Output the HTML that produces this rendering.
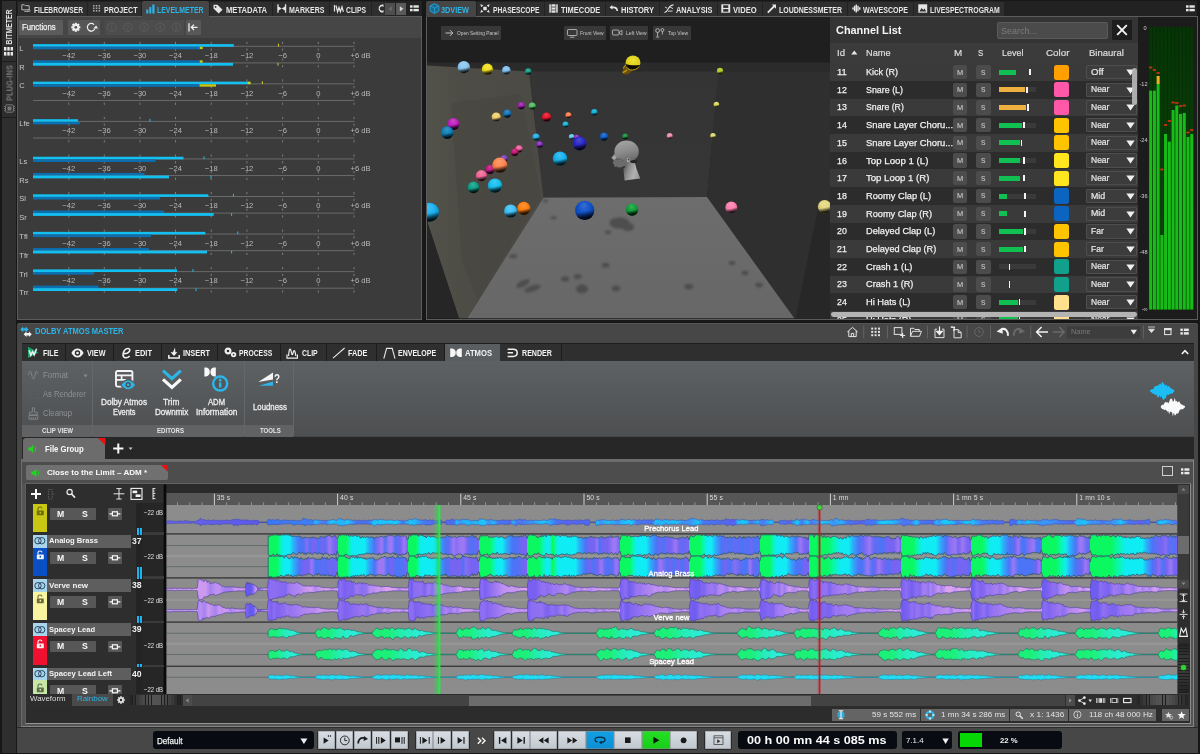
<!DOCTYPE html>
<html lang="en"><head><meta charset="utf-8"><title>WaveLab - Dolby Atmos Master</title>
<style>
html,body{margin:0;padding:0;background:#171717;}
body{width:1200px;height:754px;position:relative;overflow:hidden;font-family:"Liberation Sans",sans-serif;}
div,svg{position:absolute;}
svg{overflow:visible;display:block;}
.t{white-space:nowrap;}
svg text{font-family:"Liberation Sans",sans-serif;}
.g{will-change:transform;}
</style></head>
<body>
<div class="g" style="left:0;top:0;width:1200px;height:754px;overflow:hidden">
<!-- part_head -->
<div style="left:0px;top:0px;width:1200px;height:754px;background:#171717;"></div>
<div style="left:2.4px;top:1px;width:14px;height:752px;background:#2e2e2e;"></div>
<div style="left:2px;top:61px;width:14px;height:1px;background:#1c1c1c;"></div>
<div style="left:2px;top:117px;width:14px;height:1px;background:#1c1c1c;"></div>
<div class="t g" style="left:-13.7px;top:20.5px;width:46px;height:12px;line-height:12px;font-size:9px;font-weight:bold;color:#e0e0e0;transform:rotate(-90deg) scaleX(0.761);">BITMETER</div>
<div class="t g" style="left:-12.2px;top:77px;width:43px;height:12px;line-height:12px;font-size:9px;font-weight:bold;color:#777;transform:rotate(-90deg) scaleX(0.837);">PLUG-INS</div>
<svg style="left:4.2px;top:47px;" width="10" height="9" viewBox="0 0 10 9"><rect x="0.0" y="0" width="2.4" height="3.6" fill="#e8e8e8"/><rect x="3.3" y="0" width="2.4" height="3.6" fill="#e8e8e8"/><rect x="6.6" y="0" width="2.4" height="3.6" fill="#e8e8e8"/><rect x="0.0" y="5" width="2.4" height="3.6" fill="#e8e8e8"/><rect x="3.3" y="5" width="2.4" height="3.6" fill="#e8e8e8"/><rect x="6.6" y="5" width="2.4" height="3.6" fill="#e8e8e8"/></svg>
<svg style="left:3.5px;top:104px;" width="11" height="9" viewBox="0 0 11 9"><rect x="1.5" y="0.8" width="8" height="7.4" rx="1.5" fill="none" stroke="#777" stroke-width="1"/><rect x="3.5" y="2.5" width="4" height="4" fill="#777"/><path d="M0 2.5h1.5M0 4.5h1.5M0 6.5h1.5M9.5 2.5H11M9.5 4.5H11M9.5 6.5H11" stroke="#777" stroke-width="0.8"/></svg>
<!-- part_tl -->
<div style="left:17px;top:1px;width:405px;height:15px;background:#222;"></div>
<div style="left:17px;top:16px;width:405px;height:304px;background:#3b3b3b;border:1px solid #5c5c5c;box-sizing:border-box;"></div>
<div style="left:18px;top:17px;width:403px;height:20.5px;background:#464646;"></div>
<div style="left:18px;top:2px;width:69px;height:13.5px;background:#2e2e2e;"></div><svg style="left:20.5px;top:4.4px;" width="10" height="10" viewBox="0 0 10 10"><path d="M0.8 5.8V0.8h2.6l0.8 0.9h4v4.1z" fill="none" stroke="#b4b4b4" stroke-width="1"/><path d="M3.2 7.4h4" stroke="#b4b4b4" stroke-width="0.9"/><circle cx="8" cy="6.6" r="1.1" fill="none" stroke="#b4b4b4" stroke-width="0.8"/></svg><div class="t" style="left:33.5px;top:4.5px;height:11px;line-height:11px;font-size:9px;color:#e6e6e6;font-weight:bold;transform:scaleX(0.737);transform-origin:0 50%;">FILEBROWSER</div>
<div style="left:88px;top:2px;width:52.5px;height:13.5px;background:#2e2e2e;"></div><svg style="left:92.6px;top:5.4px;" width="9" height="9" viewBox="0 0 9 9"><rect x="0.0" y="0.0" width="1.5" height="1.6" fill="#a8a8a8"/><rect x="2.8" y="0.0" width="1.5" height="1.6" fill="#a8a8a8"/><rect x="5.6" y="0.0" width="1.5" height="1.6" fill="#a8a8a8"/><rect x="0.0" y="2.5" width="1.5" height="1.6" fill="#a8a8a8"/><rect x="2.8" y="2.5" width="1.5" height="1.6" fill="#a8a8a8"/><rect x="5.6" y="2.5" width="1.5" height="1.6" fill="#a8a8a8"/><rect x="0.0" y="5.0" width="1.5" height="1.6" fill="#a8a8a8"/><rect x="2.8" y="5.0" width="1.5" height="1.6" fill="#a8a8a8"/><rect x="5.6" y="5.0" width="1.5" height="1.6" fill="#a8a8a8"/></svg><div class="t" style="left:103.5px;top:4.5px;height:11px;line-height:11px;font-size:9px;color:#e6e6e6;font-weight:bold;transform:scaleX(0.788);transform-origin:0 50%;">PROJECT</div>
<div style="left:141.5px;top:1px;width:67.5px;height:16px;background:#464646;border-radius:2px 2px 0 0;"></div><svg style="left:146px;top:3.5px;" width="9" height="10" viewBox="0 0 9 10"><rect x="0.3" y="5.5" width="2" height="4" fill="#2cb5e8"/><rect x="3.3" y="3" width="2" height="6.5" fill="#2cb5e8"/><rect x="6.3" y="0.5" width="2.2" height="9" fill="#2cb5e8"/></svg><div class="t" style="left:157.3px;top:4.5px;height:11px;line-height:11px;font-size:9px;color:#2cb5e8;font-weight:bold;transform:scaleX(0.769);transform-origin:0 50%;">LEVELMETER</div>
<div style="left:210px;top:2px;width:62px;height:13.5px;background:#2e2e2e;"></div><svg style="left:213px;top:3.5px;" width="10" height="10" viewBox="0 0 10 10"><path d="M0.5 0.8h4l5 5-3.8 3.8-5.2-5z" fill="#e6e6e6"/><circle cx="2.6" cy="2.9" r="0.9" fill="#2e2e2e"/></svg><div class="t" style="left:225.5px;top:4.5px;height:11px;line-height:11px;font-size:9px;color:#e6e6e6;font-weight:bold;transform:scaleX(0.846);transform-origin:0 50%;">METADATA</div>
<div style="left:273px;top:2px;width:56px;height:13.5px;background:#2e2e2e;"></div><svg style="left:277px;top:4px;" width="9.5" height="9" viewBox="0 0 9.5 9"><path d="M0.3 0.3v8.4h1.3V6.6L4.75 4.5 7.9 6.6v2.1h1.3V0.3H7.9v2.1L4.75 4.5 1.6 2.4V0.3z" fill="#e6e6e6"/></svg><div class="t" style="left:288.7px;top:4.5px;height:11px;line-height:11px;font-size:9px;color:#e6e6e6;font-weight:bold;transform:scaleX(0.780);transform-origin:0 50%;">MARKERS</div>
<div style="left:330px;top:2px;width:41px;height:13.5px;background:#2e2e2e;"></div><svg style="left:333.5px;top:4px;" width="10" height="9" viewBox="0 0 10 9"><path d="M0.5 1v6.5M2 1.5l1.6 6.3L5 3.5l1.4 4.3L8 2.8l1.4 5" fill="none" stroke="#e6e6e6" stroke-width="1.2"/></svg><div class="t" style="left:345.7px;top:4.5px;height:11px;line-height:11px;font-size:9px;color:#e6e6e6;font-weight:bold;transform:scaleX(0.755);transform-origin:0 50%;">CLIPS</div>
<div style="left:372px;top:2px;width:14px;height:13.5px;background:#2e2e2e;"></div>
<svg style="left:376px;top:4px;" width="8" height="9" viewBox="0 0 8 9"><path d="M7.5 0.6A4 4 0 1 0 7.5 8.4V6A2.2 2.2 0 1 1 7.5 3z" fill="#e6e6e6"/></svg>
<div style="left:384.5px;top:3px;width:10.5px;height:11.5px;background:#4e4e4e;"></div>
<div style="left:395.5px;top:3px;width:10.5px;height:11.5px;background:#5a5a5a;"></div>
<svg style="left:384.5px;top:3px;" width="21.5" height="11.5" viewBox="0 0 21.5 11.5"><path d="M6.8 3.2v5.2L3.4 5.8z" fill="#6a6a6a"/><path d="M14.8 3.2v5.2l3.6-2.6z" fill="#d8d8d8"/></svg>
<svg style="left:410px;top:5px;" width="9" height="7" viewBox="0 0 9 7"><rect x="0" y="0.3" width="2.6" height="2.4" fill="#e6e6e6"/><rect x="3.4" y="0.3" width="5.4" height="2.4" fill="#e6e6e6"/><rect x="0" y="3.9" width="2.6" height="2.4" fill="#e6e6e6"/><rect x="3.4" y="3.9" width="5.4" height="2.4" fill="#e6e6e6"/></svg>
<div style="left:19px;top:20px;width:43.5px;height:14.5px;background:#5b5b5b;border-radius:1px;"></div>
<div class="t" style="left:21.6px;top:21.8px;height:11px;line-height:11px;font-size:9px;color:#f0f0f0;transform:scaleX(0.861);transform-origin:0 50%;-webkit-text-stroke:0.25px #f0f0f0;">Functions</div>
<div style="left:67.5px;top:20px;width:32px;height:14.5px;background:#565656;border-radius:1px;"></div>
<svg style="left:67.5px;top:20px;" width="32" height="14.5" viewBox="0 0 32 14.5"><g transform="translate(7.8,7.3) scale(1.08)"><rect x="-1" y="-4.2" width="2" height="8.4" fill="#f0f0f0" transform="rotate(0)"/><rect x="-1" y="-4.2" width="2" height="8.4" fill="#f0f0f0" transform="rotate(45)"/><rect x="-1" y="-4.2" width="2" height="8.4" fill="#f0f0f0" transform="rotate(90)"/><rect x="-1" y="-4.2" width="2" height="8.4" fill="#f0f0f0" transform="rotate(135)"/><circle r="3" fill="#f0f0f0"/><circle r="1.3" fill="#565656"/></g><g transform="translate(23.2,7.3) scale(1.1)"><path d="M2.6 -2.4A3.5 3.5 0 1 0 3.3 1.2" fill="none" stroke="#f0f0f0" stroke-width="1.1"/><path d="M1.2 -0.6h4.2v-0.2L3.9 -3.2z" fill="#f0f0f0" transform="translate(0.6,1.6)"/></g></svg>
<div style="left:105px;top:20px;width:79px;height:14.5px;background:#4c4c4c;border-radius:1px;"></div>
<svg class="g" style="left:105px;top:20px;" width="79" height="14.5" viewBox="0 0 79 14.5"><circle cx="6.799999999999997" cy="7.3" r="4.3" fill="none" stroke="#5e5e5e" stroke-width="0.9"/><text x="6.799999999999997" y="9.6" font-size="6.5" fill="#5e5e5e" text-anchor="middle" font-family="Liberation Sans, sans-serif">1</text><circle cx="22.900000000000006" cy="7.3" r="4.3" fill="none" stroke="#5e5e5e" stroke-width="0.9"/><text x="22.900000000000006" y="9.6" font-size="6.5" fill="#5e5e5e" text-anchor="middle" font-family="Liberation Sans, sans-serif">2</text><circle cx="39.099999999999994" cy="7.3" r="4.3" fill="none" stroke="#5e5e5e" stroke-width="0.9"/><text x="39.099999999999994" y="9.6" font-size="6.5" fill="#5e5e5e" text-anchor="middle" font-family="Liberation Sans, sans-serif">3</text><circle cx="55.19999999999999" cy="7.3" r="4.3" fill="none" stroke="#5e5e5e" stroke-width="0.9"/><text x="55.19999999999999" y="9.6" font-size="6.5" fill="#5e5e5e" text-anchor="middle" font-family="Liberation Sans, sans-serif">4</text><circle cx="71.4" cy="7.3" r="4.3" fill="none" stroke="#5e5e5e" stroke-width="0.9"/><text x="71.4" y="9.6" font-size="6.5" fill="#5e5e5e" text-anchor="middle" font-family="Liberation Sans, sans-serif">5</text></svg>
<div style="left:186px;top:20px;width:14.5px;height:14.5px;background:#585858;border-radius:1px;"></div>
<svg style="left:186px;top:20px;" width="14.5" height="14.5" viewBox="0 0 14.5 14.5"><path d="M3 3.2v8.2" stroke="#f0f0f0" stroke-width="1.3"/><path d="M11.5 7.3H5.6M8 4.6L5.3 7.3 8 10" stroke="#f0f0f0" stroke-width="1.3" fill="none"/></svg>
<svg class="g" style="left:0;top:0" width="422" height="319" viewBox="0 0 422 319" font-family="Liberation Sans, sans-serif"><rect x="33" y="45.8" width="321.5" height="1" fill="#6a6a6a"/><rect x="68.3" y="41.8" width="1" height="2.2" fill="#7c7c7c"/><rect x="68.3" y="48.5" width="1" height="2.2" fill="#7c7c7c"/><rect x="103.8" y="41.8" width="1" height="2.2" fill="#7c7c7c"/><rect x="103.8" y="48.5" width="1" height="2.2" fill="#7c7c7c"/><rect x="139.4" y="41.8" width="1" height="2.2" fill="#7c7c7c"/><rect x="139.4" y="48.5" width="1" height="2.2" fill="#7c7c7c"/><rect x="175" y="41.8" width="1" height="2.2" fill="#7c7c7c"/><rect x="175" y="48.5" width="1" height="2.2" fill="#7c7c7c"/><rect x="210.7" y="41.8" width="1" height="2.2" fill="#7c7c7c"/><rect x="210.7" y="48.5" width="1" height="2.2" fill="#7c7c7c"/><rect x="246.4" y="41.8" width="1" height="2.2" fill="#7c7c7c"/><rect x="246.4" y="48.5" width="1" height="2.2" fill="#7c7c7c"/><rect x="282.1" y="41.8" width="1" height="2.2" fill="#7c7c7c"/><rect x="282.1" y="48.5" width="1" height="2.2" fill="#7c7c7c"/><rect x="317.8" y="41.8" width="1" height="2.2" fill="#7c7c7c"/><rect x="317.8" y="48.5" width="1" height="2.2" fill="#7c7c7c"/><rect x="353.5" y="41.8" width="1" height="2.2" fill="#7c7c7c"/><rect x="353.5" y="48.5" width="1" height="2.2" fill="#7c7c7c"/><text x="68.8" y="58.1" font-size="7.6" fill="#b8b8b8" text-anchor="middle">−42</text><text x="104.3" y="58.1" font-size="7.6" fill="#b8b8b8" text-anchor="middle">−36</text><text x="139.9" y="58.1" font-size="7.6" fill="#b8b8b8" text-anchor="middle">−30</text><text x="175.5" y="58.1" font-size="7.6" fill="#b8b8b8" text-anchor="middle">−24</text><text x="211.2" y="58.1" font-size="7.6" fill="#b8b8b8" text-anchor="middle">−18</text><text x="246.9" y="58.1" font-size="7.6" fill="#b8b8b8" text-anchor="middle">−12</text><text x="282.6" y="58.1" font-size="7.6" fill="#b8b8b8" text-anchor="middle">−6</text><text x="318.3" y="58.1" font-size="7.6" fill="#b8b8b8" text-anchor="middle">0</text><text x="350.5" y="58.1" font-size="7.6" fill="#b8b8b8">+6 dB</text><rect x="33" y="62.4" width="321.5" height="1" fill="#6a6a6a"/><rect x="68.3" y="58.4" width="1" height="2.2" fill="#7c7c7c"/><rect x="68.3" y="65.1" width="1" height="2.2" fill="#7c7c7c"/><rect x="103.8" y="58.4" width="1" height="2.2" fill="#7c7c7c"/><rect x="103.8" y="65.1" width="1" height="2.2" fill="#7c7c7c"/><rect x="139.4" y="58.4" width="1" height="2.2" fill="#7c7c7c"/><rect x="139.4" y="65.1" width="1" height="2.2" fill="#7c7c7c"/><rect x="175" y="58.4" width="1" height="2.2" fill="#7c7c7c"/><rect x="175" y="65.1" width="1" height="2.2" fill="#7c7c7c"/><rect x="210.7" y="58.4" width="1" height="2.2" fill="#7c7c7c"/><rect x="210.7" y="65.1" width="1" height="2.2" fill="#7c7c7c"/><rect x="246.4" y="58.4" width="1" height="2.2" fill="#7c7c7c"/><rect x="246.4" y="65.1" width="1" height="2.2" fill="#7c7c7c"/><rect x="282.1" y="58.4" width="1" height="2.2" fill="#7c7c7c"/><rect x="282.1" y="65.1" width="1" height="2.2" fill="#7c7c7c"/><rect x="317.8" y="58.4" width="1" height="2.2" fill="#7c7c7c"/><rect x="317.8" y="65.1" width="1" height="2.2" fill="#7c7c7c"/><rect x="353.5" y="58.4" width="1" height="2.2" fill="#7c7c7c"/><rect x="353.5" y="65.1" width="1" height="2.2" fill="#7c7c7c"/><rect x="33" y="44.1" width="200.8" height="2.6" fill="#12c0f2"/><rect x="33" y="46.7" width="166.7" height="2.6" fill="#0b6fb0"/><rect x="199.7" y="46.7" width="3" height="2.4" fill="#c8c814"/><rect x="278" y="43.7" width="1" height="2.8" fill="#d8c820"/><rect x="33" y="60.3" width="166.7" height="2.6" fill="#0b6fb0"/><rect x="33" y="62.9" width="200" height="2.8" fill="#12c0f2"/><rect x="199.7" y="60.3" width="3" height="2.4" fill="#c8c814"/><rect x="277.5" y="62.9" width="1" height="2.8" fill="#d8c820"/><rect x="33" y="83.35" width="321.5" height="1" fill="#6a6a6a"/><rect x="68.3" y="79.35" width="1" height="2.2" fill="#7c7c7c"/><rect x="68.3" y="86.05" width="1" height="2.2" fill="#7c7c7c"/><rect x="103.8" y="79.35" width="1" height="2.2" fill="#7c7c7c"/><rect x="103.8" y="86.05" width="1" height="2.2" fill="#7c7c7c"/><rect x="139.4" y="79.35" width="1" height="2.2" fill="#7c7c7c"/><rect x="139.4" y="86.05" width="1" height="2.2" fill="#7c7c7c"/><rect x="175" y="79.35" width="1" height="2.2" fill="#7c7c7c"/><rect x="175" y="86.05" width="1" height="2.2" fill="#7c7c7c"/><rect x="210.7" y="79.35" width="1" height="2.2" fill="#7c7c7c"/><rect x="210.7" y="86.05" width="1" height="2.2" fill="#7c7c7c"/><rect x="246.4" y="79.35" width="1" height="2.2" fill="#7c7c7c"/><rect x="246.4" y="86.05" width="1" height="2.2" fill="#7c7c7c"/><rect x="282.1" y="79.35" width="1" height="2.2" fill="#7c7c7c"/><rect x="282.1" y="86.05" width="1" height="2.2" fill="#7c7c7c"/><rect x="317.8" y="79.35" width="1" height="2.2" fill="#7c7c7c"/><rect x="317.8" y="86.05" width="1" height="2.2" fill="#7c7c7c"/><rect x="353.5" y="79.35" width="1" height="2.2" fill="#7c7c7c"/><rect x="353.5" y="86.05" width="1" height="2.2" fill="#7c7c7c"/><text x="68.8" y="95.65" font-size="7.6" fill="#b8b8b8" text-anchor="middle">−42</text><text x="104.3" y="95.65" font-size="7.6" fill="#b8b8b8" text-anchor="middle">−36</text><text x="139.9" y="95.65" font-size="7.6" fill="#b8b8b8" text-anchor="middle">−30</text><text x="175.5" y="95.65" font-size="7.6" fill="#b8b8b8" text-anchor="middle">−24</text><text x="211.2" y="95.65" font-size="7.6" fill="#b8b8b8" text-anchor="middle">−18</text><text x="246.9" y="95.65" font-size="7.6" fill="#b8b8b8" text-anchor="middle">−12</text><text x="282.6" y="95.65" font-size="7.6" fill="#b8b8b8" text-anchor="middle">−6</text><text x="318.3" y="95.65" font-size="7.6" fill="#b8b8b8" text-anchor="middle">0</text><text x="350.5" y="95.65" font-size="7.6" fill="#b8b8b8">+6 dB</text><rect x="33" y="99.95" width="321.5" height="1" fill="#6a6a6a"/><rect x="68.3" y="95.95" width="1" height="2.2" fill="#7c7c7c"/><rect x="68.3" y="102.65" width="1" height="2.2" fill="#7c7c7c"/><rect x="103.8" y="95.95" width="1" height="2.2" fill="#7c7c7c"/><rect x="103.8" y="102.65" width="1" height="2.2" fill="#7c7c7c"/><rect x="139.4" y="95.95" width="1" height="2.2" fill="#7c7c7c"/><rect x="139.4" y="102.65" width="1" height="2.2" fill="#7c7c7c"/><rect x="175" y="95.95" width="1" height="2.2" fill="#7c7c7c"/><rect x="175" y="102.65" width="1" height="2.2" fill="#7c7c7c"/><rect x="210.7" y="95.95" width="1" height="2.2" fill="#7c7c7c"/><rect x="210.7" y="102.65" width="1" height="2.2" fill="#7c7c7c"/><rect x="246.4" y="95.95" width="1" height="2.2" fill="#7c7c7c"/><rect x="246.4" y="102.65" width="1" height="2.2" fill="#7c7c7c"/><rect x="282.1" y="95.95" width="1" height="2.2" fill="#7c7c7c"/><rect x="282.1" y="102.65" width="1" height="2.2" fill="#7c7c7c"/><rect x="317.8" y="95.95" width="1" height="2.2" fill="#7c7c7c"/><rect x="317.8" y="102.65" width="1" height="2.2" fill="#7c7c7c"/><rect x="353.5" y="95.95" width="1" height="2.2" fill="#7c7c7c"/><rect x="353.5" y="102.65" width="1" height="2.2" fill="#7c7c7c"/><rect x="33" y="81.65" width="214.4" height="2.6" fill="#12c0f2"/><rect x="33" y="84.25" width="166.5" height="2.6" fill="#0b6fb0"/><rect x="247.4" y="81.65" width="3.2" height="2.6" fill="#b4e020"/><rect x="199.5" y="84.25" width="16.5" height="2.4" fill="#c8c814"/><rect x="261.8" y="81.25" width="1" height="2.8" fill="#d8d820"/><rect x="33" y="120.9" width="321.5" height="1" fill="#6a6a6a"/><rect x="68.3" y="116.9" width="1" height="2.2" fill="#7c7c7c"/><rect x="68.3" y="123.6" width="1" height="2.2" fill="#7c7c7c"/><rect x="103.8" y="116.9" width="1" height="2.2" fill="#7c7c7c"/><rect x="103.8" y="123.6" width="1" height="2.2" fill="#7c7c7c"/><rect x="139.4" y="116.9" width="1" height="2.2" fill="#7c7c7c"/><rect x="139.4" y="123.6" width="1" height="2.2" fill="#7c7c7c"/><rect x="175" y="116.9" width="1" height="2.2" fill="#7c7c7c"/><rect x="175" y="123.6" width="1" height="2.2" fill="#7c7c7c"/><rect x="210.7" y="116.9" width="1" height="2.2" fill="#7c7c7c"/><rect x="210.7" y="123.6" width="1" height="2.2" fill="#7c7c7c"/><rect x="246.4" y="116.9" width="1" height="2.2" fill="#7c7c7c"/><rect x="246.4" y="123.6" width="1" height="2.2" fill="#7c7c7c"/><rect x="282.1" y="116.9" width="1" height="2.2" fill="#7c7c7c"/><rect x="282.1" y="123.6" width="1" height="2.2" fill="#7c7c7c"/><rect x="317.8" y="116.9" width="1" height="2.2" fill="#7c7c7c"/><rect x="317.8" y="123.6" width="1" height="2.2" fill="#7c7c7c"/><rect x="353.5" y="116.9" width="1" height="2.2" fill="#7c7c7c"/><rect x="353.5" y="123.6" width="1" height="2.2" fill="#7c7c7c"/><text x="68.8" y="133.2" font-size="7.6" fill="#b8b8b8" text-anchor="middle">−42</text><text x="104.3" y="133.2" font-size="7.6" fill="#b8b8b8" text-anchor="middle">−36</text><text x="139.9" y="133.2" font-size="7.6" fill="#b8b8b8" text-anchor="middle">−30</text><text x="175.5" y="133.2" font-size="7.6" fill="#b8b8b8" text-anchor="middle">−24</text><text x="211.2" y="133.2" font-size="7.6" fill="#b8b8b8" text-anchor="middle">−18</text><text x="246.9" y="133.2" font-size="7.6" fill="#b8b8b8" text-anchor="middle">−12</text><text x="282.6" y="133.2" font-size="7.6" fill="#b8b8b8" text-anchor="middle">−6</text><text x="318.3" y="133.2" font-size="7.6" fill="#b8b8b8" text-anchor="middle">0</text><text x="350.5" y="133.2" font-size="7.6" fill="#b8b8b8">+6 dB</text><rect x="33" y="137.5" width="321.5" height="1" fill="#6a6a6a"/><rect x="68.3" y="133.5" width="1" height="2.2" fill="#7c7c7c"/><rect x="68.3" y="140.2" width="1" height="2.2" fill="#7c7c7c"/><rect x="103.8" y="133.5" width="1" height="2.2" fill="#7c7c7c"/><rect x="103.8" y="140.2" width="1" height="2.2" fill="#7c7c7c"/><rect x="139.4" y="133.5" width="1" height="2.2" fill="#7c7c7c"/><rect x="139.4" y="140.2" width="1" height="2.2" fill="#7c7c7c"/><rect x="175" y="133.5" width="1" height="2.2" fill="#7c7c7c"/><rect x="175" y="140.2" width="1" height="2.2" fill="#7c7c7c"/><rect x="210.7" y="133.5" width="1" height="2.2" fill="#7c7c7c"/><rect x="210.7" y="140.2" width="1" height="2.2" fill="#7c7c7c"/><rect x="246.4" y="133.5" width="1" height="2.2" fill="#7c7c7c"/><rect x="246.4" y="140.2" width="1" height="2.2" fill="#7c7c7c"/><rect x="282.1" y="133.5" width="1" height="2.2" fill="#7c7c7c"/><rect x="282.1" y="140.2" width="1" height="2.2" fill="#7c7c7c"/><rect x="317.8" y="133.5" width="1" height="2.2" fill="#7c7c7c"/><rect x="317.8" y="140.2" width="1" height="2.2" fill="#7c7c7c"/><rect x="353.5" y="133.5" width="1" height="2.2" fill="#7c7c7c"/><rect x="353.5" y="140.2" width="1" height="2.2" fill="#7c7c7c"/><rect x="33" y="119.2" width="45" height="2.6" fill="#12c0f2"/><rect x="33" y="121.8" width="46.8" height="2.6" fill="#0b6fb0"/><rect x="149.5" y="118.8" width="1" height="2.8" fill="#12c0f2"/><rect x="33" y="158.45" width="321.5" height="1" fill="#6a6a6a"/><rect x="68.3" y="154.45" width="1" height="2.2" fill="#7c7c7c"/><rect x="68.3" y="161.15" width="1" height="2.2" fill="#7c7c7c"/><rect x="103.8" y="154.45" width="1" height="2.2" fill="#7c7c7c"/><rect x="103.8" y="161.15" width="1" height="2.2" fill="#7c7c7c"/><rect x="139.4" y="154.45" width="1" height="2.2" fill="#7c7c7c"/><rect x="139.4" y="161.15" width="1" height="2.2" fill="#7c7c7c"/><rect x="175" y="154.45" width="1" height="2.2" fill="#7c7c7c"/><rect x="175" y="161.15" width="1" height="2.2" fill="#7c7c7c"/><rect x="210.7" y="154.45" width="1" height="2.2" fill="#7c7c7c"/><rect x="210.7" y="161.15" width="1" height="2.2" fill="#7c7c7c"/><rect x="246.4" y="154.45" width="1" height="2.2" fill="#7c7c7c"/><rect x="246.4" y="161.15" width="1" height="2.2" fill="#7c7c7c"/><rect x="282.1" y="154.45" width="1" height="2.2" fill="#7c7c7c"/><rect x="282.1" y="161.15" width="1" height="2.2" fill="#7c7c7c"/><rect x="317.8" y="154.45" width="1" height="2.2" fill="#7c7c7c"/><rect x="317.8" y="161.15" width="1" height="2.2" fill="#7c7c7c"/><rect x="353.5" y="154.45" width="1" height="2.2" fill="#7c7c7c"/><rect x="353.5" y="161.15" width="1" height="2.2" fill="#7c7c7c"/><text x="68.8" y="170.75" font-size="7.6" fill="#b8b8b8" text-anchor="middle">−42</text><text x="104.3" y="170.75" font-size="7.6" fill="#b8b8b8" text-anchor="middle">−36</text><text x="139.9" y="170.75" font-size="7.6" fill="#b8b8b8" text-anchor="middle">−30</text><text x="175.5" y="170.75" font-size="7.6" fill="#b8b8b8" text-anchor="middle">−24</text><text x="211.2" y="170.75" font-size="7.6" fill="#b8b8b8" text-anchor="middle">−18</text><text x="246.9" y="170.75" font-size="7.6" fill="#b8b8b8" text-anchor="middle">−12</text><text x="282.6" y="170.75" font-size="7.6" fill="#b8b8b8" text-anchor="middle">−6</text><text x="318.3" y="170.75" font-size="7.6" fill="#b8b8b8" text-anchor="middle">0</text><text x="350.5" y="170.75" font-size="7.6" fill="#b8b8b8">+6 dB</text><rect x="33" y="175.05" width="321.5" height="1" fill="#6a6a6a"/><rect x="68.3" y="171.05" width="1" height="2.2" fill="#7c7c7c"/><rect x="68.3" y="177.75" width="1" height="2.2" fill="#7c7c7c"/><rect x="103.8" y="171.05" width="1" height="2.2" fill="#7c7c7c"/><rect x="103.8" y="177.75" width="1" height="2.2" fill="#7c7c7c"/><rect x="139.4" y="171.05" width="1" height="2.2" fill="#7c7c7c"/><rect x="139.4" y="177.75" width="1" height="2.2" fill="#7c7c7c"/><rect x="175" y="171.05" width="1" height="2.2" fill="#7c7c7c"/><rect x="175" y="177.75" width="1" height="2.2" fill="#7c7c7c"/><rect x="210.7" y="171.05" width="1" height="2.2" fill="#7c7c7c"/><rect x="210.7" y="177.75" width="1" height="2.2" fill="#7c7c7c"/><rect x="246.4" y="171.05" width="1" height="2.2" fill="#7c7c7c"/><rect x="246.4" y="177.75" width="1" height="2.2" fill="#7c7c7c"/><rect x="282.1" y="171.05" width="1" height="2.2" fill="#7c7c7c"/><rect x="282.1" y="177.75" width="1" height="2.2" fill="#7c7c7c"/><rect x="317.8" y="171.05" width="1" height="2.2" fill="#7c7c7c"/><rect x="317.8" y="177.75" width="1" height="2.2" fill="#7c7c7c"/><rect x="353.5" y="171.05" width="1" height="2.2" fill="#7c7c7c"/><rect x="353.5" y="177.75" width="1" height="2.2" fill="#7c7c7c"/><rect x="33" y="156.75" width="150.5" height="2.6" fill="#12c0f2"/><rect x="33" y="159.35" width="122.5" height="2.6" fill="#0b6fb0"/><rect x="203.5" y="156.35" width="1" height="2.8" fill="#12c0f2"/><rect x="33" y="172.95" width="111.5" height="2.6" fill="#0b6fb0"/><rect x="33" y="175.55" width="136" height="2.8" fill="#12c0f2"/><rect x="210.5" y="175.55" width="1" height="2.8" fill="#12c0f2"/><rect x="33" y="196" width="321.5" height="1" fill="#6a6a6a"/><rect x="68.3" y="192" width="1" height="2.2" fill="#7c7c7c"/><rect x="68.3" y="198.7" width="1" height="2.2" fill="#7c7c7c"/><rect x="103.8" y="192" width="1" height="2.2" fill="#7c7c7c"/><rect x="103.8" y="198.7" width="1" height="2.2" fill="#7c7c7c"/><rect x="139.4" y="192" width="1" height="2.2" fill="#7c7c7c"/><rect x="139.4" y="198.7" width="1" height="2.2" fill="#7c7c7c"/><rect x="175" y="192" width="1" height="2.2" fill="#7c7c7c"/><rect x="175" y="198.7" width="1" height="2.2" fill="#7c7c7c"/><rect x="210.7" y="192" width="1" height="2.2" fill="#7c7c7c"/><rect x="210.7" y="198.7" width="1" height="2.2" fill="#7c7c7c"/><rect x="246.4" y="192" width="1" height="2.2" fill="#7c7c7c"/><rect x="246.4" y="198.7" width="1" height="2.2" fill="#7c7c7c"/><rect x="282.1" y="192" width="1" height="2.2" fill="#7c7c7c"/><rect x="282.1" y="198.7" width="1" height="2.2" fill="#7c7c7c"/><rect x="317.8" y="192" width="1" height="2.2" fill="#7c7c7c"/><rect x="317.8" y="198.7" width="1" height="2.2" fill="#7c7c7c"/><rect x="353.5" y="192" width="1" height="2.2" fill="#7c7c7c"/><rect x="353.5" y="198.7" width="1" height="2.2" fill="#7c7c7c"/><text x="68.8" y="208.3" font-size="7.6" fill="#b8b8b8" text-anchor="middle">−42</text><text x="104.3" y="208.3" font-size="7.6" fill="#b8b8b8" text-anchor="middle">−36</text><text x="139.9" y="208.3" font-size="7.6" fill="#b8b8b8" text-anchor="middle">−30</text><text x="175.5" y="208.3" font-size="7.6" fill="#b8b8b8" text-anchor="middle">−24</text><text x="211.2" y="208.3" font-size="7.6" fill="#b8b8b8" text-anchor="middle">−18</text><text x="246.9" y="208.3" font-size="7.6" fill="#b8b8b8" text-anchor="middle">−12</text><text x="282.6" y="208.3" font-size="7.6" fill="#b8b8b8" text-anchor="middle">−6</text><text x="318.3" y="208.3" font-size="7.6" fill="#b8b8b8" text-anchor="middle">0</text><text x="350.5" y="208.3" font-size="7.6" fill="#b8b8b8">+6 dB</text><rect x="33" y="212.6" width="321.5" height="1" fill="#6a6a6a"/><rect x="68.3" y="208.6" width="1" height="2.2" fill="#7c7c7c"/><rect x="68.3" y="215.3" width="1" height="2.2" fill="#7c7c7c"/><rect x="103.8" y="208.6" width="1" height="2.2" fill="#7c7c7c"/><rect x="103.8" y="215.3" width="1" height="2.2" fill="#7c7c7c"/><rect x="139.4" y="208.6" width="1" height="2.2" fill="#7c7c7c"/><rect x="139.4" y="215.3" width="1" height="2.2" fill="#7c7c7c"/><rect x="175" y="208.6" width="1" height="2.2" fill="#7c7c7c"/><rect x="175" y="215.3" width="1" height="2.2" fill="#7c7c7c"/><rect x="210.7" y="208.6" width="1" height="2.2" fill="#7c7c7c"/><rect x="210.7" y="215.3" width="1" height="2.2" fill="#7c7c7c"/><rect x="246.4" y="208.6" width="1" height="2.2" fill="#7c7c7c"/><rect x="246.4" y="215.3" width="1" height="2.2" fill="#7c7c7c"/><rect x="282.1" y="208.6" width="1" height="2.2" fill="#7c7c7c"/><rect x="282.1" y="215.3" width="1" height="2.2" fill="#7c7c7c"/><rect x="317.8" y="208.6" width="1" height="2.2" fill="#7c7c7c"/><rect x="317.8" y="215.3" width="1" height="2.2" fill="#7c7c7c"/><rect x="353.5" y="208.6" width="1" height="2.2" fill="#7c7c7c"/><rect x="353.5" y="215.3" width="1" height="2.2" fill="#7c7c7c"/><rect x="33" y="194.3" width="175.4" height="2.6" fill="#12c0f2"/><rect x="33" y="196.9" width="127" height="2.6" fill="#0b6fb0"/><rect x="232.9" y="193.9" width="1" height="2.8" fill="#12c0f2"/><rect x="33" y="210.5" width="131" height="2.6" fill="#0b6fb0"/><rect x="33" y="213.1" width="180.7" height="2.8" fill="#12c0f2"/><rect x="231.1" y="213.1" width="1" height="2.8" fill="#12c0f2"/><rect x="33" y="233.55" width="321.5" height="1" fill="#6a6a6a"/><rect x="68.3" y="229.55" width="1" height="2.2" fill="#7c7c7c"/><rect x="68.3" y="236.25" width="1" height="2.2" fill="#7c7c7c"/><rect x="103.8" y="229.55" width="1" height="2.2" fill="#7c7c7c"/><rect x="103.8" y="236.25" width="1" height="2.2" fill="#7c7c7c"/><rect x="139.4" y="229.55" width="1" height="2.2" fill="#7c7c7c"/><rect x="139.4" y="236.25" width="1" height="2.2" fill="#7c7c7c"/><rect x="175" y="229.55" width="1" height="2.2" fill="#7c7c7c"/><rect x="175" y="236.25" width="1" height="2.2" fill="#7c7c7c"/><rect x="210.7" y="229.55" width="1" height="2.2" fill="#7c7c7c"/><rect x="210.7" y="236.25" width="1" height="2.2" fill="#7c7c7c"/><rect x="246.4" y="229.55" width="1" height="2.2" fill="#7c7c7c"/><rect x="246.4" y="236.25" width="1" height="2.2" fill="#7c7c7c"/><rect x="282.1" y="229.55" width="1" height="2.2" fill="#7c7c7c"/><rect x="282.1" y="236.25" width="1" height="2.2" fill="#7c7c7c"/><rect x="317.8" y="229.55" width="1" height="2.2" fill="#7c7c7c"/><rect x="317.8" y="236.25" width="1" height="2.2" fill="#7c7c7c"/><rect x="353.5" y="229.55" width="1" height="2.2" fill="#7c7c7c"/><rect x="353.5" y="236.25" width="1" height="2.2" fill="#7c7c7c"/><text x="68.8" y="245.85" font-size="7.6" fill="#b8b8b8" text-anchor="middle">−42</text><text x="104.3" y="245.85" font-size="7.6" fill="#b8b8b8" text-anchor="middle">−36</text><text x="139.9" y="245.85" font-size="7.6" fill="#b8b8b8" text-anchor="middle">−30</text><text x="175.5" y="245.85" font-size="7.6" fill="#b8b8b8" text-anchor="middle">−24</text><text x="211.2" y="245.85" font-size="7.6" fill="#b8b8b8" text-anchor="middle">−18</text><text x="246.9" y="245.85" font-size="7.6" fill="#b8b8b8" text-anchor="middle">−12</text><text x="282.6" y="245.85" font-size="7.6" fill="#b8b8b8" text-anchor="middle">−6</text><text x="318.3" y="245.85" font-size="7.6" fill="#b8b8b8" text-anchor="middle">0</text><text x="350.5" y="245.85" font-size="7.6" fill="#b8b8b8">+6 dB</text><rect x="33" y="250.15" width="321.5" height="1" fill="#6a6a6a"/><rect x="68.3" y="246.15" width="1" height="2.2" fill="#7c7c7c"/><rect x="68.3" y="252.85" width="1" height="2.2" fill="#7c7c7c"/><rect x="103.8" y="246.15" width="1" height="2.2" fill="#7c7c7c"/><rect x="103.8" y="252.85" width="1" height="2.2" fill="#7c7c7c"/><rect x="139.4" y="246.15" width="1" height="2.2" fill="#7c7c7c"/><rect x="139.4" y="252.85" width="1" height="2.2" fill="#7c7c7c"/><rect x="175" y="246.15" width="1" height="2.2" fill="#7c7c7c"/><rect x="175" y="252.85" width="1" height="2.2" fill="#7c7c7c"/><rect x="210.7" y="246.15" width="1" height="2.2" fill="#7c7c7c"/><rect x="210.7" y="252.85" width="1" height="2.2" fill="#7c7c7c"/><rect x="246.4" y="246.15" width="1" height="2.2" fill="#7c7c7c"/><rect x="246.4" y="252.85" width="1" height="2.2" fill="#7c7c7c"/><rect x="282.1" y="246.15" width="1" height="2.2" fill="#7c7c7c"/><rect x="282.1" y="252.85" width="1" height="2.2" fill="#7c7c7c"/><rect x="317.8" y="246.15" width="1" height="2.2" fill="#7c7c7c"/><rect x="317.8" y="252.85" width="1" height="2.2" fill="#7c7c7c"/><rect x="353.5" y="246.15" width="1" height="2.2" fill="#7c7c7c"/><rect x="353.5" y="252.85" width="1" height="2.2" fill="#7c7c7c"/><rect x="33" y="231.85" width="172.4" height="2.6" fill="#12c0f2"/><rect x="33" y="234.45" width="118" height="2.6" fill="#0b6fb0"/><rect x="237.3" y="231.45" width="1" height="2.8" fill="#12c0f2"/><rect x="33" y="248.05" width="116" height="2.6" fill="#0b6fb0"/><rect x="33" y="250.65" width="174" height="2.8" fill="#12c0f2"/><rect x="231.1" y="250.65" width="1" height="2.8" fill="#12c0f2"/><rect x="33" y="271.1" width="321.5" height="1" fill="#6a6a6a"/><rect x="68.3" y="267.1" width="1" height="2.2" fill="#7c7c7c"/><rect x="68.3" y="273.8" width="1" height="2.2" fill="#7c7c7c"/><rect x="103.8" y="267.1" width="1" height="2.2" fill="#7c7c7c"/><rect x="103.8" y="273.8" width="1" height="2.2" fill="#7c7c7c"/><rect x="139.4" y="267.1" width="1" height="2.2" fill="#7c7c7c"/><rect x="139.4" y="273.8" width="1" height="2.2" fill="#7c7c7c"/><rect x="175" y="267.1" width="1" height="2.2" fill="#7c7c7c"/><rect x="175" y="273.8" width="1" height="2.2" fill="#7c7c7c"/><rect x="210.7" y="267.1" width="1" height="2.2" fill="#7c7c7c"/><rect x="210.7" y="273.8" width="1" height="2.2" fill="#7c7c7c"/><rect x="246.4" y="267.1" width="1" height="2.2" fill="#7c7c7c"/><rect x="246.4" y="273.8" width="1" height="2.2" fill="#7c7c7c"/><rect x="282.1" y="267.1" width="1" height="2.2" fill="#7c7c7c"/><rect x="282.1" y="273.8" width="1" height="2.2" fill="#7c7c7c"/><rect x="317.8" y="267.1" width="1" height="2.2" fill="#7c7c7c"/><rect x="317.8" y="273.8" width="1" height="2.2" fill="#7c7c7c"/><rect x="353.5" y="267.1" width="1" height="2.2" fill="#7c7c7c"/><rect x="353.5" y="273.8" width="1" height="2.2" fill="#7c7c7c"/><text x="68.8" y="283.4" font-size="7.6" fill="#b8b8b8" text-anchor="middle">−42</text><text x="104.3" y="283.4" font-size="7.6" fill="#b8b8b8" text-anchor="middle">−36</text><text x="139.9" y="283.4" font-size="7.6" fill="#b8b8b8" text-anchor="middle">−30</text><text x="175.5" y="283.4" font-size="7.6" fill="#b8b8b8" text-anchor="middle">−24</text><text x="211.2" y="283.4" font-size="7.6" fill="#b8b8b8" text-anchor="middle">−18</text><text x="246.9" y="283.4" font-size="7.6" fill="#b8b8b8" text-anchor="middle">−12</text><text x="282.6" y="283.4" font-size="7.6" fill="#b8b8b8" text-anchor="middle">−6</text><text x="318.3" y="283.4" font-size="7.6" fill="#b8b8b8" text-anchor="middle">0</text><text x="350.5" y="283.4" font-size="7.6" fill="#b8b8b8">+6 dB</text><rect x="33" y="287.7" width="321.5" height="1" fill="#6a6a6a"/><rect x="68.3" y="283.7" width="1" height="2.2" fill="#7c7c7c"/><rect x="68.3" y="290.4" width="1" height="2.2" fill="#7c7c7c"/><rect x="103.8" y="283.7" width="1" height="2.2" fill="#7c7c7c"/><rect x="103.8" y="290.4" width="1" height="2.2" fill="#7c7c7c"/><rect x="139.4" y="283.7" width="1" height="2.2" fill="#7c7c7c"/><rect x="139.4" y="290.4" width="1" height="2.2" fill="#7c7c7c"/><rect x="175" y="283.7" width="1" height="2.2" fill="#7c7c7c"/><rect x="175" y="290.4" width="1" height="2.2" fill="#7c7c7c"/><rect x="210.7" y="283.7" width="1" height="2.2" fill="#7c7c7c"/><rect x="210.7" y="290.4" width="1" height="2.2" fill="#7c7c7c"/><rect x="246.4" y="283.7" width="1" height="2.2" fill="#7c7c7c"/><rect x="246.4" y="290.4" width="1" height="2.2" fill="#7c7c7c"/><rect x="282.1" y="283.7" width="1" height="2.2" fill="#7c7c7c"/><rect x="282.1" y="290.4" width="1" height="2.2" fill="#7c7c7c"/><rect x="317.8" y="283.7" width="1" height="2.2" fill="#7c7c7c"/><rect x="317.8" y="290.4" width="1" height="2.2" fill="#7c7c7c"/><rect x="353.5" y="283.7" width="1" height="2.2" fill="#7c7c7c"/><rect x="353.5" y="290.4" width="1" height="2.2" fill="#7c7c7c"/><rect x="33" y="269.4" width="144" height="2.6" fill="#12c0f2"/><rect x="33" y="272" width="61" height="2.6" fill="#0b6fb0"/><rect x="192.5" y="269" width="1" height="2.8" fill="#12c0f2"/><rect x="33" y="285.6" width="65.5" height="2.6" fill="#0b6fb0"/><rect x="33" y="288.2" width="144.3" height="2.8" fill="#12c0f2"/><rect x="195.5" y="288.2" width="1" height="2.8" fill="#12c0f2"/><text x="19.3" y="50.6" font-size="7.5" fill="#c8c8c8">L</text><text x="19.3" y="70.4" font-size="7.5" fill="#c8c8c8">R</text><text x="19.3" y="88.4" font-size="7.5" fill="#c8c8c8">C</text><text x="19.3" y="126.1" font-size="7.5" fill="#c8c8c8">Lfe</text><text x="19.3" y="163.6" font-size="7.5" fill="#c8c8c8">Ls</text><text x="19.3" y="182.6" font-size="7.5" fill="#c8c8c8">Rs</text><text x="19.3" y="201.4" font-size="7.5" fill="#c8c8c8">Sl</text><text x="19.3" y="220.2" font-size="7.5" fill="#c8c8c8">Sr</text><text x="19.3" y="239" font-size="7.5" fill="#c8c8c8">Tfl</text><text x="19.3" y="257.8" font-size="7.5" fill="#c8c8c8">Tfr</text><text x="19.3" y="276.6" font-size="7.5" fill="#c8c8c8">Trl</text><text x="19.3" y="295.2" font-size="7.5" fill="#c8c8c8">Trr</text></svg>
<!-- part_tr -->
<div style="left:426px;top:1px;width:771px;height:15px;background:#222;"></div>
<div style="left:425.5px;top:16px;width:772px;height:304px;background:#1f1f1f;border:1px solid #5c5c5c;box-sizing:border-box;"></div>
<div style="left:425.5px;top:1px;width:50px;height:16px;background:#464646;border-radius:2px 2px 0 0;"></div><svg style="left:429px;top:3.2px;" width="11" height="11" viewBox="0 0 11 11"><path d="M5.5 0.6l4.4 2.3v5.2L5.5 10.4 1.1 8.1V2.9z" fill="#1a6a92" stroke="#2a9ccc" stroke-width="1"/><path d="M1.3 3l4.2 2.1L9.7 3M5.5 5.1v5" fill="none" stroke="#2a9ccc" stroke-width="0.9"/></svg><div class="t" style="left:441px;top:4.5px;height:11px;line-height:11px;font-size:9px;color:#2cb5e8;font-weight:bold;transform:scaleX(0.811);transform-origin:0 50%;">3DVIEW</div>
<div style="left:476.5px;top:2px;width:67.5px;height:13.5px;background:#2e2e2e;"></div><svg style="left:479.5px;top:4px;" width="10" height="9" viewBox="0 0 10 9"><path d="M0.3 0.3l3 1-2 2zM9.7 0.3l-3 1 2 2zM0.3 8.7l3-1-2-2zM9.7 8.7l-3-1 2-2z" fill="#e6e6e6"/><rect x="3.3" y="2.8" width="3.4" height="3.4" fill="#e6e6e6"/></svg><div class="t" style="left:492.5px;top:4.5px;height:11px;line-height:11px;font-size:9px;color:#e6e6e6;font-weight:bold;transform:scaleX(0.744);transform-origin:0 50%;">PHASESCOPE</div>
<div style="left:545px;top:2px;width:59.5px;height:13.5px;background:#2e2e2e;"></div><svg style="left:549px;top:4px;" width="9" height="9" viewBox="0 0 9 9"><rect x="0.3" y="0.3" width="8.4" height="8.4" fill="#e6e6e6"/><path d="M2.2 0v9M6.8 0v9" stroke="#2e2e2e" stroke-width="0.7"/><path d="M2.6 3h3.8M2.6 6h3.8" stroke="#2e2e2e" stroke-width="0.8"/></svg><div class="t" style="left:560.8px;top:4.5px;height:11px;line-height:11px;font-size:9px;color:#e6e6e6;font-weight:bold;transform:scaleX(0.827);transform-origin:0 50%;">TIMECODE</div>
<div style="left:605.5px;top:2px;width:53.5px;height:13.5px;background:#2e2e2e;"></div><svg style="left:609px;top:4px;" width="10" height="9" viewBox="0 0 10 9"><path d="M3.2 1L0.5 3.4l3 2.2V4.2c2.2-0.3 3.8 0.4 4 2.8h1.6C9 3.6 6.6 2.2 3.4 2.6z" fill="#e6e6e6"/></svg><div class="t" style="left:621.2px;top:4.5px;height:11px;line-height:11px;font-size:9px;color:#e6e6e6;font-weight:bold;transform:scaleX(0.835);transform-origin:0 50%;">HISTORY</div>
<div style="left:660px;top:2px;width:56.5px;height:13.5px;background:#2e2e2e;"></div><svg style="left:664px;top:4px;" width="10" height="9" viewBox="0 0 10 9"><path d="M0.5 8.5c1.5-0.3 2.6-1.6 3.6-3.6S6.3 1.5 9.5 0.8" fill="none" stroke="#e6e6e6" stroke-width="1.1"/><path d="M1 3l2 1.2M4 7.2L8.6 7M6 3l3 1.6" stroke="#e6e6e6" stroke-width="0.9"/></svg><div class="t" style="left:675.6px;top:4.5px;height:11px;line-height:11px;font-size:9px;color:#e6e6e6;font-weight:bold;transform:scaleX(0.817);transform-origin:0 50%;">ANALYSIS</div>
<div style="left:717.5px;top:2px;width:44px;height:13.5px;background:#2e2e2e;"></div><svg style="left:721px;top:4px;" width="9.5" height="9" viewBox="0 0 9.5 9"><rect x="0.3" y="0.3" width="8.9" height="8.4" fill="#e6e6e6"/><rect x="2.2" y="1.3" width="5.1" height="2.6" fill="#2e2e2e"/><rect x="2.2" y="5.1" width="5.1" height="2.6" fill="#2e2e2e"/></svg><div class="t" style="left:733.2px;top:4.5px;height:11px;line-height:11px;font-size:9px;color:#e6e6e6;font-weight:bold;transform:scaleX(0.843);transform-origin:0 50%;">VIDEO</div>
<div style="left:762.5px;top:2px;width:84.5px;height:13.5px;background:#2e2e2e;"></div><svg style="left:767px;top:4px;" width="9.5" height="9" viewBox="0 0 9.5 9"><path d="M0.8 8.6L7.4 2" stroke="#e6e6e6" stroke-width="1.8"/><path d="M4.8 0.6h4.2v4.2z" fill="#e6e6e6"/></svg><div class="t" style="left:778.8px;top:4.5px;height:11px;line-height:11px;font-size:9px;color:#e6e6e6;font-weight:bold;transform:scaleX(0.773);transform-origin:0 50%;">LOUDNESSMETER</div>
<div style="left:848px;top:2px;width:65px;height:13.5px;background:#2e2e2e;"></div><svg style="left:852px;top:4px;" width="9" height="9" viewBox="0 0 9 9"><path d="M1 3.6v1.8M2.6 1.8v5.4M4.3 0.4v8.2M6 1.8v5.4M7.7 3.2v2.6" stroke="#e6e6e6" stroke-width="1.4"/></svg><div class="t" style="left:863.2px;top:4.5px;height:11px;line-height:11px;font-size:9px;color:#e6e6e6;font-weight:bold;transform:scaleX(0.785);transform-origin:0 50%;">WAVESCOPE</div>
<div style="left:914px;top:2px;width:90px;height:13.5px;background:#2e2e2e;"></div><svg style="left:918px;top:4px;" width="9.5" height="9" viewBox="0 0 9.5 9"><rect x="0.3" y="0.3" width="8.9" height="8.4" fill="#e6e6e6"/><path d="M1.4 7.6l2.2-3.6 1.6 2 1.4-1.4 1.6 3z" fill="#2e2e2e"/></svg><div class="t" style="left:929.5px;top:4.5px;height:11px;line-height:11px;font-size:9px;color:#e6e6e6;font-weight:bold;transform:scaleX(0.766);transform-origin:0 50%;">LIVESPECTROGRAM</div>
<svg style="left:1186px;top:5px;" width="9" height="7" viewBox="0 0 9 7"><rect x="0" y="0.3" width="2.6" height="2.4" fill="#e6e6e6"/><rect x="3.4" y="0.3" width="5.4" height="2.4" fill="#e6e6e6"/><rect x="0" y="3.9" width="2.6" height="2.4" fill="#e6e6e6"/><rect x="3.4" y="3.9" width="5.4" height="2.4" fill="#e6e6e6"/></svg>
<svg style="left:0;top:0" width="1200" height="320" viewBox="0 0 1200 320"><defs><linearGradient id="flr" x1="0" y1="0" x2="0" y2="1"><stop offset="0" stop-color="#6d6d6d"/><stop offset="1" stop-color="#676767"/></linearGradient><linearGradient id="lw" x1="0" y1="0" x2="1" y2="0"><stop offset="0" stop-color="#53524a"/><stop offset="0.3" stop-color="#4d4c45"/><stop offset="1" stop-color="#4b4a44"/></linearGradient><linearGradient id="bw" x1="0" y1="0" x2="0" y2="1"><stop offset="0" stop-color="#343434"/><stop offset="1" stop-color="#363636"/></linearGradient><clipPath id="v3"><rect x="427" y="17" width="403" height="301.5"/></clipPath><filter id="bl" x="-50%" y="-50%" width="200%" height="200%"><feGaussianBlur stdDeviation="0.9"/></filter><linearGradient id="sd" x1="0.38" y1="0" x2="0.58" y2="1"><stop offset="0.56" stop-color="#000" stop-opacity="0"/><stop offset="0.74" stop-color="#000" stop-opacity="0.5"/><stop offset="0.86" stop-color="#000" stop-opacity="0.8"/><stop offset="1" stop-color="#000" stop-opacity="0.92"/></linearGradient><radialGradient id="s0" cx="0.5" cy="0.42" r="0.66" fx="0.46" fy="0.22"><stop offset="0" stop-color="#3b6fd1"/><stop offset="0.5" stop-color="#1050c8"/><stop offset="0.8" stop-color="#0c40a0"/><stop offset="1" stop-color="#07245a"/></radialGradient><radialGradient id="s1" cx="0.5" cy="0.42" r="0.66" fx="0.46" fy="0.22"><stop offset="0" stop-color="#3b7cd1"/><stop offset="0.5" stop-color="#1060c8"/><stop offset="0.8" stop-color="#0c4ca0"/><stop offset="1" stop-color="#072b5a"/></radialGradient><radialGradient id="s2" cx="0.5" cy="0.42" r="0.66" fx="0.46" fy="0.22"><stop offset="0" stop-color="#3b96c4"/><stop offset="0.5" stop-color="#1080b8"/><stop offset="0.8" stop-color="#0c6693"/><stop offset="1" stop-color="#073952"/></radialGradient><radialGradient id="s3" cx="0.5" cy="0.42" r="0.66" fx="0.46" fy="0.22"><stop offset="0" stop-color="#3bb15b"/><stop offset="0.5" stop-color="#10a038"/><stop offset="0.8" stop-color="#0c802c"/><stop offset="1" stop-color="#074819"/></radialGradient><radialGradient id="s4" cx="0.5" cy="0.42" r="0.66" fx="0.46" fy="0.22"><stop offset="0" stop-color="#3bb19d"/><stop offset="0.5" stop-color="#10a088"/><stop offset="0.8" stop-color="#0c806c"/><stop offset="1" stop-color="#07483d"/></radialGradient><radialGradient id="s5" cx="0.5" cy="0.42" r="0.66" fx="0.46" fy="0.22"><stop offset="0" stop-color="#3e90c4"/><stop offset="0.5" stop-color="#1478b8"/><stop offset="0.8" stop-color="#106093"/><stop offset="1" stop-color="#093652"/></radialGradient><radialGradient id="s6" cx="0.5" cy="0.42" r="0.66" fx="0.46" fy="0.22"><stop offset="0" stop-color="#41a362"/><stop offset="0.5" stop-color="#189040"/><stop offset="0.8" stop-color="#137333"/><stop offset="1" stop-color="#0a401c"/></radialGradient><radialGradient id="s7" cx="0.5" cy="0.42" r="0.66" fx="0.46" fy="0.22"><stop offset="0" stop-color="#41b19d"/><stop offset="0.5" stop-color="#18a088"/><stop offset="0.8" stop-color="#13806c"/><stop offset="1" stop-color="#0a483d"/></radialGradient><radialGradient id="s8" cx="0.5" cy="0.42" r="0.66" fx="0.46" fy="0.22"><stop offset="0" stop-color="#41bedf"/><stop offset="0.5" stop-color="#18b0d8"/><stop offset="0.8" stop-color="#138cac"/><stop offset="1" stop-color="#0a4f61"/></radialGradient><radialGradient id="s9" cx="0.5" cy="0.42" r="0.66" fx="0.46" fy="0.22"><stop offset="0" stop-color="#41bef2"/><stop offset="0.5" stop-color="#18b0f0"/><stop offset="0.8" stop-color="#138cc0"/><stop offset="1" stop-color="#0a4f6c"/></radialGradient><radialGradient id="s10" cx="0.5" cy="0.42" r="0.66" fx="0.46" fy="0.22"><stop offset="0" stop-color="#41c1f2"/><stop offset="0.5" stop-color="#18b4f0"/><stop offset="0.8" stop-color="#1390c0"/><stop offset="1" stop-color="#0a516c"/></radialGradient><radialGradient id="s11" cx="0.5" cy="0.42" r="0.66" fx="0.46" fy="0.22"><stop offset="0" stop-color="#41c4e5"/><stop offset="0.5" stop-color="#18b8e0"/><stop offset="0.8" stop-color="#1393b3"/><stop offset="1" stop-color="#0a5264"/></radialGradient><radialGradient id="s12" cx="0.5" cy="0.42" r="0.66" fx="0.46" fy="0.22"><stop offset="0" stop-color="#41cbf2"/><stop offset="0.5" stop-color="#18c0f0"/><stop offset="0.8" stop-color="#1399c0"/><stop offset="1" stop-color="#0a566c"/></radialGradient><radialGradient id="s13" cx="0.5" cy="0.42" r="0.66" fx="0.46" fy="0.22"><stop offset="0" stop-color="#4e4ed1"/><stop offset="0.5" stop-color="#2828c8"/><stop offset="0.8" stop-color="#2020a0"/><stop offset="1" stop-color="#12125a"/></radialGradient><radialGradient id="s14" cx="0.5" cy="0.42" r="0.66" fx="0.46" fy="0.22"><stop offset="0" stop-color="#4ebeec"/><stop offset="0.5" stop-color="#28b0e8"/><stop offset="0.8" stop-color="#208cb9"/><stop offset="1" stop-color="#124f68"/></radialGradient><radialGradient id="s15" cx="0.5" cy="0.42" r="0.66" fx="0.46" fy="0.22"><stop offset="0" stop-color="#62cbf9"/><stop offset="0.5" stop-color="#40c0f8"/><stop offset="0.8" stop-color="#3399c6"/><stop offset="1" stop-color="#1c566f"/></radialGradient><radialGradient id="s16" cx="0.5" cy="0.42" r="0.66" fx="0.46" fy="0.22"><stop offset="0" stop-color="#6fcb7c"/><stop offset="0.5" stop-color="#50c060"/><stop offset="0.8" stop-color="#40994c"/><stop offset="1" stop-color="#24562b"/></radialGradient><radialGradient id="s17" cx="0.5" cy="0.42" r="0.66" fx="0.46" fy="0.22"><stop offset="0" stop-color="#7cd1f2"/><stop offset="0.5" stop-color="#60c8f0"/><stop offset="0.8" stop-color="#4ca0c0"/><stop offset="1" stop-color="#2b5a6c"/></radialGradient><radialGradient id="s18" cx="0.5" cy="0.42" r="0.66" fx="0.46" fy="0.22"><stop offset="0" stop-color="#9662cb"/><stop offset="0.5" stop-color="#8040c0"/><stop offset="0.8" stop-color="#663399"/><stop offset="1" stop-color="#391c56"/></radialGradient><radialGradient id="s19" cx="0.5" cy="0.42" r="0.66" fx="0.46" fy="0.22"><stop offset="0" stop-color="#96cbf2"/><stop offset="0.5" stop-color="#80c0f0"/><stop offset="0.8" stop-color="#6699c0"/><stop offset="1" stop-color="#39566c"/></radialGradient><radialGradient id="s20" cx="0.5" cy="0.42" r="0.66" fx="0.46" fy="0.22"><stop offset="0" stop-color="#a0d1f2"/><stop offset="0.5" stop-color="#8cc8f0"/><stop offset="0.8" stop-color="#70a0c0"/><stop offset="1" stop-color="#3f5a6c"/></radialGradient><radialGradient id="s21" cx="0.5" cy="0.42" r="0.66" fx="0.46" fy="0.22"><stop offset="0" stop-color="#a355cb"/><stop offset="0.5" stop-color="#9030c0"/><stop offset="0.8" stop-color="#732699"/><stop offset="1" stop-color="#401556"/></radialGradient><radialGradient id="s22" cx="0.5" cy="0.42" r="0.66" fx="0.46" fy="0.22"><stop offset="0" stop-color="#a355d8"/><stop offset="0.5" stop-color="#9030d0"/><stop offset="0.8" stop-color="#7326a6"/><stop offset="1" stop-color="#40155d"/></radialGradient><radialGradient id="s23" cx="0.5" cy="0.42" r="0.66" fx="0.46" fy="0.22"><stop offset="0" stop-color="#b148be"/><stop offset="0.5" stop-color="#a020b0"/><stop offset="0.8" stop-color="#80198c"/><stop offset="1" stop-color="#480e4f"/></radialGradient><radialGradient id="s24" cx="0.5" cy="0.42" r="0.66" fx="0.46" fy="0.22"><stop offset="0" stop-color="#c1d14e"/><stop offset="0.5" stop-color="#b4c828"/><stop offset="0.8" stop-color="#90a020"/><stop offset="1" stop-color="#515a12"/></radialGradient><radialGradient id="s25" cx="0.5" cy="0.42" r="0.66" fx="0.46" fy="0.22"><stop offset="0" stop-color="#cb4189"/><stop offset="0.5" stop-color="#c01870"/><stop offset="0.8" stop-color="#991359"/><stop offset="1" stop-color="#560a32"/></radialGradient><radialGradient id="s26" cx="0.5" cy="0.42" r="0.66" fx="0.46" fy="0.22"><stop offset="0" stop-color="#cb4196"/><stop offset="0.5" stop-color="#c01880"/><stop offset="0.8" stop-color="#991366"/><stop offset="1" stop-color="#560a39"/></radialGradient><radialGradient id="s27" cx="0.5" cy="0.42" r="0.66" fx="0.46" fy="0.22"><stop offset="0" stop-color="#cb48cb"/><stop offset="0.5" stop-color="#c020c0"/><stop offset="0.8" stop-color="#991999"/><stop offset="1" stop-color="#560e56"/></radialGradient><radialGradient id="s28" cx="0.5" cy="0.42" r="0.66" fx="0.46" fy="0.22"><stop offset="0" stop-color="#e5df7c"/><stop offset="0.5" stop-color="#e0d860"/><stop offset="0.8" stop-color="#b3ac4c"/><stop offset="1" stop-color="#64612b"/></radialGradient><radialGradient id="s29" cx="0.5" cy="0.42" r="0.66" fx="0.46" fy="0.22"><stop offset="0" stop-color="#e5df89"/><stop offset="0.5" stop-color="#e0d870"/><stop offset="0.8" stop-color="#b3ac59"/><stop offset="1" stop-color="#646132"/></radialGradient><radialGradient id="s30" cx="0.5" cy="0.42" r="0.66" fx="0.46" fy="0.22"><stop offset="0" stop-color="#e8df96"/><stop offset="0.5" stop-color="#e4d880"/><stop offset="0.8" stop-color="#b6ac66"/><stop offset="1" stop-color="#666139"/></radialGradient><radialGradient id="s31" cx="0.5" cy="0.42" r="0.66" fx="0.46" fy="0.22"><stop offset="0" stop-color="#ec4155"/><stop offset="0.5" stop-color="#e81830"/><stop offset="0.8" stop-color="#b91326"/><stop offset="1" stop-color="#680a15"/></radialGradient><radialGradient id="s32" cx="0.5" cy="0.42" r="0.66" fx="0.46" fy="0.22"><stop offset="0" stop-color="#f27cb1"/><stop offset="0.5" stop-color="#f060a0"/><stop offset="0.8" stop-color="#c04c80"/><stop offset="1" stop-color="#6c2b48"/></radialGradient><radialGradient id="s33" cx="0.5" cy="0.42" r="0.66" fx="0.46" fy="0.22"><stop offset="0" stop-color="#f283aa"/><stop offset="0.5" stop-color="#f06898"/><stop offset="0.8" stop-color="#c05379"/><stop offset="1" stop-color="#6c2e44"/></radialGradient><radialGradient id="s34" cx="0.5" cy="0.42" r="0.66" fx="0.46" fy="0.22"><stop offset="0" stop-color="#f2a3be"/><stop offset="0.5" stop-color="#f090b0"/><stop offset="0.8" stop-color="#c0738c"/><stop offset="1" stop-color="#6c404f"/></radialGradient><radialGradient id="s35" cx="0.5" cy="0.42" r="0.66" fx="0.46" fy="0.22"><stop offset="0" stop-color="#f2d889"/><stop offset="0.5" stop-color="#f0d070"/><stop offset="0.8" stop-color="#c0a659"/><stop offset="1" stop-color="#6c5d32"/></radialGradient><radialGradient id="s36" cx="0.5" cy="0.42" r="0.66" fx="0.46" fy="0.22"><stop offset="0" stop-color="#f2e548"/><stop offset="0.5" stop-color="#f0e020"/><stop offset="0.8" stop-color="#c0b319"/><stop offset="1" stop-color="#6c640e"/></radialGradient><radialGradient id="s37" cx="0.5" cy="0.42" r="0.66" fx="0.46" fy="0.22"><stop offset="0" stop-color="#ff963b"/><stop offset="0.5" stop-color="#ff8010"/><stop offset="0.8" stop-color="#cc660c"/><stop offset="1" stop-color="#723907"/></radialGradient><radialGradient id="s38" cx="0.5" cy="0.42" r="0.66" fx="0.46" fy="0.22"><stop offset="0" stop-color="#ff966f"/><stop offset="0.5" stop-color="#ff8050"/><stop offset="0.8" stop-color="#cc6640"/><stop offset="1" stop-color="#723924"/></radialGradient><radialGradient id="s39" cx="0.5" cy="0.42" r="0.66" fx="0.46" fy="0.22"><stop offset="0" stop-color="#ff96be"/><stop offset="0.5" stop-color="#ff80b0"/><stop offset="0.8" stop-color="#cc668c"/><stop offset="1" stop-color="#72394f"/></radialGradient><radialGradient id="s40" cx="0.5" cy="0.42" r="0.66" fx="0.46" fy="0.22"><stop offset="0" stop-color="#ff9d6f"/><stop offset="0.5" stop-color="#ff8850"/><stop offset="0.8" stop-color="#cc6c40"/><stop offset="1" stop-color="#723d24"/></radialGradient></defs><g clip-path="url(#v3)"><rect x="427" y="17" width="403" height="302" fill="#1f1f1f"/><polygon points="427,62.5 830,62.5 830,75 427,75" fill="#2a2a2a"/><polygon points="529,71.5 719,71.5 707,197 543.5,197.5" fill="url(#bw)"/><polygon points="719,63 830,63 830,368 794.5,318.5 707,197" fill="#2f2f2f"/><polygon points="818,208 830,203 830,319 795.5,319" fill="#272727"/><polygon points="719,63 830,63 830,72 719,72" fill="#2b2b2b"/><polygon points="427,65.5 529,71.5 543.5,197.5 467,318.5 459,318.5 427,221" fill="url(#lw)"/><polygon points="451,103 521,94 541,196 478,300 462,262" fill="#45443e" opacity="0.5"/><polygon points="427,221 459,318.5 427,318.5" fill="#262626"/><polygon points="543.5,197.5 707,197 794.5,318.5 467,318.5" fill="url(#flr)"/><g fill="#4a4a4a" opacity="0.85" filter="url(#bl)"><ellipse cx="545.5" cy="201" rx="2.6" ry="1.4"/><ellipse cx="553.5" cy="217.8" rx="3.2" ry="1.6"/><ellipse cx="513.2" cy="256.2" rx="3.8" ry="2.0"/><ellipse cx="619.5" cy="223" rx="10" ry="5.5"/><ellipse cx="628" cy="227" rx="6" ry="4"/><ellipse cx="608" cy="232.2" rx="3.2" ry="1.8"/><ellipse cx="605.6" cy="265.2" rx="3.8" ry="2.4"/><ellipse cx="565" cy="279" rx="4" ry="2.8"/><ellipse cx="577.6" cy="276.6" rx="4" ry="2.6"/><ellipse cx="582" cy="289" rx="6.2" ry="4.4"/><ellipse cx="616" cy="288.4" rx="4.2" ry="2.8"/><ellipse cx="688.8" cy="286.6" rx="4.4" ry="2.8"/><ellipse cx="523" cy="283.5" rx="7.5" ry="3" transform="rotate(-28 523 283.5)"/><ellipse cx="532.5" cy="288.5" rx="8.5" ry="3" transform="rotate(-18 532.5 288.5)"/><ellipse cx="732" cy="263" rx="3.4" ry="2"/><ellipse cx="745" cy="273" rx="3.6" ry="2.2"/><ellipse cx="759" cy="285" rx="3.8" ry="2.4"/></g><defs><radialGradient id="by" cx="0.5" cy="0.35" r="0.6"><stop offset="0" stop-color="#f0e230"/><stop offset="1" stop-color="#d4c418"/></radialGradient><clipPath id="byc"><circle cx="633" cy="62.8" r="7.4"/></clipPath></defs><ellipse cx="627.4" cy="70.2" rx="5.6" ry="3.6" fill="#6c500a" transform="rotate(-32 627.4 70.2)"/><path d="M623.2 68.4c1.2-2 2.6-3.6 4.2-4.6M622.8 72.6c1.4-0.6 3-1.6 4.4-2.8" fill="none" stroke="#c09818" stroke-width="1.3"/><circle cx="633" cy="62.8" r="7.4" fill="url(#by)"/><g clip-path="url(#byc)"><path d="M624 63.6c5 1.6 11 2 17 1.2v8h-17z" fill="#0e0c04"/></g><path d="M626.6 67.2c2 3.4 8.6 4.2 12.6-0.6" fill="none" stroke="#b8a01c" stroke-width="1"/><circle cx="463.8" cy="67.2" r="6.2" fill="url(#s20)"/><circle cx="463.8" cy="67.2" r="6.2" fill="url(#sd)"/><circle cx="487.4" cy="69.2" r="5.6" fill="url(#s36)"/><circle cx="487.4" cy="69.2" r="5.6" fill="url(#sd)"/><circle cx="506.3" cy="70.3" r="4.3" fill="url(#s19)"/><circle cx="506.3" cy="70.3" r="4.3" fill="url(#sd)"/><circle cx="528.2" cy="71.4" r="3.2" fill="url(#s7)"/><circle cx="528.2" cy="71.4" r="3.2" fill="url(#sd)"/><circle cx="720.0" cy="71.0" r="3.2" fill="url(#s24)"/><circle cx="720.0" cy="71.0" r="3.2" fill="url(#sd)"/><circle cx="716.4" cy="104.6" r="2.8" fill="url(#s28)"/><circle cx="716.4" cy="104.6" r="2.8" fill="url(#sd)"/><circle cx="713.0" cy="135.7" r="2.8" fill="url(#s29)"/><circle cx="713.0" cy="135.7" r="2.8" fill="url(#sd)"/><circle cx="669.7" cy="136.0" r="3.0" fill="url(#s34)"/><circle cx="669.7" cy="136.0" r="3.0" fill="url(#sd)"/><circle cx="453.4" cy="124.0" r="6.0" fill="url(#s27)"/><circle cx="453.4" cy="124.0" r="6.0" fill="url(#sd)"/><circle cx="447.2" cy="132.6" r="6.3" fill="url(#s2)"/><circle cx="447.2" cy="132.6" r="6.3" fill="url(#sd)"/><circle cx="521.2" cy="105.6" r="3.6" fill="url(#s23)"/><circle cx="521.2" cy="105.6" r="3.6" fill="url(#sd)"/><circle cx="532.2" cy="106.0" r="3.6" fill="url(#s16)"/><circle cx="532.2" cy="106.0" r="3.6" fill="url(#sd)"/><circle cx="546.5" cy="117.0" r="4.6" fill="url(#s31)"/><circle cx="546.5" cy="117.0" r="4.6" fill="url(#sd)"/><circle cx="568.4" cy="115.2" r="3.0" fill="url(#s38)"/><circle cx="568.4" cy="115.2" r="3.0" fill="url(#sd)"/><circle cx="594.3" cy="112.2" r="3.2" fill="url(#s8)"/><circle cx="594.3" cy="112.2" r="3.2" fill="url(#sd)"/><circle cx="496.2" cy="117.0" r="4.6" fill="url(#s35)"/><circle cx="496.2" cy="117.0" r="4.6" fill="url(#sd)"/><circle cx="507.2" cy="113.6" r="4.2" fill="url(#s5)"/><circle cx="507.2" cy="113.6" r="4.2" fill="url(#sd)"/><circle cx="565.5" cy="124.5" r="3.0" fill="url(#s11)"/><circle cx="565.5" cy="124.5" r="3.0" fill="url(#sd)"/><circle cx="536.0" cy="137.0" r="3.6" fill="url(#s14)"/><circle cx="536.0" cy="137.0" r="3.6" fill="url(#sd)"/><circle cx="539.6" cy="144.4" r="3.2" fill="url(#s22)"/><circle cx="539.6" cy="144.4" r="3.2" fill="url(#sd)"/><circle cx="571.6" cy="136.8" r="2.8" fill="url(#s17)"/><circle cx="571.6" cy="136.8" r="2.8" fill="url(#sd)"/><circle cx="576.6" cy="137.2" r="2.6" fill="url(#s21)"/><circle cx="576.6" cy="137.2" r="2.6" fill="url(#sd)"/><circle cx="579.6" cy="143.4" r="7.0" fill="url(#s13)"/><circle cx="579.6" cy="143.4" r="7.0" fill="url(#sd)"/><circle cx="604.0" cy="136.6" r="4.2" fill="url(#s1)"/><circle cx="604.0" cy="136.6" r="4.2" fill="url(#sd)"/><circle cx="625.2" cy="136.4" r="3.0" fill="url(#s6)"/><circle cx="625.2" cy="136.4" r="3.0" fill="url(#sd)"/><circle cx="504.0" cy="158.6" r="3.6" fill="url(#s18)"/><circle cx="504.0" cy="158.6" r="3.6" fill="url(#sd)"/><circle cx="519.0" cy="148.8" r="3.6" fill="url(#s32)"/><circle cx="519.0" cy="148.8" r="3.6" fill="url(#sd)"/><circle cx="514.6" cy="152.2" r="3.8" fill="url(#s25)"/><circle cx="514.6" cy="152.2" r="3.8" fill="url(#sd)"/><circle cx="490.0" cy="169.4" r="4.6" fill="url(#s26)"/><circle cx="490.0" cy="169.4" r="4.6" fill="url(#sd)"/><circle cx="499.8" cy="165.2" r="7.6" fill="url(#s40)"/><circle cx="499.8" cy="165.2" r="7.6" fill="url(#sd)"/><circle cx="481.4" cy="175.6" r="5.6" fill="url(#s33)"/><circle cx="481.4" cy="175.6" r="5.6" fill="url(#sd)"/><circle cx="473.4" cy="187.4" r="5.8" fill="url(#s4)"/><circle cx="473.4" cy="187.4" r="5.8" fill="url(#sd)"/><circle cx="495.0" cy="185.6" r="7.2" fill="url(#s12)"/><circle cx="495.0" cy="185.6" r="7.2" fill="url(#sd)"/><circle cx="560.0" cy="158.6" r="7.2" fill="url(#s10)"/><circle cx="560.0" cy="158.6" r="7.2" fill="url(#sd)"/><circle cx="429.5" cy="212.2" r="9.5" fill="url(#s9)"/><circle cx="429.5" cy="212.2" r="9.5" fill="url(#sd)"/><circle cx="510.6" cy="211.0" r="6.6" fill="url(#s15)"/><circle cx="510.6" cy="211.0" r="6.6" fill="url(#sd)"/><circle cx="523.8" cy="208.4" r="6.6" fill="url(#s37)"/><circle cx="523.8" cy="208.4" r="6.6" fill="url(#sd)"/><circle cx="584.7" cy="210.4" r="9.6" fill="url(#s0)"/><circle cx="584.7" cy="210.4" r="9.6" fill="url(#sd)"/><circle cx="632.0" cy="209.6" r="6.2" fill="url(#s3)"/><circle cx="632.0" cy="209.6" r="6.2" fill="url(#sd)"/><circle cx="731.3" cy="207.6" r="6.0" fill="url(#s39)"/><circle cx="731.3" cy="207.6" r="6.0" fill="url(#sd)"/><circle cx="824.6" cy="206.8" r="6.8" fill="url(#s30)"/><circle cx="824.6" cy="206.8" r="6.8" fill="url(#sd)"/><defs><linearGradient id="hd" x1="0" y1="0" x2="0.3" y2="1"><stop offset="0" stop-color="#a8a8a8"/><stop offset="0.6" stop-color="#8a8a8a"/><stop offset="1" stop-color="#6c6c6c"/></linearGradient><linearGradient id="nk" x1="0" y1="0.2" x2="1" y2="0.6"><stop offset="0" stop-color="#4c4c4c"/><stop offset="0.35" stop-color="#8c8c8c"/><stop offset="0.7" stop-color="#b2b2b2"/><stop offset="1" stop-color="#9a9a9a"/></linearGradient></defs><g><path d="M623 165l1.6 15.6 15.6-2.2-3.6-9.4-2-7.4-7-1z" fill="url(#nk)"/><path d="M615.2 152.6l-3.8 5.2 2.2 2.4-0.8 3.2 1.6 1.6 0.2 2 3.2 1.4 5.4-0.8 3.8-4.6 0.6-6.4z" fill="#6c6c6c"/><path d="M611.4 157.8l3.2-3 2.4 2.6-3 2.6z" fill="#a4a4a4"/><ellipse cx="626.6" cy="151.4" rx="12.2" ry="10.8" fill="url(#hd)"/><path d="M616 159.5c2.6-1 5.4-0.4 7.4 1.6" fill="none" stroke="#5a5a5a" stroke-width="1"/><ellipse cx="633.8" cy="161.6" rx="3.6" ry="1.7" fill="#242424"/><ellipse cx="628.2" cy="160" rx="1.5" ry="2.2" fill="#b0b0b0"/><ellipse cx="628.4" cy="159.4" rx="0.8" ry="1" fill="#3a3a3a"/><path d="M615.5 167c2.6 1.8 6.4 1.6 9.4-0.6" fill="none" stroke="#383838" stroke-width="1.8"/></g></g></svg>
<div style="left:441px;top:26.2px;width:60px;height:14.1px;background:#383838;border-radius:1px;"></div><svg style="left:445px;top:29px;" width="9" height="8" viewBox="0 0 9 8"><path d="M0.5 4h7M5 1.2L7.8 4 5 6.8" fill="none" stroke="#d0d0d0" stroke-width="0.9"/></svg><div class="t" style="left:456.6px;top:29.3px;height:8px;line-height:8px;font-size:6px;color:#c8c8c8;transform:scaleX(0.798);transform-origin:0 50%;">Open Setting Panel</div>
<div style="left:564px;top:26.2px;width:41.5px;height:14.1px;background:#383838;border-radius:1px;"></div><svg style="left:566.5px;top:28.8px;" width="11" height="9" viewBox="0 0 11 9"><rect x="0.5" y="0.5" width="9.5" height="6" rx="0.8" fill="none" stroke="#c8c8c8" stroke-width="0.8"/><path d="M3 8.2h4.5" stroke="#c8c8c8" stroke-width="0.8"/></svg><div class="t" style="left:579.8px;top:29.3px;height:8px;line-height:8px;font-size:6px;color:#c8c8c8;transform:scaleX(0.823);transform-origin:0 50%;">Front View</div>
<div style="left:610px;top:26.2px;width:38px;height:14.1px;background:#383838;border-radius:1px;"></div><svg style="left:612.2px;top:29.4px;" width="11" height="8" viewBox="0 0 11 8"><rect x="0.5" y="1" width="6.5" height="5" rx="1" fill="none" stroke="#c8c8c8" stroke-width="0.8"/><path d="M7.4 3l2.6-1.6v4.6L7.4 4.4z" fill="none" stroke="#c8c8c8" stroke-width="0.7"/></svg><div class="t" style="left:625.5px;top:29.3px;height:8px;line-height:8px;font-size:6px;color:#c8c8c8;transform:scaleX(0.834);transform-origin:0 50%;">Left View</div>
<div style="left:652.5px;top:26.2px;width:38px;height:14.1px;background:#383838;border-radius:1px;"></div><svg style="left:655px;top:28.4px;" width="10" height="10" viewBox="0 0 10 10"><circle cx="2.6" cy="2.6" r="1.9" fill="none" stroke="#c8c8c8" stroke-width="0.8"/><circle cx="7.4" cy="2" r="1.5" fill="none" stroke="#c8c8c8" stroke-width="0.8"/><path d="M2.6 4.5v4.2M1.2 8.7c1 0.8 2 0.8 3-0.2M7.4 3.5v3" fill="none" stroke="#c8c8c8" stroke-width="0.8"/></svg><div class="t" style="left:668.2px;top:29.3px;height:8px;line-height:8px;font-size:6px;color:#c8c8c8;transform:scaleX(0.825);transform-origin:0 50%;">Top View</div>
<div style="left:830px;top:17px;width:308px;height:302px;background:#2c2c2c;"></div>
<div style="left:830px;top:17px;width:308px;height:26px;background:#343434;"></div>
<div style="left:830px;top:43px;width:308px;height:20px;background:#3b3b3b;"></div>
<div class="t" style="left:836.3px;top:23.8px;height:13px;line-height:13px;font-size:11px;color:#f4f4f4;font-weight:bold;transform:scaleX(0.992);transform-origin:0 50%;">Channel List</div>
<div style="left:997px;top:22px;width:111px;height:17px;background:#4b4b4b;border-radius:2px;border:1px solid #5a5a5a;box-sizing:border-box;"></div>
<div class="t" style="left:1000.5px;top:24.65px;height:11.5px;line-height:11.5px;font-size:9.5px;color:#7c7c7c;transform:scaleX(0.947);transform-origin:0 50%;">Search...</div>
<div style="left:1112px;top:20px;width:20px;height:20px;background:#1d1d1d;border-radius:1px;"></div>
<svg style="left:1112px;top:20px;" width="20" height="20" viewBox="0 0 20 20"><path d="M5.2 5.2l9.6 9.6M14.8 5.2l-9.6 9.6" stroke="#f4f4f4" stroke-width="1.9"/></svg>
<div class="t" style="left:836.5px;top:46.85px;height:11.5px;line-height:11.5px;font-size:9.5px;color:#dedede;transform:scaleX(1.010);transform-origin:0 50%;-webkit-text-stroke:0.2px #dedede;">Id</div>
<svg style="left:851px;top:50px;" width="7" height="5" viewBox="0 0 7 5"><path d="M0.2 4.6L3.3 0.4 6.4 4.6z" fill="#e8e8e8"/></svg>
<div class="t" style="left:865.6px;top:46.85px;height:11.5px;line-height:11.5px;font-size:9.5px;color:#dedede;transform:scaleX(0.967);transform-origin:0 50%;-webkit-text-stroke:0.2px #dedede;">Name</div>
<div class="t" style="left:954.3px;top:46.85px;height:11.5px;line-height:11.5px;font-size:9.5px;color:#dedede;transform:scaleX(1.036);transform-origin:0 50%;-webkit-text-stroke:0.2px #dedede;">M</div>
<div class="t" style="left:977.6px;top:46.85px;height:11.5px;line-height:11.5px;font-size:9.5px;color:#dedede;transform:scaleX(0.821);transform-origin:0 50%;-webkit-text-stroke:0.2px #dedede;">S</div>
<div class="t" style="left:1001.5px;top:46.85px;height:11.5px;line-height:11.5px;font-size:9.5px;color:#dedede;transform:scaleX(0.947);transform-origin:0 50%;-webkit-text-stroke:0.2px #dedede;">Level</div>
<div class="t" style="left:1045.5px;top:46.85px;height:11.5px;line-height:11.5px;font-size:9.5px;color:#dedede;transform:scaleX(1.031);transform-origin:0 50%;-webkit-text-stroke:0.2px #dedede;">Color</div>
<div class="t" style="left:1089.3px;top:46.85px;height:11.5px;line-height:11.5px;font-size:9.5px;color:#dedede;transform:scaleX(0.998);transform-origin:0 50%;-webkit-text-stroke:0.2px #dedede;">Binaural</div>
<div style="left:0px;top:0px;width:1138px;height:318.5px;overflow:hidden;"><div style="left:830px;top:63.25px;width:308px;height:17.7px;background:#3a3a3a;"></div><div class="t" style="left:836.6px;top:66.05px;height:11.5px;line-height:11.5px;font-size:9.5px;color:#f0f0f0;transform:scaleX(0.994);transform-origin:0 50%;-webkit-text-stroke:0.25px #f0f0f0;">11</div><div class="t" style="left:865.6px;top:66.05px;height:11.5px;line-height:11.5px;font-size:9.5px;color:#f0f0f0;transform:scaleX(0.947);transform-origin:0 50%;-webkit-text-stroke:0.25px #f0f0f0;">Kick (R)</div><div style="left:952.5px;top:64.9px;width:14.6px;height:14.4px;background:#4c4c4c;border-radius:2px;"></div><div class="t" style="left:956.7px;top:67.55px;height:9.5px;line-height:9.5px;font-size:7.5px;color:#bcbcbc;transform:scaleX(0.992);transform-origin:0 50%;-webkit-text-stroke:0.2px #bcbcbc;">M</div><div style="left:976.2px;top:64.9px;width:14.6px;height:14.4px;background:#4c4c4c;border-radius:2px;"></div><div class="t" style="left:981.3px;top:67.55px;height:9.5px;line-height:9.5px;font-size:7.5px;color:#bcbcbc;transform:scaleX(0.880);transform-origin:0 50%;-webkit-text-stroke:0.2px #bcbcbc;">S</div><div style="left:998.8px;top:69.6px;width:37px;height:5px;background:#3a3a3a;"></div><div style="left:998.8px;top:69.6px;width:17.4px;height:5px;background:#10c050;"></div><div style="left:1028.9px;top:68.9px;width:1.8px;height:6.4px;background:#f4f4f4;"></div><div style="left:1054px;top:64.5px;width:15.2px;height:15.2px;background:#ffa000;border-radius:2.5px;"></div><div style="left:1086.3px;top:64.9px;width:51.2px;height:14.4px;background:#3c3c3c;border:1px solid #4e4e4e;box-sizing:border-box;border-radius:1px;"></div><div class="t" style="left:1090.6px;top:66.6px;height:11px;line-height:11px;font-size:9px;color:#e8e8e8;transform:scaleX(1.064);transform-origin:0 50%;-webkit-text-stroke:0.2px #e8e8e8;">Off</div><svg style="left:1125.8px;top:68.9px;" width="9" height="7" viewBox="0 0 9 7"><path d="M0.3 0.6h8.4L4.5 6.4z" fill="#f0f0f0"/></svg><div style="left:830px;top:80.95px;width:308px;height:17.7px;background:#2c2c2c;"></div><div class="t" style="left:836.6px;top:83.75px;height:11.5px;line-height:11.5px;font-size:9.5px;color:#f0f0f0;transform:scaleX(0.928);transform-origin:0 50%;-webkit-text-stroke:0.25px #f0f0f0;">12</div><div class="t" style="left:865.6px;top:83.75px;height:11.5px;line-height:11.5px;font-size:9.5px;color:#f0f0f0;transform:scaleX(0.934);transform-origin:0 50%;-webkit-text-stroke:0.25px #f0f0f0;">Snare (L)</div><div style="left:952.5px;top:82.6px;width:14.6px;height:14.4px;background:#4c4c4c;border-radius:2px;"></div><div class="t" style="left:956.7px;top:85.25px;height:9.5px;line-height:9.5px;font-size:7.5px;color:#bcbcbc;transform:scaleX(0.992);transform-origin:0 50%;-webkit-text-stroke:0.2px #bcbcbc;">M</div><div style="left:976.2px;top:82.6px;width:14.6px;height:14.4px;background:#4c4c4c;border-radius:2px;"></div><div class="t" style="left:981.3px;top:85.25px;height:9.5px;line-height:9.5px;font-size:7.5px;color:#bcbcbc;transform:scaleX(0.880);transform-origin:0 50%;-webkit-text-stroke:0.2px #bcbcbc;">S</div><div style="left:998.8px;top:87.3px;width:37px;height:5px;background:#3a3a3a;"></div><div style="left:998.8px;top:87.3px;width:26.6px;height:5px;background:#f0b040;"></div><div style="left:1025.9px;top:86.6px;width:1.8px;height:6.4px;background:#f4f4f4;"></div><div style="left:1054px;top:82.2px;width:15.2px;height:15.2px;background:#ff58a8;border-radius:2.5px;"></div><div style="left:1086.3px;top:82.6px;width:51.2px;height:14.4px;background:#3c3c3c;border:1px solid #4e4e4e;box-sizing:border-box;border-radius:1px;"></div><div class="t" style="left:1090.6px;top:84.3px;height:11px;line-height:11px;font-size:9px;color:#e8e8e8;transform:scaleX(0.943);transform-origin:0 50%;-webkit-text-stroke:0.2px #e8e8e8;">Near</div><svg style="left:1125.8px;top:86.6px;" width="9" height="7" viewBox="0 0 9 7"><path d="M0.3 0.6h8.4L4.5 6.4z" fill="#f0f0f0"/></svg><div style="left:830px;top:98.65px;width:308px;height:17.7px;background:#3a3a3a;"></div><div class="t" style="left:836.6px;top:101.45px;height:11.5px;line-height:11.5px;font-size:9.5px;color:#f0f0f0;transform:scaleX(0.928);transform-origin:0 50%;-webkit-text-stroke:0.25px #f0f0f0;">13</div><div class="t" style="left:865.6px;top:101.45px;height:11.5px;line-height:11.5px;font-size:9.5px;color:#f0f0f0;transform:scaleX(0.918);transform-origin:0 50%;-webkit-text-stroke:0.25px #f0f0f0;">Snare (R)</div><div style="left:952.5px;top:100.3px;width:14.6px;height:14.4px;background:#4c4c4c;border-radius:2px;"></div><div class="t" style="left:956.7px;top:102.95px;height:9.5px;line-height:9.5px;font-size:7.5px;color:#bcbcbc;transform:scaleX(0.992);transform-origin:0 50%;-webkit-text-stroke:0.2px #bcbcbc;">M</div><div style="left:976.2px;top:100.3px;width:14.6px;height:14.4px;background:#4c4c4c;border-radius:2px;"></div><div class="t" style="left:981.3px;top:102.95px;height:9.5px;line-height:9.5px;font-size:7.5px;color:#bcbcbc;transform:scaleX(0.880);transform-origin:0 50%;-webkit-text-stroke:0.2px #bcbcbc;">S</div><div style="left:998.8px;top:105px;width:37px;height:5px;background:#3a3a3a;"></div><div style="left:998.8px;top:105px;width:27.2px;height:5px;background:#f0b040;"></div><div style="left:1026.9px;top:104.3px;width:1.8px;height:6.4px;background:#f4f4f4;"></div><div style="left:1054px;top:99.9px;width:15.2px;height:15.2px;background:#ff58a8;border-radius:2.5px;"></div><div style="left:1086.3px;top:100.3px;width:51.2px;height:14.4px;background:#3c3c3c;border:1px solid #4e4e4e;box-sizing:border-box;border-radius:1px;"></div><div class="t" style="left:1090.6px;top:102px;height:11px;line-height:11px;font-size:9px;color:#e8e8e8;transform:scaleX(0.943);transform-origin:0 50%;-webkit-text-stroke:0.2px #e8e8e8;">Near</div><svg style="left:1125.8px;top:104.3px;" width="9" height="7" viewBox="0 0 9 7"><path d="M0.3 0.6h8.4L4.5 6.4z" fill="#f0f0f0"/></svg><div style="left:830px;top:116.35px;width:308px;height:17.7px;background:#2c2c2c;"></div><div class="t" style="left:836.6px;top:119.15px;height:11.5px;line-height:11.5px;font-size:9.5px;color:#f0f0f0;transform:scaleX(0.928);transform-origin:0 50%;-webkit-text-stroke:0.25px #f0f0f0;">14</div><div class="t" style="left:865.6px;top:119.15px;height:11.5px;line-height:11.5px;font-size:9.5px;color:#f0f0f0;transform:scaleX(0.987);transform-origin:0 50%;-webkit-text-stroke:0.25px #f0f0f0;">Snare Layer Choru...</div><div style="left:952.5px;top:118px;width:14.6px;height:14.4px;background:#4c4c4c;border-radius:2px;"></div><div class="t" style="left:956.7px;top:120.65px;height:9.5px;line-height:9.5px;font-size:7.5px;color:#bcbcbc;transform:scaleX(0.992);transform-origin:0 50%;-webkit-text-stroke:0.2px #bcbcbc;">M</div><div style="left:976.2px;top:118px;width:14.6px;height:14.4px;background:#4c4c4c;border-radius:2px;"></div><div class="t" style="left:981.3px;top:120.65px;height:9.5px;line-height:9.5px;font-size:7.5px;color:#bcbcbc;transform:scaleX(0.880);transform-origin:0 50%;-webkit-text-stroke:0.2px #bcbcbc;">S</div><div style="left:998.8px;top:122.7px;width:37px;height:5px;background:#3a3a3a;"></div><div style="left:998.8px;top:122.7px;width:23.2px;height:5px;background:#10c050;"></div><div style="left:1022.9px;top:122px;width:1.8px;height:6.4px;background:#f4f4f4;"></div><div style="left:1054px;top:117.6px;width:15.2px;height:15.2px;background:#ffc400;border-radius:2.5px;"></div><div style="left:1086.3px;top:118px;width:51.2px;height:14.4px;background:#3c3c3c;border:1px solid #4e4e4e;box-sizing:border-box;border-radius:1px;"></div><div class="t" style="left:1090.6px;top:119.7px;height:11px;line-height:11px;font-size:9px;color:#e8e8e8;transform:scaleX(0.943);transform-origin:0 50%;-webkit-text-stroke:0.2px #e8e8e8;">Near</div><svg style="left:1125.8px;top:122px;" width="9" height="7" viewBox="0 0 9 7"><path d="M0.3 0.6h8.4L4.5 6.4z" fill="#f0f0f0"/></svg><div style="left:830px;top:134.05px;width:308px;height:17.7px;background:#3a3a3a;"></div><div class="t" style="left:836.6px;top:136.85px;height:11.5px;line-height:11.5px;font-size:9.5px;color:#f0f0f0;transform:scaleX(0.928);transform-origin:0 50%;-webkit-text-stroke:0.25px #f0f0f0;">15</div><div class="t" style="left:865.6px;top:136.85px;height:11.5px;line-height:11.5px;font-size:9.5px;color:#f0f0f0;transform:scaleX(0.987);transform-origin:0 50%;-webkit-text-stroke:0.25px #f0f0f0;">Snare Layer Choru...</div><div style="left:952.5px;top:135.7px;width:14.6px;height:14.4px;background:#4c4c4c;border-radius:2px;"></div><div class="t" style="left:956.7px;top:138.35px;height:9.5px;line-height:9.5px;font-size:7.5px;color:#bcbcbc;transform:scaleX(0.992);transform-origin:0 50%;-webkit-text-stroke:0.2px #bcbcbc;">M</div><div style="left:976.2px;top:135.7px;width:14.6px;height:14.4px;background:#4c4c4c;border-radius:2px;"></div><div class="t" style="left:981.3px;top:138.35px;height:9.5px;line-height:9.5px;font-size:7.5px;color:#bcbcbc;transform:scaleX(0.880);transform-origin:0 50%;-webkit-text-stroke:0.2px #bcbcbc;">S</div><div style="left:998.8px;top:140.4px;width:37px;height:5px;background:#3a3a3a;"></div><div style="left:998.8px;top:140.4px;width:21.4px;height:5px;background:#10c050;"></div><div style="left:1020.7px;top:139.7px;width:1.8px;height:6.4px;background:#f4f4f4;"></div><div style="left:1054px;top:135.3px;width:15.2px;height:15.2px;background:#ffc400;border-radius:2.5px;"></div><div style="left:1086.3px;top:135.7px;width:51.2px;height:14.4px;background:#3c3c3c;border:1px solid #4e4e4e;box-sizing:border-box;border-radius:1px;"></div><div class="t" style="left:1090.6px;top:137.4px;height:11px;line-height:11px;font-size:9px;color:#e8e8e8;transform:scaleX(0.943);transform-origin:0 50%;-webkit-text-stroke:0.2px #e8e8e8;">Near</div><svg style="left:1125.8px;top:139.7px;" width="9" height="7" viewBox="0 0 9 7"><path d="M0.3 0.6h8.4L4.5 6.4z" fill="#f0f0f0"/></svg><div style="left:830px;top:151.75px;width:308px;height:17.7px;background:#2c2c2c;"></div><div class="t" style="left:836.6px;top:154.55px;height:11.5px;line-height:11.5px;font-size:9.5px;color:#f0f0f0;transform:scaleX(0.928);transform-origin:0 50%;-webkit-text-stroke:0.25px #f0f0f0;">16</div><div class="t" style="left:865.6px;top:154.55px;height:11.5px;line-height:11.5px;font-size:9.5px;color:#f0f0f0;transform:scaleX(1.019);transform-origin:0 50%;-webkit-text-stroke:0.25px #f0f0f0;">Top Loop 1 (L)</div><div style="left:952.5px;top:153.4px;width:14.6px;height:14.4px;background:#4c4c4c;border-radius:2px;"></div><div class="t" style="left:956.7px;top:156.05px;height:9.5px;line-height:9.5px;font-size:7.5px;color:#bcbcbc;transform:scaleX(0.992);transform-origin:0 50%;-webkit-text-stroke:0.2px #bcbcbc;">M</div><div style="left:976.2px;top:153.4px;width:14.6px;height:14.4px;background:#4c4c4c;border-radius:2px;"></div><div class="t" style="left:981.3px;top:156.05px;height:9.5px;line-height:9.5px;font-size:7.5px;color:#bcbcbc;transform:scaleX(0.880);transform-origin:0 50%;-webkit-text-stroke:0.2px #bcbcbc;">S</div><div style="left:998.8px;top:158.1px;width:37px;height:5px;background:#3a3a3a;"></div><div style="left:998.8px;top:158.1px;width:21.2px;height:5px;background:#10c050;"></div><div style="left:1022.9px;top:157.4px;width:1.8px;height:6.4px;background:#f4f4f4;"></div><div style="left:1054px;top:153px;width:15.2px;height:15.2px;background:#ffe61e;border-radius:2.5px;"></div><div style="left:1086.3px;top:153.4px;width:51.2px;height:14.4px;background:#3c3c3c;border:1px solid #4e4e4e;box-sizing:border-box;border-radius:1px;"></div><div class="t" style="left:1090.6px;top:155.1px;height:11px;line-height:11px;font-size:9px;color:#e8e8e8;transform:scaleX(0.943);transform-origin:0 50%;-webkit-text-stroke:0.2px #e8e8e8;">Near</div><svg style="left:1125.8px;top:157.4px;" width="9" height="7" viewBox="0 0 9 7"><path d="M0.3 0.6h8.4L4.5 6.4z" fill="#f0f0f0"/></svg><div style="left:830px;top:169.45px;width:308px;height:17.7px;background:#3a3a3a;"></div><div class="t" style="left:836.6px;top:172.25px;height:11.5px;line-height:11.5px;font-size:9.5px;color:#f0f0f0;transform:scaleX(0.928);transform-origin:0 50%;-webkit-text-stroke:0.25px #f0f0f0;">17</div><div class="t" style="left:865.6px;top:172.25px;height:11.5px;line-height:11.5px;font-size:9.5px;color:#f0f0f0;transform:scaleX(1.009);transform-origin:0 50%;-webkit-text-stroke:0.25px #f0f0f0;">Top Loop 1 (R)</div><div style="left:952.5px;top:171.1px;width:14.6px;height:14.4px;background:#4c4c4c;border-radius:2px;"></div><div class="t" style="left:956.7px;top:173.75px;height:9.5px;line-height:9.5px;font-size:7.5px;color:#bcbcbc;transform:scaleX(0.992);transform-origin:0 50%;-webkit-text-stroke:0.2px #bcbcbc;">M</div><div style="left:976.2px;top:171.1px;width:14.6px;height:14.4px;background:#4c4c4c;border-radius:2px;"></div><div class="t" style="left:981.3px;top:173.75px;height:9.5px;line-height:9.5px;font-size:7.5px;color:#bcbcbc;transform:scaleX(0.880);transform-origin:0 50%;-webkit-text-stroke:0.2px #bcbcbc;">S</div><div style="left:998.8px;top:175.8px;width:37px;height:5px;background:#3a3a3a;"></div><div style="left:998.8px;top:175.8px;width:21.2px;height:5px;background:#10c050;"></div><div style="left:1022.9px;top:175.1px;width:1.8px;height:6.4px;background:#f4f4f4;"></div><div style="left:1054px;top:170.7px;width:15.2px;height:15.2px;background:#ffe61e;border-radius:2.5px;"></div><div style="left:1086.3px;top:171.1px;width:51.2px;height:14.4px;background:#3c3c3c;border:1px solid #4e4e4e;box-sizing:border-box;border-radius:1px;"></div><div class="t" style="left:1090.6px;top:172.8px;height:11px;line-height:11px;font-size:9px;color:#e8e8e8;transform:scaleX(0.943);transform-origin:0 50%;-webkit-text-stroke:0.2px #e8e8e8;">Near</div><svg style="left:1125.8px;top:175.1px;" width="9" height="7" viewBox="0 0 9 7"><path d="M0.3 0.6h8.4L4.5 6.4z" fill="#f0f0f0"/></svg><div style="left:830px;top:187.15px;width:308px;height:17.7px;background:#2c2c2c;"></div><div class="t" style="left:836.6px;top:189.95px;height:11.5px;line-height:11.5px;font-size:9.5px;color:#f0f0f0;transform:scaleX(0.928);transform-origin:0 50%;-webkit-text-stroke:0.25px #f0f0f0;">18</div><div class="t" style="left:865.6px;top:189.95px;height:11.5px;line-height:11.5px;font-size:9.5px;color:#f0f0f0;transform:scaleX(0.977);transform-origin:0 50%;-webkit-text-stroke:0.25px #f0f0f0;">Roomy Clap (L)</div><div style="left:952.5px;top:188.8px;width:14.6px;height:14.4px;background:#4c4c4c;border-radius:2px;"></div><div class="t" style="left:956.7px;top:191.45px;height:9.5px;line-height:9.5px;font-size:7.5px;color:#bcbcbc;transform:scaleX(0.992);transform-origin:0 50%;-webkit-text-stroke:0.2px #bcbcbc;">M</div><div style="left:976.2px;top:188.8px;width:14.6px;height:14.4px;background:#4c4c4c;border-radius:2px;"></div><div class="t" style="left:981.3px;top:191.45px;height:9.5px;line-height:9.5px;font-size:7.5px;color:#bcbcbc;transform:scaleX(0.880);transform-origin:0 50%;-webkit-text-stroke:0.2px #bcbcbc;">S</div><div style="left:998.8px;top:193.5px;width:37px;height:5px;background:#3a3a3a;"></div><div style="left:998.8px;top:193.5px;width:8.2px;height:5px;background:#10c050;"></div><div style="left:1024.1px;top:192.8px;width:1.8px;height:6.4px;background:#f4f4f4;"></div><div style="left:1054px;top:188.4px;width:15.2px;height:15.2px;background:#0a64c0;border-radius:2.5px;"></div><div style="left:1086.3px;top:188.8px;width:51.2px;height:14.4px;background:#3c3c3c;border:1px solid #4e4e4e;box-sizing:border-box;border-radius:1px;"></div><div class="t" style="left:1090.6px;top:190.5px;height:11px;line-height:11px;font-size:9px;color:#e8e8e8;transform:scaleX(0.979);transform-origin:0 50%;-webkit-text-stroke:0.2px #e8e8e8;">Mid</div><svg style="left:1125.8px;top:192.8px;" width="9" height="7" viewBox="0 0 9 7"><path d="M0.3 0.6h8.4L4.5 6.4z" fill="#f0f0f0"/></svg><div style="left:830px;top:204.85px;width:308px;height:17.7px;background:#3a3a3a;"></div><div class="t" style="left:836.6px;top:207.65px;height:11.5px;line-height:11.5px;font-size:9.5px;color:#f0f0f0;transform:scaleX(0.928);transform-origin:0 50%;-webkit-text-stroke:0.25px #f0f0f0;">19</div><div class="t" style="left:865.6px;top:207.65px;height:11.5px;line-height:11.5px;font-size:9.5px;color:#f0f0f0;transform:scaleX(0.969);transform-origin:0 50%;-webkit-text-stroke:0.25px #f0f0f0;">Roomy Clap (R)</div><div style="left:952.5px;top:206.5px;width:14.6px;height:14.4px;background:#4c4c4c;border-radius:2px;"></div><div class="t" style="left:956.7px;top:209.15px;height:9.5px;line-height:9.5px;font-size:7.5px;color:#bcbcbc;transform:scaleX(0.992);transform-origin:0 50%;-webkit-text-stroke:0.2px #bcbcbc;">M</div><div style="left:976.2px;top:206.5px;width:14.6px;height:14.4px;background:#4c4c4c;border-radius:2px;"></div><div class="t" style="left:981.3px;top:209.15px;height:9.5px;line-height:9.5px;font-size:7.5px;color:#bcbcbc;transform:scaleX(0.880);transform-origin:0 50%;-webkit-text-stroke:0.2px #bcbcbc;">S</div><div style="left:998.8px;top:211.2px;width:37px;height:5px;background:#3a3a3a;"></div><div style="left:998.8px;top:211.2px;width:8px;height:5px;background:#10c050;"></div><div style="left:1024.1px;top:210.5px;width:1.8px;height:6.4px;background:#f4f4f4;"></div><div style="left:1054px;top:206.1px;width:15.2px;height:15.2px;background:#0a64c0;border-radius:2.5px;"></div><div style="left:1086.3px;top:206.5px;width:51.2px;height:14.4px;background:#3c3c3c;border:1px solid #4e4e4e;box-sizing:border-box;border-radius:1px;"></div><div class="t" style="left:1090.6px;top:208.2px;height:11px;line-height:11px;font-size:9px;color:#e8e8e8;transform:scaleX(0.979);transform-origin:0 50%;-webkit-text-stroke:0.2px #e8e8e8;">Mid</div><svg style="left:1125.8px;top:210.5px;" width="9" height="7" viewBox="0 0 9 7"><path d="M0.3 0.6h8.4L4.5 6.4z" fill="#f0f0f0"/></svg><div style="left:830px;top:222.55px;width:308px;height:17.7px;background:#2c2c2c;"></div><div class="t" style="left:836.6px;top:225.35px;height:11.5px;line-height:11.5px;font-size:9.5px;color:#f0f0f0;transform:scaleX(0.928);transform-origin:0 50%;-webkit-text-stroke:0.25px #f0f0f0;">20</div><div class="t" style="left:865.6px;top:225.35px;height:11.5px;line-height:11.5px;font-size:9.5px;color:#f0f0f0;transform:scaleX(0.971);transform-origin:0 50%;-webkit-text-stroke:0.25px #f0f0f0;">Delayed Clap (L)</div><div style="left:952.5px;top:224.2px;width:14.6px;height:14.4px;background:#4c4c4c;border-radius:2px;"></div><div class="t" style="left:956.7px;top:226.85px;height:9.5px;line-height:9.5px;font-size:7.5px;color:#bcbcbc;transform:scaleX(0.992);transform-origin:0 50%;-webkit-text-stroke:0.2px #bcbcbc;">M</div><div style="left:976.2px;top:224.2px;width:14.6px;height:14.4px;background:#4c4c4c;border-radius:2px;"></div><div class="t" style="left:981.3px;top:226.85px;height:9.5px;line-height:9.5px;font-size:7.5px;color:#bcbcbc;transform:scaleX(0.880);transform-origin:0 50%;-webkit-text-stroke:0.2px #bcbcbc;">S</div><div style="left:998.8px;top:228.9px;width:37px;height:5px;background:#3a3a3a;"></div><div style="left:998.8px;top:228.9px;width:24.2px;height:5px;background:#10c050;"></div><div style="left:1024.1px;top:228.2px;width:1.8px;height:6.4px;background:#f4f4f4;"></div><div style="left:1054px;top:223.8px;width:15.2px;height:15.2px;background:#ffc400;border-radius:2.5px;"></div><div style="left:1086.3px;top:224.2px;width:51.2px;height:14.4px;background:#3c3c3c;border:1px solid #4e4e4e;box-sizing:border-box;border-radius:1px;"></div><div class="t" style="left:1090.6px;top:225.9px;height:11px;line-height:11px;font-size:9px;color:#e8e8e8;transform:scaleX(0.948);transform-origin:0 50%;-webkit-text-stroke:0.2px #e8e8e8;">Far</div><svg style="left:1125.8px;top:228.2px;" width="9" height="7" viewBox="0 0 9 7"><path d="M0.3 0.6h8.4L4.5 6.4z" fill="#f0f0f0"/></svg><div style="left:830px;top:240.25px;width:308px;height:17.7px;background:#3a3a3a;"></div><div class="t" style="left:836.6px;top:243.05px;height:11.5px;line-height:11.5px;font-size:9.5px;color:#f0f0f0;transform:scaleX(0.928);transform-origin:0 50%;-webkit-text-stroke:0.25px #f0f0f0;">21</div><div class="t" style="left:865.6px;top:243.05px;height:11.5px;line-height:11.5px;font-size:9.5px;color:#f0f0f0;transform:scaleX(0.964);transform-origin:0 50%;-webkit-text-stroke:0.25px #f0f0f0;">Delayed Clap (R)</div><div style="left:952.5px;top:241.9px;width:14.6px;height:14.4px;background:#4c4c4c;border-radius:2px;"></div><div class="t" style="left:956.7px;top:244.55px;height:9.5px;line-height:9.5px;font-size:7.5px;color:#bcbcbc;transform:scaleX(0.992);transform-origin:0 50%;-webkit-text-stroke:0.2px #bcbcbc;">M</div><div style="left:976.2px;top:241.9px;width:14.6px;height:14.4px;background:#4c4c4c;border-radius:2px;"></div><div class="t" style="left:981.3px;top:244.55px;height:9.5px;line-height:9.5px;font-size:7.5px;color:#bcbcbc;transform:scaleX(0.880);transform-origin:0 50%;-webkit-text-stroke:0.2px #bcbcbc;">S</div><div style="left:998.8px;top:246.6px;width:37px;height:5px;background:#3a3a3a;"></div><div style="left:998.8px;top:246.6px;width:24.2px;height:5px;background:#10c050;"></div><div style="left:1024.1px;top:245.9px;width:1.8px;height:6.4px;background:#f4f4f4;"></div><div style="left:1054px;top:241.5px;width:15.2px;height:15.2px;background:#ffc400;border-radius:2.5px;"></div><div style="left:1086.3px;top:241.9px;width:51.2px;height:14.4px;background:#3c3c3c;border:1px solid #4e4e4e;box-sizing:border-box;border-radius:1px;"></div><div class="t" style="left:1090.6px;top:243.6px;height:11px;line-height:11px;font-size:9px;color:#e8e8e8;transform:scaleX(0.948);transform-origin:0 50%;-webkit-text-stroke:0.2px #e8e8e8;">Far</div><svg style="left:1125.8px;top:245.9px;" width="9" height="7" viewBox="0 0 9 7"><path d="M0.3 0.6h8.4L4.5 6.4z" fill="#f0f0f0"/></svg><div style="left:830px;top:257.95px;width:308px;height:17.7px;background:#2c2c2c;"></div><div class="t" style="left:836.6px;top:260.75px;height:11.5px;line-height:11.5px;font-size:9.5px;color:#f0f0f0;transform:scaleX(0.928);transform-origin:0 50%;-webkit-text-stroke:0.25px #f0f0f0;">22</div><div class="t" style="left:865.6px;top:260.75px;height:11.5px;line-height:11.5px;font-size:9.5px;color:#f0f0f0;transform:scaleX(0.977);transform-origin:0 50%;-webkit-text-stroke:0.25px #f0f0f0;">Crash 1 (L)</div><div style="left:952.5px;top:259.6px;width:14.6px;height:14.4px;background:#4c4c4c;border-radius:2px;"></div><div class="t" style="left:956.7px;top:262.25px;height:9.5px;line-height:9.5px;font-size:7.5px;color:#bcbcbc;transform:scaleX(0.992);transform-origin:0 50%;-webkit-text-stroke:0.2px #bcbcbc;">M</div><div style="left:976.2px;top:259.6px;width:14.6px;height:14.4px;background:#4c4c4c;border-radius:2px;"></div><div class="t" style="left:981.3px;top:262.25px;height:9.5px;line-height:9.5px;font-size:7.5px;color:#bcbcbc;transform:scaleX(0.880);transform-origin:0 50%;-webkit-text-stroke:0.2px #bcbcbc;">S</div><div style="left:998.8px;top:264.3px;width:37px;height:5px;background:#3a3a3a;"></div><div style="left:1008.6px;top:263.6px;width:1.8px;height:6.4px;background:#f4f4f4;"></div><div style="left:1054px;top:259.2px;width:15.2px;height:15.2px;background:#10a08c;border-radius:2.5px;"></div><div style="left:1086.3px;top:259.6px;width:51.2px;height:14.4px;background:#3c3c3c;border:1px solid #4e4e4e;box-sizing:border-box;border-radius:1px;"></div><div class="t" style="left:1090.6px;top:261.3px;height:11px;line-height:11px;font-size:9px;color:#e8e8e8;transform:scaleX(0.943);transform-origin:0 50%;-webkit-text-stroke:0.2px #e8e8e8;">Near</div><svg style="left:1125.8px;top:263.6px;" width="9" height="7" viewBox="0 0 9 7"><path d="M0.3 0.6h8.4L4.5 6.4z" fill="#f0f0f0"/></svg><div style="left:830px;top:275.65px;width:308px;height:17.7px;background:#3a3a3a;"></div><div class="t" style="left:836.6px;top:278.45px;height:11.5px;line-height:11.5px;font-size:9.5px;color:#f0f0f0;transform:scaleX(0.928);transform-origin:0 50%;-webkit-text-stroke:0.25px #f0f0f0;">23</div><div class="t" style="left:865.6px;top:278.45px;height:11.5px;line-height:11.5px;font-size:9.5px;color:#f0f0f0;transform:scaleX(0.966);transform-origin:0 50%;-webkit-text-stroke:0.25px #f0f0f0;">Crash 1 (R)</div><div style="left:952.5px;top:277.3px;width:14.6px;height:14.4px;background:#4c4c4c;border-radius:2px;"></div><div class="t" style="left:956.7px;top:279.95px;height:9.5px;line-height:9.5px;font-size:7.5px;color:#bcbcbc;transform:scaleX(0.992);transform-origin:0 50%;-webkit-text-stroke:0.2px #bcbcbc;">M</div><div style="left:976.2px;top:277.3px;width:14.6px;height:14.4px;background:#4c4c4c;border-radius:2px;"></div><div class="t" style="left:981.3px;top:279.95px;height:9.5px;line-height:9.5px;font-size:7.5px;color:#bcbcbc;transform:scaleX(0.880);transform-origin:0 50%;-webkit-text-stroke:0.2px #bcbcbc;">S</div><div style="left:998.8px;top:282px;width:37px;height:5px;background:#3a3a3a;"></div><div style="left:1008.6px;top:281.3px;width:1.8px;height:6.4px;background:#f4f4f4;"></div><div style="left:1054px;top:276.9px;width:15.2px;height:15.2px;background:#10a08c;border-radius:2.5px;"></div><div style="left:1086.3px;top:277.3px;width:51.2px;height:14.4px;background:#3c3c3c;border:1px solid #4e4e4e;box-sizing:border-box;border-radius:1px;"></div><div class="t" style="left:1090.6px;top:279px;height:11px;line-height:11px;font-size:9px;color:#e8e8e8;transform:scaleX(0.943);transform-origin:0 50%;-webkit-text-stroke:0.2px #e8e8e8;">Near</div><svg style="left:1125.8px;top:281.3px;" width="9" height="7" viewBox="0 0 9 7"><path d="M0.3 0.6h8.4L4.5 6.4z" fill="#f0f0f0"/></svg><div style="left:830px;top:293.35px;width:308px;height:17.7px;background:#2c2c2c;"></div><div class="t" style="left:836.6px;top:296.15px;height:11.5px;line-height:11.5px;font-size:9.5px;color:#f0f0f0;transform:scaleX(0.928);transform-origin:0 50%;-webkit-text-stroke:0.25px #f0f0f0;">24</div><div class="t" style="left:865.6px;top:296.15px;height:11.5px;line-height:11.5px;font-size:9.5px;color:#f0f0f0;transform:scaleX(0.978);transform-origin:0 50%;-webkit-text-stroke:0.25px #f0f0f0;">Hi Hats (L)</div><div style="left:952.5px;top:295px;width:14.6px;height:14.4px;background:#4c4c4c;border-radius:2px;"></div><div class="t" style="left:956.7px;top:297.65px;height:9.5px;line-height:9.5px;font-size:7.5px;color:#bcbcbc;transform:scaleX(0.992);transform-origin:0 50%;-webkit-text-stroke:0.2px #bcbcbc;">M</div><div style="left:976.2px;top:295px;width:14.6px;height:14.4px;background:#4c4c4c;border-radius:2px;"></div><div class="t" style="left:981.3px;top:297.65px;height:9.5px;line-height:9.5px;font-size:7.5px;color:#bcbcbc;transform:scaleX(0.880);transform-origin:0 50%;-webkit-text-stroke:0.2px #bcbcbc;">S</div><div style="left:998.8px;top:299.7px;width:37px;height:5px;background:#3a3a3a;"></div><div style="left:998.8px;top:299.7px;width:18.8px;height:5px;background:#10c050;"></div><div style="left:1018.7px;top:299px;width:1.8px;height:6.4px;background:#f4f4f4;"></div><div style="left:1054px;top:294.6px;width:15.2px;height:15.2px;background:#ffe08c;border-radius:2.5px;"></div><div style="left:1086.3px;top:295px;width:51.2px;height:14.4px;background:#3c3c3c;border:1px solid #4e4e4e;box-sizing:border-box;border-radius:1px;"></div><div class="t" style="left:1090.6px;top:296.7px;height:11px;line-height:11px;font-size:9px;color:#e8e8e8;transform:scaleX(0.943);transform-origin:0 50%;-webkit-text-stroke:0.2px #e8e8e8;">Near</div><svg style="left:1125.8px;top:299px;" width="9" height="7" viewBox="0 0 9 7"><path d="M0.3 0.6h8.4L4.5 6.4z" fill="#f0f0f0"/></svg><div style="left:830px;top:311.05px;width:308px;height:17.7px;background:#3a3a3a;"></div><div class="t" style="left:836.6px;top:313.85px;height:11.5px;line-height:11.5px;font-size:9.5px;color:#f0f0f0;transform:scaleX(0.928);transform-origin:0 50%;-webkit-text-stroke:0.25px #f0f0f0;">25</div><div class="t" style="left:865.6px;top:313.85px;height:11.5px;line-height:11.5px;font-size:9.5px;color:#f0f0f0;transform:scaleX(0.967);transform-origin:0 50%;-webkit-text-stroke:0.25px #f0f0f0;">Hi Hats (R)</div><div style="left:952.5px;top:312.7px;width:14.6px;height:14.4px;background:#4c4c4c;border-radius:2px;"></div><div class="t" style="left:956.7px;top:315.35px;height:9.5px;line-height:9.5px;font-size:7.5px;color:#bcbcbc;transform:scaleX(0.992);transform-origin:0 50%;-webkit-text-stroke:0.2px #bcbcbc;">M</div><div style="left:976.2px;top:312.7px;width:14.6px;height:14.4px;background:#4c4c4c;border-radius:2px;"></div><div class="t" style="left:981.3px;top:315.35px;height:9.5px;line-height:9.5px;font-size:7.5px;color:#bcbcbc;transform:scaleX(0.880);transform-origin:0 50%;-webkit-text-stroke:0.2px #bcbcbc;">S</div><div style="left:998.8px;top:317.4px;width:37px;height:5px;background:#3a3a3a;"></div><div style="left:998.8px;top:317.4px;width:18.8px;height:5px;background:#10c050;"></div><div style="left:1018.7px;top:316.7px;width:1.8px;height:6.4px;background:#f4f4f4;"></div><div style="left:1054px;top:312.3px;width:15.2px;height:15.2px;background:#ffe08c;border-radius:2.5px;"></div><div style="left:1086.3px;top:312.7px;width:51.2px;height:14.4px;background:#3c3c3c;border:1px solid #4e4e4e;box-sizing:border-box;border-radius:1px;"></div><div class="t" style="left:1090.6px;top:314.4px;height:11px;line-height:11px;font-size:9px;color:#e8e8e8;transform:scaleX(0.943);transform-origin:0 50%;-webkit-text-stroke:0.2px #e8e8e8;">Near</div><svg style="left:1125.8px;top:316.7px;" width="9" height="7" viewBox="0 0 9 7"><path d="M0.3 0.6h8.4L4.5 6.4z" fill="#f0f0f0"/></svg></div>
<div style="left:1132px;top:68.2px;width:5.2px;height:36.5px;background:#b8b8b8;border-radius:2.6px;opacity:0.9;"></div>
<div style="left:831px;top:312.2px;width:305.5px;height:4.8px;background:#b4b4b4;border-radius:2.4px;"></div>
<svg class="g" style="left:0;top:0" width="1200" height="320" viewBox="0 0 1200 320"><defs><linearGradient id="mg" x1="0" y1="0" x2="0" y2="1"><stop offset="0" stop-color="#042804"/><stop offset="1" stop-color="#0a3a0a"/></linearGradient><linearGradient id="mg2" x1="0" y1="0" x2="0" y2="1"><stop offset="0" stop-color="#063406"/><stop offset="1" stop-color="#0c480c"/></linearGradient></defs><rect x="1138" y="17" width="59" height="302" fill="#1c1c1c"/><rect x="1148.8" y="27" width="44.8" height="282.5" fill="url(#mg)"/><rect x="1149.15" y="27" width="3.03" height="282.5" fill="url(#mg2)"/><rect x="1149.15" y="90.6" width="3.03" height="218.9" fill="#18bc18"/><rect x="1152.88" y="27" width="3.03" height="282.5" fill="url(#mg2)"/><rect x="1152.88" y="90.6" width="3.03" height="218.9" fill="#18bc18"/><rect x="1156.62" y="27" width="3.03" height="282.5" fill="url(#mg2)"/><rect x="1156.62" y="84" width="3.03" height="225.5" fill="#18bc18"/><rect x="1156.62" y="76" width="3.03" height="8" fill="#f0b020"/><rect x="1160.35" y="27" width="3.03" height="282.5" fill="url(#mg2)"/><rect x="1160.35" y="235" width="3.03" height="74.5" fill="#18bc18"/><rect x="1164.08" y="27" width="3.03" height="282.5" fill="url(#mg2)"/><rect x="1164.08" y="134" width="3.03" height="175.5" fill="#18bc18"/><rect x="1167.82" y="27" width="3.03" height="282.5" fill="url(#mg2)"/><rect x="1167.82" y="141.6" width="3.03" height="167.9" fill="#18bc18"/><rect x="1171.55" y="27" width="3.03" height="282.5" fill="url(#mg2)"/><rect x="1171.55" y="110" width="3.03" height="199.5" fill="#18bc18"/><rect x="1175.28" y="27" width="3.03" height="282.5" fill="url(#mg2)"/><rect x="1175.28" y="105.5" width="3.03" height="204" fill="#18bc18"/><rect x="1179.02" y="27" width="3.03" height="282.5" fill="url(#mg2)"/><rect x="1179.02" y="114" width="3.03" height="195.5" fill="#18bc18"/><rect x="1182.75" y="27" width="3.03" height="282.5" fill="url(#mg2)"/><rect x="1182.75" y="113" width="3.03" height="196.5" fill="#18bc18"/><rect x="1186.48" y="27" width="3.03" height="282.5" fill="url(#mg2)"/><rect x="1186.48" y="137" width="3.03" height="172.5" fill="#18bc18"/><rect x="1190.22" y="27" width="3.03" height="282.5" fill="url(#mg2)"/><rect x="1190.22" y="134" width="3.03" height="175.5" fill="#18bc18"/><rect x="1149" y="66.6" width="3.33" height="1.8" fill="#c83010"/><rect x="1152.73" y="69.1" width="3.33" height="1.8" fill="#c83010"/><rect x="1156.47" y="72.1" width="3.33" height="1.8" fill="#c83010"/><rect x="1160.2" y="168.6" width="3.33" height="1.8" fill="#c83010"/><rect x="1163.93" y="124.1" width="3.33" height="1.8" fill="#c83010"/><rect x="1167.67" y="120.1" width="3.33" height="1.8" fill="#c83010"/><rect x="1171.4" y="101.6" width="3.33" height="1.8" fill="#c83010"/><rect x="1175.13" y="102.1" width="3.33" height="1.8" fill="#c83010"/><rect x="1178.87" y="105.1" width="3.33" height="1.8" fill="#c83010"/><rect x="1182.6" y="104.6" width="3.33" height="1.8" fill="#c83010"/><rect x="1186.33" y="131.6" width="3.33" height="1.8" fill="#c83010"/><rect x="1190.07" y="129.1" width="3.33" height="1.8" fill="#c83010"/><text x="1146.5" y="29.5" font-size="5.6" fill="#d0d0d0" text-anchor="end">0</text><text x="1147.6" y="86" font-size="5.6" fill="#d0d0d0" text-anchor="end">-12</text><text x="1147.6" y="142" font-size="5.6" fill="#d0d0d0" text-anchor="end">-24</text><text x="1147.6" y="198" font-size="5.6" fill="#d0d0d0" text-anchor="end">-36</text><text x="1147.6" y="254" font-size="5.6" fill="#d0d0d0" text-anchor="end">-48</text><text x="1147.6" y="310.5" font-size="5.6" fill="#d0d0d0" text-anchor="end">-∞</text></svg>
<!-- part_bp -->
<div style="left:17.3px;top:323px;width:1181.2px;height:431px;background:#474747;border-radius:3px 3px 0 0;box-shadow:inset 0 0.8px 0 #5a5a5a;"></div>
<svg style="left:20px;top:326px;" width="12" height="12" viewBox="0 0 12 12"><path d="M0.3 3.4L3.2 0.6v1.6h2.4V0.6l2.9 2.8-2.9 2.8V4.6H3.2v1.6z" fill="#2cb5e8"/><path d="M3.6 8.2l2.9-2.8V7h2.4V5.4l2.9 2.8-2.9 2.8V9.4H6.5V11z" fill="#f4f4f4"/></svg>
<div class="t" style="left:34.7px;top:326.35px;height:10.5px;line-height:10.5px;font-size:8.5px;color:#2cb5e8;font-weight:bold;transform:scaleX(0.886);transform-origin:0 50%;">DOLBY ATMOS MASTER</div>
<svg style="left:0;top:0" width="1200" height="345" viewBox="0 0 1200 345"><rect x="863.4" y="325.5" width="0.8" height="13" fill="#6a6a6a"/><rect x="887.1" y="325.5" width="0.8" height="13" fill="#6a6a6a"/><rect x="927.1" y="325.5" width="0.8" height="13" fill="#6a6a6a"/><rect x="966.6" y="325.5" width="0.8" height="13" fill="#6a6a6a"/><rect x="990.1" y="325.5" width="0.8" height="13" fill="#6a6a6a"/><rect x="1030.3999999999999" y="325.5" width="0.8" height="13" fill="#6a6a6a"/><rect x="1142.8999999999999" y="325.5" width="0.8" height="13" fill="#6a6a6a"/><path d="M847.3 332l5.2-4.6 5.2 4.6M848.8 331v5.6h7.4V331M851.3 336.6v-3.2h2.4v3.2" fill="none" stroke="#e8e8e8" stroke-width="1"/><rect x="871.2" y="327.6" width="2" height="2" fill="#e0e0e0"/><rect x="874.6" y="327.6" width="2" height="2" fill="#e0e0e0"/><rect x="878.0" y="327.6" width="2" height="2" fill="#e0e0e0"/><rect x="871.2" y="330.90000000000003" width="2" height="2" fill="#e0e0e0"/><rect x="874.6" y="330.90000000000003" width="2" height="2" fill="#e0e0e0"/><rect x="878.0" y="330.90000000000003" width="2" height="2" fill="#e0e0e0"/><rect x="871.2" y="334.20000000000005" width="2" height="2" fill="#e0e0e0"/><rect x="874.6" y="334.20000000000005" width="2" height="2" fill="#e0e0e0"/><rect x="878.0" y="334.20000000000005" width="2" height="2" fill="#e0e0e0"/><rect x="894.3" y="327.6" width="7.6" height="6.8" fill="none" stroke="#e0e0e0" stroke-width="1"/><path d="M902.6 333v5M900.1 335.5h5" stroke="#e8e8e8" stroke-width="1.2"/><path d="M910.5 336.3v-8h3.4l1 1.2h4.4v1.8M910.5 336.3l2-5h9l-2 5z" fill="none" stroke="#e0e0e0" stroke-width="1"/><path d="M935 329.2h2M942 329.2h2V337.6h-9v-8.4" fill="none" stroke="#e0e0e0" stroke-width="1"/><path d="M939.5 326.6v6M936.7 331.4l2.8 3.2 2.8-3.2z" fill="#f0f0f0" stroke="#f0f0f0" stroke-width="1.2"/><path d="M954 329.6h4.2l3 3v5.2h-7.2v-8.2zM958.2 329.6v3h3" fill="none" stroke="#e0e0e0" stroke-width="1"/><path d="M950.8 327l3.6 0.4-0.6 3.4" fill="none" stroke="#f0f0f0" stroke-width="1.3"/><circle cx="979" cy="332" r="4.4" fill="none" stroke="#666" stroke-width="1"/><path d="M979 329.6v2.6h2" fill="none" stroke="#666" stroke-width="0.9"/><path d="M1001.6 329.2c3.4-1.2 6.6 1.2 6.4 6.6" fill="none" stroke="#f4f4f4" stroke-width="2"/><path d="M996.6 331.4l5.8-4 0.4 6.4z" fill="#f4f4f4"/><path d="M1020.2 329.2c-3.4-1.2-6.6 1.2-6.4 6.6" fill="none" stroke="#6a6a6a" stroke-width="2"/><path d="M1025.2 331.4l-5.8-4-0.4 6.4z" fill="#6a6a6a"/><path d="M1048 332h-11M1041.6 327l-5 5 5 5" fill="none" stroke="#f4f4f4" stroke-width="1.5"/><path d="M1052.8 332h11M1059.2 327l5 5-5 5" fill="none" stroke="#6a6a6a" stroke-width="1.4"/><rect x="1067" y="326.2" width="73" height="12" fill="#3d3d3d"/><path d="M1130.6 329.8h6.4l-3.2 4.6z" fill="#f0f0f0"/><path d="M1148 327h7M1148.6 329.2h5.8l-2.9 3.4z" fill="#e0e0e0" stroke="#e0e0e0" stroke-width="0.8"/><rect x="1164.6" y="328.6" width="6.4" height="6" fill="none" stroke="#e8e8e8" stroke-width="1"/><rect x="1164.2" y="328.2" width="7.2" height="2" fill="#e8e8e8"/><rect x="1180.4" y="328.6" width="2.4" height="2.4" fill="#e8e8e8"/><rect x="1183.8" y="328.6" width="5" height="2.4" fill="#e8e8e8"/><rect x="1180.4" y="332.2" width="2.4" height="2.4" fill="#e8e8e8"/><rect x="1183.8" y="332.2" width="5" height="2.4" fill="#e8e8e8"/></svg>
<div class="t" style="left:1071.4px;top:327.4px;height:10px;line-height:10px;font-size:8px;color:#787878;transform:scaleX(0.919);transform-origin:0 50%;">Name</div>
<div style="left:21.5px;top:342.5px;width:1172.5px;height:19px;background:#1c1c1c;"></div>
<div style="left:22px;top:343.5px;width:1171.5px;height:17.8px;background:#2f2f2f;"></div>
<div style="left:22px;top:343.5px;width:43.2px;height:17.8px;background:#2f2f2f;"></div><svg style="left:27px;top:346px;" width="13" height="13" viewBox="0 0 13 13"><path d="M1 0.8l10.5 5.6L1 12z" fill="#18a868"/><path d="M2.2 4.2l1.6 5 1.8-3.6 1.6 3.2 2.4-6" fill="none" stroke="#f4f4f4" stroke-width="1.5"/></svg><div class="t" style="left:42.6px;top:348.1px;height:11px;line-height:11px;font-size:9px;color:#f2f2f2;font-weight:bold;transform:scaleX(0.795);transform-origin:0 50%;">FILE</div>
<div style="left:66px;top:343.5px;width:47.3px;height:17.8px;background:#2f2f2f;"></div><svg style="left:70.5px;top:347.5px;" width="13" height="10" viewBox="0 0 13 10"><path d="M0.4 5C2.2 1.8 4.2 0.6 6.5 0.6S10.8 1.8 12.6 5C10.8 8.2 8.8 9.4 6.5 9.4S2.2 8.2 0.4 5z" fill="#f0f0f0"/><circle cx="6.5" cy="5" r="2.7" fill="#2b2b2b"/><circle cx="6.5" cy="5" r="1.3" fill="#f0f0f0"/></svg><div class="t" style="left:86.5px;top:348.1px;height:11px;line-height:11px;font-size:9px;color:#f2f2f2;font-weight:bold;transform:scaleX(0.804);transform-origin:0 50%;">VIEW</div>
<div style="left:114px;top:343.5px;width:47.3px;height:17.8px;background:#2f2f2f;"></div><svg style="left:121px;top:346.5px;" width="11" height="12" viewBox="0 0 11 12"><path d="M2 6.6c3.4 0.4 6.6-1 6.8-3.2C9 1 5.6 0.8 3.6 3.2 1.2 6 1.4 10.6 4.6 10.8c1.6 0.1 3-0.6 4-1.8" fill="none" stroke="#f0f0f0" stroke-width="1.6"/></svg><div class="t" style="left:135px;top:348.1px;height:11px;line-height:11px;font-size:9px;color:#f2f2f2;font-weight:bold;transform:scaleX(0.829);transform-origin:0 50%;">EDIT</div>
<div style="left:162px;top:343.5px;width:55.3px;height:17.8px;background:#2f2f2f;"></div><svg style="left:167.5px;top:346.5px;" width="12" height="12" viewBox="0 0 12 12"><path d="M0.8 8v3h10.4V8" fill="none" stroke="#f0f0f0" stroke-width="1.5"/><path d="M7 0.4L5 5.2H2.6L6 9l3.4-3.8H7.4z" fill="#f0f0f0"/></svg><div class="t" style="left:182.5px;top:348.1px;height:11px;line-height:11px;font-size:9px;color:#f2f2f2;font-weight:bold;transform:scaleX(0.818);transform-origin:0 50%;">INSERT</div>
<div style="left:218px;top:343.5px;width:61.8px;height:17.8px;background:#2f2f2f;"></div><svg style="left:223.5px;top:347px;" width="13" height="11" viewBox="0 0 13 11"><circle cx="4" cy="4" r="2.4" fill="none" stroke="#f0f0f0" stroke-width="2.2"/><circle cx="9.6" cy="7.6" r="1.8" fill="none" stroke="#f0f0f0" stroke-width="1.8"/></svg><div class="t" style="left:238.8px;top:348.1px;height:11px;line-height:11px;font-size:9px;color:#f2f2f2;font-weight:bold;transform:scaleX(0.754);transform-origin:0 50%;">PROCESS</div>
<div style="left:280.6px;top:343.5px;width:45.7px;height:17.8px;background:#2f2f2f;"></div><svg style="left:286px;top:346.5px;" width="12" height="12" viewBox="0 0 12 12"><path d="M1 7.4v3.8h10.4V7.4" fill="none" stroke="#f0f0f0" stroke-width="1.2"/><path d="M2.6 9c0.4-8.4 2-8.4 2.8-3.6 0.5 3 1.3 3 1.8 0.2 0.6-3 1.8-3 2.6 3.4" fill="none" stroke="#f0f0f0" stroke-width="1.2"/></svg><div class="t" style="left:301.8px;top:348.1px;height:11px;line-height:11px;font-size:9px;color:#f2f2f2;font-weight:bold;transform:scaleX(0.766);transform-origin:0 50%;">CLIP</div>
<div style="left:327px;top:343.5px;width:49.3px;height:17.8px;background:#2f2f2f;"></div><svg style="left:332px;top:346.5px;" width="14" height="12" viewBox="0 0 14 12"><path d="M1 11.2L12.6 1" fill="none" stroke="#e8e8e8" stroke-width="1.1"/></svg><div class="t" style="left:348px;top:348.1px;height:11px;line-height:11px;font-size:9px;color:#f2f2f2;font-weight:bold;transform:scaleX(0.812);transform-origin:0 50%;">FADE</div>
<div style="left:377px;top:343.5px;width:66.5px;height:17.8px;background:#2f2f2f;"></div><svg style="left:382.5px;top:346.5px;" width="13" height="12" viewBox="0 0 13 12"><path d="M0.8 11.6L3.6 1.4h5.6l2.8 10.2" fill="none" stroke="#e8e8e8" stroke-width="1.1"/></svg><div class="t" style="left:398px;top:348.1px;height:11px;line-height:11px;font-size:9px;color:#f2f2f2;font-weight:bold;transform:scaleX(0.779);transform-origin:0 50%;">ENVELOPE</div>
<div style="left:444.3px;top:343.5px;width:56.2px;height:17.8px;background:#5b5e61;"></div><svg style="left:450px;top:347.5px;" width="12" height="10" viewBox="0 0 12 10"><path d="M0.2 0.6h1.4c2.6 0 4.2 1.8 4.2 4.2S4.2 9 1.6 9H0.2zM11.8 0.6h-1.4C7.8 0.6 6.2 2.4 6.2 4.8S7.8 9 10.4 9h1.4z" fill="#f8f8f8"/></svg><div class="t" style="left:465px;top:348.1px;height:11px;line-height:11px;font-size:9px;color:#f2f2f2;font-weight:bold;transform:scaleX(0.848);transform-origin:0 50%;">ATMOS</div>
<div style="left:501.3px;top:343.5px;width:59.2px;height:17.8px;background:#2f2f2f;"></div><svg style="left:507px;top:347.5px;" width="11" height="10" viewBox="0 0 11 10"><path d="M0.6 1.2h5.6c2.4 0 4 1.6 4 3.6s-1.6 3.6-4 3.6H0.6M0.6 4.8h5.4" fill="none" stroke="#f0f0f0" stroke-width="1.5"/></svg><div class="t" style="left:521.8px;top:348.1px;height:11px;line-height:11px;font-size:9px;color:#f2f2f2;font-weight:bold;transform:scaleX(0.789);transform-origin:0 50%;">RENDER</div>
<div style="left:65.2px;top:343.5px;width:0.8px;height:17.8px;background:#1c1c1c;"></div>
<div style="left:113.2px;top:343.5px;width:0.8px;height:17.8px;background:#1c1c1c;"></div>
<div style="left:161.2px;top:343.5px;width:0.8px;height:17.8px;background:#1c1c1c;"></div>
<div style="left:217.2px;top:343.5px;width:0.8px;height:17.8px;background:#1c1c1c;"></div>
<div style="left:279.8px;top:343.5px;width:0.8px;height:17.8px;background:#1c1c1c;"></div>
<div style="left:326.2px;top:343.5px;width:0.8px;height:17.8px;background:#1c1c1c;"></div>
<div style="left:376.2px;top:343.5px;width:0.8px;height:17.8px;background:#1c1c1c;"></div>
<div style="left:443.5px;top:343.5px;width:0.8px;height:17.8px;background:#1c1c1c;"></div>
<div style="left:560.5px;top:343.5px;width:0.8px;height:17.8px;background:#1c1c1c;"></div>
<svg style="left:1181px;top:349px;" width="8" height="6" viewBox="0 0 8 6"><path d="M0.8 5L4 1.6 7.2 5" fill="none" stroke="#f4f4f4" stroke-width="1.6"/></svg>
<div style="left:22px;top:361.3px;width:1171.5px;height:75.2px;background:linear-gradient(#5e6163,#4d4f51);"></div>
<div style="left:22px;top:425px;width:70.2px;height:11.5px;background:#606264;"></div>
<div style="left:93px;top:425px;width:151.2px;height:11.5px;background:#606264;"></div>
<div style="left:245px;top:425px;width:48px;height:11.5px;background:#606264;"></div>
<div style="left:92.2px;top:361.3px;width:0.8px;height:75.2px;background:#65686a;"></div>
<div style="left:244.2px;top:361.3px;width:0.8px;height:75.2px;background:#65686a;"></div>
<div style="left:293px;top:361.3px;width:0.8px;height:75.2px;background:#65686a;"></div>
<div class="t" style="left:42.1px;top:425.95px;height:9.5px;line-height:9.5px;font-size:7.5px;color:#e4e4e4;font-weight:bold;transform:scaleX(0.812);transform-origin:0 50%;">CLIP VIEW</div>
<div class="t" style="left:156.7px;top:425.95px;height:9.5px;line-height:9.5px;font-size:7.5px;color:#e4e4e4;font-weight:bold;transform:scaleX(0.813);transform-origin:0 50%;">EDITORS</div>
<div class="t" style="left:260px;top:425.95px;height:9.5px;line-height:9.5px;font-size:7.5px;color:#e4e4e4;font-weight:bold;transform:scaleX(0.809);transform-origin:0 50%;">TOOLS</div>
<svg style="left:28px;top:369px;" width="12" height="12" viewBox="0 0 12 12"><path d="M0.6 6c0.8-5 2.4-5 3.2 0s2.4 5 3.2 0 2-4.4 2.8-1.4" fill="none" stroke="#858789" stroke-width="1"/></svg>
<div class="t" style="left:42.6px;top:369.95px;height:10.5px;line-height:10.5px;font-size:8.5px;color:#8e9092;transform:scaleX(0.929);transform-origin:0 50%;">Format</div>
<svg style="left:82.5px;top:373.5px;" width="5" height="4" viewBox="0 0 5 4"><path d="M0.3 0.6h4.4L2.5 3.4z" fill="#858789"/></svg>
<div style="left:28.5px;top:388.8px;width:10px;height:10.4px;border:1px solid #5a5d5f;box-sizing:border-box;"></div>
<div class="t" style="left:42.8px;top:389.05px;height:10.5px;line-height:10.5px;font-size:8.5px;color:#8e9092;transform:scaleX(0.897);transform-origin:0 50%;">As Renderer</div>
<svg style="left:28px;top:407px;" width="11" height="13" viewBox="0 0 11 13"><path d="M4.4 0.8h2v4.4h3v2.6H1.4V5.2h3zM1 8.4h8.8v3.8H1zM3.2 10v2M5.4 10v2M7.6 10v2" fill="none" stroke="#858789" stroke-width="0.9"/></svg>
<div class="t" style="left:42.8px;top:408.05px;height:10.5px;line-height:10.5px;font-size:8.5px;color:#8e9092;transform:scaleX(0.916);transform-origin:0 50%;">Cleanup</div>
<svg style="left:114.5px;top:370px;" width="21" height="21" viewBox="0 0 21 21"><rect x="1" y="1" width="16.4" height="15.6" rx="1.6" fill="none" stroke="#f4f4f4" stroke-width="1.9"/><path d="M1 5.4h16.4M6.6 5.4V9.8M1 9.8h10" fill="none" stroke="#f4f4f4" stroke-width="1.7"/><path d="M5.6 14.8c2.6-3.8 5-5 7.6-5s5 1.2 7.6 5c-2.6 3.8-5 5-7.6 5s-5-1.2-7.6-5z" fill="#2cb5e8" stroke="#585b5e" stroke-width="1.2"/><circle cx="13.2" cy="14.8" r="2.7" fill="#505356"/><circle cx="13.2" cy="14.8" r="1.3" fill="#2cb5e8"/></svg>
<div class="t" style="left:101px;top:396.95px;height:10.5px;line-height:10.5px;font-size:8.5px;color:#ececec;transform:scaleX(0.964);transform-origin:0 50%;-webkit-text-stroke:0.3px #ececec;">Dolby Atmos</div>
<div class="t" style="left:112.8px;top:407.35px;height:10.5px;line-height:10.5px;font-size:8.5px;color:#ececec;transform:scaleX(0.862);transform-origin:0 50%;-webkit-text-stroke:0.3px #ececec;">Events</div>
<svg style="left:162px;top:369px;" width="20" height="21" viewBox="0 0 20 21"><path d="M1 1.6l8.9 8 8.9-8" fill="none" stroke="#2cb5e8" stroke-width="3.2"/><path d="M1 10.4l8.9 8 8.9-8" fill="none" stroke="#f8f8f8" stroke-width="3.2"/></svg>
<div class="t" style="left:163.4px;top:396.95px;height:10.5px;line-height:10.5px;font-size:8.5px;color:#ececec;transform:scaleX(0.983);transform-origin:0 50%;-webkit-text-stroke:0.3px #ececec;">Trim</div>
<div class="t" style="left:155px;top:407.35px;height:10.5px;line-height:10.5px;font-size:8.5px;color:#ececec;transform:scaleX(0.950);transform-origin:0 50%;-webkit-text-stroke:0.3px #ececec;">Downmix</div>
<svg style="left:204px;top:366.5px;" width="25" height="25" viewBox="0 0 25 25"><path d="M0.4 0.6h1.4c2.6 0 4 2 4 4.4s-1.4 4.4-4 4.4H0.4zM11.8 0.6h-1.4c-2.6 0-4 2-4 4.4s1.4 4.4 4 4.4h1.4z" fill="#f8f8f8"/><circle cx="16.2" cy="16.6" r="7" fill="#54575a" stroke="#2cb5e8" stroke-width="2.5"/><circle cx="16.2" cy="13.2" r="1.4" fill="#2cb5e8"/><rect x="15" y="15.4" width="2.4" height="5.2" fill="#2cb5e8"/></svg>
<div class="t" style="left:207.9px;top:396.95px;height:10.5px;line-height:10.5px;font-size:8.5px;color:#ececec;transform:scaleX(0.900);transform-origin:0 50%;-webkit-text-stroke:0.3px #ececec;">ADM</div>
<div class="t" style="left:195.7px;top:407.35px;height:10.5px;line-height:10.5px;font-size:8.5px;color:#ececec;transform:scaleX(0.974);transform-origin:0 50%;-webkit-text-stroke:0.3px #ececec;">Information</div>
<svg style="left:258px;top:371px;" width="24" height="16" viewBox="0 0 24 16"><path d="M0.2 11L15 1.4v7z" fill="#f4f4f4"/><path d="M1 14.8l14-4.4v4.4z" fill="#2cb5e8"/></svg>
<div class="t" style="left:274.4px;top:372.4px;height:14px;line-height:14px;font-size:12px;color:#f4f4f4;font-weight:bold;transform:scaleX(0.819);transform-origin:0 50%;">?</div>
<div class="t" style="left:252.5px;top:401.95px;height:10.5px;line-height:10.5px;font-size:8.5px;color:#ececec;transform:scaleX(0.917);transform-origin:0 50%;-webkit-text-stroke:0.3px #ececec;">Loudness</div>
<svg style="left:0;top:0" width="1200" height="440" viewBox="0 0 1200 440"><polygon points="1150,390.5 1150.9,389.8 1151.9,388.9 1152.8,389.2 1153.7,388.4 1154.7,386.2 1155.6,386 1156.5,386 1157.5,385.4 1158.4,385.3 1159.3,384.2 1160.3,383.3 1161.2,385 1162.2,381.6 1163.1,382.9 1164,383.5 1165,385.4 1165.9,385.6 1166.8,384.6 1167.8,387.5 1168.7,385.6 1169.6,387.1 1170.6,387.9 1171.5,388.7 1172.4,389 1173.4,389.6 1174.3,390.5 1174.3,391.5 1173.4,392.5 1172.4,393.4 1171.5,393.6 1170.6,393.8 1169.6,394.1 1168.7,394.9 1167.8,394.7 1166.8,394.7 1165.9,398.3 1165,398.3 1164,399.5 1163.1,399.9 1162.2,398.3 1161.2,395.7 1160.3,398 1159.3,395.2 1158.4,397.5 1157.5,397.4 1156.5,394.5 1155.6,395 1154.7,394.5 1153.7,393.5 1152.8,394 1151.9,392.5 1150.9,392.3 1150,391.5" fill="#1cbcf4"/><polygon points="1160.8,406.3 1161.7,405.3 1162.7,404.6 1163.6,405 1164.5,402.7 1165.5,402.1 1166.4,402.6 1167.3,401.9 1168.2,403.3 1169.2,401.9 1170.1,399.3 1171,398.6 1172,398.9 1172.9,401.8 1173.8,401 1174.8,397.7 1175.7,401.4 1176.6,400.8 1177.6,402.6 1178.5,401.4 1179.4,401.4 1180.3,403.4 1181.3,404.4 1182.2,404.5 1183.1,405.4 1184.1,405.6 1185,406.3 1185,407.3 1184.1,408 1183.1,409 1182.2,409.5 1181.3,409.1 1180.3,409.7 1179.4,410.5 1178.5,413.1 1177.6,413.7 1176.6,413.3 1175.7,415.1 1174.8,415.4 1173.8,412.6 1172.9,416.6 1172,412.2 1171,411.9 1170.1,411.6 1169.2,414.3 1168.2,411.1 1167.3,411.8 1166.4,410.3 1165.5,409.6 1164.5,410.3 1163.6,409.3 1162.7,409.3 1161.7,408.4 1160.8,407.3" fill="#fafafa"/></svg>
<div style="left:21.5px;top:436.5px;width:1172.5px;height:22.5px;background:#272727;"></div>
<div style="left:23px;top:438px;width:82px;height:21px;background:#6c6c6c;border-radius:3px 0 0 0;"></div>
<svg style="left:97.5px;top:438px;" width="7.5" height="7.5" viewBox="0 0 7.5 7.5"><path d="M0 0h7.5v7.5z" fill="#e81010"/></svg>
<svg style="left:28px;top:443.5px;" width="9" height="10" viewBox="0 0 9 10"><path d="M0.4 3.4h2.2L5.4 0.8v8.4L2.6 6.6H0.4z" fill="#1ed81e"/><path d="M6.8 2.4c1.2 1.4 1.2 3.8 0 5.2" fill="none" stroke="#1ed81e" stroke-width="1"/></svg>
<div class="t" style="left:44.5px;top:443.55px;height:10.5px;line-height:10.5px;font-size:8.5px;color:#fafafa;font-weight:bold;transform:scaleX(0.913);transform-origin:0 50%;">File Group</div>
<svg style="left:112.5px;top:443px;" width="20" height="11" viewBox="0 0 20 11"><path d="M5.3 0.4v10.2M0.2 5.5h10.2" stroke="#f8f8f8" stroke-width="2"/><path d="M15.6 4.6h4L17.6 7z" fill="#c8c8c8"/></svg>
<div style="left:21.4px;top:458.8px;width:1173px;height:268.2px;background:#545454;border:1px solid;border-color:#6c6c6c #858585 #858585 #6a6a6a;box-sizing:border-box;"></div>
<div style="left:22.4px;top:458.8px;width:1171px;height:2.8px;background:#6c6c6c;"></div>
<div style="left:22.4px;top:461.6px;width:1171px;height:22px;background:#4d4d4d;"></div>
<div style="left:25px;top:483.2px;width:1165.8px;height:240.5px;background:#2c2c2c;border:1px solid;border-color:#626262 #8c8c8c #949494 #5c5c5c;box-sizing:border-box;"></div>
<div style="left:26.3px;top:464.8px;width:141.8px;height:15.4px;background:#707070;border-radius:2px;"></div>
<svg style="left:161px;top:464.8px;" width="7" height="7" viewBox="0 0 7 7"><path d="M0 0h7v7z" fill="#e81010"/></svg>
<svg style="left:30.5px;top:467.5px;" width="9" height="10" viewBox="0 0 9 10"><path d="M0.4 3.4h2.2L5.4 0.8v8.4L2.6 6.6H0.4z" fill="#1ed81e"/><path d="M6.8 2.4c1.2 1.4 1.2 3.8 0 5.2" fill="none" stroke="#1ed81e" stroke-width="1"/></svg>
<div class="t" style="left:46.8px;top:467.6px;height:10px;line-height:10px;font-size:8px;color:#fafafa;font-weight:bold;transform:scaleX(1.009);transform-origin:0 50%;">Close to the Limit – ADM *</div>
<div style="left:1162.2px;top:465.6px;width:10.4px;height:10.2px;border:1px solid #d0d0d0;box-sizing:border-box;"></div>
<svg style="left:1180.6px;top:467.5px;" width="9" height="7" viewBox="0 0 9 7"><rect x="0" y="0.3" width="2.4" height="2.4" fill="#e8e8e8"/><rect x="3.4" y="0.3" width="5" height="2.4" fill="#e8e8e8"/><rect x="0" y="3.9" width="2.4" height="2.4" fill="#e8e8e8"/><rect x="3.4" y="3.9" width="5" height="2.4" fill="#e8e8e8"/></svg>
<!-- part_tracks -->
<div style="left:26.5px;top:484.5px;width:137px;height:209.5px;background:#2e2e2e;"></div><div style="left:136px;top:503px;width:7px;height:191px;background:#242424;"></div><div style="left:143px;top:503px;width:20.6px;height:191px;background:#262626;"></div><svg style="left:26.5px;top:485px;" width="137" height="18" viewBox="0 0 137 18"><path d="M9 4v10M4 9h10" stroke="#f8f8f8" stroke-width="2"/><path d="M21.6 4.4h3.6v9.6h-3.6zM25.2 9h3" fill="none" stroke="#5c5c5c" stroke-width="1" stroke-dasharray="1.6 1"/><circle cx="42.6" cy="7" r="2.6" fill="none" stroke="#f0f0f0" stroke-width="1.2"/><path d="M44.6 9l3.4 3.6" stroke="#f0f0f0" stroke-width="1.6"/><path d="M92 3.6V14M89.4 3.6h5.2M89.4 14h5.2M86.6 8.8h10.8" stroke="#e8e8e8" stroke-width="1" fill="none"/><rect x="104" y="3.4" width="11" height="11" fill="none" stroke="#f4f4f4" stroke-width="1.1"/><rect x="105.6" y="5.6" width="4.6" height="2.6" fill="#f4f4f4"/><rect x="108.6" y="9.4" width="5" height="2.6" fill="#f4f4f4"/><path d="M126 3v11.4M126 3.6h2.4M126 6h1.6M126 8.4h2.4M126 10.8h1.6M126 13.6h2.4" stroke="#e8e8e8" stroke-width="1" fill="none"/></svg>
<svg class="g" style="left:0;top:0" width="1200" height="700" viewBox="0 0 1200 700"><defs><linearGradient id="g0" gradientUnits="userSpaceOnUse" x1="0" y1="0" x2="1011.4" y2="0"><stop offset="0" stop-color="#6a64e8"/><stop offset=".0947" stop-color="#5c58ea"/><stop offset=".1001" stop-color="#5c58ea"/><stop offset=".1002" stop-color="#3c78f4"/><stop offset=".1451" stop-color="#3c80f4"/><stop offset=".1481" stop-color="#1cc0fa"/><stop offset=".1511" stop-color="#3c94f6"/><stop offset=".1584" stop-color="#4c78f2"/><stop offset=".1616" stop-color="#1cc8fc"/><stop offset=".1692" stop-color="#24b4f8"/><stop offset=".176" stop-color="#24b4f8"/><stop offset=".1796" stop-color="#1cc8fc"/><stop offset=".1877" stop-color="#4878f2"/><stop offset=".1966" stop-color="#4c70f2"/><stop offset=".2015" stop-color="#3c80f4"/><stop offset=".2045" stop-color="#1cc0fa"/><stop offset=".2074" stop-color="#1cc4fa"/><stop offset=".2138" stop-color="#1cc4fa"/><stop offset=".2211" stop-color="#1cc8fc"/><stop offset=".2257" stop-color="#1cc8fc"/><stop offset=".2296" stop-color="#1cc4fa"/><stop offset=".2334" stop-color="#4c78f2"/><stop offset=".239" stop-color="#24b4f8"/><stop offset=".242" stop-color="#1cc4fa"/><stop offset=".2462" stop-color="#24b4f8"/><stop offset=".2559" stop-color="#4878f2"/><stop offset=".2677" stop-color="#5a64f0"/><stop offset=".2846" stop-color="#4c6cf2"/><stop offset=".2875" stop-color="#1cc0fa"/><stop offset=".2905" stop-color="#3c94f6"/><stop offset=".2953" stop-color="#24b4f8"/><stop offset=".3015" stop-color="#24b4f8"/><stop offset=".3055" stop-color="#24b4f8"/><stop offset=".3142" stop-color="#1cc8fc"/><stop offset=".319" stop-color="#3c94f6"/><stop offset=".3244" stop-color="#24b4f8"/><stop offset=".3279" stop-color="#4878f2"/><stop offset=".337" stop-color="#4c70f2"/><stop offset=".3399" stop-color="#5a60f0"/><stop offset=".3429" stop-color="#1cc0fa"/><stop offset=".3459" stop-color="#4c78f2"/><stop offset=".3523" stop-color="#4c78f2"/><stop offset=".3593" stop-color="#3c94f6"/><stop offset=".3626" stop-color="#3c94f6"/><stop offset=".3705" stop-color="#1cc8fc"/><stop offset=".3776" stop-color="#24b4f8"/><stop offset=".3848" stop-color="#4878f2"/><stop offset=".3943" stop-color="#5a64f0"/><stop offset=".423" stop-color="#4c6cf2"/><stop offset=".4259" stop-color="#1cc0fa"/><stop offset=".4289" stop-color="#3c94f6"/><stop offset=".4377" stop-color="#1cc4fa"/><stop offset=".4463" stop-color="#3c94f6"/><stop offset=".4542" stop-color="#1cc4fa"/><stop offset=".4605" stop-color="#1cc8fc"/><stop offset=".4656" stop-color="#4c78f2"/><stop offset=".4687" stop-color="#4878f2"/><stop offset=".4783" stop-color="#4c70f2"/><stop offset=".4803" stop-color="#4c6cf2"/><stop offset=".4833" stop-color="#1cc0fa"/><stop offset=".4863" stop-color="#24b4f8"/><stop offset=".4929" stop-color="#24b4f8"/><stop offset=".4966" stop-color="#24b4f8"/><stop offset=".5051" stop-color="#1cc8fc"/><stop offset=".5101" stop-color="#3c94f6"/><stop offset=".5183" stop-color="#3c94f6"/><stop offset=".5259" stop-color="#1cc4fa"/><stop offset=".5315" stop-color="#4878f2"/><stop offset=".5426" stop-color="#4c70f2"/><stop offset=".5624" stop-color="#5a60f0"/><stop offset=".5654" stop-color="#1cc0fa"/><stop offset=".5683" stop-color="#1cc4fa"/><stop offset=".5739" stop-color="#1cc4fa"/><stop offset=".5781" stop-color="#4c78f2"/><stop offset=".5846" stop-color="#24b4f8"/><stop offset=".5896" stop-color="#4c78f2"/><stop offset=".5931" stop-color="#3c94f6"/><stop offset=".5979" stop-color="#1cc4fa"/><stop offset=".6046" stop-color="#3c94f6"/><stop offset=".6073" stop-color="#4878f2"/><stop offset=".6168" stop-color="#5a64f0"/><stop offset=".6187" stop-color="#3c80f4"/><stop offset=".6217" stop-color="#1cc0fa"/><stop offset=".6247" stop-color="#1cc4fa"/><stop offset=".6281" stop-color="#4c78f2"/><stop offset=".6343" stop-color="#1cc8fc"/><stop offset=".6374" stop-color="#4c78f2"/><stop offset=".6424" stop-color="#3c94f6"/><stop offset=".6481" stop-color="#1cc8fc"/><stop offset=".6519" stop-color="#1cc4fa"/><stop offset=".6596" stop-color="#3c94f6"/><stop offset=".6676" stop-color="#24b4f8"/><stop offset=".6739" stop-color="#4878f2"/><stop offset=".686" stop-color="#5a64f0"/><stop offset=".7018" stop-color="#3c80f4"/><stop offset=".7048" stop-color="#1cc0fa"/><stop offset=".7077" stop-color="#1cc8fc"/><stop offset=".7113" stop-color="#1cc8fc"/><stop offset=".7165" stop-color="#1cc4fa"/><stop offset=".7245" stop-color="#3c94f6"/><stop offset=".7283" stop-color="#4c78f2"/><stop offset=".7363" stop-color="#4c78f2"/><stop offset=".742" stop-color="#1cc8fc"/><stop offset=".7459" stop-color="#4878f2"/><stop offset=".7552" stop-color="#4c70f2"/><stop offset=".7582" stop-color="#5a60f0"/><stop offset=".7611" stop-color="#1cc0fa"/><stop offset=".7641" stop-color="#3c94f6"/><stop offset=".7688" stop-color="#1cc8fc"/><stop offset=".7771" stop-color="#1cc4fa"/><stop offset=".7823" stop-color="#4c78f2"/><stop offset=".791" stop-color="#1cc8fc"/><stop offset=".7991" stop-color="#24b4f8"/><stop offset=".8026" stop-color="#3c94f6"/><stop offset=".8086" stop-color="#4c78f2"/><stop offset=".8125" stop-color="#4878f2"/><stop offset=".8244" stop-color="#4c70f2"/><stop offset=".8402" stop-color="#4c6cf2"/><stop offset=".8432" stop-color="#1cc0fa"/><stop offset=".8462" stop-color="#3c94f6"/><stop offset=".8532" stop-color="#1cc4fa"/><stop offset=".8607" stop-color="#3c94f6"/><stop offset=".867" stop-color="#3c94f6"/><stop offset=".8749" stop-color="#3c94f6"/><stop offset=".8843" stop-color="#4878f2"/><stop offset=".8936" stop-color="#4c70f2"/><stop offset=".8966" stop-color="#5a60f0"/><stop offset=".8995" stop-color="#1cc0fa"/><stop offset=".9025" stop-color="#24b4f8"/><stop offset=".9089" stop-color="#1cc4fa"/><stop offset=".9147" stop-color="#3c94f6"/><stop offset=".9196" stop-color="#3c94f6"/><stop offset=".9253" stop-color="#4c78f2"/><stop offset=".9321" stop-color="#3c94f6"/><stop offset=".9372" stop-color="#3c94f6"/><stop offset=".9445" stop-color="#1cc8fc"/><stop offset=".951" stop-color="#4878f2"/><stop offset=".9628" stop-color="#5a64f0"/><stop offset=".9786" stop-color="#3c80f4"/><stop offset=".9816" stop-color="#1cc0fa"/><stop offset=".9846" stop-color="#1cc8fc"/><stop offset=".9933" stop-color="#3c94f6"/><stop offset=".9994" stop-color="#4c78f2"/><stop offset="1." stop-color="#24b4f8"/><stop offset="1." stop-color="#4878f2"/><stop offset="1." stop-color="#4c70f2"/></linearGradient><linearGradient id="g10" gradientUnits="userSpaceOnUse" x1="0" y1="0" x2="1011.4" y2="0"><stop offset=".1002" stop-color="#0cf860"/><stop offset=".1096" stop-color="#0cf860"/><stop offset=".1125" stop-color="#08f8a8"/><stop offset=".116" stop-color="#10ecf4"/><stop offset=".1219" stop-color="#10ecf4"/><stop offset=".1259" stop-color="#2cb0fa"/><stop offset=".1318" stop-color="#4c74f6"/><stop offset=".1358" stop-color="#4c74f6"/><stop offset=".1394" stop-color="#896ef3"/><stop offset=".1418" stop-color="#4c74f6"/><stop offset=".1443" stop-color="#7664f2"/><stop offset=".1481" stop-color="#7664f2"/><stop offset=".1506" stop-color="#4c74f6"/><stop offset=".1549" stop-color="#7664f2"/><stop offset=".1576" stop-color="#616cf4"/><stop offset=".1614" stop-color="#9c78f4"/><stop offset=".1669" stop-color="#7664f2"/><stop offset=".1694" stop-color="#7664f2"/><stop offset=".1696" stop-color="#0cf860"/><stop offset=".178" stop-color="#0cf860"/><stop offset=".1807" stop-color="#08f8a8"/><stop offset=".1838" stop-color="#10ecf4"/><stop offset=".1963" stop-color="#10ecf4"/><stop offset=".2002" stop-color="#2cb0fa"/><stop offset=".2061" stop-color="#4c74f6"/><stop offset=".2101" stop-color="#896ef3"/><stop offset=".2133" stop-color="#9c78f4"/><stop offset=".2164" stop-color="#4c74f6"/><stop offset=".2204" stop-color="#9c78f4"/><stop offset=".2231" stop-color="#9c78f4"/><stop offset=".2266" stop-color="#4c74f6"/><stop offset=".2318" stop-color="#7664f2"/><stop offset=".235" stop-color="#9c78f4"/><stop offset=".2375" stop-color="#896ef3"/><stop offset=".2392" stop-color="#7664f2"/><stop offset=".2394" stop-color="#0cf860"/><stop offset=".2469" stop-color="#0cf860"/><stop offset=".2493" stop-color="#08f8a8"/><stop offset=".252" stop-color="#10ecf4"/><stop offset=".2661" stop-color="#10ecf4"/><stop offset=".27" stop-color="#2cb0fa"/><stop offset=".276" stop-color="#4c74f6"/><stop offset=".2799" stop-color="#616cf4"/><stop offset=".2841" stop-color="#9c78f4"/><stop offset=".2868" stop-color="#896ef3"/><stop offset=".2913" stop-color="#9c78f4"/><stop offset=".2945" stop-color="#9c78f4"/><stop offset=".2981" stop-color="#7664f2"/><stop offset=".3012" stop-color="#4c74f6"/><stop offset=".3052" stop-color="#616cf4"/><stop offset=".3095" stop-color="#7664f2"/><stop offset=".3097" stop-color="#0cf860"/><stop offset=".32" stop-color="#0cf860"/><stop offset=".3233" stop-color="#08f8a8"/><stop offset=".3271" stop-color="#10ecf4"/><stop offset=".3324" stop-color="#10ecf4"/><stop offset=".3364" stop-color="#2cb0fa"/><stop offset=".3423" stop-color="#4c74f6"/><stop offset=".3463" stop-color="#4c74f6"/><stop offset=".3516" stop-color="#7664f2"/><stop offset=".357" stop-color="#7664f2"/><stop offset=".3572" stop-color="#0cf860"/><stop offset=".3685" stop-color="#0cf860"/><stop offset=".3721" stop-color="#08f8a8"/><stop offset=".3762" stop-color="#10ecf4"/><stop offset=".379" stop-color="#10ecf4"/><stop offset=".3819" stop-color="#0cf860"/><stop offset=".3849" stop-color="#08f8a8"/><stop offset=".3879" stop-color="#10ecf4"/><stop offset=".4047" stop-color="#10ecf4"/><stop offset=".4086" stop-color="#2cb0fa"/><stop offset=".4146" stop-color="#4c74f6"/><stop offset=".4185" stop-color="#7664f2"/><stop offset=".4236" stop-color="#7664f2"/><stop offset=".4259" stop-color="#9c78f4"/><stop offset=".428" stop-color="#4c74f6"/><stop offset=".4324" stop-color="#7664f2"/><stop offset=".4367" stop-color="#7664f2"/><stop offset=".4418" stop-color="#9c78f4"/><stop offset=".4442" stop-color="#9c78f4"/><stop offset=".4487" stop-color="#7664f2"/><stop offset=".4489" stop-color="#0cf860"/><stop offset=".4583" stop-color="#0cf860"/><stop offset=".4612" stop-color="#08f8a8"/><stop offset=".4647" stop-color="#10ecf4"/><stop offset=".4746" stop-color="#10ecf4"/><stop offset=".4785" stop-color="#2cb0fa"/><stop offset=".4845" stop-color="#4c74f6"/><stop offset=".4884" stop-color="#616cf4"/><stop offset=".4918" stop-color="#4c74f6"/><stop offset=".4957" stop-color="#7664f2"/><stop offset=".4986" stop-color="#7664f2"/><stop offset=".5039" stop-color="#9c78f4"/><stop offset=".5071" stop-color="#7664f2"/><stop offset=".5107" stop-color="#616cf4"/><stop offset=".5148" stop-color="#7664f2"/><stop offset=".5172" stop-color="#7664f2"/><stop offset=".5174" stop-color="#0cf860"/><stop offset=".5277" stop-color="#0cf860"/><stop offset=".531" stop-color="#08f8a8"/><stop offset=".5348" stop-color="#10ecf4"/><stop offset=".5392" stop-color="#10ecf4"/><stop offset=".5431" stop-color="#2cb0fa"/><stop offset=".549" stop-color="#4c74f6"/><stop offset=".553" stop-color="#616cf4"/><stop offset=".5572" stop-color="#4c74f6"/><stop offset=".5621" stop-color="#616cf4"/><stop offset=".5646" stop-color="#616cf4"/><stop offset=".5699" stop-color="#4c74f6"/><stop offset=".5728" stop-color="#616cf4"/><stop offset=".576" stop-color="#4c74f6"/><stop offset=".5783" stop-color="#7664f2"/><stop offset=".5818" stop-color="#4c74f6"/><stop offset=".5842" stop-color="#4c74f6"/><stop offset=".5871" stop-color="#7664f2"/><stop offset=".5873" stop-color="#0cf860"/><stop offset=".5967" stop-color="#0cf860"/><stop offset=".5997" stop-color="#08f8a8"/><stop offset=".6031" stop-color="#10ecf4"/><stop offset=".613" stop-color="#10ecf4"/><stop offset=".617" stop-color="#2cb0fa"/><stop offset=".6229" stop-color="#4c74f6"/><stop offset=".6269" stop-color="#9c78f4"/><stop offset=".6316" stop-color="#7664f2"/><stop offset=".6351" stop-color="#7664f2"/><stop offset=".6353" stop-color="#0cf860"/><stop offset=".654" stop-color="#0cf860"/><stop offset=".66" stop-color="#08f8a8"/><stop offset=".6669" stop-color="#10ecf4"/><stop offset=".6669" stop-color="#10ecf4"/><stop offset=".6669" stop-color="#0cf860"/><stop offset=".6669" stop-color="#08f8a8"/><stop offset=".6669" stop-color="#10ecf4"/><stop offset=".6748" stop-color="#10ecf4"/><stop offset=".6788" stop-color="#2cb0fa"/><stop offset=".6847" stop-color="#4c74f6"/><stop offset=".6886" stop-color="#616cf4"/><stop offset=".6926" stop-color="#896ef3"/><stop offset=".6953" stop-color="#9c78f4"/><stop offset=".6998" stop-color="#616cf4"/><stop offset=".7028" stop-color="#616cf4"/><stop offset=".7059" stop-color="#4c74f6"/><stop offset=".7083" stop-color="#4c74f6"/><stop offset=".7129" stop-color="#7664f2"/><stop offset=".7173" stop-color="#7664f2"/><stop offset=".7194" stop-color="#7664f2"/><stop offset=".7239" stop-color="#9c78f4"/><stop offset=".7263" stop-color="#7664f2"/><stop offset=".7265" stop-color="#0cf860"/><stop offset=".7387" stop-color="#0cf860"/><stop offset=".7426" stop-color="#08f8a8"/><stop offset=".7471" stop-color="#10ecf4"/><stop offset=".7611" stop-color="#10ecf4"/><stop offset=".7651" stop-color="#2cb0fa"/><stop offset=".771" stop-color="#4c74f6"/><stop offset=".775" stop-color="#896ef3"/><stop offset=".78" stop-color="#9c78f4"/><stop offset=".7834" stop-color="#7664f2"/><stop offset=".7873" stop-color="#9c78f4"/><stop offset=".7925" stop-color="#7664f2"/><stop offset=".7957" stop-color="#7664f2"/><stop offset=".7959" stop-color="#0cf860"/><stop offset=".8072" stop-color="#0cf860"/><stop offset=".8108" stop-color="#08f8a8"/><stop offset=".8149" stop-color="#10ecf4"/><stop offset=".8236" stop-color="#10ecf4"/><stop offset=".8276" stop-color="#2cb0fa"/><stop offset=".8335" stop-color="#4c74f6"/><stop offset=".8375" stop-color="#4c74f6"/><stop offset=".8395" stop-color="#7664f2"/><stop offset=".8424" stop-color="#9c78f4"/><stop offset=".8459" stop-color="#4c74f6"/><stop offset=".8486" stop-color="#4c74f6"/><stop offset=".8534" stop-color="#896ef3"/><stop offset=".8578" stop-color="#9c78f4"/><stop offset=".8606" stop-color="#4c74f6"/><stop offset=".8636" stop-color="#4c74f6"/><stop offset=".8655" stop-color="#7664f2"/><stop offset=".8657" stop-color="#0cf860"/><stop offset=".8798" stop-color="#0cf860"/><stop offset=".8843" stop-color="#08f8a8"/><stop offset=".8895" stop-color="#10ecf4"/><stop offset=".8895" stop-color="#10ecf4"/><stop offset=".8934" stop-color="#2cb0fa"/><stop offset=".8993" stop-color="#4c74f6"/><stop offset=".9033" stop-color="#9c78f4"/><stop offset=".9055" stop-color="#9c78f4"/><stop offset=".9105" stop-color="#616cf4"/><stop offset=".9136" stop-color="#7664f2"/><stop offset=".9138" stop-color="#0cf860"/><stop offset=".9344" stop-color="#0cf860"/><stop offset=".941" stop-color="#08f8a8"/><stop offset=".9486" stop-color="#10ecf4"/><stop offset=".9486" stop-color="#10ecf4"/><stop offset=".9486" stop-color="#0cf860"/><stop offset=".9486" stop-color="#08f8a8"/><stop offset=".9486" stop-color="#10ecf4"/><stop offset=".9652" stop-color="#10ecf4"/><stop offset=".9692" stop-color="#2cb0fa"/><stop offset=".9751" stop-color="#4c74f6"/><stop offset=".979" stop-color="#616cf4"/><stop offset=".9843" stop-color="#7664f2"/><stop offset=".9885" stop-color="#896ef3"/><stop offset=".9906" stop-color="#616cf4"/><stop offset=".9931" stop-color="#616cf4"/><stop offset=".998" stop-color="#4c74f6"/><stop offset="1." stop-color="#7664f2"/><stop offset="1." stop-color="#7664f2"/></linearGradient><linearGradient id="g11" gradientUnits="userSpaceOnUse" x1="0" y1="0" x2="1011.4" y2="0"><stop offset=".1002" stop-color="#0cf860"/><stop offset=".1096" stop-color="#0cf860"/><stop offset=".1125" stop-color="#08f8a8"/><stop offset=".116" stop-color="#10ecf4"/><stop offset=".1219" stop-color="#10ecf4"/><stop offset=".1259" stop-color="#2cb0fa"/><stop offset=".1318" stop-color="#4c74f6"/><stop offset=".1358" stop-color="#7664f2"/><stop offset=".1409" stop-color="#7664f2"/><stop offset=".144" stop-color="#9c78f4"/><stop offset=".1477" stop-color="#4c74f6"/><stop offset=".15" stop-color="#4c74f6"/><stop offset=".1549" stop-color="#616cf4"/><stop offset=".1581" stop-color="#4c74f6"/><stop offset=".162" stop-color="#7664f2"/><stop offset=".1658" stop-color="#616cf4"/><stop offset=".1694" stop-color="#7664f2"/><stop offset=".1696" stop-color="#0cf860"/><stop offset=".178" stop-color="#0cf860"/><stop offset=".1807" stop-color="#08f8a8"/><stop offset=".1838" stop-color="#10ecf4"/><stop offset=".1963" stop-color="#10ecf4"/><stop offset=".2002" stop-color="#2cb0fa"/><stop offset=".2061" stop-color="#4c74f6"/><stop offset=".2101" stop-color="#9c78f4"/><stop offset=".215" stop-color="#9c78f4"/><stop offset=".2185" stop-color="#4c74f6"/><stop offset=".2209" stop-color="#7664f2"/><stop offset=".2254" stop-color="#616cf4"/><stop offset=".2274" stop-color="#4c74f6"/><stop offset=".2326" stop-color="#4c74f6"/><stop offset=".2354" stop-color="#616cf4"/><stop offset=".2392" stop-color="#7664f2"/><stop offset=".2394" stop-color="#0cf860"/><stop offset=".2469" stop-color="#0cf860"/><stop offset=".2493" stop-color="#08f8a8"/><stop offset=".252" stop-color="#10ecf4"/><stop offset=".2661" stop-color="#10ecf4"/><stop offset=".27" stop-color="#2cb0fa"/><stop offset=".276" stop-color="#4c74f6"/><stop offset=".2799" stop-color="#616cf4"/><stop offset=".2825" stop-color="#7664f2"/><stop offset=".2864" stop-color="#7664f2"/><stop offset=".2911" stop-color="#7664f2"/><stop offset=".2938" stop-color="#4c74f6"/><stop offset=".2961" stop-color="#896ef3"/><stop offset=".301" stop-color="#7664f2"/><stop offset=".3044" stop-color="#7664f2"/><stop offset=".3095" stop-color="#7664f2"/><stop offset=".3097" stop-color="#0cf860"/><stop offset=".32" stop-color="#0cf860"/><stop offset=".3233" stop-color="#08f8a8"/><stop offset=".3271" stop-color="#10ecf4"/><stop offset=".3324" stop-color="#10ecf4"/><stop offset=".3364" stop-color="#2cb0fa"/><stop offset=".3423" stop-color="#4c74f6"/><stop offset=".3463" stop-color="#4c74f6"/><stop offset=".351" stop-color="#616cf4"/><stop offset=".3536" stop-color="#7664f2"/><stop offset=".357" stop-color="#7664f2"/><stop offset=".3572" stop-color="#0cf860"/><stop offset=".3685" stop-color="#0cf860"/><stop offset=".3721" stop-color="#08f8a8"/><stop offset=".3762" stop-color="#10ecf4"/><stop offset=".379" stop-color="#10ecf4"/><stop offset=".3819" stop-color="#0cf860"/><stop offset=".3849" stop-color="#08f8a8"/><stop offset=".3879" stop-color="#10ecf4"/><stop offset=".4047" stop-color="#10ecf4"/><stop offset=".4086" stop-color="#2cb0fa"/><stop offset=".4146" stop-color="#4c74f6"/><stop offset=".4185" stop-color="#7664f2"/><stop offset=".4228" stop-color="#4c74f6"/><stop offset=".4267" stop-color="#7664f2"/><stop offset=".43" stop-color="#9c78f4"/><stop offset=".434" stop-color="#616cf4"/><stop offset=".436" stop-color="#4c74f6"/><stop offset=".4413" stop-color="#616cf4"/><stop offset=".4449" stop-color="#9c78f4"/><stop offset=".4487" stop-color="#7664f2"/><stop offset=".4489" stop-color="#0cf860"/><stop offset=".4583" stop-color="#0cf860"/><stop offset=".4612" stop-color="#08f8a8"/><stop offset=".4647" stop-color="#10ecf4"/><stop offset=".4746" stop-color="#10ecf4"/><stop offset=".4785" stop-color="#2cb0fa"/><stop offset=".4845" stop-color="#4c74f6"/><stop offset=".4884" stop-color="#9c78f4"/><stop offset=".4912" stop-color="#896ef3"/><stop offset=".4952" stop-color="#4c74f6"/><stop offset=".4978" stop-color="#7664f2"/><stop offset=".5019" stop-color="#4c74f6"/><stop offset=".5061" stop-color="#7664f2"/><stop offset=".5102" stop-color="#4c74f6"/><stop offset=".5139" stop-color="#7664f2"/><stop offset=".5172" stop-color="#7664f2"/><stop offset=".5174" stop-color="#0cf860"/><stop offset=".5277" stop-color="#0cf860"/><stop offset=".531" stop-color="#08f8a8"/><stop offset=".5348" stop-color="#10ecf4"/><stop offset=".5392" stop-color="#10ecf4"/><stop offset=".5431" stop-color="#2cb0fa"/><stop offset=".549" stop-color="#4c74f6"/><stop offset=".553" stop-color="#7664f2"/><stop offset=".5577" stop-color="#4c74f6"/><stop offset=".5623" stop-color="#896ef3"/><stop offset=".5675" stop-color="#616cf4"/><stop offset=".5709" stop-color="#4c74f6"/><stop offset=".5744" stop-color="#4c74f6"/><stop offset=".5774" stop-color="#9c78f4"/><stop offset=".5798" stop-color="#7664f2"/><stop offset=".5835" stop-color="#4c74f6"/><stop offset=".5871" stop-color="#7664f2"/><stop offset=".5873" stop-color="#0cf860"/><stop offset=".5967" stop-color="#0cf860"/><stop offset=".5997" stop-color="#08f8a8"/><stop offset=".6031" stop-color="#10ecf4"/><stop offset=".613" stop-color="#10ecf4"/><stop offset=".617" stop-color="#2cb0fa"/><stop offset=".6229" stop-color="#4c74f6"/><stop offset=".6269" stop-color="#4c74f6"/><stop offset=".6309" stop-color="#7664f2"/><stop offset=".6351" stop-color="#7664f2"/><stop offset=".6353" stop-color="#0cf860"/><stop offset=".654" stop-color="#0cf860"/><stop offset=".66" stop-color="#08f8a8"/><stop offset=".6669" stop-color="#10ecf4"/><stop offset=".6669" stop-color="#10ecf4"/><stop offset=".6669" stop-color="#0cf860"/><stop offset=".6669" stop-color="#08f8a8"/><stop offset=".6669" stop-color="#10ecf4"/><stop offset=".6748" stop-color="#10ecf4"/><stop offset=".6788" stop-color="#2cb0fa"/><stop offset=".6847" stop-color="#4c74f6"/><stop offset=".6886" stop-color="#4c74f6"/><stop offset=".6937" stop-color="#9c78f4"/><stop offset=".698" stop-color="#4c74f6"/><stop offset=".7013" stop-color="#7664f2"/><stop offset=".7046" stop-color="#9c78f4"/><stop offset=".7099" stop-color="#7664f2"/><stop offset=".7127" stop-color="#616cf4"/><stop offset=".7149" stop-color="#4c74f6"/><stop offset=".7169" stop-color="#7664f2"/><stop offset=".7189" stop-color="#7664f2"/><stop offset=".7213" stop-color="#7664f2"/><stop offset=".7263" stop-color="#7664f2"/><stop offset=".7265" stop-color="#0cf860"/><stop offset=".7387" stop-color="#0cf860"/><stop offset=".7426" stop-color="#08f8a8"/><stop offset=".7471" stop-color="#10ecf4"/><stop offset=".7611" stop-color="#10ecf4"/><stop offset=".7651" stop-color="#2cb0fa"/><stop offset=".771" stop-color="#4c74f6"/><stop offset=".775" stop-color="#7664f2"/><stop offset=".7787" stop-color="#4c74f6"/><stop offset=".7833" stop-color="#7664f2"/><stop offset=".7863" stop-color="#7664f2"/><stop offset=".7917" stop-color="#7664f2"/><stop offset=".794" stop-color="#4c74f6"/><stop offset=".7957" stop-color="#7664f2"/><stop offset=".7959" stop-color="#0cf860"/><stop offset=".8072" stop-color="#0cf860"/><stop offset=".8108" stop-color="#08f8a8"/><stop offset=".8149" stop-color="#10ecf4"/><stop offset=".8236" stop-color="#10ecf4"/><stop offset=".8276" stop-color="#2cb0fa"/><stop offset=".8335" stop-color="#4c74f6"/><stop offset=".8375" stop-color="#9c78f4"/><stop offset=".8428" stop-color="#4c74f6"/><stop offset=".8473" stop-color="#4c74f6"/><stop offset=".8499" stop-color="#4c74f6"/><stop offset=".854" stop-color="#4c74f6"/><stop offset=".856" stop-color="#4c74f6"/><stop offset=".8606" stop-color="#7664f2"/><stop offset=".863" stop-color="#9c78f4"/><stop offset=".8655" stop-color="#7664f2"/><stop offset=".8657" stop-color="#0cf860"/><stop offset=".8798" stop-color="#0cf860"/><stop offset=".8843" stop-color="#08f8a8"/><stop offset=".8895" stop-color="#10ecf4"/><stop offset=".8895" stop-color="#10ecf4"/><stop offset=".8934" stop-color="#2cb0fa"/><stop offset=".8993" stop-color="#4c74f6"/><stop offset=".9033" stop-color="#616cf4"/><stop offset=".9055" stop-color="#7664f2"/><stop offset=".909" stop-color="#9c78f4"/><stop offset=".9136" stop-color="#7664f2"/><stop offset=".9138" stop-color="#0cf860"/><stop offset=".9344" stop-color="#0cf860"/><stop offset=".941" stop-color="#08f8a8"/><stop offset=".9486" stop-color="#10ecf4"/><stop offset=".9486" stop-color="#10ecf4"/><stop offset=".9486" stop-color="#0cf860"/><stop offset=".9486" stop-color="#08f8a8"/><stop offset=".9486" stop-color="#10ecf4"/><stop offset=".9652" stop-color="#10ecf4"/><stop offset=".9692" stop-color="#2cb0fa"/><stop offset=".9751" stop-color="#4c74f6"/><stop offset=".979" stop-color="#7664f2"/><stop offset=".9813" stop-color="#896ef3"/><stop offset=".9859" stop-color="#4c74f6"/><stop offset=".989" stop-color="#7664f2"/><stop offset=".9932" stop-color="#9c78f4"/><stop offset=".9969" stop-color="#7664f2"/><stop offset=".9989" stop-color="#4c74f6"/><stop offset="1." stop-color="#616cf4"/><stop offset="1." stop-color="#7664f2"/></linearGradient><linearGradient id="g20" gradientUnits="userSpaceOnUse" x1="0" y1="0" x2="1011.4" y2="0"><stop offset="0" stop-color="#c797f1"/><stop offset=".031" stop-color="#e1a7ef"/><stop offset=".0311" stop-color="#cd99f0"/><stop offset=".036" stop-color="#cd99f0"/><stop offset=".0389" stop-color="#cd99f0"/><stop offset=".0437" stop-color="#a582f0"/><stop offset=".0489" stop-color="#be90f1"/><stop offset=".0528" stop-color="#be90f1"/><stop offset=".0573" stop-color="#a582f0"/><stop offset=".0613" stop-color="#a582f0"/><stop offset=".0646" stop-color="#a582f0"/><stop offset=".068" stop-color="#cd99f0"/><stop offset=".0729" stop-color="#cd99f0"/><stop offset=".0767" stop-color="#cd99f0"/><stop offset=".0782" stop-color="#e1a7ef"/><stop offset=".0783" stop-color="#685bf0"/><stop offset=".0815" stop-color="#6359f0"/><stop offset=".0847" stop-color="#685bf0"/><stop offset=".0897" stop-color="#e1a7ef"/><stop offset=".0898" stop-color="#7a60f2"/><stop offset=".0933" stop-color="#a27cf1"/><stop offset=".0969" stop-color="#dca4f0"/><stop offset=".1001" stop-color="#e1a7ef"/><stop offset=".1002" stop-color="#7a60f2"/><stop offset=".1027" stop-color="#8c6ef2"/><stop offset=".1079" stop-color="#8c6ef2"/><stop offset=".1131" stop-color="#8769f1"/><stop offset=".1185" stop-color="#8168f0"/><stop offset=".1209" stop-color="#9b77f1"/><stop offset=".1249" stop-color="#a680f2"/><stop offset=".1286" stop-color="#ac84f1"/><stop offset=".1328" stop-color="#b289f1"/><stop offset=".1377" stop-color="#c795f0"/><stop offset=".1431" stop-color="#d69ff0"/><stop offset=".1469" stop-color="#af89f0"/><stop offset=".1521" stop-color="#c797f1"/><stop offset=".1569" stop-color="#dca4f0"/><stop offset=".1601" stop-color="#dca4f0"/><stop offset=".1651" stop-color="#c797f1"/><stop offset=".1695" stop-color="#e1a7ef"/><stop offset=".1696" stop-color="#6f5df1"/><stop offset=".1723" stop-color="#8c6ef2"/><stop offset=".1763" stop-color="#7a60f2"/><stop offset=".1811" stop-color="#8366f1"/><stop offset=".1842" stop-color="#7a64f0"/><stop offset=".188" stop-color="#9c79f2"/><stop offset=".1934" stop-color="#8a6ff0"/><stop offset=".1985" stop-color="#9275f0"/><stop offset=".2013" stop-color="#b88bf0"/><stop offset=".2052" stop-color="#b78cf1"/><stop offset=".2102" stop-color="#cf9bf0"/><stop offset=".2126" stop-color="#c394f1"/><stop offset=".2176" stop-color="#dca4f0"/><stop offset=".2219" stop-color="#dca4f0"/><stop offset=".2262" stop-color="#dca4f0"/><stop offset=".2301" stop-color="#af89f0"/><stop offset=".2341" stop-color="#c797f1"/><stop offset=".2393" stop-color="#e1a7ef"/><stop offset=".2394" stop-color="#8c6ef2"/><stop offset=".2427" stop-color="#6f5df1"/><stop offset=".2451" stop-color="#8c6ef2"/><stop offset=".2485" stop-color="#8d6ff2"/><stop offset=".2516" stop-color="#9272f2"/><stop offset=".2555" stop-color="#7c66f0"/><stop offset=".2594" stop-color="#9f7bf2"/><stop offset=".2632" stop-color="#896ff0"/><stop offset=".2668" stop-color="#ac82f0"/><stop offset=".2688" stop-color="#b186f0"/><stop offset=".2721" stop-color="#ba8cf0"/><stop offset=".2769" stop-color="#a07ff0"/><stop offset=".2791" stop-color="#a482f0"/><stop offset=".2839" stop-color="#ac87f0"/><stop offset=".286" stop-color="#af89f0"/><stop offset=".2906" stop-color="#dca4f0"/><stop offset=".2936" stop-color="#c797f1"/><stop offset=".2958" stop-color="#c797f1"/><stop offset=".3003" stop-color="#dca4f0"/><stop offset=".3035" stop-color="#af89f0"/><stop offset=".3057" stop-color="#c797f1"/><stop offset=".3096" stop-color="#e1a7ef"/><stop offset=".3097" stop-color="#7a60f2"/><stop offset=".3125" stop-color="#8c6ef2"/><stop offset=".3151" stop-color="#7a60f2"/><stop offset=".3201" stop-color="#8d6df1"/><stop offset=".3242" stop-color="#9c78f1"/><stop offset=".3296" stop-color="#ad85f1"/><stop offset=".3338" stop-color="#c191f0"/><stop offset=".3386" stop-color="#c293f1"/><stop offset=".3421" stop-color="#c797f1"/><stop offset=".3473" stop-color="#c797f1"/><stop offset=".3509" stop-color="#dca4f0"/><stop offset=".3548" stop-color="#dca4f0"/><stop offset=".3571" stop-color="#e1a7ef"/><stop offset=".3572" stop-color="#7a60f2"/><stop offset=".3612" stop-color="#7a60f2"/><stop offset=".3654" stop-color="#7a60f2"/><stop offset=".3708" stop-color="#8f70f2"/><stop offset=".374" stop-color="#9373f2"/><stop offset=".3768" stop-color="#8b6cf1"/><stop offset=".3804" stop-color="#9371f1"/><stop offset=".383" stop-color="#9e7af2"/><stop offset=".3856" stop-color="#9d78f1"/><stop offset=".388" stop-color="#a27bf1"/><stop offset=".3929" stop-color="#aa82f1"/><stop offset=".3967" stop-color="#b388f0"/><stop offset=".3993" stop-color="#9779f0"/><stop offset=".4042" stop-color="#9e7df0"/><stop offset=".4072" stop-color="#c896f0"/><stop offset=".411" stop-color="#a783f0"/><stop offset=".4133" stop-color="#d49ff0"/><stop offset=".4159" stop-color="#c696f1"/><stop offset=".4204" stop-color="#af89f0"/><stop offset=".4227" stop-color="#c797f1"/><stop offset=".4257" stop-color="#c797f1"/><stop offset=".4288" stop-color="#dca4f0"/><stop offset=".4323" stop-color="#dca4f0"/><stop offset=".4343" stop-color="#c797f1"/><stop offset=".4374" stop-color="#dca4f0"/><stop offset=".4409" stop-color="#af89f0"/><stop offset=".446" stop-color="#af89f0"/><stop offset=".4488" stop-color="#e1a7ef"/><stop offset=".4489" stop-color="#7a60f2"/><stop offset=".4542" stop-color="#8c6ef2"/><stop offset=".4579" stop-color="#705df0"/><stop offset=".4628" stop-color="#896bf1"/><stop offset=".4648" stop-color="#9976f2"/><stop offset=".469" stop-color="#9a76f1"/><stop offset=".4716" stop-color="#a37ef2"/><stop offset=".4759" stop-color="#ac83f0"/><stop offset=".4805" stop-color="#b288f1"/><stop offset=".4835" stop-color="#c191f0"/><stop offset=".4856" stop-color="#ba8ef1"/><stop offset=".49" stop-color="#c193f1"/><stop offset=".4928" stop-color="#ad88f0"/><stop offset=".4975" stop-color="#c797f1"/><stop offset=".5017" stop-color="#dca4f0"/><stop offset=".5045" stop-color="#c797f1"/><stop offset=".507" stop-color="#dca4f0"/><stop offset=".5118" stop-color="#dca4f0"/><stop offset=".5144" stop-color="#af89f0"/><stop offset=".5173" stop-color="#e1a7ef"/><stop offset=".5174" stop-color="#7a60f2"/><stop offset=".5201" stop-color="#7a60f2"/><stop offset=".5235" stop-color="#6f5df1"/><stop offset=".5276" stop-color="#725ff0"/><stop offset=".5297" stop-color="#8467f1"/><stop offset=".5318" stop-color="#7964f0"/><stop offset=".5344" stop-color="#9170f1"/><stop offset=".5394" stop-color="#9e79f1"/><stop offset=".5435" stop-color="#8e72f0"/><stop offset=".5456" stop-color="#ae84f0"/><stop offset=".5496" stop-color="#b98bf0"/><stop offset=".5545" stop-color="#a07ff0"/><stop offset=".5579" stop-color="#cf9af0"/><stop offset=".5624" stop-color="#ad88f0"/><stop offset=".5651" stop-color="#c797f1"/><stop offset=".5706" stop-color="#dca4f0"/><stop offset=".5757" stop-color="#af89f0"/><stop offset=".5786" stop-color="#af89f0"/><stop offset=".5816" stop-color="#dca4f0"/><stop offset=".5846" stop-color="#af89f0"/><stop offset=".5872" stop-color="#e1a7ef"/><stop offset=".5873" stop-color="#6f5df1"/><stop offset=".5906" stop-color="#8c6ef2"/><stop offset=".5949" stop-color="#7460f0"/><stop offset=".5988" stop-color="#906ff1"/><stop offset=".6036" stop-color="#a57ff2"/><stop offset=".606" stop-color="#9073f0"/><stop offset=".6088" stop-color="#b68af0"/><stop offset=".6112" stop-color="#9c7cf0"/><stop offset=".6161" stop-color="#d29df0"/><stop offset=".6204" stop-color="#af89f0"/><stop offset=".6254" stop-color="#c797f1"/><stop offset=".6275" stop-color="#dca4f0"/><stop offset=".6325" stop-color="#c797f1"/><stop offset=".6352" stop-color="#e1a7ef"/><stop offset=".6353" stop-color="#6f5df1"/><stop offset=".6406" stop-color="#8c6ef2"/><stop offset=".6451" stop-color="#7a60f2"/><stop offset=".6478" stop-color="#8e6ff2"/><stop offset=".6526" stop-color="#9473f2"/><stop offset=".6556" stop-color="#7b65f0"/><stop offset=".6588" stop-color="#9472f1"/><stop offset=".6621" stop-color="#9a76f1"/><stop offset=".666" stop-color="#a27cf1"/><stop offset=".6713" stop-color="#ad83f0"/><stop offset=".6759" stop-color="#9677f0"/><stop offset=".679" stop-color="#b48af1"/><stop offset=".6831" stop-color="#9f7ef0"/><stop offset=".6857" stop-color="#ca97f0"/><stop offset=".6895" stop-color="#d19cf0"/><stop offset=".6935" stop-color="#c596f1"/><stop offset=".6984" stop-color="#af89f0"/><stop offset=".7011" stop-color="#af89f0"/><stop offset=".7044" stop-color="#af89f0"/><stop offset=".7072" stop-color="#dca4f0"/><stop offset=".712" stop-color="#c797f1"/><stop offset=".7168" stop-color="#dca4f0"/><stop offset=".7221" stop-color="#dca4f0"/><stop offset=".7264" stop-color="#e1a7ef"/><stop offset=".7265" stop-color="#7a60f2"/><stop offset=".7318" stop-color="#8c6ef2"/><stop offset=".737" stop-color="#735ff0"/><stop offset=".7417" stop-color="#8c6df1"/><stop offset=".7456" stop-color="#826af0"/><stop offset=".7483" stop-color="#a27df2"/><stop offset=".7509" stop-color="#a57df1"/><stop offset=".7537" stop-color="#9073f0"/><stop offset=".7557" stop-color="#ad85f1"/><stop offset=".7582" stop-color="#9779f0"/><stop offset=".7636" stop-color="#c695f0"/><stop offset=".7668" stop-color="#a682f0"/><stop offset=".7715" stop-color="#dba3f0"/><stop offset=".7753" stop-color="#dca4f0"/><stop offset=".78" stop-color="#c797f1"/><stop offset=".7827" stop-color="#dca4f0"/><stop offset=".7867" stop-color="#dca4f0"/><stop offset=".7895" stop-color="#dca4f0"/><stop offset=".7941" stop-color="#af89f0"/><stop offset=".7958" stop-color="#e1a7ef"/><stop offset=".7959" stop-color="#6f5df1"/><stop offset=".798" stop-color="#6f5df1"/><stop offset=".8016" stop-color="#8c6ef2"/><stop offset=".806" stop-color="#7f63f1"/><stop offset=".8088" stop-color="#8668f1"/><stop offset=".8115" stop-color="#9776f2"/><stop offset=".8152" stop-color="#9774f1"/><stop offset=".8185" stop-color="#a07af1"/><stop offset=".8213" stop-color="#a77ff1"/><stop offset=".8241" stop-color="#9174f0"/><stop offset=".8292" stop-color="#b489f1"/><stop offset=".8321" stop-color="#9e7ef0"/><stop offset=".8351" stop-color="#cb98f0"/><stop offset=".8393" stop-color="#ab86f0"/><stop offset=".8432" stop-color="#dca4f0"/><stop offset=".8475" stop-color="#dca4f0"/><stop offset=".8499" stop-color="#dca4f0"/><stop offset=".8545" stop-color="#c797f1"/><stop offset=".8567" stop-color="#dca4f0"/><stop offset=".8616" stop-color="#dca4f0"/><stop offset=".8656" stop-color="#e1a7ef"/><stop offset=".8657" stop-color="#6f5df1"/><stop offset=".8679" stop-color="#6f5df1"/><stop offset=".8714" stop-color="#7a60f1"/><stop offset=".8748" stop-color="#8769f1"/><stop offset=".8778" stop-color="#9271f1"/><stop offset=".881" stop-color="#876df0"/><stop offset=".8832" stop-color="#a77ff1"/><stop offset=".8882" stop-color="#ba8cf0"/><stop offset=".8909" stop-color="#c493f0"/><stop offset=".8957" stop-color="#ab86f0"/><stop offset=".9005" stop-color="#af89f0"/><stop offset=".9036" stop-color="#dca4f0"/><stop offset=".9069" stop-color="#af89f0"/><stop offset=".9105" stop-color="#dca4f0"/><stop offset=".9137" stop-color="#e1a7ef"/><stop offset=".9138" stop-color="#6f5df1"/><stop offset=".9179" stop-color="#6f5df1"/><stop offset=".9213" stop-color="#6f5df1"/><stop offset=".9233" stop-color="#8c6ef2"/><stop offset=".9282" stop-color="#8165f1"/><stop offset=".9322" stop-color="#7963f0"/><stop offset=".9363" stop-color="#9a78f2"/><stop offset=".9385" stop-color="#9d79f2"/><stop offset=".9407" stop-color="#9a76f1"/><stop offset=".9454" stop-color="#8a70f0"/><stop offset=".9488" stop-color="#aa81f1"/><stop offset=".9517" stop-color="#b085f0"/><stop offset=".9562" stop-color="#9879f0"/><stop offset=".9602" stop-color="#b78bf1"/><stop offset=".963" stop-color="#c795f0"/><stop offset=".9651" stop-color="#a481f0"/><stop offset=".9694" stop-color="#c293f1"/><stop offset=".9726" stop-color="#ad88f0"/><stop offset=".9755" stop-color="#c797f1"/><stop offset=".9778" stop-color="#dca4f0"/><stop offset=".9823" stop-color="#af89f0"/><stop offset=".9847" stop-color="#c797f1"/><stop offset=".9893" stop-color="#dca4f0"/><stop offset=".9934" stop-color="#dca4f0"/><stop offset=".9958" stop-color="#dca4f0"/><stop offset="1." stop-color="#c797f1"/></linearGradient><linearGradient id="g21" gradientUnits="userSpaceOnUse" x1="0" y1="0" x2="1011.4" y2="0"><stop offset="0" stop-color="#c797f1"/><stop offset=".031" stop-color="#cc9af1"/><stop offset=".0311" stop-color="#a582f0"/><stop offset=".0333" stop-color="#be90f1"/><stop offset=".0382" stop-color="#a582f0"/><stop offset=".0416" stop-color="#cd99f0"/><stop offset=".0442" stop-color="#be90f1"/><stop offset=".049" stop-color="#a582f0"/><stop offset=".0525" stop-color="#cd99f0"/><stop offset=".0546" stop-color="#be90f1"/><stop offset=".0581" stop-color="#cd99f0"/><stop offset=".0603" stop-color="#cd99f0"/><stop offset=".064" stop-color="#a582f0"/><stop offset=".0676" stop-color="#be90f1"/><stop offset=".071" stop-color="#cd99f0"/><stop offset=".0761" stop-color="#be90f1"/><stop offset=".0782" stop-color="#cc9af1"/><stop offset=".0783" stop-color="#816bf1"/><stop offset=".0826" stop-color="#6359f0"/><stop offset=".0865" stop-color="#685bf0"/><stop offset=".0897" stop-color="#cc9af1"/><stop offset=".0898" stop-color="#7a60f2"/><stop offset=".0927" stop-color="#7e67f0"/><stop offset=".0953" stop-color="#ac84f1"/><stop offset=".1001" stop-color="#cc9af1"/><stop offset=".1002" stop-color="#8c6ef2"/><stop offset=".1042" stop-color="#7a60f2"/><stop offset=".1062" stop-color="#8c6ef2"/><stop offset=".1098" stop-color="#8064f1"/><stop offset=".1142" stop-color="#886af1"/><stop offset=".1165" stop-color="#8c6cf1"/><stop offset=".1196" stop-color="#9a78f2"/><stop offset=".1218" stop-color="#9572f1"/><stop offset=".1263" stop-color="#9c78f1"/><stop offset=".1288" stop-color="#a07bf1"/><stop offset=".1336" stop-color="#a881f2"/><stop offset=".1377" stop-color="#af85f0"/><stop offset=".1425" stop-color="#b78af0"/><stop offset=".1463" stop-color="#b58af1"/><stop offset=".1501" stop-color="#c493f0"/><stop offset=".1523" stop-color="#c896f0"/><stop offset=".1545" stop-color="#cb98f0"/><stop offset=".1577" stop-color="#d19cf0"/><stop offset=".1611" stop-color="#d7a0f0"/><stop offset=".1649" stop-color="#dca4f0"/><stop offset=".1672" stop-color="#c797f1"/><stop offset=".1695" stop-color="#cc9af1"/><stop offset=".1696" stop-color="#7a60f2"/><stop offset=".1721" stop-color="#8c6ef2"/><stop offset=".1775" stop-color="#7d62f1"/><stop offset=".1813" stop-color="#8467f1"/><stop offset=".1838" stop-color="#886af1"/><stop offset=".1869" stop-color="#8d6df1"/><stop offset=".1902" stop-color="#9371f1"/><stop offset=".195" stop-color="#9b77f1"/><stop offset=".1996" stop-color="#896ff0"/><stop offset=".2018" stop-color="#a67ef1"/><stop offset=".2069" stop-color="#af84f0"/><stop offset=".2096" stop-color="#9477f0"/><stop offset=".2127" stop-color="#9779f0"/><stop offset=".2157" stop-color="#bd8ff0"/><stop offset=".22" stop-color="#a07ff0"/><stop offset=".2223" stop-color="#c896f0"/><stop offset=".2271" stop-color="#d09cf0"/><stop offset=".2302" stop-color="#d69ff0"/><stop offset=".2347" stop-color="#af89f0"/><stop offset=".2376" stop-color="#c797f1"/><stop offset=".2393" stop-color="#cc9af1"/><stop offset=".2394" stop-color="#8c6ef2"/><stop offset=".2436" stop-color="#8c6ef2"/><stop offset=".2465" stop-color="#7c61f1"/><stop offset=".2502" stop-color="#8266f1"/><stop offset=".2539" stop-color="#886af1"/><stop offset=".2592" stop-color="#9170f1"/><stop offset=".2636" stop-color="#836af0"/><stop offset=".2687" stop-color="#a17bf1"/><stop offset=".2717" stop-color="#8c70f0"/><stop offset=".2766" stop-color="#ae84f0"/><stop offset=".2814" stop-color="#9677f0"/><stop offset=".2851" stop-color="#bc8ef0"/><stop offset=".2875" stop-color="#9d7df0"/><stop offset=".2911" stop-color="#c695f0"/><stop offset=".2955" stop-color="#cd9af0"/><stop offset=".2976" stop-color="#d19cf0"/><stop offset=".3024" stop-color="#d9a2f0"/><stop offset=".3052" stop-color="#af89f0"/><stop offset=".3096" stop-color="#cc9af1"/><stop offset=".3097" stop-color="#8c6ef2"/><stop offset=".3148" stop-color="#8e6ff2"/><stop offset=".3172" stop-color="#8366f1"/><stop offset=".3204" stop-color="#8b6bf1"/><stop offset=".3233" stop-color="#9270f1"/><stop offset=".3286" stop-color="#9f79f1"/><stop offset=".3307" stop-color="#a47df1"/><stop offset=".3349" stop-color="#ab84f1"/><stop offset=".3384" stop-color="#b78af0"/><stop offset=".3409" stop-color="#b48af1"/><stop offset=".344" stop-color="#c494f0"/><stop offset=".349" stop-color="#c092f1"/><stop offset=".3526" stop-color="#c596f1"/><stop offset=".3571" stop-color="#cc9af1"/><stop offset=".3572" stop-color="#7a60f2"/><stop offset=".3616" stop-color="#8c6ef2"/><stop offset=".3668" stop-color="#8d6ff2"/><stop offset=".3716" stop-color="#9172f2"/><stop offset=".3739" stop-color="#8668f1"/><stop offset=".377" stop-color="#7964f0"/><stop offset=".3814" stop-color="#8f6ef1"/><stop offset=".386" stop-color="#8168f0"/><stop offset=".3912" stop-color="#a07cf2"/><stop offset=".3941" stop-color="#876ef0"/><stop offset=".3986" stop-color="#a57ef1"/><stop offset=".4031" stop-color="#ab82f0"/><stop offset=".408" stop-color="#ad85f1"/><stop offset=".413" stop-color="#b78af0"/><stop offset=".4162" stop-color="#b389f1"/><stop offset=".421" stop-color="#b78bf1"/><stop offset=".4249" stop-color="#a07ff0"/><stop offset=".4285" stop-color="#cb98f0"/><stop offset=".4333" stop-color="#a884f0"/><stop offset=".4367" stop-color="#d59ff0"/><stop offset=".4407" stop-color="#c696f1"/><stop offset=".4437" stop-color="#c797f1"/><stop offset=".4463" stop-color="#dca4f0"/><stop offset=".4488" stop-color="#cc9af1"/><stop offset=".4489" stop-color="#7a60f2"/><stop offset=".4519" stop-color="#8c6ef2"/><stop offset=".4539" stop-color="#7a60f2"/><stop offset=".4563" stop-color="#715ef0"/><stop offset=".4597" stop-color="#8366f1"/><stop offset=".4628" stop-color="#886af1"/><stop offset=".468" stop-color="#9170f1"/><stop offset=".473" stop-color="#9976f1"/><stop offset=".4771" stop-color="#a07af1"/><stop offset=".4795" stop-color="#a57ff2"/><stop offset=".485" stop-color="#ab84f1"/><stop offset=".4895" stop-color="#b589f0"/><stop offset=".4948" stop-color="#b58af1"/><stop offset=".4977" stop-color="#9e7ef0"/><stop offset=".5001" stop-color="#a180f0"/><stop offset=".5053" stop-color="#d09cf0"/><stop offset=".5093" stop-color="#ab86f0"/><stop offset=".5135" stop-color="#dca4f0"/><stop offset=".5156" stop-color="#af89f0"/><stop offset=".5173" stop-color="#cc9af1"/><stop offset=".5174" stop-color="#7a60f2"/><stop offset=".5212" stop-color="#6f5df1"/><stop offset=".524" stop-color="#705df0"/><stop offset=".528" stop-color="#9171f2"/><stop offset=".5329" stop-color="#8a6bf1"/><stop offset=".5368" stop-color="#9170f1"/><stop offset=".541" stop-color="#9874f1"/><stop offset=".5451" stop-color="#876df0"/><stop offset=".5484" stop-color="#a47df1"/><stop offset=".5506" stop-color="#a880f1"/><stop offset=".5539" stop-color="#ab83f1"/><stop offset=".5577" stop-color="#ae86f1"/><stop offset=".5603" stop-color="#b88bf0"/><stop offset=".5628" stop-color="#bc8ef0"/><stop offset=".5662" stop-color="#9e7df0"/><stop offset=".5688" stop-color="#ba8ef1"/><stop offset=".5742" stop-color="#a683f0"/><stop offset=".5788" stop-color="#ab86f0"/><stop offset=".5831" stop-color="#c797f1"/><stop offset=".5853" stop-color="#c797f1"/><stop offset=".5872" stop-color="#cc9af1"/><stop offset=".5873" stop-color="#7a60f2"/><stop offset=".592" stop-color="#7c61f1"/><stop offset=".5958" stop-color="#8567f1"/><stop offset=".6004" stop-color="#7d66f0"/><stop offset=".6024" stop-color="#9573f1"/><stop offset=".6051" stop-color="#a07cf2"/><stop offset=".6087" stop-color="#a47df1"/><stop offset=".6122" stop-color="#ad83f0"/><stop offset=".6166" stop-color="#b188f1"/><stop offset=".6197" stop-color="#bf90f0"/><stop offset=".6232" stop-color="#a180f0"/><stop offset=".6257" stop-color="#a682f0"/><stop offset=".6279" stop-color="#d39ef0"/><stop offset=".6321" stop-color="#c797f1"/><stop offset=".6352" stop-color="#cc9af1"/><stop offset=".6353" stop-color="#8c6ef2"/><stop offset=".6381" stop-color="#6f5df1"/><stop offset=".6408" stop-color="#7a60f2"/><stop offset=".6436" stop-color="#7b61f1"/><stop offset=".6461" stop-color="#725ff0"/><stop offset=".6509" stop-color="#8467f1"/><stop offset=".6544" stop-color="#7963f0"/><stop offset=".657" stop-color="#7b65f0"/><stop offset=".6598" stop-color="#906ff1"/><stop offset=".6625" stop-color="#9b78f2"/><stop offset=".6654" stop-color="#9774f1"/><stop offset=".6702" stop-color="#a17cf2"/><stop offset=".675" stop-color="#a37cf1"/><stop offset=".6793" stop-color="#a980f1"/><stop offset=".6831" stop-color="#9074f0"/><stop offset=".6869" stop-color="#ae85f1"/><stop offset=".6903" stop-color="#b187f1"/><stop offset=".6949" stop-color="#b48af1"/><stop offset=".6986" stop-color="#9d7df0"/><stop offset=".7038" stop-color="#a280f0"/><stop offset=".7072" stop-color="#bd90f1"/><stop offset=".7124" stop-color="#d39ef0"/><stop offset=".7161" stop-color="#d8a1f0"/><stop offset=".7213" stop-color="#dca4f0"/><stop offset=".7246" stop-color="#c797f1"/><stop offset=".7264" stop-color="#cc9af1"/><stop offset=".7265" stop-color="#7a60f2"/><stop offset=".7288" stop-color="#6f5df1"/><stop offset=".7313" stop-color="#7a60f2"/><stop offset=".7335" stop-color="#7c61f1"/><stop offset=".7374" stop-color="#9172f2"/><stop offset=".7397" stop-color="#8668f1"/><stop offset=".7424" stop-color="#9675f2"/><stop offset=".7451" stop-color="#906ff1"/><stop offset=".7475" stop-color="#8068f0"/><stop offset=".7507" stop-color="#9975f1"/><stop offset=".7546" stop-color="#876ef0"/><stop offset=".7569" stop-color="#a37df1"/><stop offset=".759" stop-color="#a781f2"/><stop offset=".7623" stop-color="#ac83f0"/><stop offset=".7677" stop-color="#b689f0"/><stop offset=".7726" stop-color="#be8ff0"/><stop offset=".7766" stop-color="#9f7ef0"/><stop offset=".7793" stop-color="#c997f0"/><stop offset=".7841" stop-color="#c092f1"/><stop offset=".7895" stop-color="#daa3f0"/><stop offset=".7933" stop-color="#dca4f0"/><stop offset=".7958" stop-color="#cc9af1"/><stop offset=".7959" stop-color="#7a60f2"/><stop offset=".7982" stop-color="#8c6ef2"/><stop offset=".8005" stop-color="#6f5df1"/><stop offset=".8035" stop-color="#7d62f1"/><stop offset=".8084" stop-color="#9373f2"/><stop offset=".8115" stop-color="#7964f0"/><stop offset=".8153" stop-color="#9170f1"/><stop offset=".8193" stop-color="#9774f1"/><stop offset=".8217" stop-color="#9b77f1"/><stop offset=".8269" stop-color="#a57ff2"/><stop offset=".8315" stop-color="#aa82f1"/><stop offset=".836" stop-color="#b388f0"/><stop offset=".8397" stop-color="#b288f1"/><stop offset=".8432" stop-color="#b58bf1"/><stop offset=".8458" stop-color="#c493f0"/><stop offset=".848" stop-color="#c795f0"/><stop offset=".8533" stop-color="#d09cf0"/><stop offset=".8555" stop-color="#d49ef0"/><stop offset=".8596" stop-color="#dba3f0"/><stop offset=".8646" stop-color="#dca4f0"/><stop offset=".8656" stop-color="#cc9af1"/><stop offset=".8657" stop-color="#7a60f2"/><stop offset=".8687" stop-color="#8c6ef2"/><stop offset=".8722" stop-color="#8064f1"/><stop offset=".8774" stop-color="#8d6df1"/><stop offset=".8807" stop-color="#9472f1"/><stop offset=".8833" stop-color="#9b77f1"/><stop offset=".8876" stop-color="#8b70f0"/><stop offset=".8926" stop-color="#b186f0"/><stop offset=".8971" stop-color="#bd8ef0"/><stop offset=".9004" stop-color="#b88df1"/><stop offset=".9032" stop-color="#cb98f0"/><stop offset=".9065" stop-color="#d39ef0"/><stop offset=".9087" stop-color="#c596f1"/><stop offset=".9118" stop-color="#af89f0"/><stop offset=".9137" stop-color="#cc9af1"/><stop offset=".9138" stop-color="#7a60f2"/><stop offset=".9162" stop-color="#7a60f2"/><stop offset=".9213" stop-color="#6f5df0"/><stop offset=".9267" stop-color="#9071f2"/><stop offset=".9308" stop-color="#8668f1"/><stop offset=".9359" stop-color="#7b65f0"/><stop offset=".9396" stop-color="#7e67f0"/><stop offset=".9431" stop-color="#9673f1"/><stop offset=".9472" stop-color="#9b77f1"/><stop offset=".9519" stop-color="#a17bf1"/><stop offset=".9552" stop-color="#a57ef1"/><stop offset=".9589" stop-color="#8e72f0"/><stop offset=".9612" stop-color="#ad83f0"/><stop offset=".9653" stop-color="#9376f0"/><stop offset=".9686" stop-color="#b087f1"/><stop offset=".9736" stop-color="#bd8ef0"/><stop offset=".9781" stop-color="#b78cf1"/><stop offset=".9819" stop-color="#c795f0"/><stop offset=".9845" stop-color="#bc90f1"/><stop offset=".9877" stop-color="#a682f0"/><stop offset=".9926" stop-color="#aa86f0"/><stop offset=".9955" stop-color="#d8a1f0"/><stop offset=".9993" stop-color="#c797f1"/><stop offset="1." stop-color="#dca4f0"/></linearGradient><linearGradient id="g30" gradientUnits="userSpaceOnUse" x1="0" y1="0" x2="1011.4" y2="0"><stop offset="0" stop-color="#2cecd8"/><stop offset=".1002" stop-color="#1cf078"/><stop offset=".1087" stop-color="#1cf078"/><stop offset=".1155" stop-color="#25edb1"/><stop offset=".124" stop-color="#2cecd8"/><stop offset=".1343" stop-color="#2cecd8"/><stop offset=".1481" stop-color="#1cf078"/><stop offset=".1605" stop-color="#1cf078"/><stop offset=".1704" stop-color="#25edb1"/><stop offset=".1827" stop-color="#2cecd8"/><stop offset=".1975" stop-color="#2cecd8"/><stop offset=".2045" stop-color="#1cf078"/><stop offset=".2205" stop-color="#1cf078"/><stop offset=".2334" stop-color="#25edb1"/><stop offset=".2495" stop-color="#2cecd8"/><stop offset=".2687" stop-color="#2cecd8"/><stop offset=".2875" stop-color="#1cf078"/><stop offset=".3001" stop-color="#1cf078"/><stop offset=".3102" stop-color="#25edb1"/><stop offset=".3228" stop-color="#2cecd8"/><stop offset=".3379" stop-color="#2cecd8"/><stop offset=".3429" stop-color="#1cf078"/><stop offset=".356" stop-color="#1cf078"/><stop offset=".3665" stop-color="#25edb1"/><stop offset=".3796" stop-color="#2cecd8"/><stop offset=".3953" stop-color="#2cecd8"/><stop offset=".4259" stop-color="#1cf078"/><stop offset=".4393" stop-color="#1cf078"/><stop offset=".45" stop-color="#25edb1"/><stop offset=".4633" stop-color="#2cecd8"/><stop offset=".4793" stop-color="#2cecd8"/><stop offset=".4833" stop-color="#1cf078"/><stop offset=".4984" stop-color="#1cf078"/><stop offset=".5104" stop-color="#25edb1"/><stop offset=".5255" stop-color="#2cecd8"/><stop offset=".5436" stop-color="#2cecd8"/><stop offset=".5654" stop-color="#1cf078"/><stop offset=".5785" stop-color="#1cf078"/><stop offset=".5889" stop-color="#25edb1"/><stop offset=".602" stop-color="#2cecd8"/><stop offset=".6178" stop-color="#2cecd8"/><stop offset=".6217" stop-color="#1cf078"/><stop offset=".638" stop-color="#1cf078"/><stop offset=".6511" stop-color="#25edb1"/><stop offset=".6674" stop-color="#2cecd8"/><stop offset=".687" stop-color="#2cecd8"/><stop offset=".7048" stop-color="#1cf078"/><stop offset=".7176" stop-color="#1cf078"/><stop offset=".7279" stop-color="#25edb1"/><stop offset=".7408" stop-color="#2cecd8"/><stop offset=".7562" stop-color="#2cecd8"/><stop offset=".7611" stop-color="#1cf078"/><stop offset=".7772" stop-color="#1cf078"/><stop offset=".79" stop-color="#25edb1"/><stop offset=".8061" stop-color="#2cecd8"/><stop offset=".8254" stop-color="#2cecd8"/><stop offset=".8432" stop-color="#1cf078"/><stop offset=".856" stop-color="#1cf078"/><stop offset=".8663" stop-color="#25edb1"/><stop offset=".8792" stop-color="#2cecd8"/><stop offset=".8946" stop-color="#2cecd8"/><stop offset=".8995" stop-color="#1cf078"/><stop offset=".9156" stop-color="#1cf078"/><stop offset=".9285" stop-color="#25edb1"/><stop offset=".9445" stop-color="#2cecd8"/><stop offset=".9638" stop-color="#2cecd8"/><stop offset=".9816" stop-color="#1cf078"/><stop offset=".9917" stop-color="#1cf078"/><stop offset=".9999" stop-color="#25edb1"/><stop offset="1." stop-color="#2cecd8"/><stop offset="1." stop-color="#2cecd8"/></linearGradient><linearGradient id="g31" gradientUnits="userSpaceOnUse" x1="0" y1="0" x2="1011.4" y2="0"><stop offset="0" stop-color="#2cecd8"/><stop offset=".1002" stop-color="#1cf078"/><stop offset=".1087" stop-color="#1cf078"/><stop offset=".1155" stop-color="#25edb1"/><stop offset=".124" stop-color="#2cecd8"/><stop offset=".1343" stop-color="#2cecd8"/><stop offset=".1481" stop-color="#1cf078"/><stop offset=".1605" stop-color="#1cf078"/><stop offset=".1704" stop-color="#25edb1"/><stop offset=".1827" stop-color="#2cecd8"/><stop offset=".1975" stop-color="#2cecd8"/><stop offset=".2045" stop-color="#1cf078"/><stop offset=".2205" stop-color="#1cf078"/><stop offset=".2334" stop-color="#25edb1"/><stop offset=".2495" stop-color="#2cecd8"/><stop offset=".2687" stop-color="#2cecd8"/><stop offset=".2875" stop-color="#1cf078"/><stop offset=".3001" stop-color="#1cf078"/><stop offset=".3102" stop-color="#25edb1"/><stop offset=".3228" stop-color="#2cecd8"/><stop offset=".3379" stop-color="#2cecd8"/><stop offset=".3429" stop-color="#1cf078"/><stop offset=".356" stop-color="#1cf078"/><stop offset=".3665" stop-color="#25edb1"/><stop offset=".3796" stop-color="#2cecd8"/><stop offset=".3953" stop-color="#2cecd8"/><stop offset=".4259" stop-color="#1cf078"/><stop offset=".4393" stop-color="#1cf078"/><stop offset=".45" stop-color="#25edb1"/><stop offset=".4633" stop-color="#2cecd8"/><stop offset=".4793" stop-color="#2cecd8"/><stop offset=".4833" stop-color="#1cf078"/><stop offset=".4984" stop-color="#1cf078"/><stop offset=".5104" stop-color="#25edb1"/><stop offset=".5255" stop-color="#2cecd8"/><stop offset=".5436" stop-color="#2cecd8"/><stop offset=".5654" stop-color="#1cf078"/><stop offset=".5785" stop-color="#1cf078"/><stop offset=".5889" stop-color="#25edb1"/><stop offset=".602" stop-color="#2cecd8"/><stop offset=".6178" stop-color="#2cecd8"/><stop offset=".6217" stop-color="#1cf078"/><stop offset=".638" stop-color="#1cf078"/><stop offset=".6511" stop-color="#25edb1"/><stop offset=".6674" stop-color="#2cecd8"/><stop offset=".687" stop-color="#2cecd8"/><stop offset=".7048" stop-color="#1cf078"/><stop offset=".7176" stop-color="#1cf078"/><stop offset=".7279" stop-color="#25edb1"/><stop offset=".7408" stop-color="#2cecd8"/><stop offset=".7562" stop-color="#2cecd8"/><stop offset=".7611" stop-color="#1cf078"/><stop offset=".7772" stop-color="#1cf078"/><stop offset=".79" stop-color="#25edb1"/><stop offset=".8061" stop-color="#2cecd8"/><stop offset=".8254" stop-color="#2cecd8"/><stop offset=".8432" stop-color="#1cf078"/><stop offset=".856" stop-color="#1cf078"/><stop offset=".8663" stop-color="#25edb1"/><stop offset=".8792" stop-color="#2cecd8"/><stop offset=".8946" stop-color="#2cecd8"/><stop offset=".8995" stop-color="#1cf078"/><stop offset=".9156" stop-color="#1cf078"/><stop offset=".9285" stop-color="#25edb1"/><stop offset=".9445" stop-color="#2cecd8"/><stop offset=".9638" stop-color="#2cecd8"/><stop offset=".9816" stop-color="#1cf078"/><stop offset=".9917" stop-color="#1cf078"/><stop offset=".9999" stop-color="#25edb1"/><stop offset="1." stop-color="#2cecd8"/><stop offset="1." stop-color="#2cecd8"/></linearGradient><linearGradient id="gc" x1="0" y1="0" x2="1" y2="0"><stop offset="0" stop-color="#20e840" stop-opacity="0"/><stop offset="1" stop-color="#20e840" stop-opacity="0.6"/></linearGradient><clipPath id="wc"><rect x="166.2" y="484" width="1011.3999999999999" height="210"/></clipPath></defs><g clip-path="url(#wc)"><rect x="166.2" y="484.5" width="1011.3999999999999" height="8.5" fill="#2a2a2a"/><rect x="166.2" y="493" width="1011.3999999999999" height="12" fill="#565656"/><rect x="166.2" y="505" width="1011.3999999999999" height="189" fill="#8c8c8c"/><rect x="177" y="502.4" width="0.8" height="2.6" fill="#a4a4a4"/><rect x="189.4" y="502.4" width="0.8" height="2.6" fill="#a4a4a4"/><rect x="201.7" y="502.4" width="0.8" height="2.6" fill="#a4a4a4"/><rect x="213.9" y="493.6" width="1" height="11.4" fill="#cfcfcf"/><rect x="226.3" y="502.4" width="0.8" height="2.6" fill="#a4a4a4"/><rect x="238.6" y="502.4" width="0.8" height="2.6" fill="#a4a4a4"/><rect x="251" y="502.4" width="0.8" height="2.6" fill="#a4a4a4"/><rect x="263.3" y="502.4" width="0.8" height="2.6" fill="#a4a4a4"/><rect x="275.6" y="502.4" width="0.8" height="2.6" fill="#a4a4a4"/><rect x="287.9" y="502.4" width="0.8" height="2.6" fill="#a4a4a4"/><rect x="300.2" y="502.4" width="0.8" height="2.6" fill="#a4a4a4"/><rect x="312.6" y="502.4" width="0.8" height="2.6" fill="#a4a4a4"/><rect x="324.9" y="502.4" width="0.8" height="2.6" fill="#a4a4a4"/><rect x="337.1" y="493.6" width="1" height="11.4" fill="#cfcfcf"/><rect x="349.5" y="502.4" width="0.8" height="2.6" fill="#a4a4a4"/><rect x="361.8" y="502.4" width="0.8" height="2.6" fill="#a4a4a4"/><rect x="374.2" y="502.4" width="0.8" height="2.6" fill="#a4a4a4"/><rect x="386.5" y="502.4" width="0.8" height="2.6" fill="#a4a4a4"/><rect x="398.8" y="502.4" width="0.8" height="2.6" fill="#a4a4a4"/><rect x="411.1" y="502.4" width="0.8" height="2.6" fill="#a4a4a4"/><rect x="423.4" y="502.4" width="0.8" height="2.6" fill="#a4a4a4"/><rect x="435.8" y="502.4" width="0.8" height="2.6" fill="#a4a4a4"/><rect x="448.1" y="502.4" width="0.8" height="2.6" fill="#a4a4a4"/><rect x="460.3" y="493.6" width="1" height="11.4" fill="#cfcfcf"/><rect x="472.7" y="502.4" width="0.8" height="2.6" fill="#a4a4a4"/><rect x="485" y="502.4" width="0.8" height="2.6" fill="#a4a4a4"/><rect x="497.4" y="502.4" width="0.8" height="2.6" fill="#a4a4a4"/><rect x="509.7" y="502.4" width="0.8" height="2.6" fill="#a4a4a4"/><rect x="522" y="502.4" width="0.8" height="2.6" fill="#a4a4a4"/><rect x="534.3" y="502.4" width="0.8" height="2.6" fill="#a4a4a4"/><rect x="546.6" y="502.4" width="0.8" height="2.6" fill="#a4a4a4"/><rect x="559" y="502.4" width="0.8" height="2.6" fill="#a4a4a4"/><rect x="571.3" y="502.4" width="0.8" height="2.6" fill="#a4a4a4"/><rect x="583.5" y="493.6" width="1" height="11.4" fill="#cfcfcf"/><rect x="595.9" y="502.4" width="0.8" height="2.6" fill="#a4a4a4"/><rect x="608.2" y="502.4" width="0.8" height="2.6" fill="#a4a4a4"/><rect x="620.6" y="502.4" width="0.8" height="2.6" fill="#a4a4a4"/><rect x="632.9" y="502.4" width="0.8" height="2.6" fill="#a4a4a4"/><rect x="645.2" y="502.4" width="0.8" height="2.6" fill="#a4a4a4"/><rect x="657.5" y="502.4" width="0.8" height="2.6" fill="#a4a4a4"/><rect x="669.8" y="502.4" width="0.8" height="2.6" fill="#a4a4a4"/><rect x="682.2" y="502.4" width="0.8" height="2.6" fill="#a4a4a4"/><rect x="694.5" y="502.4" width="0.8" height="2.6" fill="#a4a4a4"/><rect x="706.7" y="493.6" width="1" height="11.4" fill="#cfcfcf"/><rect x="719.1" y="502.4" width="0.8" height="2.6" fill="#a4a4a4"/><rect x="731.4" y="502.4" width="0.8" height="2.6" fill="#a4a4a4"/><rect x="743.8" y="502.4" width="0.8" height="2.6" fill="#a4a4a4"/><rect x="756.1" y="502.4" width="0.8" height="2.6" fill="#a4a4a4"/><rect x="768.4" y="502.4" width="0.8" height="2.6" fill="#a4a4a4"/><rect x="780.7" y="502.4" width="0.8" height="2.6" fill="#a4a4a4"/><rect x="793" y="502.4" width="0.8" height="2.6" fill="#a4a4a4"/><rect x="805.4" y="502.4" width="0.8" height="2.6" fill="#a4a4a4"/><rect x="817.7" y="502.4" width="0.8" height="2.6" fill="#a4a4a4"/><rect x="829.9" y="493.6" width="1" height="11.4" fill="#cfcfcf"/><rect x="842.3" y="502.4" width="0.8" height="2.6" fill="#a4a4a4"/><rect x="854.6" y="502.4" width="0.8" height="2.6" fill="#a4a4a4"/><rect x="867" y="502.4" width="0.8" height="2.6" fill="#a4a4a4"/><rect x="879.3" y="502.4" width="0.8" height="2.6" fill="#a4a4a4"/><rect x="891.6" y="502.4" width="0.8" height="2.6" fill="#a4a4a4"/><rect x="903.9" y="502.4" width="0.8" height="2.6" fill="#a4a4a4"/><rect x="916.2" y="502.4" width="0.8" height="2.6" fill="#a4a4a4"/><rect x="928.6" y="502.4" width="0.8" height="2.6" fill="#a4a4a4"/><rect x="940.9" y="502.4" width="0.8" height="2.6" fill="#a4a4a4"/><rect x="953.1" y="493.6" width="1" height="11.4" fill="#cfcfcf"/><rect x="965.5" y="502.4" width="0.8" height="2.6" fill="#a4a4a4"/><rect x="977.8" y="502.4" width="0.8" height="2.6" fill="#a4a4a4"/><rect x="990.2" y="502.4" width="0.8" height="2.6" fill="#a4a4a4"/><rect x="1002.5" y="502.4" width="0.8" height="2.6" fill="#a4a4a4"/><rect x="1014.8" y="502.4" width="0.8" height="2.6" fill="#a4a4a4"/><rect x="1027.1" y="502.4" width="0.8" height="2.6" fill="#a4a4a4"/><rect x="1039.4" y="502.4" width="0.8" height="2.6" fill="#a4a4a4"/><rect x="1051.8" y="502.4" width="0.8" height="2.6" fill="#a4a4a4"/><rect x="1064.1" y="502.4" width="0.8" height="2.6" fill="#a4a4a4"/><rect x="1076.3" y="493.6" width="1" height="11.4" fill="#cfcfcf"/><rect x="1088.7" y="502.4" width="0.8" height="2.6" fill="#a4a4a4"/><rect x="1101" y="502.4" width="0.8" height="2.6" fill="#a4a4a4"/><rect x="1113.4" y="502.4" width="0.8" height="2.6" fill="#a4a4a4"/><rect x="1125.7" y="502.4" width="0.8" height="2.6" fill="#a4a4a4"/><rect x="1138" y="502.4" width="0.8" height="2.6" fill="#a4a4a4"/><rect x="1150.3" y="502.4" width="0.8" height="2.6" fill="#a4a4a4"/><rect x="1162.6" y="502.4" width="0.8" height="2.6" fill="#a4a4a4"/><rect x="1175" y="502.4" width="0.8" height="2.6" fill="#a4a4a4"/><text x="216.8" y="499.6" font-size="6.8" fill="#dcdcdc" letter-spacing="0.15">35 s</text><text x="340" y="499.6" font-size="6.8" fill="#dcdcdc" letter-spacing="0.15">40 s</text><text x="463.2" y="499.6" font-size="6.8" fill="#dcdcdc" letter-spacing="0.15">45 s</text><text x="586.4" y="499.6" font-size="6.8" fill="#dcdcdc" letter-spacing="0.15">50 s</text><text x="709.6" y="499.6" font-size="6.8" fill="#dcdcdc" letter-spacing="0.15">55 s</text><text x="832.8" y="499.6" font-size="6.8" fill="#dcdcdc" letter-spacing="0.15">1 mn</text><text x="956" y="499.6" font-size="6.8" fill="#dcdcdc" letter-spacing="0.15">1 mn 5 s</text><text x="1079.2" y="499.6" font-size="6.8" fill="#dcdcdc" letter-spacing="0.15">1 mn 10 s</text><rect x="166.2" y="533.2" width="1011.3999999999999" height="1.4" fill="#3a3a3a"/><rect x="166.2" y="521.9" width="1011.3999999999999" height="0.8" fill="#586468"/><rect x="166.2" y="577.2" width="1011.3999999999999" height="1.4" fill="#3a3a3a"/><rect x="166.2" y="545" width="1011.3999999999999" height="0.8" fill="#586468"/><rect x="166.2" y="566.3" width="1011.3999999999999" height="0.8" fill="#586468"/><rect x="166.2" y="554.85" width="1011.3999999999999" height="2.4" fill="#969696"/><rect x="166.2" y="621.4" width="1011.3999999999999" height="1.4" fill="#3a3a3a"/><rect x="166.2" y="588.9" width="1011.3999999999999" height="0.8" fill="#586468"/><rect x="166.2" y="610.1" width="1011.3999999999999" height="0.8" fill="#586468"/><rect x="166.2" y="598.7" width="1011.3999999999999" height="2.4" fill="#969696"/><rect x="166.2" y="665.6" width="1011.3999999999999" height="1.4" fill="#3a3a3a"/><rect x="166.2" y="632.8" width="1011.3999999999999" height="0.8" fill="#586468"/><rect x="166.2" y="654.1" width="1011.3999999999999" height="0.8" fill="#586468"/><rect x="166.2" y="642.65" width="1011.3999999999999" height="2.4" fill="#969696"/><rect x="166.2" y="694" width="1011.3999999999999" height="1.4" fill="#3a3a3a"/><rect x="166.2" y="676.8" width="1011.3999999999999" height="0.8" fill="#586468"/><g transform="translate(166.2,522.3)"><path d="M0,-1.4l1 .1 1 .1 1-.3 1-.1 1 .2 1 0 1 .5 1-.3 1 .2 1 0 1-.1 1 .1 1-.5 1 .3 1 .1 1 .2 1 0 1-.8 1 0 1 .1 1 .3 1 0 1 .3 1 .2 1-.3 1 .3 1 0 1-.3 1 .2 1-.1 1-1 1 0 1-.2 1-1.7 1 .3 1 1.1 1 0 1-.2 1 .6 1 .1 1 0 1-.4 1 .1 1 .3 1 .4 1-.2 1-.5 1-.1 1 .8 1-.3 1 .3 1-.9 1 1 1-.5 1-.1 1 .4 1-.1 1 .2 1-.4 1-.2 1 0 1 .2 1 .2 1-.1 1-.5 1 .3 1-1.2 1 .7 1-.4 1-.3 1 .4 1-.1 1 .3 1-.1 1 1.1 1-.6 1-.6 1 1.3 1-.7 1-.2 1 .3 1 0 1 .6 1-.2 1 .4 1-.8 1 .4 1-.3 1 .5 1-.6 1 .4 1 0 1 1.5 1 0 1 0 1 0 1 0 1 0 1 0 1 0 1 0 1-2.8 1 .6 1-.1 1 .5 1-.6 1 .4 1-.1 1 .3 1-.4 1 0 1-.7 1 .9 1 .8 1-.3 1 .2 1-.7 1-.2 1 .4 1 .1 1 0 1 .1 1 .1 1 .3 1-.5 1 0 1 0 1 .1 1 .1 1-.2 1 .8 1-.4 1-.4 1 .6 1-.5 1-.4 1-2.1 1 1 1-.1 1-.2 1 .9 1 .4 1 0 1-.3 1-.1 1 .7 1 .4 1-.7 1-.3 1 .5 1 .4 1-.8 1 .5 1 .5 1-.6 1 .5 1-.1 1 0 1 .2 1-.1 1-.4 1 .3 1-.4 1 .4 1-.7 1-.1 1 0 1 0 1 .6 1 .2 1-.3 1-1.6 1 .2 1 .1 1 0 1 .4 1 .4 1 .6 1-.3 1-.1 1-.1 1-.6 1 .6 1 .7 1-1 1 .8 1 0 1-.1 1-.2 1 .9 1-.1 1-.5 1-.3 1 .5 1 .4 1-.4 1-.4 1 .6 1-.5 1 .2 1 .4 1-.3 1-.7 1 .6 1 0 1 .6 1-1.8 1 .7 1 .2 1-1 1 1.4 1-.2 1-1.1 1 .3 1-.2 1 .7 1-.5 1 .8 1-.2 1-.1 1 .5 1-.3 1-.3 1 .1 1 .1 1 0 1 .4 1 .2 1 0 1-.6 1-.2 1 .6 1 .1 1-.3 1 .3 1 .1 1 .2 1 .2 1-.6 1-.3 1 .3 1-.1 1-1.3 1 .1 1 .4 1 .5 1-.9 1-.1 1-.4 1-.2 1 1 1 .3 1 0 1 .4 1-.3 1 .5 1-.4 1-.3 1 .3 1-.5 1 1 1 .3 1-1 1-.1 1 .8 1-.5 1 .1 1 .7 1 .2 1-.2 1-.5 1 .3 1-.2 1-.2 1-.1 1 1.9 1 0 1 0 1 0 1-1.6 1-.5 1 .3 1 .1 1-.3 1-.5 1-.6 1 .5 1 .6 1 .2 1-.6 1 .4 1 .2 1-.3 1 .2 1-.1 1-1.1 1 .7 1 0 1-.1 1 0 1 .3 1-.1 1 .1 1 .9 1 .2 1-.1 1-.4 1-.1 1 .2 1-.1 1 .3 1 .4 1-2.2 1 .2 1 0 1 .2 1-.4 1 .7 1 0 1 .8 1-.4 1 .1 1-.2 1-.6 1 .3 1 .4 1 .1 1 .3 1 0 1 0 1 .1 1 0 1 .2 1-.5 1 .2 1-.4 1-.1 1 .3 1-.1 1 .2 1 .1 1-.2 1-.1 1 .2 1-.1 1 .6 1-.4 1-.7 1 .5 1-.1 1 .1 1-.7 1-.1 1-.4 1 .8 1 .2 1-.3 1 0 1 0 1 .4 1 .8 1-.8 1 .8 1-.5 1-.5 1 .8 1 0 1-.1 1-.6 1 .1 1 .3 1 .1 1 .1 1 .2 1-.8 1 .7 1-.8 1 0 1 .3 1 .2 1 .1 1-.1 1-1.7 1 .4 1 .4 1-.5 1 .8 1-1.3 1 .6 1 .5 1 0 1 .4 1-.5 1 .5 1 0 1 .2 1-.1 1 .3 1 .1 1-.6 1 .4 1-.4 1 .1 1 .4 1 .1 1 .2 1-.4 1-.1 1 0 1 .2 1-.5 1 .7 1-.7 1-.1 1 .6 1-.1 1 .4 1-.3 1-.9 1 .6 1-.3 1-.3 1 .3 1 2.2 1 0 1 0 1 0 1 0 1 0 1-1.3 1-.6 1 .4 1-.3 1-.1 1-.3 1-.1 1 .1 1-.1 1 .3 1 .3 1 .2 1 .3 1 0 1-.5 1 .5 1-.4 1-.6 1 .5 1 .5 1-.5 1-.1 1 .3 1 .3 1-1.4 1 .1 1 .1 1 0 1 .1 1 .8 1-.2 1-.7 1-.2 1 0 1 .3 1 .6 1 0 1-.7 1 .1 1 .4 1-.1 1 .4 1-.2 1-.6 1 .4 1 .7 1-.3 1-.2 1-.8 1 .6 1 .2 1-.2 1-.2 1 .2 1 0 1-.4 1 .3 1 .5 1 .7 1-2 1 .3 1-.6 1 .3 1 .3 1 .7 1-.1 1 .2 1 .1 1-.8 1 .2 1 .1 1-.4 1 .8 1-.3 1 .5 1-.7 1 0 1 .2 1 .2 1 0 1 .5 1-.3 1 .5 1-.7 1 .1 1-.2 1 0 1 .2 1 .3 1 .1 1-.1 1-.4 1 0 1-.5 1-1.3 1 .8 1-.7 1 .1 1 .6 1-.4 1 .4 1 .6 1 .6 1-.2 1-.6 1 .4 1 0 1 0 1 .6 1 0 1-.1 1-.4 1 .6 1-.3 1 .1 1-.5 1 .2 1 .1 1 .4 1-.3 1-.7 1 .8 1-.5 1 .6 1 .4 1-.9 1 .8 1-1 1 1.2 1-2.3 1 .2 1 .3 1 .1 1 .3 1 .5 1-.6 1 .1 1-.3 1 .4 1-.1 1-.1 1 .5 1-.5 1 1.2 1-.7 1-.2 1-.3 1-.1 1 .6 1-.1 1 .1 1 .2 1 .6 1-.4 1 .1 1-.1 1 .4 1-.8 1 .1 1 .4 1 0 1-.5 1 .3 1-.1 1 .6 1-1.6 1 .6 1-.7 1 1 1-.1 1 0 1-.4 1 .5 1 .3 1-.3 1-.2 1 .3 1 .6 1 1.2 1 0 1 0 1 0 1 0 1 0 1-1.9 1 .5 1 .1 1-.2 1-.3 1 .2 1 .5 1-.3 1 0 1 .6 1-.7 1-.3 1 .6 1-.2 1 0 1 .4 1-2.4 1 1.5 1-.2 1 .5 1-.6 1-.3 1 .4 1-.2 1-.7 1 .6 1 .5 1-.4 1 1.2 1-1 1 .9 1-.5 1-.6 1-.2 1 0 1 .6 1 .2 1 .4 1-.4 1 .6 1-.8 1-.1 1 .8 1-.3 1 .2 1-.2 1 .3 1-.3 1 .4 1-.6 1 .3 1-1.4 1 1.2 1-.4 1-.7 1-1.1 1 .3 1 .1 1 .9 1 .7 1 .3 1-1.1 1 .5 1 .2 1 .3 1-.2 1 .5 1-.4 1-.5 1 .5 1 .2 1-.2 1 .6 1-.3 1 .3 1-.2 1-.3 1-.2 1 .7 1 .1 1-.5 1 .2 1-.3 1 .2 1-.2 1 0 1-1 1-.2 1 .5 1-.3 1 .3 1 .4 1 0 1-.4 1 0 1 .6 1-.5 1 .2 1 .4 1 .4 1-.7 1 .6 1-.2 1-.2 1 0 1 .1 1-.3 1 0 1 .3 1-.2 1-.3 1 .4 1 0 1-.3 1-.2 1 0 1-.2 1 .2 1 .3 1-.2 1-.3 1-1.7 1 .1 1 1 1-.4 1 1.4 1-.5 1 .5 1-.7 1 .9 1 .1 1 0 1-.1 1 .4 1-.6 1-.3 1 .4 1-.4 1 .8 1-.1 1 0 1-.3 1 .1 1 .2 1 0 1-.3 1 .1 1 .4 1-.5 1 .2 1-.1 1 .4 1-.4 1 .4 1-.1 1-.3 1 .2 1-1.7 1 .7 1 1.1 1-.6 1 0 1-.3 1 .1 1-.5 1 .4 1-.3 1-.1 1 1.2 1 .3 1-.4 1-.1 1 .4 1-.2 1 .2 1-.1 1-.3 1 .6 1-.2 1 0 1-.7 1 1 1-.2 1 0 1-.4 1 .4 1-.1 1 .1 1 0 1-.5 1 .5 1-.2 1-1.3 1 .2 1 .1 1 .7 1 0 1-.7 1 .3 1 .1 1-.2 1 .6 1 0 1 .3 1-.4 1 .2 1 .1 1 .1 1-.5 1 .1 1 0 1 .2 1-.6 1 .8 1 0 1 0 1-.4 1 0 1 .7 1-.1 1-.1 1-.2 1-.1 1 .1 1 1.5 1 0 1 0 1 0 1 0 1 0 1-2.6 1 .4 1-.5 1 .1 1 .7 1-.5 1 1 1-.5 1 .2 1-.2 1-.4 1 1.3 1-.9 1 0 1 .9 1 0 1-1.1 1 .3 1-.5 1 1 1 .1 1-.2 1 .2 1-.3 1-.2 1-.3 1 .9 1-.1 1-.1 1 .2 1-.1 1-.1 1-.9 1-.6 1 .3 1 .6 1-.6 1 .1 1 .2 1 1 1-1.1 1 .5 1-.4 1 .2 1-.5 1-.1 1 0 1 .1 1 .7 1-.1 1 .3 1 .4 1-.4 1 .1 1 0 1 .1 1 0 1-.2 1 .4 1-.1 1-.3 1-.1 1 .5 1-.4 1 .3 1 0 1-.1 1-1.9 1-.2 1 .4 1 .1 1-.2 1 .9 1 .1 1-.6 1 .1 1 1.1 1 0 1-.2 1 .4 1-.8 1 .7 1-.1 1 .1 1-.2 1-.8 1 .9 1 .2 1-.4 1 .1 1 .3 1 0 1-.5 1 .8 1-.4 1 .5 1-.5 1 .3 1 .3 1-.2 1 .2 1-.4 1-.3 1-1.7 1 .8 1 .1 1-.8 1 .9 1 .2 1-.5 1-.3 1-.1 1 1.2 1 .3 1-.3 1 .1 1 .1 1-.1 1-.3 1 0 1-.4 1 .5 1 .7 1-.8 1 .9 1-.2 1-.5 1 .4 1-.1 1 .2 1 .1 1-.4 1 .1 1-.1 1 .5 1-.9 1-.1 1 .2 1-.9 1-.3 1 3.1 1 0 1 0 1 0 1 0 1 0 1 0 1-1.6 1-.3 1 .6 1-.7 1 0 1 .3 1-.1 1-.6 1 0 1-.2 1 .6 1-.1 1-.2 1 .4 1 0 1 .8 1-.6 1-.1 1 .5 1 .5 1.4-.6 0 3.4-1.4 .3-1-.7-1 .6-1 .4-1-.1-1-.2-1-.1-1-.3-1-.3-1 .1-1 0-1 .5-1 .3-1-.1-1-.5-1 .9-1 0-1-.4-1-.3-1 .3-1-1.8-1 0-1 0-1 0-1 0-1 0-1 0-1 2.2-1-.2-1-.3-1-.5-1-.2-1 .7-1-.1-1 .1-1 .1-1-.4-1 .2-1 0-1-.4-1 .1-1 .6-1-.1-1-.5-1 .3-1-.2-1 .4-1-.4-1 0-1-.2-1 .4-1 .2-1 .2-1 0-1-.8-1 1.2-1 .1-1-.6-1 .3-1-.2-1 .1-1 1.1-1-.8-1 0-1-.7-1-.7-1 .7-1 0-1-.3-1 .5-1 .1-1-1-1 .4-1 0-1-.1-1 .2-1 .5-1-.1-1 .1-1-.3-1-.5-1 .5-1 .3-1-.3-1-.4-1 .4-1 .4-1-.5-1 0-1 .4-1 .2-1 .2-1 .3-1-.2-1-.3-1 .3-1 .3-1-.2-1 .8-1-.3-1-1.3-1 0-1-.6-1 0-1 .1-1 .1-1 .2-1-.1-1-.3-1 .5-1-.4-1 .2-1 0-1 .3-1 .1-1-.9-1 .6-1 0-1 0-1-.1-1-.2-1-.1-1 .1-1 .3-1 .4-1-.2-1 .4-1 .2-1-.5-1-.1-1 .9-1-.3-1-.1-1 .8-1 .5-1-1.2-1-.1-1 0-1-.6-1-.1-1 0-1 0-1-.1-1 .3-1-.4-1-.2-1-.1-1 .3-1 .4-1 0-1 .1-1-.4-1 .3-1 .1-1-.3-1 .4-1-.4-1 .4-1-.6-1 .8-1 .4-1-1.2-1 .3-1-.4-1 1.6-1-.6-1 1-1-3.3-1 0-1 0-1 0-1 0-1 0-1 2-1-.4-1-.5-1 .2-1 .2-1-.1-1 .6-1-.5-1 .2-1-.4-1 0-1-.1-1 0-1 .1-1 .7-1-.3-1-.2-1 0-1 .2-1 .1-1 .3-1 0-1 .2-1-.7-1 1.2-1-.9-1 .5-1 .6-1-.7-1-.4-1 1.1-1-.3-1-.7-1-.8-1 .1-1 .2-1 .4-1-.2-1-.2-1 .2-1-.8-1 .2-1 0-1 .6-1-.4-1 .1-1 .5-1 .4-1-.6-1 .6-1-.4-1 0-1-.6-1 .6-1 0-1 .4-1-.1-1-.5-1 .4-1 .5-1-.6-1-.3-1 .4-1 .5-1 .3-1-.1-1-.1-1-.9-1 .1-1 .5-1-.5-1-.2-1-.5-1 .1-1-.3-1 .8-1-.2-1 .1-1-.6-1 .6-1-.3-1 .2-1-.3-1 .5-1 .4-1-.2-1 .8-1-.3-1 0-1 .2-1-.4-1 .1-1 .5-1-1.2-1 0-1 1.1-1-1-1 .6-1 .8-1 .1-1 .1-1-.9-1-.8-1-.4-1 .1-1 .2-1 .2-1 0-1 .3-1-.4-1 .1-1 .1-1 .3-1-.6-1 .1-1-.1-1 0-1 .3-1-.2-1 .1-1 .2-1 0-1 0-1-.2-1-.3-1 .4-1 .2-1-.5-1 .4-1 0-1 .2-1 .4-1 0-1-.1-1-.4-1-.1-1 .6-1 .6-1-1.8-1 .1-1 0-1-.2-1-.2-1 .4-1-.1-1-.2-1 .2-1 .2-1 0-1 .3-1-.2-1 .2-1 .5-1 0-1-1.2-1 .4-1 .2-1-.2-1 .7-1-.4-1 .2-1-.3-1 .2-1 0-1 0-1 .2-1 .5-1-.1-1 0-1 .1-1 .4-1 .5-1-.5-1-1.6-1 0-1-.7-1 1-1-.2-1-.7-1 .3-1 0-1 1-1-.6-1-.1-1-.4-1 .8-1-.7-1 .3-1 .1-1 .4-1-.2-1-.4-1 0-1 .6-1-.5-1 .1-1 .1-1 .7-1-.3-1-.5-1 .1-1 .6-1 .6-1-.9-1 0-1 .7-1-.1-1 .4-1-1.5-1-.2-1 .1-1 .4-1-.5-1-.5-1 .5-1 0-1 0-1-.1-1 1.1-1-.6-1 0-1-.4-1-.1-1 .7-1-1.9-1 0-1 0-1 0-1 0-1 0-1 1.3-1 .7-1-.6-1 1-1-.6-1-.2-1 .2-1 .5-1 .4-1-.1-1 .3-1 .2-1 .4-1-2.3-1 .2-1 .3-1-.3-1 .1-1-.3-1 .3-1-.2-1 .2-1 .2-1-.6-1 0-1 .3-1 .1-1 .4-1-.4-1 .7-1 .3-1-.8-1-.3-1 .1-1 .6-1-.2-1 .5-1-.2-1-.1-1 .6-1 .3-1-.1-1-.1-1-1.1-1 .2-1 1.2-1-.1-1-.5-1-.3-1-.8-1 .1-1-.3-1 .5-1 .5-1-.2-1-.7-1 .2-1 .5-1 .2-1-.1-1 0-1-.2-1-.6-1 .1-1 1.1-1-.2-1-.3-1-.6-1 .7-1 .2-1-.7-1 .5-1-.8-1 .5-1 .5-1 .1-1-.7-1 1.1-1-.6-1 .5-1 .7-1-.2-1-.9-1 1-1-1.1-1-.2-1-.3-1 .3-1-.2-1-.3-1-.1-1 .3-1-.1-1-.1-1-.2-1 .3-1 .4-1-.4-1-.3-1 .5-1-.4-1 .3-1-.2-1 .2-1 .5-1 .3-1-1.1-1 0-1-.2-1 1.1-1 0-1 .4-1 .1-1-.6-1 .8-1-.7-1-.6-1 .9-1 .3-1-1-1-.3-1 .2-1-.5-1 .3-1-.1-1 .1-1-.6-1 .6-1-.1-1 .1-1 0-1-.4-1 .3-1 .2-1 .1-1 .4-1 .2-1-.4-1-.3-1-.7-1 .7-1 .8-1 .5-1-.7-1-.6-1-.2-1 .5-1-.2-1 .2-1 0-1-.1-1-.2-1 .6-1 .2-1-.9-1 .4-1-.4-1 .5-1 0-1-.2-1 .1-1-.5-1-.2-1-.1-1 .7-1-.1-1 .1-1-.3-1 .1-1-.2-1 0-1 .4-1 .2-1 .1-1 .1-1 .2-1-.2-1 .8-1-3.1-1 0-1 0-1 0-1 0-1 0-1 2.3-1 .8-1-.4-1-.4-1 .8-1-1.9-1-.1-1 .2-1 .3-1-.2-1-.1-1 .2-1 .3-1 .1-1-.6-1 .3-1-.2-1-.2-1 .4-1 .3-1 .1-1 .6-1-.2-1-.2-1-.4-1-.7-1 0-1 .3-1-.1-1 .3-1 0-1 .3-1 .5-1-.7-1 0-1 .7-1-1-1 .9-1 .1-1 .7-1-.8-1-1.2-1 0-1 .3-1-.6-1 .5-1 0-1 .4-1 0-1-.1-1-.1-1 .1-1-.1-1-.3-1 .2-1-.3-1 .8-1-.7-1 .1-1 .6-1 0-1-.6-1 .7-1-.5-1 .2-1 .5-1-.8-1 .7-1-.4-1 .6-1-.9-1 .1-1 .6-1 1-1-.5-1-.3-1-.8-1-.2-1-.5-1 .4-1 .5-1 .3-1-.1-1-.3-1 .3-1 .2-1-.8-1 .4-1-.3-1 .2-1-.1-1 .6-1 .1-1-.5-1 .4-1 .1-1-.2-1 .3-1-.2-1-.1-1 .2-1 0-1-.9-1 .9-1 .6-1 .3-1-1-1 .8-1 .2-1-.5-1-.2-1-.8-1 .7-1-.3-1 .1-1 .1-1-.4-1-.6-1 .4-1 .7-1 .4-1 .1-1-.8-1 .4-1-.6-1-.3-1 .1-1-.2-1-.1-1 .8-1 .2-1-.8-1 .9-1 .3-1-.7-1 .2-1-.2-1 .2-1-.5-1 .4-1-.7-1 1-1-1-1 1-1-2.4-1 0-1 0-1 0-1 1.9-1-.6-1-.5-1 .2-1-.2-1 .2-1 .1-1 .5-1-.3-1 .5-1 .3-1 .2-1-.1-1 .2-1-.3-1 .7-1-.7-1-.5-1-.4-1 .6-1 .4-1-.3-1 .4-1-.5-1 .5-1-.5-1 .8-1 .5-1-1.2-1 .2-1 .1-1 .3-1-.3-1-1.1-1 .7-1-.1-1-.4-1 .2-1-.1-1 .2-1-.3-1 .5-1-.3-1-.4-1 .6-1 .2-1 .1-1 .4-1-.4-1-.8-1 .4-1 .2-1-.4-1 .1-1 .1-1-.3-1 .5-1 .1-1 0-1 .3-1-.1-1 .1-1-.1-1-.3-1-.3-1 .9-1 .4-1 .9-1-.7-1-1.3-1 0-1 0-1 .1-1-.2-1-.3-1 0-1 .3-1-.6-1 .9-1-.7-1 .2-1-.1-1 .1-1-.2-1 .5-1 0-1-.5-1 .5-1 .3-1-.1-1-.1-1-.2-1 .5-1-.4-1 .4-1 .2-1 .6-1-.3-1 .5-1-.4-1 .4-1-.2-1-.1-1-.3-1-.7-1-.7-1 .7-1-.7-1 .5-1 .1-1 .2-1-.6-1 .1-1 .6-1 .1-1-.1-1-1.1-1 .4-1-.1-1 .6-1-.5-1-.1-1 .2-1 .5-1-.4-1 .5-1 .1-1-.1-1 .2-1-.2-1 .6-1-.1-1-.8-1 .2-1 .5-1-.6-1 1.5-1-.6-1-.2-1-.9-1 .2-1 .2-1 0-1-.4-1 .1-1 .1-1 .5-1 0-1 0-1-.6-1-.5-1-.3-1 .2-1 .3-1 0-1-.3-1 .1-1 .6-1-.6-1 0-1 .2-1 .7-1-.5-1 .2-1 .5-1-.3-1-.1-1 0-1 0-1 0-1 .4-1-.4-1 .5-1 0-1-2.4-1 0-1 0-1 0-1 0-1 0-1 0-1 0-1 0-1 1.8-1 .1-1 .6-1-1.2-1 0-1 .7-1 .1-1-.2-1-.2-1 .6-1-1-1 1-1-.5-1 .4-1-.9-1 .8-1-.6-1 .8-1-.3-1 0-1 .9-1-.3-1-.3-1 .3-1 .5-1-.4-1-1.6-1 .1-1 .3-1 0-1-.1-1-.3-1 .1-1 .5-1-.5-1 .1-1 .2-1 .5-1 .2-1-.1-1-.5-1 .2-1-.6-1 .4-1 .6-1-.3-1 0-1 0-1 .5-1-.8-1 .1-1-.5-1 1.1-1-.3-1-.2-1 .1-1 .2-1 .7-1 .1-1-1.7-1 .4-1-.2-1-.5-1 .2-1-.6-1 0-1 0-1 .3-1 0-1-.2-1 .1-1-.2-1 .1-1 0-1 0-1 0-1 .2-1-.2-1 .2-1-.4-1 .4-1-.1-1 0-1 0-1 .1-1 0-1 .1-1-.1-1 .2-1-.1-1-.2-1 .2-1 .4z" fill="url(#g0)" stroke="#3848b0" stroke-width="0.5" stroke-linejoin="round"/></g><g transform="translate(166.2,545.4)"><path d="M102,-9.6l1 .3 1 .2 1-1.5 1 .7 1-.7 1 0 1 0 1 0 1 0 1 .5 1-.3 1 .5 1-.7 1 0 1 .2 1-.2 1 0 1 0 1 0 1 0 1 .5 1-.5 1 1.5 1-.4 1 1.1 1-1.3 1 1 1 0 1 .1 1-1 1 .6 1 .3 1 0 1 1.6 1-.4 1-.6 1 .1 1 .1 1 0 1 .9 1-1 1 .1 1 .1 1 0 1-.9 1 1.2 1-.3 1 .4 1 .2 1 .5 1-1.2 1-1.1 1 .4 1 .6 1-.8 1 .5 1 .1 1-1.3 1 .2 1-.6 1 .2 1-.5 1 2.1 1-.6 1-.4 1-.4 1-.7 1 2.1 1 1.1 1-1.2 1-2.4 1 .7 1-.7 1 0 1 0 1 0 1 0 1 .8 1-.8 1 .2 1 1.5 1-.9 1 .2 1 .3 1 .1 1-.6 1 0 1-.1 1 1.3 1-1.3 1 .6 1 1.8 1 .2 1-2 1 1.7 1-.7 1 .5 1-.6 1 0 1-.4 1 1.5 1-1.1 1-.1 1 .6 1-.6 1 2.2 1-1.1 1-1.3 1 .9 1-.4 1-.2 1-.5 1 .2 1-.3 1 .8 1-.4 1-.6 1 .7 1-.4 1-1.7 1 .4 1 .6 1-.2 1-.6 1 .9 1 .8 1-1.1 1 .2 1 .2 1-1.1 1 .7 1 .8 1-.8 1 .3 1 .2 1 0 1-.6 1 1 1 3 1-.3 1-4.4 1 1.3 1-.2 1-1.1 1 0 1 0 1 0 1 0 1 .1 1 1.3 1-.4 1-1 1 .4 1 .5 1-.3 1 1.5 1-1 1 2.1 1-1.7 1-.3 1-.1 1 1.2 1-.4 1 .1 1-.8 1 1.2 1-.4 1 1.2 1 .2 1-.3 1-.2 1 0 1 .3 1-.8 1 .1 1 .1 1-.2 1-.7 1-1.5 1 1.1 1 .1 1 .9 1-.9 1 1.3 1-.1 1-1 1-.1 1 1.4 1-.3 1-.7 1-.3 1 .5 1-1.2 1 1 1-.6 1 .9 1 0 1-.1 1-.5 1-.2 1 1.1 1-.6 1-.9 1-.5 1 .3 1 2.3 1-2 1 1.5 1 .9 1 1.6 1-.2 1-3.6 1-1.3 1 1.7 1-1.2 1 .6 1-.1 1 .1 1-.8 1 1.1 1 1.6 1-.8 1 .2 1 .1 1-.3 1 .2 1-.7 1-.4 1 .5 1 1 1-.3 1-.5 1 .1 1-.2 1 1.1 1 .7 1-.8 1 .6 1-1.4 1-1.1 1 .6 1-.9 1 .6 1-1.3 1 2.4 1-.9 1 1.1 1-.9 1 .8 1-1.4 1 1.2 1-.3 1-1.4 1 1.8 1-.8 1-1.6 1 .2 1 1 1 2.5 1-3.1 1-.6 1 0 1 0 1 0 1 1.1 1-1.1 1 .7 1 .7 1 1.4 1 .1 1-1.2 1-.6 1 1.2 1-2.1 1 1.8 1-1.6 1-.4 1 2.3 1-2.3 1 .2 1 .3 1 .4 1-.3 1-.6 1 0 1 .5 1 .1 1 .7 1-.7 1-.2 1 .8 1 .4 1-.2 1-1 1 0 1 .8 1-.4 1-.2 1 1.7 1-.4 1 .5 1-.6 1 .9 1-1.9 1 .8 1-.1 1 0 1-.5 1 1.2 1 1 1-.6 1 .2 1-.5 1 1 1 .5 1-1.3 1 1.1 1-1.4 1 1.6 1-.7 1-1 1 0 1-.8 1 1.5 1-.6 1 .1 1 .8 1-.9 1 1.2 1 .1 1-.5 1-.5 1-.5 1-.5 1 2 1-.4 1-.2 1 0 1-.8 1-.1 1 .9 1-1.6 1-.6 1 2.6 1-1.6 1 .8 1-.6 1 .4 1-1.3 1 .4 1 2.5 1 1 1-3.8 1-1.1 1 .8 1-.3 1-.2 1 .7 1 .5 1-.5 1-.4 1 1 1 .5 1-.2 1-.2 1-.1 1-.3 1 .4 1-.3 1 .7 1-.3 1-1.5 1 1.6 1-1.9 1 1.2 1-.3 1-.8 1 1.6 1-.1 1-.5 1 .3 1 .7 1-.1 1-2 1 .8 1-.8 1 .2 1 .4 1 .9 1 .8 1-.6 1 .1 1 1.1 1-.1 1-.4 1-.2 1-.3 1-.4 1 .2 1 1 1-1 1 1.3 1-.4 1-.5 1 1.5 1-.7 1 1.5 1-.9 1-.3 1 1.6 1-1.8 1 .2 1-.2 1-.9 1 .5 1 .5 1 .1 1-.1 1-1.7 1 1.5 1 2.2 1-4.1 1-.1 1 .4 1 1 1-.7 1-.7 1-.9 1 0 1 0 1 0 1 0 1 .3 1 .6 1-.9 1 0 1 1.2 1-1.2 1 1.5 1-.2 1-.4 1-.4 1 .7 1 .4 1-.3 1-.7 1-.6 1 .4 1-.3 1 2.1 1-1.2 1-.6 1 1.2 1-.2 1-.4 1 .4 1 1.8 1-.1 1-.9 1 1.2 1-1.1 1-.4 1 1.1 1 .1 1-.6 1-.4 1-.1 1 1.9 1-.5 1-.1 1-1.7 1 .2 1 1.3 1 .3 1-1.7 1 2.2 1-2.2 1 1.4 1-.9 1-.1 1-.1 1 .1 1 1 1-.3 1-1 1 1 1-.4 1-.1 1-.8 1-.4 1 2.9 1-.2 1-3.8 1 0 1 0 1 0 1 0 1 0 1 0 1 0 1 0 1 0 1 0 1 0 1 0 1 0 1 0 1 0 1 1.5 1-1.2 1-.3 1 1.4 1 0 1-.8 1 .7 1 1.2 1-1.4 1 .2 1 .6 1 0 1 1 1-.3 1-1.2 1 .1 1-.1 1 0 1 .8 1 .2 1-1.6 1 1.2 1 0 1-.2 1 .9 1-.8 1 .7 1 .7 1-1.3 1 1.7 1-.8 1 2.3 1-4.9 1-.3 1 0 1 0 1 .5 1 2.1 1-2.4 1-.2 1 0 1 0 1 1 1-.9 1 .1 1 2.2 1 .1 1-1.9 1 1.9 1 .2 1-1.3 1 .9 1-.3 1 1 1-.1 1-1.3 1 .4 1-.5 1-.1 1 .9 1 0 1 1 1 .7 1-1.1 1 .7 1 .6 1-.1 1-1.8 1 .7 1 .6 1-2 1-1 1 2 1-.4 1-1 1-.8 1 1.3 1-.7 1 .5 1 .1 1-.3 1 .1 1 0 1-1.1 1 .2 1 .2 1 1.3 1-.6 1-1.3 1 .9 1 .6 1-1.3 1 1.1 1-.3 1 .3 1 .6 1-.2 1 .4 1-.4 1-.6 1 .5 1 .8 1-1.1 1 1 1-.5 1 .5 1 .6 1-.4 1 .1 1-1.2 1 .9 1-1.1 1 .7 1 1.5 1-.5 1 1.3 1-.6 1-.3 1 .9 1-1.8 1-.9 1 .1 1 .8 1 2.2 1-1.6 1-3.1 1 .1 1 .8 1 0 1-.1 1 0 1 .5 1 .2 1 .4 1-.6 1 1 1 0 1-.6 1 .9 1 0 1-.7 1 .7 1 1.3 1-1.8 1-.7 1 1.6 1 .6 1-1.3 1 .1 1 .8 1-1.7 1 1 1-1.1 1 .3 1-.4 1 .6 1-1.5 1 .4 1 1 1-.5 1-.2 1-1 1 .4 1-.5 1 .4 1 1.4 1 .7 1-2.2 1 .9 1-.9 1 1.2 1-.4 1 0 1 .8 1 0 1 .2 1 1 1-1.1 1-.9 1 2 1 .6 1-.7 1-.5 1-.1 1-.5 1 .3 1-.3 1-.5 1 .3 1 .1 1 1 1-.5 1-.1 1 3.4 1-1 1-3.4 1-.2 1 .8 1-.6 1 .2 1-.9 1-.4 1 .1 1-.1 1 .2 1 1.6 1-.8 1 1 1 .5 1-1.2 1 1.6 1 .8 1-1.5 1 0 1-.4 1-.7 1 .3 1-.8 1 1.2 1-.6 1-.7 1 .9 1 .3 1 .2 1-1 1-1 1 .4 1 0 1-.3 1-.1 1 0 1 .9 1 1.6 1-1 1 .5 1 .7 1-.1 1-2.5 1 1.5 1-.6 1 .7 1 1.7 1-2.4 1-.3 1 1.4 1-.9 1 1.9 1-1.2 1 1.3 1-.7 1-.1 1 1.1 1-.7 1 1.1 1-1.4 1 0 1 1.4 1 .1 1-.5 1 .1 1-.9 1 .5 1-.2 1-.7 1 2.8 1-1.4 1-1.8 1 .5 1-.7 1 0 1-1 1-.7 1 0 1 0 1 1.9 1 .2 1 .6 1-1.3 1-1.1 1-.1 1 .7 1-.6 1 .4 1 0 1 .7 1 .5 1-1.3 1 .5 1 .2 1 .1 1 0 1-.8 1-.6 1 .3 1 .8 1-.4 1 .1 1 .9 1-.7 1 .7 1 .5 1-.2 1-.8 1-1.2 1 2.1 1-.9 1 .3 1-.3 1 2 1-1 1 .8 1 .4 1-1.6 1 2.3 1-4.1 1 .1 1-.1 1 0 1 0 1 0 1 1.9 1-.8 1-.6 1 .7 1-.1 1-.4 1-.7 1 .3 1 .6 1 .1 1-.6 1-.4 1 1.1 1 .6 1 .3 1-1.2 1 .4 1-.5 1 1.5 1 .2 1-2 1 .1 1 1.2 1-.6 1 .1 1 1.2 1-.4 1 1.1 1-1.7 1 2 1-1.1 1-.3 1 1.1 1 .3 1 0 1-1.8 1 1.8 1-.8 1 0 1-.3 1-1.3 1 1.1 1-.7 1 .7 1 1.8 1-.6 1 .1 1 .2 1 .2 1-.1 1-1.3 1 .9 1 .4 1-.4 1-1.1 1-.1 1 .9 1-.9 1-1.4 1-.1 1 .6 1 .5 1-.1 1 1 1-1.9 1-.7 1 .7 1 .4 1 0 1-.5 1 1.4 1 .3 1-1.1 1-.8 1-.2 1 2.3 1-1.1 1-.7 1 2 1-1.6 1.4 .3 0 19.2-1.4-.6-1-.4-1-.6-1 0-1 .9-1-.7-1-.4-1 2.4-1-.5-1 .1-1-.9-1 .7-1-.8-1-.5-1 .7-1 1.2-1-.5-1-.7-1-.6-1 .4-1-1.3-1 .8-1-.7-1 .6-1-.7-1-.1-1 .6-1-.7-1 .7-1-1.1-1 .7-1-1.1-1-.1-1-.2-1 1.5-1-.5-1-.3-1 0-1 1.2-1-1.4-1 2.1-1-.1-1 .1-1-1.7-1 1.4-1-.6-1 0-1 1-1-.5-1-.5-1 .5-1 .6-1-1.3-1 .5-1-.1-1-.2-1-.2-1 2-1-1.8-1-.2-1 1.5-1-.7-1 1.7-1-.5-1-1.4-1 .2-1 1.2-1 .2-1 .3-1 0-1 0-1 0-1 0-1 0-1 0-1-.6-1 .6-1 0-1 0-1 0-1-1.1-1-.4-1 .7-1-.6-1 1.2-1-2.7-1-2.5-1 1.9-1 0-1 .6-1 .6-1 .6-1-.3-1-1.2-1 1.9-1-1.4-1 .2-1-.9-1 1.8-1 .2-1 .8-1 .5-1 .1-1-.9-1-.3-1 1.2-1 0-1 0-1 0-1 0-1-2.3-1 .8-1-1-1 1.7-1-.8-1 0-1 .6-1-1.4-1 0-1 1.7-1-1-1 1.3-1-1.7-1 1.3-1-.6-1 .2-1-.4-1 .9-1 .5-1-1.4-1-1-1 2.4-1-2.5-1 2-1-3.4-1-2-1 3.6-1-.3-1-.5-1-.1-1-.2-1 .2-1-.2-1 0-1 .1-1 .7-1-.3-1 1-1-.1-1-.1-1 .4-1 .8-1 1-1-1.8-1-1.1-1 1.3-1 .5-1 .2-1 1-1-1-1 .4-1-1.3-1 1-1 .3-1-1.5-1 .1-1 1-1-.8-1 1-1-2.6-1 2.6-1-.9-1 1-1-.9-1 .3-1-.6-1 .9-1-.6-1-.5-1 .5-1-.1-1 .6-1-1.6-1 1.4-1 1.3-1 0-1-.4-1 .3-1-1.2-1-1.7-1 .6-1-.7-1 .3-1 .1-1 .4-1 .8-1 .5-1 .1-1-1.8-1 1.4-1-.5-1 1.2-1-.2-1 .8-1 0-1-4.3-1-.8-1 2.3-1-.1-1 1-1-.6-1 .8-1-1.4-1-.1-1 .7-1 1.3-1-1.5-1 1.5-1-.9-1 .4-1 .6-1-.4-1-.5-1 .5-1 .3-1-.2-1 1.4-1-1.3-1 .8-1-.5-1-.3-1-1.4-1-.8-1 2.2-1-1.1-1 .4-1 .2-1-.3-1-.3-1 1.5-1 .5-1 .4-1-1.2-1-.6-1 .9-1-2.1-1 1.2-1-.7-1-.7-1-.5-1 1.8-1-1.7-1 1.3-1-1.1-1 2.3-1 .7-1-1.6-1 .4-1 .8-1-1-1 .9-1 .2-1-.5-1 .7-1-.1-1 .6-1-.2-1 .1-1-.9-1 .3-1 .6-1 .1-1 0-1 0-1 0-1-3.1-1-1.5-1 2.7-1-2-1 1.6-1-.9-1-1.1-1 1.8-1-1.8-1 1.7-1-.2-1-.8-1 .6-1-.1-1 1.1-1-1.7-1 1.2-1-.9-1 .1-1 1.3-1-.3-1-.6-1 .5-1 .5-1 .5-1-1.2-1-.1-1 0-1 .8-1 .6-1 .1-1 .1-1 .8-1-.3-1 .6-1-1.3-1-.1-1 1-1-1.3-1-1.7-1 .1-1 1.5-1-.7-1 1.5-1-.9-1 1.8-1-.4-1-.8-1-1.2-1 .8-1-.5-1 .9-1 1-1 .3-1-.9-1-.5-1-.7-1 .8-1 .1-1-2-1 .6-1-.2-1-.2-1-.7-1 1.1-1-1.1-1 1.5-1-1-1 .4-1 1.1-1-.1-1 .5-1-1-1 .2-1 1.6-1-.7-1-.3-1 .3-1 .6-1 0-1 0-1 .6-1 0-1 0-1 0-1 0-1 0-1 0-1-.1-1 .1-1-.1-1 .1-1-1.2-1-3.2-1 2.4-1-.3-1 .4-1-.1-1-1-1 1.9-1-1.5-1 .9-1 .1-1-2.1-1 .4-1-.3-1 .7-1-.9-1 .9-1 1.1-1-.5-1 0-1-.2-1 .2-1 0-1-.6-1 1.1-1 1.4-1-2.1-1 .9-1-1.6-1 1.9-1 .7-1-1.1-1 1-1-.5-1 1.2-1-1.4-1 1.4-1-1.4-1 1.4-1 0-1-1.4-1 .4-1 .5-1-.1-1 .1-1-.7-1 1.2-1-1-1 1-1-4.2-1-.5-1 2.6-1-1-1 .7-1-.7-1 .2-1 .9-1 .9-1-.5-1 .8-1-1.1-1 .9-1-.4-1 .2-1-1.2-1 .6-1-.9-1 .7-1-1.1-1 1.4-1-1.7-1 1.3-1-1-1 .4-1 .9-1-1-1-1.2-1 .1-1 .8-1 0-1-1.2-1 1.5-1-.1-1 .7-1-1-1 1.3-1-.6-1 .8-1 .6-1-.6-1 .5-1 .8-1-.7-1 .7-1 .2-1-1.5-1 1.7-1-.1-1 .1-1-1.3-1 .9-1-.9-1 1.3-1-1-1 1-1-2.2-1 1.6-1 0-1 .6-1 0-1 0-1 0-1 0-1 0-1 0-1 0-1 0-1 0-1 0-1-2-1-3.2-1 3.2-1-1.1-1 0-1 .4-1 .5-1 .8-1-.5-1 0-1-.6-1 .7-1-1.3-1 1.6-1-.6-1-.4-1-.3-1-.5-1 1.8-1-1.5-1 .9-1 .1-1-1.1-1-.2-1 1.6-1-.4-1-.5-1 .1-1-.2-1-.2-1 .1-1 1.5-1 .7-1-.3-1-1.3-1-.4-1 2.2-1-.1-1-.5-1 .3-1-.3-1-1.8-1 1.1-1 1-1-1-1 1.4-1-1.4-1 1.7-1-1-1 .5-1-1.2-1 .7-1-.5-1 .4-1 .3-1 .2-1 .6-1-1.1-1-.1-1 .7-1-.3-1-.4-1-.9-1 .8-1 1.3-1-.8-1 .1-1 .7-1 0-1-1-1-3.7-1 1.1-1 1-1 1.7-1-1.6-1-.6-1 1.1-1 .6-1-1.6-1-.8-1 1.3-1 1-1-.9-1-.3-1 0-1 .3-1-1.3-1 .6-1 1.2-1-.5-1 0-1 .5-1 .4-1-1.8-1-.2-1 .5-1 0-1-.1-1 .7-1-.4-1 .1-1-.6-1-.3-1 1.3-1 0-1-.5-1-.8-1 .9-1 1-1-1-1-.9-1 .5-1-.3-1 .3-1 .5-1 1.2-1-.5-1 .7-1 .3-1 .1-1-.4-1 .1-1 .1-1-1.6-1 1.3-1-.5-1 .4-1-.4-1-.1-1-.2-1 1-1 .3-1 0-1 .2-1-1.2-1 1.5-1-.1-1-1.7-1 1.2-1-1-1 .2-1 .5-1-.4-1-.3-1-1-1 1.6-1 1.3-1-.5-1 .3-1-1.3-1 .3-1-1.2-1-.7-1 1.3-1-.2-1-.2-1 .3-1 .7-1 1-1 .2-1 0-1 0-1-.4-1-2.8-1 3.2-1 0-1-1.3-1-.5-1 .7-1-.2-1-.7-1-.4-1 .7-1-.7-1 1.2-1-.4-1-1-1 .5-1-.7-1-.3-1 1.8-1-.6-1 .4-1-.4-1-.6-1 .3-1-.5-1 .6-1 .2-1-.2-1-.1-1 .8-1-1.2-1-1.4-1 2.2-1-1-1 1.1-1-1.2-1 .3-1 1.1-1 .5-1-.4-1 1.1-1-2.1-1 .7-1 .4-1 0-1-.2-1 1.5-1-1.5-1 .2-1-4.3-1 1-1 3.3-1-.9-1 1.1-1-.8-1-.5-1 1.7-1-.8-1 .7-1-1.4-1 .9-1-.6-1 0-1-.5-1 .9-1 1.1-1 .1-1-1.7-1 .3-1-.3-1 0-1 .5-1 .7-1 .8-1 0-1 0-1-2-1 0-1 .6-1-.3-1 .4-1 .4-1-1.2-1 .2-1-.2-1 .4-1-1-1 .1-1-1.4-1 2.2-1-1.7-1 1.3-1-.9-1 .4-1-.4-1-.7-1 .8-1 1.2-1 .1-1-1.5-1-.1-1 1.1-1 .4-1-1-1 1.5-1-.7-1 .7-1-.5-1 .5-1-1.2-1 2-1-1.6-1 1.5-1 .6-1 0-1 0-1 0-1 0-1 0-1 0-1-4.1-1 .1-1 2.2-1-.7-1 1.4-1-1.4-1 1.8-1-1-1 1.6-1-1.7-1 1.2-1-.5-1-1.5-1 1.7-1-2.3-1 .7-1-.8-1 1.5-1-.1-1-.4-1-.1-1-.9-1 .1-1 .2-1 .2-1 .4-1 .2-1 1-1-.3-1-1.6-1 2.4-1-.7-1-.3-1-.2-1-.4-1-.1-1-.2-1 .9-1-.5-1-.9-1 1.1-1-1.3-1 .9-1-.2-1 1.2-1-.8-1 .7-1-.2-1 .4-1-.2-1 .2-1 .7-1 .3-1 .3-1-.6-1 .6-1-.7-1 .7-1 0-1 0-1 0-1-1.3-1 0-1-.6-1 1.9-1 0-1 0-1-.1-1 .1-1 0-1-2.3-1-2.5-1 4.4-1-.5-1-1.5-1 1.7-1-.5-1-.7-1 .7-1 1-1-1.9-1-.7-1 .5-1-.7-1 .7-1 1.5-1-1.8-1 .5-1-.6-1-.8-1 1.5-1-.6-1 .3-1-1.6-1 .3-1 1-1 1.2-1-1.2-1-.5-1 .7-1-.8-1-.2-1 2.1-1-2-1 1.7-1-1.7-1 .1-1 .2-1 .4-1-1.6-1 1.7-1 1-1 .2-1-.7-1-1.1-1-.2-1 .5-1 .7-1 1.2-1-1-1 .7-1-.3-1 1.5-1-.5-1 .5-1 0-1-.3-1-.1-1-.2-1-.7-1 1.3-1-2.4-1 1.3-1 1.1-1-.7-1-1.3-1 .9-1 1-1-.8-1 .7-1-1.6z" fill="url(#g10)" stroke="#28506c" stroke-width="0.7" stroke-linejoin="round"/></g><g transform="translate(166.2,566.7)"><path d="M102,-8.9l1-1.7 1 0 1 .4 1-.4 1 0 1 .5 1-.5 1 .1 1-.1 1 0 1 .4 1 0 1 0 1-.4 1 .2 1 1.9 1-1.3 1-.8 1 .8 1 1.4 1 .5 1-.3 1-1.8 1-.4 1 2.4 1-1.7 1-.4 1 1.6 1-1.3 1 .8 1 1.1 1 .3 1-1.7 1 1.8 1 .6 1 .1 1-1.3 1-.1 1 .7 1-2.2 1 1.2 1 .4 1-.1 1-.4 1-.2 1 .3 1 1.5 1-1 1 .8 1 .4 1-1.1 1 .4 1 .3 1-2.8 1 1.8 1-.8 1 .5 1 .7 1-1.7 1 2.7 1-.4 1-.9 1-1.2 1 .3 1 0 1 .7 1 .4 1-2 1 4.1 1-4 1-.8 1 0 1 0 1 0 1 0 1 0 1 0 1 1.9 1-.4 1 .9 1 0 1 .1 1-2.5 1 1.1 1-.3 1 .9 1-.1 1-1.4 1 2.4 1-2.3 1 1.8 1-.8 1 .5 1 .3 1-.6 1 1.6 1-1.4 1 1.7 1-.7 1 0 1-.6 1-.1 1 .3 1-1 1 .4 1 1.4 1 .8 1-.3 1 .5 1-.5 1-1.2 1 .3 1-1.5 1 0 1 .1 1-.7 1-.6 1 1.2 1 .8 1-.5 1-.4 1 .2 1 .3 1-1.6 1 .7 1 .7 1 1.2 1-1.2 1-.7 1-.7 1 2 1 .2 1-1.3 1-.6 1 1.2 1-.6 1 1 1 .1 1 3.2 1 0 1-5.2 1 0 1 0 1 0 1 0 1 0 1 1.2 1 .3 1 .6 1-2.1 1 1.4 1-.8 1 .5 1-1.1 1 0 1 1 1-1 1 0 1 .8 1 1.4 1-.8 1 .4 1 .8 1 .2 1-1.2 1 .7 1-.1 1-.4 1 .6 1 .2 1-.2 1-.7 1 .5 1 1 1-.3 1-.8 1-.5 1 .2 1 0 1-.8 1 .2 1 1 1 .3 1 .2 1 .1 1-1.5 1 0 1 .5 1 1.6 1-1.5 1 .8 1 .2 1-1 1-1.4 1-.5 1 0 1 1.1 1-.8 1 1.3 1-.1 1-1 1 1.3 1-.9 1 1 1-.2 1 .3 1 .2 1-1.6 1 1.6 1 3.3 1-.6 1-4.9 1 0 1 0 1 0 1 0 1 .7 1 0 1 1.5 1-.4 1-1.8 1 2 1-.9 1 1.4 1-.5 1 .2 1-.2 1 .4 1-1.3 1 1.4 1-1.3 1 .3 1-.2 1 .9 1 1 1-.2 1-.6 1 .4 1-.6 1 .1 1-1.1 1 .1 1 .4 1 .2 1-.7 1 1.8 1-2.2 1 .9 1 .1 1-1.8 1 .2 1 .2 1 1.2 1 1 1-1.2 1 .7 1-1.5 1 .5 1 2.5 1-1.3 1-1.1 1 .3 1 .3 1-1.1 1-.7 1 1.4 1 .6 1 .9 1-.9 1-.8 1-1.2 1 .7 1 .7 1 .2 1 .3 1-1.3 1 1.8 1-1.7 1 0 1 1.2 1-.8 1 1.2 1-1 1 2 1-2.6 1 .5 1-.6 1-.3 1 .8 1-.5 1 .2 1 .6 1 .3 1-1.1 1 1 1-1.6 1 .3 1-.3 1 1.4 1-.5 1 .1 1 .6 1 .1 1 .4 1 .6 1-.2 1-.9 1 .5 1 .2 1 .9 1-.8 1 .1 1 .7 1-1.9 1 1.5 1 .1 1 .1 1-1.5 1 1.4 1 .2 1-1.1 1 1 1-.3 1-.3 1 .6 1-1.9 1 1.1 1-.2 1 .3 1 .3 1-.8 1 .6 1 .5 1-.6 1-.8 1 .5 1 .2 1-1.1 1 .2 1-.7 1 1 1 .3 1 .8 1 .1 1-.9 1 .1 1-.6 1 1.2 1-1.5 1 1.3 1 1.6 1 .4 1-4.4 1 .2 1 .9 1-1.1 1 1.8 1-.5 1 .1 1-.2 1-.4 1 1.4 1-2.2 1 0 1 0 1 0 1 0 1 0 1 .7 1-.7 1 .3 1-.3 1 .8 1-.4 1 1.2 1 .3 1-1.3 1 1.7 1 .1 1-2.1 1 1.7 1 .4 1-.4 1 1.6 1-2.2 1 .4 1 1.5 1-.1 1-.3 1-1.1 1-.1 1 .2 1 1.2 1-1 1 .6 1-.6 1-.2 1-.3 1-.5 1 .4 1 0 1 1 1-.7 1-.4 1 .2 1 .8 1-.8 1 .8 1-.5 1 1.2 1-.8 1 .7 1-.1 1-.6 1 .3 1-.2 1-1.3 1-.4 1 1.2 1 1.2 1 2.1 1-3 1-2.2 1 .3 1-.3 1 0 1 .2 1-.2 1 0 1 0 1 0 1 .5 1-.5 1 1.8 1 0 1-.7 1-.9 1-.1 1 .5 1 1.9 1-2 1 .9 1 .3 1-1.4 1 .2 1 1.5 1-.5 1 .5 1-.1 1 .7 1-.6 1 .3 1 1.3 1-.2 1-1.6 1 1.5 1-.9 1 .9 1-1.6 1 .2 1 .9 1 .3 1 1.1 1-.1 1-1.5 1 .1 1-.1 1 0 1 .9 1-1.1 1 1 1 1 1-.1 1-.1 1-1 1-.3 1 .2 1-1.7 1 .7 1 .9 1-.9 1 .4 1 .9 1-.9 1-.4 1 1.1 1-1 1-.7 1-.1 1 .1 1 3.9 1-1.2 1-4.2 1 .7 1-.1 1-.1 1-.5 1 0 1 0 1 0 1 0 1 0 1 0 1 0 1 .1 1-.1 1 0 1 1.2 1 .3 1-1.3 1 .8 1-1 1 .3 1 2.1 1-1.8 1-.6 1 .2 1 .9 1 1.3 1-.6 1 .2 1 1.1 1 .4 1 .5 1-.7 1-.4 1 1.2 1 .4 1-1.1 1-.4 1-1.6 1 1.8 1-.5 1 0 1 0 1-1.1 1-.6 1 .1 1 2 1 2.2 1-3.7 1-1.6 1 0 1 0 1 0 1 0 1 .1 1-.1 1 1.2 1 .7 1 .4 1-2.3 1 1.4 1-1.3 1 1.4 1 1.8 1-2.2 1 1.6 1-1.9 1-.5 1 1.1 1 1.3 1 .5 1-.7 1-.2 1-1.3 1 1.9 1-.6 1 .6 1-1.8 1 1.4 1 .7 1-1.2 1 0 1-.1 1-1.3 1 .9 1-1 1 .4 1 .9 1-.4 1 .7 1-1 1 0 1 1.8 1-.9 1-1 1-1 1 0 1 1.3 1-.4 1 1.9 1-1.8 1 2.8 1-1.6 1-.1 1-.9 1-.4 1-.2 1-.6 1 .6 1 2.5 1 .1 1-.9 1-.6 1-.6 1 .3 1 .2 1 .4 1 .8 1-.2 1-.7 1 1.4 1 .6 1-1.3 1-.5 1-.2 1 .9 1 .6 1-1.2 1 .9 1 .4 1-.6 1 1.3 1-.9 1 .2 1-1.3 1 1.8 1-1.8 1 .8 1 .2 1 1.4 1-2.8 1-1.8 1 .8 1-.8 1 .2 1-.2 1 .7 1-.7 1 2.3 1-.9 1-.7 1 .8 1-.7 1 1.7 1-.5 1 1.9 1-1.7 1 1.4 1-1.5 1 1.2 1-1 1 0 1 1 1-.7 1-1.8 1 .2 1 .3 1 1 1-1.2 1 1.1 1-.2 1 1 1-2 1 1.6 1-.9 1 .5 1 .6 1 .6 1-.7 1-1.2 1 1 1-1 1-1.5 1 1.1 1-1.1 1 1.7 1-.2 1 .3 1 1.2 1-.7 1-1.6 1 .2 1 1 1-.3 1 .3 1 .1 1-.6 1 .5 1-.9 1-.1 1 .3 1 .8 1-.3 1 1.7 1-.5 1 .9 1-.5 1-1.5 1-.5 1 3.8 1-1.1 1-3.1 1 .2 1 0 1 1.4 1-2.2 1 0 1 .1 1 1.5 1-.2 1-1.7 1 0 1 .5 1 .8 1 .1 1-1.1 1 1.8 1-.5 1 .7 1 .7 1-2.2 1 .2 1 .1 1 .8 1 .7 1 .6 1 0 1-.2 1 .1 1-.5 1 .3 1-.9 1-.7 1-.8 1 2.1 1-1.5 1-.2 1-.2 1 .4 1-.5 1-.6 1 2.1 1-2.1 1 .5 1-.4 1 1.3 1 .6 1 0 1-.3 1-.1 1 .3 1-1.2 1 .4 1 .5 1-.4 1 2 1-1.7 1 1.2 1 .2 1-.9 1 1.4 1 .3 1-1 1 1 1 .6 1-1 1-.6 1 .5 1 .7 1-.5 1 1.9 1-1.8 1-3.5 1 1.2 1-.7 1 1.1 1 .2 1 0 1-1.8 1 1 1-.8 1 .9 1 1.2 1 .5 1-.9 1 .2 1-.2 1-1 1 .4 1-1.3 1 1.4 1-.4 1 1 1-1.9 1 1.4 1-1.5 1 1.9 1-1.9 1 2 1-1 1-.2 1-.7 1 .1 1 .4 1 1.6 1 .6 1-.7 1 .8 1-.6 1 0 1-.7 1-1 1 1.9 1-.9 1 .4 1 1.2 1 .4 1-1.2 1 .3 1 3.2 1-3.8 1-1.8 1 .5 1-.8 1 1.3 1-.1 1-.4 1-.4 1-.4 1 .4 1 .5 1-.5 1-.1 1 .5 1-.8 1 0 1 0 1 0 1 0 1 1.4 1 .8 1-1.9 1-.3 1 2.1 1 0 1-.1 1-1.2 1 .8 1 .2 1-1.8 1 1.7 1-1.4 1 .7 1 1 1 .2 1 .3 1-.5 1-.7 1 1.7 1 .2 1-1.4 1 0 1 1.7 1-1 1 .3 1-.7 1 .4 1 .5 1-1.6 1 .6 1 .1 1 0 1 .6 1 1.3 1-.2 1-.1 1 .4 1-.2 1-1.4 1 .3 1 .1 1-1 1 1.9 1-.8 1-1.7 1 .1 1-.4 1 .5 1-.3 1 .2 1 1.5 1 .1 1-.5 1-1.4 1-.6 1 .1 1 .1 1 1.6 1-.4 1 .1 1 .7 1-.1 1-2.2 1 1.4 1-.1 1-.9 1.4 2.2 0 17-1.4-.8-1-.7-1 1.3-1 .2-1-.3-1-1.1-1 1-1 .1-1 .1-1 .4-1-1.6-1 .8-1 1.4-1 0-1-2.3-1 2.4-1-1.7-1 .2-1 1.5-1-.8-1-.3-1-.7-1-.2-1-.2-1-.5-1 2.2-1-.1-1-1.6-1 1.9-1-1.6-1-1.1-1 .1-1-.4-1 1.2-1-.9-1 1.4-1-.8-1 1.3-1-.9-1-1.2-1 1.3-1 .4-1-.4-1-1-1 1.1-1-.3-1 1.4-1-1.6-1 1.7-1-.2-1 0-1-.2-1 .2-1-.8-1 .4-1-.8-1 1.5-1-.9-1 1.7-1-.1-1-.8-1 .7-1-1.6-1 1.8-1 0-1-.4-1-.2-1-1.7-1 .9-1 1.4-1 0-1 0-1 0-1-.6-1 .6-1 0-1 0-1-.3-1 .3-1-1.1-1 .3-1 0-1 .8-1 0-1-.8-1-1.4-1-3.5-1 3.2-1 0-1-.2-1-1.3-1 .6-1 1.9-1 .3-1-1.3-1 2.1-1-1.5-1 .2-1-.2-1 1.2-1 .7-1-1.3-1-1-1 .4-1 1-1-.1-1 .7-1-2.1-1 1.8-1-.9-1-.2-1 1.4-1 0-1-1.1-1-.6-1 1.7-1-.1-1-.6-1-1.2-1 1.6-1 .6-1-1.4-1 .6-1-.5-1-.2-1 .9-1-1.2-1 .3-1 1.5-1 0-1 0-1 0-1 0-1 0-1-3.1-1-1.9-1 .8-1 1.4-1 0-1-.3-1 0-1-.2-1-.4-1 1.2-1-1.9-1 1.9-1-.1-1 .1-1-.1-1 .4-1 1.1-1-.5-1 0-1-.3-1-1.2-1-.1-1 1.5-1-.2-1-1.4-1 .5-1 0-1 0-1 .3-1 2.5-1-1.4-1 .6-1-.3-1-.3-1-.3-1 1.7-1-1.3-1 0-1-.1-1 .6-1-.7-1 .8-1-.1-1-.7-1-1.3-1 .1-1 1.3-1 0-1 .2-1-.8-1 .4-1 .4-1-.1-1-.4-1-.2-1 .8-1-1.8-1 1-1-1-1 1.9-1-.8-1 1.2-1 0-1-2.2-1 .7-1 1.4-1-1.7-1 1.6-1 .8-1 0-1 0-1-4.1-1-.4-1 3.2-1-.3-1-.5-1 .5-1 .2-1-1.5-1 .3-1-.1-1 2.3-1-.9-1-.4-1-.7-1 .5-1 .4-1-.2-1 1.7-1-1.4-1 .9-1 .1-1 .4-1-.7-1-.7-1-.3-1 .1-1-1-1-.9-1 1.7-1 0-1 1.3-1-1.5-1 .2-1 .2-1 .5-1 .9-1-1.6-1 1.2-1-.7-1-.6-1-.7-1 .2-1-.2-1 1.3-1-1.6-1-.5-1 1.2-1 .8-1 .1-1 .2-1 .2-1 .6-1-.2-1-.4-1 .9-1-1.2-1 1-1-1.7-1 0-1 1.4-1-1.1-1-1.3-1 2.5-1 .4-1-.2-1 .2-1-1.7-1 1.7-1 0-1 0-1-2.2-1-3.7-1 2.2-1 .8-1-.1-1-1-1 .3-1 1-1 .3-1-1.1-1 .6-1-.1-1-.6-1 1.1-1-.1-1 1.1-1-1.8-1 .7-1 1-1-1.6-1 1.2-1-1.6-1 1.1-1 .1-1-.4-1 1.3-1-.2-1-1-1 1.6-1 .4-1-.9-1 .1-1 .2-1-.2-1-.9-1 1.1-1-.8-1 .4-1-.4-1-.5-1 .9-1-1.4-1 .3-1-.6-1 .2-1 1.8-1-1.1-1 .3-1 .9-1 .8-1-.9-1-.7-1-.5-1-.3-1 1.6-1-1.7-1-.2-1-.2-1 1.2-1-.5-1 1.1-1-.9-1 .1-1 .3-1-.2-1-.8-1 .8-1-.9-1 1.3-1-.8-1 1.9-1-2.6-1 2.6-1-1.2-1 1.4-1-.5-1-.7-1-.5-1 1.2-1 1.1-1-1.8-1 .5-1-.1-1 1.4-1-.6-1 .6-1 0-1 0-1 0-1 0-1 0-1 0-1-1.2-1-3.4-1 1.5-1 1.5-1-.1-1-.1-1 0-1 .4-1-.9-1-.7-1-.5-1 1.3-1 .2-1-.1-1 .1-1 .3-1-1-1 1.1-1-1-1 .4-1-1.2-1-.6-1 1.2-1 1.6-1-.7-1 .2-1 1.2-1-1.7-1 .6-1 1-1-.4-1 1-1 0-1-1.5-1 1.5-1 0-1 0-1-1-1 1-1 0-1 0-1 0-1 0-1 0-1 0-1-.6-1-.3-1 0-1 .9-1-4.8-1 1.1-1 2.8-1-.3-1 .7-1 .5-1-.9-1-1.8-1 1.4-1-1.2-1 1-1-.3-1-1.5-1-.1-1 .4-1 1.4-1-1.1-1 .8-1 .3-1-1.8-1 .2-1 1.6-1-1.9-1 2.1-1-1.1-1-.1-1-.2-1-.9-1-.2-1 .4-1-.5-1 1.6-1-1.1-1-.2-1 .6-1 1.4-1 .2-1 .6-1-.7-1-1-1 1.4-1-1.6-1 1.3-1-.4-1-.6-1-.1-1 1.2-1 .2-1-.2-1 1.3-1-.8-1-.6-1 1.5-1-2.4-1 2-1 .4-1-1.6-1 1.6-1-.4-1 .4-1-.9-1 .9-1 0-1-.4-1 .4-1-.9-1 .3-1 .6-1 0-1 0-1-.3-1-4.2-1 2.6-1-1.6-1 2.1-1-.9-1-.1-1-1.6-1 1.4-1-.2-1 .3-1-.6-1-.1-1 .8-1-.1-1 .1-1-.6-1 .1-1 0-1-.6-1-.1-1-.5-1 .7-1-.9-1 1.7-1 .4-1-.4-1 .3-1 .6-1-1.2-1 2-1-2.1-1 .7-1 1.1-1-.5-1 .8-1 .2-1 .7-1 0-1-.7-1 0-1-.8-1-.1-1 .1-1 1.3-1 .2-1-.8-1 .2-1-.4-1 .7-1-.9-1-.6-1 1-1 .2-1-1.1-1 1.7-1-.8-1-.5-1-.7-1 .3-1-.6-1 1-1-.6-1 .8-1 1.1-1-.9-1 0-1-.4-1 .9-1 .3-1-4.4-1-.2-1 2.9-1 .1-1 .7-1-.1-1-1.7-1 .3-1 .1-1-1.1-1 .5-1 .6-1 1-1-.3-1 .1-1-.8-1 1.2-1 0-1-.7-1-.9-1-.3-1 .5-1 .5-1 .7-1-.5-1-.4-1-.7-1 .1-1-.6-1-.5-1 .2-1-.2-1 .8-1-.6-1 1.4-1-.3-1-.9-1-.2-1 1.6-1 .5-1-1-1 .6-1 .4-1-.5-1 .7-1 .6-1-.6-1-.3-1 .7-1-.7-1 1.2-1-2.1-1 2.1-1-.8-1-.3-1-.2-1 .5-1-.4-1 1.1-1 .7-1-.6-1-.4-1-.1-1-1-1 1.2-1 .3-1 .1-1-1.1-1 .5-1-.3-1-.1-1-.8-1 2-1-.6-1-.6-1 1.2-1-2.7-1 2.5-1 .2-1 .1-1-1.7-1 0-1 1.9-1 0-1 0-1 0-1-2-1 2-1-1.1-1 1.1-1-.4-1 .4-1-1.4-1-2.2-1 2.8-1 .8-1-1.9-1 .8-1-.7-1 1.2-1 .4-1-1-1-1.3-1 1.8-1-.3-1-.3-1 .7-1 .6-1-1.1-1-.2-1 1.3-1-.8-1 0-1-1.1-1-1-1 .9-1 .2-1-.1-1 1.3-1-1.4-1 0-1 .8-1 .3-1-1.3-1 .4-1 .6-1 .2-1-.3-1 0-1-1.6-1-.1-1 .8-1 .1-1 .9-1 .4-1 0-1 .5-1 0-1 .3-1 0-1 0-1-5.2-1-.1-1 3-1-.5-1 .9-1-1.4-1 1.9-1-2.4-1 1.7-1 .3-1 1.5-1-.6-1 .3-1-1.4-1 .9-1 .1-1 .8-1-2-1 1.2-1 0-1 .3-1-.4-1 .5-1-.4-1-.2-1-1-1 1.4-1-.4-1-.3-1 .7-1 .4-1-.4-1-.1-1-2.5-1 1.6-1-1.5-1 1.3-1 .5-1-1.2-1 1.9-1-.1-1-.7-1 .4-1-.1-1-.4-1-.2-1 .1-1 .6-1 .2-1-.8-1-.3-1 0-1 .8-1-.8-1-.7-1 2-1 .4-1 .3-1-.8-1-.1-1 .5-1-1.3-1 0-1 0-1 .8-1 1-1-.5-1 .5-1 0-1 0-1-.8-1-3.6-1-.3-1 3.9-1 .6-1-2.1-1 .6-1 .2-1 1.2-1 .3-1 0-1-.4-1-.5-1-.1-1-.2-1-1.2-1 1.6-1-.8-1-.4-1 .3-1-1.9-1 .1-1 1.2-1 .7-1-.4-1 0-1 .2-1-.6-1 .3-1-.8-1 .3-1-.1-1 .8-1-.5-1 1.4-1-.4-1-1.8-1 1.1-1-.5-1-1-1 .4-1 1.8-1-1.1-1 1.9-1 0-1-2-1-.3-1 1-1-.1-1-.3-1 1.5-1-.9-1-.3-1 .8-1-.9-1 1.7-1-1.5-1 1.1-1-.4-1 1.2-1 0-1-.2-1-.7-1 .9-1 0-1-.5-1 .5-1 0-1 0-1 0-1 0-1-.7-1-4.5-1 2.5-1 2.3-1-.7-1-.1-1-.1-1-1-1 .7-1 .5-1-2-1 1-1 .6-1-1.4-1 1.7-1-1.5-1 .6-1-.3-1 .7-1-1.7-1-.6-1 2.1-1-1.5-1 .6-1 1.1-1 .8-1-1.3-1-.6-1-.4-1-.4-1 .2-1 .2-1 .7-1 .6-1-.9-1 1.1-1 .4-1-1.2-1 .8-1-.4-1-.9-1 1.6-1 .2-1-.7-1 .9-1-.3-1 .7-1-2-1 1.4-1-.2-1-1.9-1 1.9-1-1.2-1 1.6-1-.2-1 .6-1-.8-1-.5-1 .1-1 1.2-1 .1-1-.4-1 .9-1 0-1 0-1 0-1 0-1-.9-1 .6-1-.4-1 .3z" fill="url(#g11)" stroke="#28506c" stroke-width="0.7" stroke-linejoin="round"/></g><g transform="translate(166.2,589.3)"><path d="M0,-.8l1-.1 1 0 1-.3 1 .2 1 .1 1 0 1-.1 1-.2 1 .1 1 .2 1 .1 1-.2 1-.3 1 .2 1 .1 1 .2 1-.1 1-.1 1 0 1 0 1 .1 1 0 1-.3 1 .4 1 0 1-.2 1 .1 1 .1 1-.2 1 0 1-.1 1-8.1 1-1 1 0 1 1.2 1-.8 1 2 1 0 1-1.8 1 .5 1 2.3 1-1.5 1 1 1 1.9 1-.6 1 0 1-.8 1 .8 1-1 1 .5 1 .4 1 .4 1 .6 1-.1 1 1.6 1 .8 1-.3 1 .3 1 .6 1-.1 1-.1 1 .1 1 .2 1-.6 1 .3 1-.1 1 .2 1-.1 1 .3 1 .1 1 .1 1 .3 1-.2 1 .3 1-.2 1 .1 1 .3 1-.3 1 .2 1-4.6 1-1.3 1 1.8 1-1.6 1 1.5 1-.3 1 .8 1 .1 1 .6 1 .6 1 .5 1 2.1 1-.1 1 0 1 0 1 .2 1 .1 1-.1 1-.2 1 .2 1-.1 1 .2 1-7.6 1-1.8 1 0 1 0 1 0 1 .9 1 .3 1-.5 1 1.8 1-2 1 .6 1 .9 1 .6 1 .4 1-.2 1 .6 1-.6 1 .1 1 .5 1 .9 1 0 1-.4 1 0 1 .4 1-.5 1 1 1-.2 1-.3 1-1.2 1 .2 1 .9 1 .8 1-.4 1 1.3 1 .4 1 .5 1 .3 1-.3 1 .6 1-.2 1-.5 1 .6 1 .1 1 0 1-.7 1 .7 1-.7 1 .9 1 0 1-.5 1 .4 1-.3 1 .8 1 .3 1 .1 1 .4 1 .2 1-.4 1 .2 1 .1 1 0 1-.1 1 .5 1 0 1-.1 1 0 1-.2 1 0 1-.1 1 .4 1-7.2 1-1.3 1-.5 1 1.8 1-2 1-.1 1 .2 1 .3 1 2 1-.8 1 .8 1-1.1 1 .6 1-.1 1 1.9 1-1.1 1 .5 1 .9 1 1.1 1 0 1-1.4 1 .4 1-.6 1 .8 1 .6 1-1.3 1 1.1 1 .2 1-.5 1 .2 1 1 1 .7 1-.3 1 .4 1-.4 1 .6 1-.4 1 .7 1-.3 1 .9 1-.6 1 .2 1 .6 1 0 1 .2 1-.5 1 .1 1 0 1 .1 1 0 1-.2 1 .3 1 .1 1 .4 1 .5 1-.3 1 .1 1 .1 1-.1 1 .2 1 0 1 .1 1-.3 1 .4 1-.3 1 .1 1 .3 1 .2 1-.2 1 .2 1-.5 1-8.8 1 1 1-1 1 .3 1-.3 1 2.7 1-.2 1-.2 1 .9 1-.6 1 .8 1-1.1 1 1.3 1-1.5 1 .3 1 2.4 1-.3 1 .7 1-1.4 1 .2 1 .1 1 .2 1-.1 1 .7 1-.6 1-.7 1-.9 1 1.4 1 .8 1 .2 1-.7 1 .9 1-.5 1 .2 1 1.1 1 .3 1-.2 1-.3 1 .8 1-.1 1 .9 1-.1 1 .3 1 .1 1 .1 1-.1 1-.3 1 0 1-.1 1-.5 1 .7 1-.7 1 .7 1 .3 1 .2 1 .3 1-.1 1 .1 1-.1 1 .5 1-.2 1 .1 1 .2 1 0 1-.1 1 .4 1-.1 1 0 1 0 1-.2 1 .1 1-7.9 1-1.1 1 0 1 .8 1-.3 1 .4 1-.9 1 1.9 1 .4 1 .7 1 1.1 1-1.1 1 1.3 1-.4 1-1 1-.9 1 1.9 1-1.8 1 1.5 1-.1 1 .3 1 .5 1 .6 1-.1 1 .6 1 1 1-.3 1 1.2 1-.1 1 .4 1-.2 1-.7 1 .4 1 .2 1 .2 1 .5 1 .3 1-.4 1 .5 1 .4 1-.4 1 .1 1 .2 1-.2 1 0 1 0 1 .2 1-.2 1-7.1 1-1.1 1 2 1-.3 1-1.4 1-.5 1 .7 1-.8 1 1.6 1-.5 1-.5 1 .3 1 .8 1 .5 1 1.4 1-1.3 1 .3 1 1.5 1-1 1 .8 1-.6 1 .9 1 0 1 1.3 1-1 1 1 1-.1 1 .4 1-1.1 1 .4 1 .4 1 .5 1-.3 1 .3 1-.2 1-.8 1 .3 1-.8 1 1.2 1 .2 1 .2 1 .1 1-.2 1 .7 1 .1 1 .2 1 .9 1 .1 1 .1 1 .1 1 0 1 .4 1-.3 1 .2 1 .2 1-.1 1-.1 1 .3 1 0 1 0 1-.3 1 .1 1-.6 1 .4 1-.5 1 .3 1 .1 1 .1 1 .2 1 .1 1 .1 1 .1 1-.1 1 .3 1-.1 1 0 1 .1 1-.4 1 .4 1 .1 1-.1 1-.1 1 0 1 0 1-.1 1 .1 1 0 1 0 1 .1 1 .2 1-.3 1-.1 1-4.2 1-4.7 1 0 1 0 1 0 1 0 1 0 1 .5 1 .6 1 1.6 1 .4 1-.4 1 .2 1 .2 1-.2 1 .4 1 .8 1 .2 1 0 1-.7 1 .8 1-.7 1 .4 1 1.4 1-1.4 1 1.5 1-.5 1 .2 1-1 1 .5 1 .5 1 .1 1 .6 1-.5 1 .7 1 .2 1 0 1 .8 1-.2 1 .1 1-.5 1 .3 1 .3 1 .6 1-.6 1 .1 1 .1 1 .3 1 .2 1 0 1 .1 1-.1 1 .6 1 .2 1-.2 1 .1 1 .4 1-.3 1 0 1 .1 1 .1 1 .2 1-.4 1 .2 1 .1 1-.1 1-.1 1-.1 1 .1 1 0 1-8.8 1 0 1 .6 1-.3 1 .7 1 .1 1 .4 1-.1 1-1.2 1 1.8 1-.6 1 .8 1 .1 1 1.8 1 .1 1 .2 1-1.2 1 1.3 1-.1 1 .1 1-.1 1-.8 1 .1 1 .4 1 .3 1-.7 1 .6 1 .9 1 .1 1-1.3 1 .8 1 .1 1 .4 1 .2 1 .5 1 .1 1 .4 1 .3 1 .3 1 .1 1 .4 1 .4 1 .1 1-.2 1-.1 1 .2 1 0 1-.4 1 .2 1 .2 1-.3 1 .1 1 .5 1 0 1 .4 1 0 1 .3 1-.2 1 0 1-.1 1 .2 1 .1 1 .2 1-.2 1 0 1 .1 1-.2 1 .2 1-.2 1 0 1-4.4 1-4.5 1 0 1 1.7 1-1.7 1 .9 1 1.3 1-.4 1 1.5 1 .1 1-1.7 1 2 1-.5 1 .6 1 1.3 1-.3 1-.9 1-1.2 1 1.5 1-1.7 1 1.5 1 .2 1 0 1-.4 1 1.2 1 .1 1 0 1 1.1 1 .2 1 .6 1-.3 1 .5 1-.3 1 .6 1-.4 1 .8 1 .1 1 0 1-.1 1 .3 1 .4 1 .2 1 0 1 .1 1-.3 1 .3 1 0 1-.1 1 .2 1-7.5 1-1.5 1 0 1 0 1 1.1 1 1 1-.4 1-.3 1-1.4 1 0 1 .9 1 .9 1 .6 1-.5 1 2.4 1-1.9 1 1 1-.6 1 .7 1 .1 1 .5 1-1.1 1 .2 1 1.5 1-.5 1 .2 1 .2 1 1.1 1-.4 1 .8 1-1 1 .6 1 .5 1 .2 1-.4 1-.2 1-1 1 .4 1-.1 1 .7 1-.8 1 .9 1 .4 1 .3 1-.1 1 .6 1 .1 1 .6 1-.5 1 .6 1-.2 1 .5 1 0 1-.5 1 .5 1 0 1 .2 1 .1 1 .1 1-.3 1 .1 1 0 1-.2 1-.3 1 .5 1 0 1-.3 1 .4 1-.1 1 .2 1 .4 1 .1 1-.1 1 0 1 0 1-.1 1 0 1 0 1-.2 1 .4 1-.2 1 .2 1-.2 1 0 1 .2 1-.1 1-.1 1 .2 1-.2 1 .1 1 .1 1 0 1-5.6 1-3.5 1 0 1 0 1 .5 1 .5 1 1.5 1-1.2 1-1.3 1 1.3 1 .4 1 0 1 1.1 1-1.2 1 1.1 1 .7 1-.6 1 0 1 .9 1-.5 1 1.2 1-1.5 1 0 1 .8 1 .3 1-.2 1-1.1 1 .9 1-1.4 1 .3 1 1.8 1-.8 1-.3 1 1 1-.2 1 1.2 1 1 1-.4 1-.3 1 1.2 1-.1 1-.3 1 .2 1 .5 1 .3 1-.8 1 .2 1 0 1 .1 1 0 1-.6 1 .8 1 .4 1 .1 1 .6 1 .3 1 .2 1-.4 1-.1 1 .1 1 .5 1 .1 1-.1 1-.2 1 0 1 .3 1 0 1-.3 1 0 1 .3 1-4.8 1-4 1 .4 1-.4 1 0 1 .7 1 1.7 1-.8 1 1.8 1-.3 1-1 1-.4 1 .5 1 1.4 1 1 1 .3 1-.4 1 .4 1 .1 1-.3 1-.8 1 1.8 1 0 1-1.2 1 .5 1 .5 1-.7 1-.3 1 0 1-.3 1 0 1 .5 1-.2 1 .7 1 .4 1 .7 1 .3 1 .6 1 .2 1-.3 1 .5 1-.1 1 .5 1-.1 1-.2 1-.2 1 .3 1-.3 1 .4 1-.1 1 0 1 .5 1 .1 1-.1 1 .6 1-.3 1 .4 1-.1 1 .1 1-.1 1 .4 1 .1 1 0 1-.3 1 0 1 0 1 0 1 0 1-.2 1 0 1 0 1-7 1-1.4 1-.5 1 .9 1-.3 1 1.8 1-.2 1 .1 1 .8 1 1 1-1 1 .2 1 .2 1 .1 1 1.1 1-1.1 1 1.5 1-1.2 1-.3 1 .4 1 .7 1 .9 1 0 1 .2 1 .5 1-.1 1-.2 1 1.1 1 .2 1 .7 1-.3 1 .1 1-.6 1 .5 1-.3 1 .3 1-.2 1 .1 1 .2 1 .4 1 .5 1-.1 1-.4 1 .4 1-.3 1 .2 1 .2 1 .1 1 .1 1-7 1-1.9 1 1.6 1 .5 1-1.1 1 .3 1 1.4 1 .1 1-.4 1 .1 1-.3 1 0 1 1.5 1-1.1 1 0 1 .6 1-.1 1 1.5 1 .3 1-1.4 1 .3 1 .9 1 0 1 .6 1 .3 1-.8 1-.3 1 1.1 1-1.3 1 .9 1 .1 1-.2 1 .8 1-.1 1-.8 1 .2 1-1.3 1 .9 1 .1 1 .5 1 .4 1-.9 1 .8 1 .7 1-.1 1 .4 1 .6 1 .1 1 .4 1-.5 1 .4 1-.4 1 .5 1-.1 1-.1 1 .2 1-.1 1 .4 1-.1 1 .2 1-.3 1-.3 1 .1 1 0 1-.2 1 .8 1-.3 1-.2 1 .7 1 .1 1 .3 1 0 1 .1 1-.1 1 0 1 .3 1-.2 1-.2 1 0 1 .1 1 0 1 .1 1 0 1 0 1 .1 1-.2 1.4 .3 0 2.5-1.4 .2-1-.2-1 .1-1 0-1-.2-1 .2-1-.1-1-.1-1 0-1 .1-1-.1-1 .2-1 .2-1 0-1 0-1 .1-1 .1-1 0-1 .6-1-.2-1 .9-1-.6-1 .2-1-.1-1-.2-1-.2-1 .5-1-.2-1 0-1-.1-1-.1-1-.1-1 .8-1-.2-1-.1-1 .5-1-.8-1 .4-1 .5-1 .2-1 .2-1 .2-1-.3-1 1-1 0-1 .5-1 .3-1 .2-1-.4-1 0-1-.3-1 .4-1-.1-1-.8-1 .2-1 .2-1 .2-1 .7-1-.4-1 .8-1-.7-1 1.7-1-1-1 1.1-1-1.4-1 .4-1-1.2-1 1.9-1 .1-1-.5-1 1.7-1-.1-1-.3-1-.7-1 2.5-1 .5-1-1.1-1 1.4-1 0-1 0-1-1.7-1 1.2-1-.1-1 .2-1 .4-1-.4-1-8-1 0-1-.1-1 .2-1-.2-1 .3-1 .2-1-.2-1 0-1-.3-1 .2-1 .4-1 0-1 .5-1 .6-1-.4-1 .1-1-.2-1-.2-1 .1-1 .3-1 .1-1-.3-1 .5-1 1.1-1 .8-1 .2-1-.8-1 .5-1 1.2-1-1.5-1 1.3-1-.9-1 .1-1-.3-1 1.4-1-.4-1 .7-1 1.1-1 .8-1-1.2-1 1-1 .1-1 1.6-1-.2-1-1.9-1 2.1-1 0-1-1.9-1-7.1-1-.2-1 .2-1 0-1-.1-1 .2-1 0-1-.3-1 .3-1-.3-1 .4-1-.1-1-.2-1 .2-1-.3-1 .5-1 .4-1 0-1 .1-1 .5-1-.3-1 .7-1 .2-1-.8-1-.2-1-.2-1 .1-1 .2-1 .5-1-.2-1 .3-1 0-1 .8-1 .7-1 0-1 .2-1 .1-1 .5-1 .8-1-.9-1-.1-1 .1-1-.4-1 .9-1-.6-1 .1-1 .3-1 1-1-.9-1 1.2-1-.9-1-.1-1 .6-1-.3-1 1.5-1-1.5-1 1.3-1 1.3-1 .1-1-.3-1 .3-1-1.2-1 1-1 1.8-1 0-1-1.5-1 .5-1 1-1-.7-1 .7-1-3.9-1-5.1-1 .1-1 .1-1 0-1 0-1 .3-1-.4-1 .5-1 0-1-.1-1 0-1 .5-1-.1-1-.1-1 .4-1-.1-1 .3-1-.3-1 1.2-1-.5-1 .6-1 .1-1-.2-1-.3-1-.2-1 .2-1 .5-1-.6-1 1.1-1-.1-1-.1-1-.5-1 0-1 .1-1 .7-1 .3-1 1.3-1 0-1 .6-1 .9-1-.5-1-.2-1 .7-1-.2-1-1.3-1-.4-1 .9-1 0-1 .5-1-.1-1 .5-1-.6-1-.2-1 .8-1 1.6-1-1.1-1-.1-1-.9-1 2-1-.8-1 .5-1 .5-1 1.2-1-.3-1 .3-1 0-1 0-1 0-1-1.4-1-2-1-5.5-1-.4-1 .2-1-.1-1 .1-1 0-1 .3-1 0-1-.1-1-.3-1 .3-1 .1-1-.1-1-.2-1 0-1 0-1-.1-1 0-1 .2-1 .1-1-.2-1 .2-1 0-1 .3-1 .3-1 .2-1 0-1 .3-1-.3-1-.4-1 .2-1-.2-1 .4-1-.3-1 .2-1-.1-1 .6-1 .1-1-.1-1-.3-1 .6-1 0-1-.1-1-.2-1 .3-1 .7-1-.2-1 0-1 .2-1 .8-1 .4-1-.1-1 .6-1 0-1-1.3-1 .2-1 .2-1-.1-1 1.1-1-1.1-1 .9-1-.2-1 .8-1-.3-1-.3-1 0-1 .5-1 .2-1 .1-1 .1-1 .2-1-.8-1 1.3-1 0-1-.8-1 .2-1 1.4-1-1.5-1 1.9-1 .8-1-1.1-1 1.8-1-1.4-1 .3-1 1.4-1 .5-1-.4-1 .4-1-1.5-1 1.5-1 0-1-2.4-1-6.3-1-.1-1-.1-1 0-1 0-1 0-1-.1-1-.1-1 .6-1 0-1 .2-1-.1-1 .9-1 .6-1 0-1-.1-1-.1-1 .2-1-.7-1 .4-1 0-1 .3-1 .5-1 .1-1 .1-1 1.7-1 .5-1 .5-1 .2-1-.2-1 .3-1-1.5-1 0-1 .2-1-.8-1 .1-1 2.1-1 1.1-1 .3-1 .7-1-.9-1 1.1-1 .4-1-1.1-1 1.5-1 0-1 0-1 0-1-4.4-1-4.5-1-.3-1 .2-1 .3-1 0-1-.4-1 .2-1 .2-1-.2-1 .1-1-.2-1 .3-1 .1-1-.1-1 .1-1 0-1 .2-1 .1-1 0-1 .3-1 .2-1 .1-1 .3-1-.7-1 .1-1-.1-1-.4-1 0-1 .8-1 .1-1 .1-1-.3-1 .7-1 .2-1 .1-1 .6-1-.2-1 .8-1 .1-1 1.9-1-1.3-1 .9-1 .1-1-.8-1 .8-1-.9-1-.4-1 .9-1-.7-1-.1-1 .3-1 .5-1 1.2-1-.5-1 .2-1-1.1-1 2-1-1.6-1 .3-1 1.7-1-.7-1 2.2-1 .5-1-1-1 1.1-1-1-1-.4-1-.7-1 2.1-1-1.1-1-7.9-1 .2-1-.3-1 .3-1-.2-1 .1-1-.3-1 .2-1-.2-1 .4-1-.3-1 .2-1 .2-1-.4-1 .2-1 .3-1-.2-1 .1-1 .7-1-.2-1 .4-1 .2-1 .1-1-.3-1 .4-1-.5-1 0-1 .3-1 0-1 .3-1-.5-1 .4-1 .5-1-.2-1 .5-1 .5-1 .8-1-.6-1 1.2-1 1.5-1-.3-1 .5-1-1.3-1-.3-1-.6-1 1.5-1-.2-1 0-1-.1-1 .1-1-.1-1-.1-1 .4-1 .4-1 .3-1 0-1-.4-1 1-1-1.5-1 2.1-1 .9-1 .1-1-.3-1 .6-1-2-1 2.5-1 0-1 0-1 0-1-4.6-1-4.3-1-.1-1 .1-1 0-1-.1-1-.1-1 0-1 .1-1 0-1 .1-1 .1-1 0-1-.1-1 .1-1 .2-1-.3-1 .3-1-.1-1-.3-1 0-1 0-1 0-1 .5-1-.2-1 .5-1 .2-1-.3-1 .6-1-.3-1-.1-1-.5-1 .2-1-.3-1 .1-1-.1-1-.1-1 .1-1 .2-1 .1-1 .2-1-.3-1-.1-1 .4-1 .2-1 .3-1 .4-1-.4-1 .3-1 .6-1 .9-1-.4-1 .9-1-.1-1 .5-1 .4-1-.3-1-1.1-1-.2-1 .3-1-.8-1 .6-1-.3-1 0-1 1-1 .6-1 .9-1-.4-1 .2-1-.3-1-1-1 .2-1-.3-1 .9-1 .8-1 1-1-.6-1 .1-1-.3-1-.7-1-.1-1 2.1-1-.2-1 1.5-1 .9-1 .1-1 0-1-1-1 1-1 0-1 0-1 0-1-1-1-7.6-1-.2-1 .1-1-.2-1-.1-1 .4-1-.4-1 .1-1 .6-1 .2-1-.3-1 .7-1-.1-1 .7-1-.4-1 .8-1-.5-1 .3-1 0-1-.4-1 .4-1 0-1 .9-1 0-1 .4-1 .9-1 .5-1 1.7-1-1.8-1 1-1 .4-1 .8-1-1.5-1 1.6-1-1.1-1 .5-1 .6-1-.6-1 .1-1 .6-1-.1-1 1-1 .1-1-.2-1 1.1-1-.8-1 .8-1-.4-1-8.8-1 .1-1 0-1 0-1 0-1 .2-1-.1-1 .1-1 0-1 .1-1 .1-1-.1-1 0-1 0-1 .4-1 .2-1 0-1 .1-1 .4-1 .4-1-.7-1 .8-1 0-1 .2-1-.1-1-.5-1 .3-1 .1-1 .5-1-.3-1 .4-1 0-1 0-1 .4-1-.1-1 .1-1 .3-1 1.2-1-1.1-1 1-1 .2-1 .2-1-.2-1 1.1-1-.2-1-.5-1 .4-1 .1-1-.6-1-.4-1 .1-1 .7-1 .2-1 1-1-.7-1 .3-1-.1-1-.3-1 .4-1-.7-1 1.2-1 .9-1-.6-1-.4-1 1.1-1 .3-1 1.3-1-1.5-1 1.5-1 0-1-1.2-1-7.9-1 .4-1-.2-1-.1-1 .4-1-.1-1 .1-1-.3-1-.1-1 .2-1 .1-1-.2-1 .2-1-.1-1-.3-1 .2-1 .2-1 .3-1-.2-1 .2-1 0-1 .5-1 0-1 0-1-.4-1 .5-1-.1-1-.1-1 .3-1 .1-1 .3-1 .6-1 0-1 .2-1-.5-1 .3-1 .2-1 .5-1 .3-1 .5-1-.5-1 .6-1 .2-1 1.1-1 .8-1-.9-1-.6-1-.2-1-.1-1 0-1 0-1-.4-1 .1-1 .6-1 .7-1 .2-1 .8-1-1.1-1 .3-1 1.2-1 1.4-1-.3-1-.3-1 1.6-1 0-1-1-1 .7-1-1.7-1 1.6-1 .4-1-2.3-1-6.8-1 .4-1-.3-1 .1-1-.1-1-.2-1 .3-1-.1-1-.1-1 .4-1-.2-1 .1-1 .2-1-.5-1 .5-1-.2-1 .5-1-.2-1 .6-1-.3-1 .3-1 .2-1 .3-1 .2-1 .1-1-.1-1 .1-1-.5-1 .6-1-.7-1 .5-1 .7-1 0-1-.5-1 .2-1 .8-1 .9-1 .3-1-.8-1-.3-1 1.3-1-.4-1 2.1-1-.8-1 0-1-.8-1-.1-1-.6-1-.6-1 .3-1 .9-1 .3-1-.4-1 2-1 .1-1-.5-1 .3-1 .8-1-1.1-1 1.9-1-.7-1 .5-1 0-1 .4-1-.4-1 1.4-1 0-1-.1-1 .1-1-1.5-1-8.1-1 .3-1-.1-1 .1-1 0-1-.1-1 .4-1-.5-1 0-1-.2-1 .2-1 1.9-1 1.1-1 .4-1 .6-1 .4-1 .1-1-.2-1 .9-1-.3-1 1.5-1-.9-1-4.7-1-.3-1 .1-1 0-1 .1-1 .2-1-.5-1 .2-1 .3-1 .1-1 .2-1-.1-1 .2-1-.3-1 .6-1-.4-1 .2-1 .2-1 .2-1 .1-1-.2-1 .5-1 .3-1 .1-1 .7-1 .2-1 .8-1-.1-1 .6-1 .2-1 .5-1-1.5-1-.2-1 .1-1 .6-1 0-1 .2-1 1.7-1-.1-1-.2-1 1.3-1-.9-1 1.6-1 1.4-1-.4-1 .4-1 0-1-1.6-1-7.7-1 0-1 .2-1-.2-1 0-1-.3-1 .2-1 0-1 0-1 .2-1-.2-1-.2-1 .3-1-.3-1 .3-1-.2-1 .1-1 0-1 0-1 0-1 .1-1 0-1 .2-1-.1-1-.1-1 .1-1-.4-1 .2-1 0-1 0-1-.1-1 0z" fill="url(#g20)" stroke="#4a3c9c" stroke-width="0.6" stroke-linejoin="round"/></g><g transform="translate(166.2,610.5)"><path d="M0,-1l1 .1 1 0 1-.2 1 .3 1-.1 1-.2 1 .1 1 .1 1-.1 1 0 1 .2 1-.2 1-.1 1 .3 1-.1 1 .1 1 0 1-.1 1 0 1 0 1-.1 1 .1 1 0 1-.1 1 0 1 .1 1 0 1-.1 1-.2 1 .3 1-.1 1-8.3 1-1.1 1 1.2 1-.1 1 1.4 1-2.5 1 .5 1 1.2 1 1 1-.1 1 .7 1-.1 1 1.3 1-.8 1 .6 1 1.1 1-.3 1 0 1-.1 1 0 1 .2 1-.6 1 .7 1 .9 1 .8 1 .1 1 .7 1-.1 1 .7 1 0 1-.6 1 .5 1 .1 1-.5 1-.2 1 .6 1 0 1 .3 1 .2 1-.2 1 .1 1 .2 1 .2 1-.4 1 .3 1-.1 1 .1 1 .1 1-5.2 1-.7 1 1 1-1 1 0 1 .6 1 1.2 1 .5 1 .7 1 0 1 1.6 1 1.7 1-.2 1 .3 1 0 1-.3 1 .3 1-.2 1 0 1 0 1 0 1 .2 1-9.6 1 0 1 0 1 0 1 1.7 1 0 1-.1 1-.2 1 1.3 1-1.9 1 2.2 1 1 1-.3 1-.1 1 .1 1-.4 1-.1 1-.8 1 1.2 1 .6 1 .8 1-.6 1 .3 1-.6 1 1.5 1-.7 1-.7 1 .3 1 0 1-.5 1 1.6 1-.6 1 .2 1 1.2 1 .4 1 .3 1-.8 1 .5 1 .8 1-.8 1 .3 1 .5 1-.6 1 .6 1-.5 1 .6 1-.4 1 .3 1-.3 1-.2 1 0 1 .5 1 .5 1 0 1 .1 1 .3 1 .2 1 .1 1 .2 1 0 1 .1 1 0 1 0 1-.1 1 .1 1-.1 1 .1 1 0 1-.2 1 .2 1-6.5 1-2.6 1 0 1 0 1 0 1 1.1 1-1.1 1 2.1 1 .2 1-1.3 1 .9 1 .7 1 1.7 1-.1 1-.5 1 .5 1-1 1 1.4 1-.1 1-.1 1 .1 1 .5 1-1.5 1 .6 1 .8 1-.4 1-.1 1-.5 1 .1 1-.2 1 1.3 1 .5 1-.2 1 .1 1 .8 1 .3 1-.1 1 .5 1 .1 1 .4 1-.5 1 .3 1-.1 1 .4 1 .2 1 .3 1-.3 1-.4 1 .6 1-.5 1 .3 1 0 1 .3 1 .6 1-.3 1 .5 1-.3 1 .4 1-.3 1 .2 1 .1 1-.2 1 .2 1-.1 1 .1 1-.2 1 0 1 .2 1-.1 1-.1 1 .3 1-9 1 1.2 1-.8 1 .5 1-.9 1 2.4 1-1.2 1 1.1 1-.7 1 0 1 .2 1 0 1 .4 1 1.9 1-1.5 1 1.3 1-.5 1 .5 1 .2 1-.7 1 .8 1 .4 1-1 1 1.8 1 .2 1-1.5 1 1.1 1-.8 1-.1 1-1 1 .6 1 .6 1-.1 1 .5 1 .8 1-.1 1 .7 1 0 1 .5 1 .2 1-.5 1-.3 1 0 1 1.1 1 .1 1-.6 1 .3 1-.3 1-.1 1 .5 1 .5 1-.4 1 .5 1 .5 1-.1 1 .2 1-.1 1 0 1 .3 1 0 1-.1 1 0 1 .2 1 .1 1 .1 1 .2 1 0 1 0 1 0 1 0 1 0 1-6.3 1-1.3 1-.7 1-.3 1-.2 1 .6 1 .4 1-1.4 1 1.6 1 .2 1-.3 1-.3 1 2.3 1 .2 1-1 1-.1 1 1.4 1-.9 1 .9 1 .6 1-1 1 1.8 1-.6 1 1.4 1 .6 1-.5 1 .5 1-.6 1 .7 1 0 1 .1 1 .4 1-.3 1-.1 1 .9 1-.1 1 .2 1 .3 1 .4 1-.3 1 0 1 .1 1-.1 1 .2 1 .3 1-.2 1-.2 1 .2 1-8.7 1 1 1-1 1 1.2 1-.3 1-.6 1 .8 1 .4 1 1.1 1-.1 1-.3 1 .7 1-2.2 1 2.5 1-1.1 1 .8 1 .6 1-.4 1 1 1 .4 1 .3 1 .1 1 .2 1-.6 1-.4 1 1.3 1-.4 1-.2 1 .2 1 .4 1-.1 1-.3 1 .4 1-.4 1-.1 1-.1 1-.1 1-.2 1 .8 1-.1 1 0 1 .5 1 .7 1 .2 1 .2 1 .8 1 .1 1 .4 1-.1 1 .2 1 .3 1-.2 1 .2 1 .3 1-.1 1-.3 1 .2 1-.1 1-.1 1 0 1 .1 1 .1 1 0 1-.5 1 .2 1-.2 1 .2 1 .1 1 .2 1 .5 1-.2 1-.1 1 0 1 0 1 0 1 .1 1-.2 1 .2 1-.1 1-.2 1 .6 1-.1 1-.2 1-.1 1 0 1 0 1 .2 1 0 1 0 1 .1 1 .1 1-.2 1-4.7 1-4.3 1 0 1 2.2 1 .1 1 .4 1 0 1-.9 1 1.2 1-1.4 1 .3 1 1.5 1 .2 1 1.3 1-1.1 1-.3 1 .1 1 .4 1 1.5 1-1.5 1 1.5 1-.4 1 .6 1-.9 1-1.1 1 .6 1-.6 1 .4 1 1 1-1.3 1 .6 1 .5 1-.6 1 1.5 1-.3 1 .7 1 .3 1 0 1 .1 1 .2 1 .5 1-.1 1 .7 1-.4 1-.5 1 .3 1-.2 1 .3 1 .2 1 .1 1 .3 1-.3 1 .8 1-.1 1 .2 1 .2 1 0 1 .4 1 0 1-.1 1 .1 1-.1 1-.3 1 .2 1-.2 1 .1 1 .1 1 .2 1-.3 1 .2 1-7.4 1-1.7 1 1.1 1-1 1 .2 1 1 1 0 1 1.3 1-.5 1 .5 1 .5 1 .4 1-.5 1 .7 1 .2 1-.7 1 .6 1-.4 1 .8 1 .7 1 .5 1-1.2 1 .8 1-.5 1-.5 1-.2 1 .9 1-1.2 1-.3 1 .9 1 1.1 1 .6 1-.3 1 .8 1-.2 1 .7 1 .1 1 .7 1 .1 1-.1 1 .5 1 .1 1-.4 1 .5 1-.4 1-.1 1 .1 1 .1 1 0 1-.3 1 .3 1 .3 1-.1 1 .2 1 .2 1 .3 1 0 1-.1 1 0 1 .1 1 0 1 .2 1-.2 1 0 1 .2 1-.2 1 .1 1 0 1 0 1-.1 1-5.4 1-3.5 1 0 1 0 1 1.6 1 0 1 .1 1-.1 1 1.2 1 .6 1 .5 1-1.6 1 .1 1 2 1-1 1 .5 1-.5 1 .1 1 .9 1-1.6 1 1.2 1-.2 1-.6 1 1.3 1 .4 1 .9 1 .4 1 .1 1-.2 1 1.2 1 0 1-.1 1 .2 1-.6 1 .5 1-.4 1 .4 1 .2 1 .8 1 .1 1 0 1 .3 1 .3 1 .1 1-.1 1-.2 1 .1 1 .1 1 .3 1-6.2 1-3.1 1 0 1 0 1 0 1 .9 1 .7 1-1.6 1 2.8 1-.5 1-.4 1 .4 1 1.9 1-1.9 1-.3 1-.7 1 .9 1 1.4 1 0 1 .2 1 .2 1-.4 1 .5 1 .4 1 1.3 1-.6 1-.6 1-.3 1 .4 1 1.5 1-.8 1-.2 1 .4 1 .2 1-.8 1-.6 1-.1 1 1.1 1-.4 1 .1 1 .9 1-.1 1 0 1 .3 1 1 1 .4 1-.1 1 .1 1 .1 1-.4 1 .5 1 .1 1-.4 1 .5 1 .2 1-.1 1 0 1 .5 1-.3 1 .2 1-.2 1 .1 1 0 1-.5 1 .2 1 0 1 .1 1 .3 1 0 1 .3 1 .2 1 .1 1-.1 1 .2 1 0 1 0 1-.2 1 .3 1 0 1-.2 1-.1 1-.3 1 .3 1 .1 1 .2 1 .1 1-.1 1 0 1-.1 1-.4 1 .3 1 0 1-5.6 1-3.5 1 0 1 0 1 0 1 0 1 .4 1 1.5 1-.1 1 .4 1 .4 1-.8 1 0 1-.1 1-.5 1 1.6 1 .2 1 1 1-.6 1 .5 1-.8 1 1.1 1 0 1 0 1-.3 1-.6 1-.2 1 .8 1-1.9 1 1.2 1 1.3 1 .4 1-.6 1 .4 1 1 1-.1 1 .2 1 .1 1-.4 1 .1 1 .7 1 .6 1 .2 1 .2 1-.7 1 .2 1 .3 1-.5 1-.2 1 .8 1 .2 1-.1 1 .2 1 .3 1 .4 1 .1 1-.2 1 .3 1-.1 1 .2 1 .1 1 .3 1-.4 1 .1 1 .1 1-.1 1 .1 1 .1 1 .2 1-.1 1-4.6 1-3 1-1.3 1 0 1 0 1 1.5 1-.8 1 1.7 1 0 1 .8 1-.4 1 1.3 1-.8 1-.2 1-.5 1 .3 1 1.4 1-.5 1 0 1 0 1 .2 1 .9 1 .2 1-.9 1 0 1 .3 1 .5 1-1 1-.2 1 0 1 .3 1 .7 1 .8 1 .4 1-.1 1 .4 1 1 1-.4 1 .3 1 .1 1 .2 1 .1 1 .4 1 .3 1-.6 1 .1 1-.1 1-.2 1-.1 1 .3 1 .4 1-.1 1 0 1 .4 1 .5 1-.1 1 0 1 .2 1-.2 1 .1 1-.1 1 .1 1-.1 1 .1 1 .2 1 0 1-.1 1-.1 1 .1 1 0 1-.2 1-7.1 1-1.7 1 .6 1-.6 1 1.6 1-.1 1 .3 1 1 1 .6 1-1.8 1 1.7 1-.9 1 .6 1 1.3 1-.7 1-.9 1 .9 1-.3 1 .1 1 1 1 .3 1-.3 1 1.6 1 .8 1-.8 1 .9 1-.2 1 .9 1 .1 1-.1 1 0 1 0 1-.4 1 0 1 .3 1-.2 1 .4 1 .1 1 .4 1-.1 1 0 1 .4 1 0 1 0 1-.1 1 .1 1 .2 1 0 1 .1 1-7.2 1-.7 1 .3 1 0 1-.6 1-.6 1 .3 1 1.7 1 1.3 1-.2 1-.3 1 .7 1-1.4 1 .9 1-.5 1 .1 1 1.8 1 .2 1-.8 1 1.4 1-1.4 1-.3 1 .5 1-.4 1 1.6 1 0 1-.2 1-.3 1 .1 1 .4 1 .6 1-.1 1-.8 1 .7 1-1.3 1 .9 1-.9 1 .2 1 .3 1-.3 1-.1 1 1 1 .3 1 .2 1 1 1-.3 1 .2 1 .6 1-.3 1 .9 1-.6 1 0 1-.1 1 0 1 .7 1-.1 1 .2 1-.2 1-.3 1 .4 1-.4 1 .5 1-.4 1 0 1 .2 1-.6 1 .5 1 .1 1 .5 1 .2 1 .2 1 .1 1 .1 1 0 1 .1 1-.3 1 .2 1 0 1 .1 1-.1 1-.2 1 .2 1 0 1 0 1 0 1 0 1.4 0 0 2.8-1.4-.3-1 .3-1-.1-1-.2-1 0-1 .3-1-.2-1 .1-1 0-1-.1-1 .3-1 0-1-.3-1-.1-1 .2-1 .2-1 0-1 .2-1 .3-1 .4-1 0-1 0-1-.2-1 .7-1-.5-1-.1-1-.2-1 .2-1-.3-1 .1-1 .1-1 .3-1 .5-1-.5-1 .5-1-.5-1 0-1 .7-1 0-1 .1-1 0-1 0-1 .4-1 .9-1 .5-1 0-1 .3-1-.6-1 .1-1-.1-1 .6-1-.2-1 .1-1-1-1 .6-1 .5-1 .3-1-.6-1 1.5-1-.2-1-.8-1 0-1 .3-1-.5-1-.3-1 .3-1-.6-1 1.6-1 .3-1 .9-1-.3-1 .9-1-.8-1-1.1-1 1.4-1 .8-1 .4-1 .6-1 .5-1-.8-1-.4-1 1.3-1 .3-1-1.1-1 .8-1 .3-1-8.8-1 0-1 .3-1-.2-1-.1-1 0-1 .1-1 .3-1-.1-1 .4-1 .4-1-.3-1 .5-1 .3-1 .2-1-.5-1 .1-1-.3-1-.1-1 .1-1-.1-1 1-1-.2-1 .3-1 1.5-1-.6-1 1.5-1-.7-1 0-1 .6-1 .7-1-.5-1-.6-1 0-1 1.5-1-.8-1 1.3-1 .9-1-.3-1-.1-1 .4-1-.4-1 .2-1 1.5-1-1.2-1 .1-1 0-1 1.7-1-2.1-1-7.1-1-.1-1 .3-1-.1-1 .3-1-.3-1-.1-1 .3-1-.2-1 .2-1-.3-1 0-1 .3-1-.3-1 .4-1 0-1 .3-1-.1-1 .7-1-.1-1 .3-1 .1-1-.2-1 0-1-.4-1 .2-1-.1-1-.1-1 .4-1 .1-1-.1-1 .1-1 .9-1-.5-1 .7-1-.7-1 1.1-1 0-1 .4-1 .6-1-.5-1 1.6-1-.3-1-.9-1 1.3-1-.2-1 .4-1-.6-1 .9-1-1.2-1 1-1 .4-1-.3-1-.6-1 .3-1 1.3-1-.4-1 .4-1-.7-1 1.3-1 0-1-.6-1 1-1 .7-1 .7-1-1.7-1 1.9-1-.9-1 .9-1-.5-1-4.1-1-4.2-1 .1-1-.1-1 .1-1 .2-1-.2-1-.2-1 0-1 .6-1-.3-1 .3-1 0-1 .1-1-.2-1 .6-1-.4-1 .5-1 .2-1 0-1 .6-1 .7-1-.9-1 1-1-.7-1 .4-1-.3-1 .1-1 .2-1 .3-1 .3-1-.5-1-.3-1 .2-1-.1-1 .9-1-.1-1 .6-1 1-1 1.7-1-1.7-1 1.9-1-1.1-1 .3-1-.6-1 .1-1-1.2-1 1.3-1-.2-1 .2-1 0-1 .8-1-1.1-1 1.6-1-.3-1 1-1-.5-1 0-1-.1-1 .8-1-.1-1-.3-1 1.6-1-1.4-1 1.4-1-.5-1 .3-1-.7-1 .9-1 0-1-3.7-1-5.3-1 .1-1-.3-1 .3-1 .1-1 0-1-.3-1-.1-1 .1-1-.1-1-.1-1 .2-1-.1-1 0-1-.1-1 .1-1 0-1 .2-1 .1-1 0-1 .1-1 .1-1-.1-1 0-1 0-1 .7-1 .2-1-.5-1 .3-1-.3-1 .2-1-.2-1-.3-1-.2-1 .3-1 .2-1 .4-1 0-1-.2-1 .4-1 0-1-.3-1 .4-1 0-1 .3-1 .7-1-.1-1 .3-1-.2-1 .7-1 .5-1-.2-1 .5-1 .9-1-.6-1-.9-1-.2-1 .1-1 .1-1 .1-1-.2-1 1.2-1-1.3-1 1.6-1-.3-1-.3-1-.4-1 .4-1 0-1 1.5-1 .5-1 .2-1-.6-1 .2-1-.4-1-.1-1-.4-1 1.8-1 1-1-.4-1-.3-1-.1-1 0-1 .6-1 .4-1-.3-1 1.4-1 0-1 0-1-1.6-1 1.6-1-2.4-1-6.6-1-.1-1 .1-1 .3-1 .1-1-.2-1-.2-1 .2-1-.1-1 0-1 .8-1 .2-1 .5-1 0-1 .5-1-.3-1 .3-1-.7-1 .2-1 0-1 1.1-1 .2-1 .3-1-.4-1 .6-1 1.9-1-.1-1-.6-1 .1-1 .9-1-1.3-1 .3-1 .3-1 1.6-1-1-1 .4-1 .2-1 .8-1-.8-1-1.4-1 .6-1 0-1-.1-1 .7-1 .6-1 .4-1 1-1 1.1-1-4.9-1-4.2-1 .4-1 0-1-.2-1-.2-1 .3-1-.1-1 .1-1 .1-1-.2-1 .2-1 .1-1-.2-1 0-1-.2-1 0-1 .5-1 0-1 .2-1 .6-1-.1-1-.3-1 .5-1-.3-1-.2-1 .1-1 0-1 0-1 0-1-.2-1 .4-1 .4-1 .5-1-.1-1 .4-1 .5-1 .9-1 .6-1-.4-1 .9-1-.4-1 1.1-1-1.3-1-1.4-1 .8-1-.8-1 1.2-1-.2-1 .2-1-.2-1 .4-1-.4-1 1.1-1 .5-1-.9-1 1.1-1 1.1-1 .1-1-1.1-1 1.6-1 .6-1-1-1 1.4-1-1-1 1.6-1 0-1-.5-1 .1-1 .4-1-1.1-1-7.9-1 .1-1-.2-1-.1-1-.1-1 .3-1-.2-1-.1-1 .4-1 0-1 .1-1 0-1 0-1 .1-1 0-1 0-1 .3-1 .3-1 .3-1 .3-1 .2-1-.4-1 .6-1-.2-1-.3-1-.2-1 .2-1-.4-1 .1-1 .2-1 0-1 .6-1 .7-1 .1-1-.1-1 .6-1 .6-1 0-1 0-1 .8-1 .1-1-.4-1-.4-1 .1-1 .6-1-.2-1-.6-1-.2-1 .2-1 .5-1 .5-1-.4-1 1.2-1-.3-1-.9-1-.1-1 1.5-1-.7-1 2.4-1-.8-1 1.9-1-.9-1 1.3-1-1.3-1-.1-1 .5-1 .9-1-.2-1 .2-1-3.7-1-5-1-.4-1 .3-1-.4-1-.1-1 .2-1 .1-1-.2-1 .1-1-.1-1 .2-1-.1-1 0-1 .1-1 0-1 .1-1-.2-1 .1-1 .3-1-.3-1 .3-1-.1-1-.1-1 .4-1 0-1 .7-1-.4-1 .2-1-.1-1 .3-1-.7-1-.1-1-.2-1-.1-1 .1-1 .1-1 0-1 .2-1 .1-1-.1-1 0-1-.1-1 .3-1 .2-1 .3-1-.3-1 .2-1 .8-1 .1-1 .7-1-.2-1 1.6-1 .1-1 .2-1-.4-1-.5-1-.2-1 .4-1-.3-1-.6-1 .8-1-.6-1-.1-1 .8-1 .8-1 .1-1-.5-1 .1-1 .1-1-.2-1 .2-1 1.9-1 .4-1-1.9-1 .4-1 1.7-1 .1-1-1.3-1 .8-1-.7-1 .1-1 .7-1-1.1-1 .4-1 .5-1 .1-1 2.6-1-1.3-1 1.3-1 0-1 0-1-.8-1-8.2-1 .4-1-.1-1-.1-1 .3-1 0-1-.1-1 .3-1-.2-1 .1-1 .4-1-.3-1 .4-1-.1-1 .8-1 0-1 .6-1-.5-1-.4-1 .3-1-.3-1 .9-1-.3-1 .7-1 .6-1 .3-1 .5-1 .7-1 .3-1 .9-1-.8-1 .3-1 1.5-1-1.6-1 .4-1-.4-1 1.4-1-1.2-1 .6-1 .8-1-.1-1-.3-1 .9-1 1.4-1 0-1 0-1-.5-1 .5-1-8.9-1-.1-1 .1-1-.2-1 .3-1-.1-1-.3-1 0-1 .2-1 0-1 .1-1 .4-1-.2-1 0-1 0-1 .2-1 .2-1 .2-1-.2-1 .3-1 .5-1 .6-1-.3-1 0-1-.6-1 .4-1-.1-1-.2-1 .3-1 .4-1-.6-1 .2-1 .7-1 .3-1 .1-1 .1-1-.1-1 .1-1 .3-1 .2-1 .1-1 2-1-1.1-1 .1-1-.2-1-.3-1 1-1-.1-1 .4-1-.3-1 0-1-.5-1 .8-1 .1-1-.2-1 1.5-1-.5-1-.5-1-.1-1 1-1-.1-1-1.9-1 1.2-1 0-1 2-1 1.3-1 0-1 0-1-.8-1 .8-1-.1-1-8.7-1 .1-1 0-1 .1-1-.5-1 .2-1-.2-1 .3-1-.1-1 .2-1 0-1-.3-1 .1-1-.1-1 .3-1 0-1-.1-1 .5-1 .2-1 .5-1-.1-1 .4-1-.7-1-.3-1 .3-1 .1-1-.3-1 .5-1 0-1 0-1 .3-1-.2-1 .1-1 .5-1 .5-1 .6-1-1.1-1 1.1-1 .1-1 .8-1 .2-1 .7-1-.7-1 .5-1-.5-1-.5-1-.2-1 .5-1 .7-1 .1-1 .7-1-1.3-1 .2-1 .6-1-.3-1 1.3-1-.7-1 .9-1 0-1 1.1-1-.8-1 1.5-1-.2-1 .6-1-1.7-1 .7-1 1.1-1-.1-1 .6-1 0-1-2.2-1-6.6-1 0-1-.1-1 0-1-.4-1 .1-1 0-1 0-1 .2-1-.1-1 .2-1 0-1 0-1 .1-1 0-1 .4-1 .5-1 0-1 .1-1 .5-1 .2-1-.4-1 .4-1-.6-1 .5-1-.5-1 .2-1 .2-1 .3-1 .1-1 .3-1-.2-1 .2-1-.1-1 .5-1 1-1-.1-1 .1-1 1.7-1 .3-1-.8-1 .4-1 .1-1-1-1 1-1 .4-1-.9-1 .4-1-.3-1-1.5-1 1-1-1.1-1 1.8-1 .2-1-.7-1 .2-1 .2-1 1.5-1-1.1-1 .3-1-.3-1 2-1-.1-1 .5-1-.6-1 1.5-1 .1-1-1.4-1 1.4-1-.9-1-8.6-1 .2-1 0-1-.2-1-.1-1 .1-1-.1-1 .1-1 0-1-.1-1 .1-1 2.7-1 .2-1 1.3-1 .2-1 .4-1-.9-1 .7-1 1.1-1 .1-1 1-1-.8-1-5.5-1 .2-1-.2-1 .1-1 .1-1 0-1 .2-1-.2-1 .2-1 .3-1-.3-1 .1-1 .6-1-.1-1-.1-1 .5-1-.3-1-.2-1-.2-1 .1-1 .4-1 .1-1 .5-1 .6-1 .6-1-.6-1 .6-1 .3-1 .3-1 .2-1 .8-1-.2-1 .1-1-.3-1 .7-1 .7-1 .1-1 .7-1-.9-1 .2-1 .6-1 1.2-1-1.8-1 2.7-1-.2-1 .8-1 0-1-1.9-1-7.5-1 0-1 0-1 0-1 .1-1 0-1-.2-1-.1-1 0-1 .1-1-.1-1 .3-1 .1-1-.2-1 0-1 .2-1-.1-1-.2-1 0-1 .2-1-.4-1 .5-1-.1-1-.3-1 .1-1 .1-1 .2-1 .3-1-.2-1-.1-1 0-1-.4z" fill="url(#g21)" stroke="#4a3c9c" stroke-width="0.6" stroke-linejoin="round"/></g><g transform="translate(166.2,633.2)"><path d="M102,-2.2l1-.9 1-.3 1-1.8 1 1.1 1-.1 1 .2 1 1.1 1-1.4 1 1.1 1-1.6 1 0 1 0 1 .1 1 .6 1-.3 1-.5 1 1 1-.3 1 .2 1 0 1 .4 1 .8 1-.1 1-.2 1 .4 1 .5 1 .3 1 .8 1 .1 1 .2 1 .1 1 .2 1 .1 1 .1 1 0 1 0 1 0 1 0 1 0 1 0 1 0 1 0 1 0 1 0 1 0 1 0 1 0 1-1.8 1-1.6 1-.6 1 .8 1 .5 1-.5 1-1.6 1 .1 1-1.1 1 1 1 .1 1 .6 1 .7 1-.5 1 0 1-.8 1-1.1 1 1.5 1-.5 1 .5 1-.1 1 .5 1-.5 1-.1 1-.9 1 1 1 .7 1-.2 1 1.2 1-.1 1-1.1 1 .7 1-.3 1 .2 1 .1 1 .8 1-.2 1 0 1 0 1 .6 1 .3 1 .3 1 .4 1-.1 1 .3 1 0 1 .4 1 .2 1 .1 1 .1 1 0 1 0 1 0 1 0 1 0 1 0 1 0 1-1.8 1-.8 1-1.1 1-.7 1-.7 1 1.2 1 .4 1 .2 1-.3 1 .5 1-.8 1-.5 1-1.2 1 1.8 1-1.3 1 1.2 1 .2 1 0 1-1.5 1-.2 1 .5 1 1.1 1 1 1-1.5 1 .5 1-1.3 1 .8 1-.2 1 .5 1-.5 1 .1 1 1.2 1-.1 1-1.4 1 1 1-.7 1-.4 1 .6 1 .5 1 .8 1 0 1-2.2 1 .9 1 .6 1 .2 1 .8 1 .4 1 .1 1-.6 1 .2 1 .7 1 .2 1 0 1 .5 1 .3 1-.4 1 .4 1 .1 1 .1 1 0 1 .2 1 .2 1 0 1 .1 1 .1 1 0 1 0 1 0 1 0 1 0 1 0 1 0 1 0 1 0 1 0 1 0 1 0 1 0 1 0 1 0 1 0 1 0 1 0 1 0 1-1.8 1-1.8 1-1.6 1 .5 1 1.6 1-.4 1 .9 1-1.2 1-.3 1-1.2 1 1.2 1 .1 1-.2 1 .2 1-1.2 1-.5 1 .1 1-.7 1 1 1 1 1 .3 1 .5 1-.6 1 .3 1 .1 1-1.8 1 .1 1 1.2 1 .4 1 0 1-1.3 1-.2 1 .4 1 .6 1 1.6 1-.4 1 1 1-.3 1-.2 1 .3 1 .4 1 .2 1 .4 1 .2 1 .2 1 .2 1 .2 1 .2 1 .1 1 .1 1 .1 1 0 1 0 1 0 1 0 1 0 1-1.9 1-1.5 1 .4 1 .3 1-.2 1-.5 1 .1 1-1.7 1 1.1 1 .4 1 .5 1-.8 1-1.2 1 .9 1-.1 1-.4 1 .1 1 .7 1 .1 1 .3 1-1.2 1-1 1 .7 1 1.2 1-.3 1-.5 1-.2 1-.1 1 1.1 1-1.1 1 .8 1-.2 1 .6 1 .5 1-.6 1 .4 1 0 1 .8 1 .3 1 .6 1-.1 1 .3 1-.3 1 0 1 .2 1 .4 1 .2 1 .5 1-.1 1 .2 1 .1 1 .1 1 .1 1 0 1 0 1 0 1 0 1 0 1 0 1 0 1 0 1 0 1 0 1 0 1 0 1 0 1 0 1 0 1 0 1 0 1 0 1 0 1 0 1 0 1 0 1 0 1 0 1 0 1 0 1 0 1 0 1 0 1 0 1 0 1-1.5 1-1.9 1-.6 1 0 1-.4 1 .1 1 1.2 1-.8 1 .4 1-.8 1 .9 1 0 1-1.4 1-.1 1 1 1-.7 1-1 1 .6 1-1.6 1 .4 1 2 1 1.2 1 0 1-.4 1-1.3 1 .9 1 .1 1-.4 1 .7 1 .1 1 .5 1-.4 1-.7 1-.4 1-.1 1 0 1 1.4 1 0 1 .2 1 .6 1-.8 1 .4 1 .5 1 .7 1 .1 1 .2 1-.1 1 .3 1 .2 1 .1 1 .3 1 .1 1 .1 1 .1 1 0 1 0 1 0 1 0 1-2 1-.8 1-1 1 .7 1 .8 1-1.7 1-.3 1-.8 1-.9 1 .5 1 1.1 1 .3 1 .3 1-.4 1-.7 1-1.1 1 1.1 1-1 1 1.1 1-.1 1-1.1 1 .1 1 1.6 1 .9 1-1.6 1 1.5 1 .1 1-.8 1-1.2 1 1.3 1-1 1 .9 1-.5 1 .7 1 .5 1 .2 1-1.5 1 1.5 1-1.2 1 1.8 1-.5 1 .5 1 0 1 .7 1-1.1 1 0 1 .5 1 .2 1 .6 1 .3 1-.2 1 .2 1 .2 1 .2 1 .4 1 .1 1 .4 1 0 1 0 1 .1 1 .1 1 0 1 0 1 0 1 0 1 0 1 0 1 0 1 0 1 0 1 0 1 0 1 0 1 0 1 0 1 0 1 0 1 0 1 0 1 0 1 0 1 0 1 0 1-1.3 1-1 1-1.4 1-.2 1-.8 1 .7 1 .3 1 .1 1 .9 1-2 1-1.2 1-1 1 1.4 1 .8 1 0 1 .4 1-.1 1-.5 1 .5 1-1.5 1 .1 1 .9 1 .5 1 .4 1 .9 1-.9 1-1.1 1 .8 1 .1 1 0 1 1 1 .6 1-.6 1 0 1-.7 1 .1 1 .3 1 .9 1 .6 1-.7 1 .4 1-.3 1 .6 1 .5 1 .1 1 .3 1 .5 1 0 1 0 1 .1 1 .3 1 .1 1 .1 1 0 1 0 1 0 1 0 1-2.2 1-1.4 1-.2 1 1 1 .1 1-.4 1-.4 1-1.3 1-.3 1 1 1-1.1 1 1.6 1-.9 1 .1 1-.4 1 .8 1-.6 1 .4 1-.3 1-.2 1 .9 1-.2 1 .6 1-.6 1-.3 1-1 1 1.3 1 1 1 .1 1-1.8 1-.3 1 1 1-.4 1 .5 1 .6 1 .4 1-1.5 1 0 1-.2 1-1.1 1 1.4 1 .1 1 1.7 1-.2 1-.3 1-.8 1-.4 1 1 1 .6 1 .1 1 1 1-.2 1-.2 1-.1 1 .2 1 .1 1 .9 1 .1 1 .1 1 0 1 0 1 .2 1 .1 1 .1 1 .1 1 .1 1 0 1 0 1 0 1 0 1 0 1 0 1 0 1 0 1 0 1 0 1 0 1 0 1 0 1 0 1 0 1 0 1 0 1 0 1-1.7 1-.9 1-.2 1-1.5 1-.8 1 .1 1 1.7 1-.4 1-.8 1 1.7 1-.3 1-2 1 .2 1 .5 1-1.2 1 .5 1 .4 1 1 1-.9 1 0 1-1.8 1 .5 1 .4 1 .6 1 .1 1 1.4 1-1.4 1-.5 1 .2 1-.2 1 1.5 1-.5 1 1.1 1-.7 1 .1 1-.5 1 1.2 1 .3 1 0 1 .9 1-.1 1 .2 1-.2 1 .5 1 .2 1 .4 1 .3 1 .2 1 0 1 .1 1 .2 1 .1 1 0 1 0 1 0 1 0 1 0 1-1.6 1-2.4 1-1.1 1-.1 1 .3 1 .7 1-.8 1 .2 1-.7 1 1.6 1-1.3 1 1 1 .3 1-.8 1 1.3 1 .1 1-.5 1-1.8 1 .1 1 1 1 .4 1-.8 1 .9 1-1.4 1 .7 1-1 1 .8 1 0 1 .8 1 .1 1 .1 1-1.3 1 1 1-.7 1-.1 1 .9 1 .8 1-1.5 1 .4 1 .3 1-.8 1 .1 1 .5 1 1.6 1 .7 1-.4 1-.2 1-.2 1 .5 1 .4 1-.2 1 1 1 .1 1-.6 1 .4 1 .1 1 .1 1 .2 1 .3 1 .1 1 0 1 0 1 .2 1 .1 1 .1 1 0 1 0 1 0 1 0 1 0 1 0 1 0 1 0 1 0 1 0 1 0 1 0 1 0 1 0 1 0 1 0 1 0 1 0 1-1.7 1-2.5 1 .3 1 .4 1-.5 1 .3 1-.3 1-2.2 1 1.7 1 .7 1-.9 1 .8 1-.7 1-1.1 1 1.3 1-.8 1 0 1 1.6 1 .5 1-.9 1-.1 1-.5 1-1 1 .2 1 2.2 1-.8 1 .3 1 .1 1-1.2 1 .7 1-.9 1 1.2 1 .1 1 .6 1-.7 1 1.2 1-.6 1 .1 1 1 1 .2 1 .2 1 .1 1-.1 1 .1 1 .5 1-.1 1 .5 1 .2 1 .3 1 0 1 .1 1 .1 1 0 1 0 1 0 1 0 1 0 1-1.4 1-2.2 1-.8 1 .4 1-.9 1 .1 1 .3 1 .9 1 .6 1-1.4 1-.3 1 1 1-.6 1 .3 1-.4 1 .4 1-.6 1-1.5 1 1.7 1 .4 1 .7 1 0 1-.7 1 .2 1-.4 1-1.1 1 .7 1 .1 1 .2 1 .4 1 .9 1-.7 1-.5 1-.1 1-1.1 1 1.2 1-.2 1 .5 1 .5 1-.4 1-.3 1-.6 1 0 1-.4 1 2 1 .1 1 .1 1 .2 1 .2 1 .2 1 0 1 .4 1 .4 1 .4 1-.1 1-.3 1 .6 1 .2 1 0 1 .3 1 .1 1 .1 1 0 1 .1 1 .1 1 0 1 0 1 0 1 0 1 0 1 0 1 0 1 0 1 0 1 0 1 0 1 0 1 0 1 0 1 0 1 0 1 0 1 0 1-1.9 1-2.4 1-.3 1 .2 1 .6 1 0 1 .2 1-.6 1-.8 1-.4 1 .8 1-.2 1 .9 1-.2 1-.1 1-.9 1 .6 1 .8 1.4-1 0 9.9-1.4 0-1 .3-1 .7-1-1.9-1 .9-1-.8-1-.4-1-.1-1 1.1-1 .2-1 .6-1-.5-1-1.5-1 .7-1 1-1-.3-1-1.3-1-1.4-1-1.9-1 0-1 0-1 0-1 0-1 0-1 0-1 0-1 0-1 0-1 0-1 0-1 0-1 0-1 0-1 0-1 0-1 0-1 0-1 .1-1 .1-1 0-1 .2-1 .1-1 .2-1 .1-1 .3-1 .1-1 .1-1 .1-1 .3-1 0-1 .8-1 .1-1 .1-1 0-1-.2-1 .3-1 1-1 .5-1 .2-1-1.1-1 .8-1 .4-1-1.5-1 .1-1 .2-1 1.5-1 0-1 .8-1-.3-1-.6-1-1-1 .1-1 1.1-1-1-1 1.5-1-1.4-1-.6-1 1-1-.9-1 2.3-1-.4-1-.2-1-.2-1-.7-1-.5-1 .7-1-.2-1 .1-1 .6-1-.4-1 .2-1 .4-1-1.2-1-.9-1 1.3-1-.7-1 1.8-1-1.2-1-.7-1-1.1-1-1.4-1-1.2-1 0-1 0-1 0-1 0-1 0-1 .1-1 .1-1 .1-1 .2-1 .4-1 .3-1 0-1 .6-1-.5-1 .5-1-.1-1 .4-1 .6-1 .4-1-.6-1 1.2-1-.3-1-.5-1-.2-1 1.3-1-.5-1 2-1-.9-1-.5-1-1.7-1 .6-1 2.4-1-.6-1 .2-1-.4-1 .4-1-.5-1-1.3-1 .9-1 .3-1 1.3-1-.4-1-.1-1 .7-1-1.9-1 .4-1-.2-1 1.2-1-1.4-1 .9-1-1.1-1-.8-1-.4-1 1.6-1-.8-1-1.3-1-2.1-1 0-1 0-1 0-1 0-1 0-1 0-1 0-1 0-1 0-1 0-1 0-1 0-1 0-1 0-1 0-1 0-1 0-1 0-1 .1-1 .1-1 .1-1 0-1 .2-1 .1-1 .2-1 .4-1 .1-1 0-1 .3-1 0-1-.4-1 .8-1 .6-1 .8-1 .2-1 .1-1-.7-1 .1-1 .9-1 .3-1-.3-1 .3-1-1.2-1-.2-1 .5-1 .1-1 .3-1 .9-1-.8-1 2.1-1-1-1-.8-1 .5-1-.1-1 .8-1-.4-1-.2-1 .6-1 0-1-1.6-1 .4-1 1.3-1-.1-1-1.5-1 1.9-1-1.2-1-.7-1 .1-1 .7-1-.5-1 1.3-1-.7-1-.4-1-.5-1-.5-1-.4-1 1.6-1 .4-1 .3-1-.5-1-.5-1-2.9-1-1.4-1 0-1 0-1 0-1 0-1 0-1 .1-1 .2-1 0-1 .1-1 .1-1 .5-1 0-1 .2-1 .8-1 0-1-.2-1 .4-1 .3-1 .5-1-.2-1 1.5-1-.5-1-.3-1-.6-1 .3-1 .7-1-.2-1-.1-1 1.7-1-1.9-1 .5-1-.2-1 1-1 1.1-1 .8-1-.5-1-1.2-1-1.4-1-.5-1 1.1-1-.2-1-.4-1 1.2-1 .2-1 0-1-.4-1-.6-1-.1-1 .2-1 1.7-1-1.8-1 0-1-1-1 0-1 .4-1-1.3-1-2-1 0-1 0-1 0-1 0-1 0-1 0-1 0-1 0-1 0-1 0-1 0-1 0-1 0-1 0-1 0-1 0-1 0-1 0-1 .1-1 0-1 .2-1 .1-1 .1-1 .2-1 0-1 .1-1 .3-1 .2-1 .7-1-.3-1-.1-1 .3-1 0-1-.4-1 .4-1 .6-1 .4-1-.3-1 .1-1-.1-1 .7-1-.2-1 1.5-1-.7-1-.1-1-.2-1 0-1-.9-1 .2-1 .9-1 1.8-1 .4-1-.3-1-.6-1-.6-1 0-1 0-1 .3-1 1.3-1 .2-1-1.3-1-1.2-1 .3-1-.6-1 0-1 .3-1 .6-1 0-1-.9-1 .7-1-.4-1 1.6-1-1.1-1 1.1-1-1.1-1-.6-1-.7-1-.2-1 .8-1 1.2-1 .2-1-.7-1-2.5-1-1.8-1 0-1 0-1 0-1 0-1 .1-1 .1-1 .1-1 .1-1 .2-1 .2-1 .2-1 .4-1 .5-1 .1-1 .1-1 .6-1-.4-1-.4-1 1.1-1 .1-1 1.3-1-1-1 .4-1-.4-1 .6-1-.8-1 1.7-1 .3-1-1.5-1 .9-1-.8-1-.3-1 .8-1 0-1-.3-1 1.7-1-.3-1-.8-1 .1-1-.2-1-.4-1 .8-1 .5-1-.7-1 .5-1-1.2-1-.7-1-.1-1-.1-1 1.2-1-.6-1 1.5-1-1.4-1-1-1 .1-1-1.9-1-1-1 0-1 0-1 0-1 0-1 0-1 0-1 0-1 0-1 0-1 0-1 0-1 0-1 0-1 0-1 0-1 0-1 0-1 0-1 0-1 0-1 0-1 0-1 .1-1 .1-1 .1-1 0-1 .3-1 .1-1 .1-1 .2-1 .6-1-.2-1-.1-1 .4-1 .6-1 .3-1-.2-1 .2-1 .6-1-.2-1-.1-1 .7-1 .7-1 .3-1 .1-1-.2-1-1.5-1 .9-1-.2-1 .7-1 .4-1-.8-1 .4-1-.2-1-1.3-1 .1-1 1.6-1-.3-1 .2-1 .4-1-.1-1 .6-1-1.6-1 .4-1 .3-1 .7-1 .5-1-.6-1-.2-1-.6-1-.7-1-.1-1 1.4-1 .2-1 0-1 .3-1-1.6-1-.3-1-.9-1 .3-1 .8-1-1.9-1-1.8-1 0-1 0-1 0-1 0-1 .1-1 .2-1 .1-1 .2-1 .3-1 .1-1 0-1 0-1 .1-1 .7-1 .4-1 0-1 .6-1 .2-1-.3-1-.4-1 1.1-1-.4-1 2-1 .5-1-1.4-1-.5-1 .5-1-.9-1 .7-1 1-1 .4-1 .2-1-1.2-1-.1-1-.9-1 1.4-1-.4-1 .5-1 .4-1-.2-1-.3-1-.6-1-1.3-1 2.8-1-1.2-1 1-1-1.7-1 1.2-1-1.1-1-.2-1-.1-1 0-1 1.2-1 0-1-.1-1-1.4-1-1.7-1-1.5-1 0-1 0-1 0-1 0-1 0-1 0-1 0-1 0-1 0-1 0-1 0-1 0-1 0-1 0-1 0-1 0-1 0-1 0-1 0-1 0-1 0-1 0-1 0-1 0-1 0-1 0-1 0-1 0-1 0-1 0-1 0-1 .1-1 .1-1 0-1 .2-1 .1-1 .4-1 0-1 .7-1 .3-1-.1-1 .3-1 0-1 .3-1-.2-1 1.4-1-.6-1 1.2-1 0-1-1.5-1 1.4-1 .1-1 .5-1-.1-1 .2-1 .6-1-.9-1-.8-1 .6-1-.3-1-.3-1 .7-1-.2-1 .8-1-.8-1-.8-1 1.1-1 .4-1 .9-1-1-1-1.3-1-.5-1 0-1 .1-1 1.4-1-.4-1 .2-1-.4-1-.2-1-.6-1-.7-1 .6-1-1.1-1-1.9-1 0-1 0-1 0-1 0-1 0-1 .1-1 .2-1 .2-1-.1-1 .2-1 .4-1-.1-1 .3-1 .6-1 .4-1 .2-1 .5-1 .2-1-.7-1 1-1-.3-1 1.1-1-.1-1 .3-1-.2-1-.9-1 .1-1 .7-1 .7-1-1-1 0-1 1-1 1.2-1-2.5-1 .5-1 .8-1 .5-1 0-1 .6-1-.4-1-2.2-1 .4-1 .5-1-.8-1 .5-1-.7-1 .7-1-1-1-.2-1 .9-1 1.1-1-.5-1 .7-1-2.2-1-1.4-1-1.3-1 0-1 0-1 0-1 0-1 0-1 0-1 0-1 0-1 0-1 0-1 0-1 0-1 0-1 0-1 0-1 0-1 0-1 0-1 0-1 .1-1 .1-1 0-1 .1-1 .1-1 .4-1 0-1 .3-1-.2-1 0-1 .5-1 .1-1 0-1 1-1-.2-1 .6-1-.8-1-.4-1 1.4-1 1.2-1 .1-1-1.3-1 1.9-1-1.4-1-.4-1 .6-1-.3-1 .5-1 1.1-1-.7-1-.3-1-1.1-1-.1-1 1.5-1 .4-1-.6-1 1.2-1-1.5-1 .3-1-1.5-1 1.5-1-.7-1 1.1-1 1.8-1-1.1-1-.2-1-1.4-1-.1-1 1-1-.4-1-.2-1 .4-1 .7-1-1.6-1-.7-1 .4-1 .1-1 .5-1 .5-1 .3-1-1-1-.2-1-.9-1-.7-1-1.8-1 0-1 0-1 0-1 0-1 0-1 0-1 0-1 .1-1 .2-1 .2-1 0-1 .2-1-.1-1 .3-1 .5-1 .1-1 .9-1-.1-1 .6-1 .1-1-1.1-1 .2-1 1.5-1 .9-1 .4-1 .3-1-.7-1-.2-1-1.9-1 1.3-1 .6-1 1.7-1-1.5-1 .1-1 .3-1-.8-1 0-1 .1-1 1.6-1 .2-1-.8-1 .1-1-1.5-1 .2-1 .1-1 .3-1 .6-1 .5-1-1-1-.5-1-.7-1 .6-1 .1-1 .8-1-1.4-1-1.7-1-1.7-1 0-1 0-1 0-1 0-1 0-1 0-1 0-1 0-1 0-1 0-1 0-1 0-1 0-1 .1-1 .2-1 .2-1 0-1 .2-1 .4-1 .6-1 .2-1 .6-1-.3-1 1.1-1-.2-1-.5-1 .5-1 1.3-1 0-1-.2-1-.8-1-.5-1 .3-1 .1-1 .3-1 .1-1 0-1 0-1 .2-1-1.1-1 .4-1 .6-1-.8-1 .7-1 .3-1-.2-1-1.5z" fill="url(#g30)" stroke="#1c6c5c" stroke-width="0.6" stroke-linejoin="round"/></g><g transform="translate(166.2,654.5)"><path d="M102,-1.8l1-1 1-1.6 1 1.1 1-.8 1 .1 1 .7 1 .7 1-1.4 1 .8 1-1.4 1-.4 1 .6 1 .9 1 .3 1-.8 1 .8 1-.2 1-1.3 1 .1 1 .8 1 .1 1 1.4 1-.9 1 .1 1 .8 1 .6 1-.1 1 .5 1 .4 1 .2 1 0 1 .2 1 .1 1 .1 1 0 1 0 1 0 1 0 1 0 1 0 1 0 1 0 1 0 1 0 1 0 1 0 1 0 1-2 1-1.2 1-.2 1-.7 1 1.1 1-1 1-.4 1 .7 1-.6 1-1 1 .8 1 .2 1 0 1-1 1-.2 1 .2 1 1.4 1-1.3 1 .2 1 .6 1 .8 1-1.5 1 .6 1-1.4 1 .8 1 1.3 1-.8 1 .6 1-.1 1-1.3 1 .5 1 .2 1 .8 1 .6 1 1 1-.4 1-.4 1 .3 1 .1 1 .3 1 .4 1 .7 1 .2 1 .3 1 0 1 .1 1 .2 1 .2 1 .2 1 .1 1 0 1 0 1 0 1 0 1 0 1 0 1 0 1-1.5 1-.9 1-1.7 1-.4 1 0 1 .1 1-.8 1 .9 1 .7 1-.6 1-.3 1-.6 1 .2 1-1.4 1 2.6 1-1.1 1 .6 1-.3 1 .6 1-.5 1-.5 1 .4 1 .4 1 .3 1 .4 1 .4 1-1.9 1-.8 1 .7 1-.2 1 1.9 1 .4 1-1 1 .6 1-.6 1-2 1 .4 1 .1 1 .8 1 1.1 1-.3 1-.6 1 .8 1-.5 1 .4 1 1.1 1 .9 1 0 1-.9 1 .1 1-.1 1 .5 1 .1 1 .8 1 .4 1 0 1 0 1-.2 1 .2 1 .3 1 .1 1 .2 1 0 1 .1 1 .1 1 0 1 0 1 0 1 0 1 0 1 0 1 0 1 0 1 0 1 0 1 0 1 0 1 0 1 0 1 0 1 0 1 0 1 0 1 0 1-1.4 1-2.3 1-.9 1 0 1 .1 1 0 1 1.6 1-.8 1 0 1-.3 1-.4 1-.3 1 1.1 1 0 1-1.3 1 0 1 1 1-.2 1-.7 1 .4 1 .2 1 .9 1-1.4 1 0 1-.8 1-.2 1 2.1 1 .7 1-.8 1 .2 1-.4 1-.7 1 .1 1 1.3 1 .1 1 .7 1-.5 1 .1 1 .2 1-.1 1 1 1 .2 1 .3 1 .2 1 .1 1 0 1 .3 1 .1 1 .2 1 .2 1 .1 1 0 1 0 1 0 1 0 1 0 1-1.9 1-2 1-.2 1 .9 1-.9 1-1.2 1 .1 1-.3 1 .1 1 1.7 1-.4 1-.1 1-.7 1 .4 1 .3 1-.7 1 .3 1 2 1-1.2 1-.1 1-1.7 1-.6 1 .6 1 0 1 1.7 1 .3 1-.4 1 .8 1-1.7 1-.2 1 .6 1 .6 1 .8 1-1 1 .4 1 .6 1-1.2 1 .9 1 1.1 1-.3 1 .7 1-.1 1 .4 1 .3 1 .2 1 0 1 .4 1 .2 1 .1 1 0 1 .1 1 .1 1 .2 1 0 1 0 1 0 1 0 1 0 1 0 1 0 1 0 1 0 1 0 1 0 1 0 1 0 1 0 1 0 1 0 1 0 1 0 1 0 1 0 1 0 1 0 1 0 1 0 1 0 1 0 1 0 1 0 1 0 1 0 1 0 1-1.5 1-1.8 1 0 1-1.3 1-.2 1 1 1-.6 1 .5 1-.5 1-.9 1-1.2 1 2.1 1-1 1 2.1 1-.2 1-1.5 1-.3 1-.9 1 .9 1-.5 1 1.8 1 0 1-.2 1-.8 1 .2 1-.8 1-.1 1 0 1 1.1 1 .5 1 .4 1-1 1 .6 1-.4 1 .4 1-.8 1 1.9 1-.2 1 .2 1 0 1 0 1 1.1 1 .1 1 .5 1 .3 1 .2 1-.4 1 .4 1-.1 1 .3 1 .2 1 .2 1 .1 1 .1 1 0 1 0 1 0 1 0 1-1.7 1-1.6 1-1 1 .5 1 .3 1 .4 1-.7 1-1.8 1 1.1 1-.9 1 2 1 .3 1-1.2 1-1.4 1-.1 1 .7 1-.5 1 2.2 1-.4 1-.5 1 .6 1-1.4 1-.7 1 .7 1-.5 1 1.7 1 .6 1-.3 1-1.4 1-.1 1 1.1 1-.7 1-.1 1 1.6 1-.4 1 .4 1-2 1 .8 1-.7 1 1.5 1-.3 1 1.8 1-.6 1-.1 1-.6 1 .1 1 1.4 1-.1 1 .9 1 .1 1-.1 1-.1 1 .2 1 0 1 .4 1 .1 1 .2 1 0 1 .1 1 .1 1 .1 1 0 1 0 1 0 1 0 1 0 1 0 1 0 1 0 1 0 1 0 1 0 1 0 1 0 1 0 1 0 1 0 1 0 1 0 1 0 1 0 1 0 1 0 1-1.6 1-1.2 1-1 1-1.9 1 1.1 1 .7 1 .2 1-.5 1 .3 1-1.2 1-.8 1 .9 1 0 1-1.3 1 1.8 1 .3 1 .3 1 .4 1-.7 1 .3 1-.9 1 1 1 .2 1 .9 1-2.1 1 0 1-1.6 1 .5 1 .4 1 2.2 1-.7 1 1.4 1-2 1 .6 1-1.1 1 .6 1 .3 1 1 1 1.3 1 .1 1-.4 1 .4 1-.3 1 .7 1 .1 1 .4 1 .3 1-.2 1 .3 1 .2 1 0 1 .2 1 .1 1 0 1 0 1 0 1 0 1-2.2 1-1.2 1 0 1-.1 1-.2 1 1 1-1.5 1-1.4 1 1.2 1-.5 1-.2 1 1 1 .5 1 .4 1-1.7 1-.3 1 .5 1-.6 1-.2 1 1.6 1 .3 1 .2 1-.3 1 0 1-2 1 1.9 1-.7 1 .7 1-1.1 1-.2 1 .4 1-1 1 1 1 1.3 1-1.1 1 1.7 1-.8 1-1.6 1 .1 1 .4 1 .2 1 1.5 1-.1 1-.5 1-.1 1 0 1-.5 1 .3 1 1.2 1 0 1 1 1-.3 1-.3 1 .2 1 .8 1-.2 1 .3 1 .5 1 0 1 0 1 .2 1 .1 1 .2 1 0 1 .1 1 .1 1 0 1 0 1 0 1 0 1 0 1 0 1 0 1 0 1 0 1 0 1 0 1 0 1 0 1 0 1 0 1 0 1 0 1 0 1-1.6 1-1.9 1-.4 1 .3 1-.1 1-1.3 1 .8 1 .3 1-.2 1 1 1-.3 1-1.4 1 .6 1-1 1 .1 1 .9 1 0 1 .4 1-1 1-.1 1-1.1 1 .2 1 .3 1 1.6 1 .5 1-.5 1-.8 1 .1 1-1 1-.2 1 1.5 1 .7 1 .4 1-.4 1-.4 1 .8 1 .1 1 .4 1 .9 1 0 1 .2 1-.7 1 .3 1 .2 1 .3 1 .6 1 .3 1 .1 1 .1 1 .2 1 .1 1 .1 1 0 1 0 1 0 1 0 1 0 1-1.6 1-1.5 1-.9 1-.4 1-.6 1 .4 1 1 1-.8 1-.4 1 .1 1 1.2 1-.8 1-.3 1 0 1 1.5 1-2.5 1 .8 1-1.4 1 .7 1-.4 1 .1 1 .7 1 .8 1 .3 1 .1 1-1.5 1 0 1 2.1 1 .2 1-.1 1-.4 1 .3 1-.3 1-.8 1 .3 1-.1 1 .2 1 .1 1 .1 1-.4 1 1 1 .4 1-.7 1 .4 1 .4 1-.9 1 .6 1-.8 1 1.2 1 0 1 .3 1 .6 1 .3 1-.1 1-.3 1 .6 1 .1 1 .1 1 .5 1 .1 1 .1 1 .1 1 0 1 .1 1 .1 1 0 1 0 1 0 1 0 1 0 1 0 1 0 1 0 1 0 1 0 1 0 1 0 1 0 1 0 1 0 1 0 1 0 1 0 1-1.9 1-2.1 1 .2 1 .8 1-.4 1-.8 1-.7 1-1.4 1 1.7 1-.7 1 .9 1-.1 1-.9 1 0 1 0 1 1.9 1-.2 1-.5 1 1.2 1-.7 1-.9 1-.5 1 0 1 .9 1 0 1 .6 1 0 1-.6 1-.8 1 1.1 1-.9 1 .5 1 .1 1 1.5 1-.6 1 .7 1-.2 1-.3 1 .6 1 .6 1-.1 1 .8 1-.6 1 .3 1 .4 1 0 1 .5 1 .2 1 .1 1 .1 1 .1 1 .1 1 0 1 0 1 0 1 0 1 0 1-1.1 1-1.8 1-1.7 1 .6 1 0 1-.3 1-.4 1 .9 1 .1 1-1.5 1 1 1-.6 1-.2 1 .9 1-.2 1 1 1-1.4 1 0 1 .3 1-.6 1 1.2 1 .2 1-.4 1 .5 1-1.1 1 .1 1 .1 1-.1 1-.9 1 1.3 1 0 1-.1 1 0 1-1.7 1 .4 1 1.6 1-.6 1 .9 1 .3 1 .3 1-1.1 1-.4 1-.7 1 1 1 .4 1 1.5 1-.2 1-.1 1-1 1 .8 1 .4 1 .7 1 .2 1 0 1 .2 1 0 1 .1 1 .4 1 .4 1 .1 1 .1 1 0 1 .1 1 0 1 .1 1 0 1 0 1 0 1 0 1 0 1 0 1 0 1 0 1 0 1 0 1 0 1 0 1 0 1 0 1 0 1 0 1 0 1 0 1-1.6 1-1.5 1-.4 1 .6 1 .4 1-.8 1-.7 1-1.9 1 1 1 .9 1-.2 1-.1 1 .9 1-1 1-.9 1 0 1-.6 1 1.6 1.4-.2 0 9.4-1.4 1.4-1-.3-1 .1-1-.9-1 .4-1-1.7-1 1.2-1 .1-1 .1-1 .1-1 .4-1-.4-1-1.7-1 .3-1 1-1 0-1-.8-1-1.6-1-2-1 0-1 0-1 0-1 0-1 0-1 0-1 0-1 0-1 0-1 0-1 0-1 0-1 0-1 0-1 0-1 0-1 0-1 0-1 .1-1 .1-1 0-1 .1-1 .2-1 .1-1 .4-1 .2-1 .2-1-.3-1 .2-1 .4-1 .6-1-.2-1 .3-1 1.4-1-.3-1-.7-1 .1-1 .7-1 .2-1 1.1-1-1-1 .7-1-.8-1-1-1 .7-1 .6-1 .6-1-1-1 1-1-.7-1-.6-1-.9-1 1-1-.3-1 .9-1 .8-1 1.2-1-1.2-1-.8-1-.1-1 1-1-.6-1 .3-1 1.2-1-.7-1-1.9-1-.1-1 0-1 1.5-1 .2-1-.8-1-.5-1 1-1-1.3-1 .1-1 .4-1 .7-1-.3-1 .4-1-1.3-1-.7-1-1.3-1-1.3-1 0-1 0-1 0-1 0-1 0-1 .1-1 .1-1 .1-1 .3-1 0-1 .1-1 .2-1 .3-1-.1-1-.1-1 .3-1 .5-1 .9-1-.4-1 .8-1-.1-1 .8-1-1-1 .2-1 2.1-1-1.1-1 .8-1-1.2-1 .5-1-.4-1 .1-1 1.7-1 .2-1 .5-1-1.2-1-.4-1-.9-1 .6-1 .3-1 .6-1-.7-1 1.1-1-1-1 .4-1-1.1-1 0-1 .2-1 0-1-.2-1 .9-1-1.1-1-1-1 .1-1 .4-1-.2-1-1.5-1-1.5-1 0-1 0-1 0-1 0-1 0-1 0-1 0-1 0-1 0-1 0-1 0-1 0-1 0-1 0-1 0-1 0-1 0-1 0-1 .1-1 .1-1 0-1 .1-1 0-1 .2-1 .4-1 .2-1 0-1 .4-1 0-1-.4-1 .3-1 .2-1 .3-1 .8-1 .4-1 .2-1-.3-1-.1-1-.3-1 1.5-1-.4-1 1-1-.5-1-1.3-1 .8-1-.7-1 1.2-1-.4-1 1.2-1-.7-1 0-1 .8-1-1.2-1-.5-1 1.3-1-1.2-1 1.7-1 .4-1-.7-1-.6-1 .3-1-.1-1-.5-1 1.3-1-.8-1 .5-1-1.1-1 0-1 .7-1-.5-1 1.1-1-1.2-1 .4-1 .2-1-1.7-1-.5-1 .9-1 .9-1-.7-1 .1-1-.2-1-1.6-1-1.8-1 0-1 0-1 0-1 0-1 .1-1 .1-1 0-1 .1-1 0-1 .4-1 .1-1 .2-1 .4-1-.1-1 .3-1 .4-1 .2-1 .4-1 .3-1 .6-1 .4-1 .6-1-.6-1-.7-1 .4-1 1.1-1 .6-1-.8-1 .4-1-.6-1-.6-1-.3-1 1.5-1-.2-1 .7-1 .4-1-1.4-1-.6-1 .4-1-.2-1 .2-1 1.9-1-.7-1 .4-1-1.3-1 0-1-.3-1 .3-1 .1-1 1.7-1 0-1-2.1-1 .4-1-2.1-1 0-1-.8-1-1.7-1 0-1 0-1 0-1 0-1 0-1 0-1 0-1 0-1 0-1 0-1 0-1 0-1 0-1 0-1 0-1 0-1 0-1 0-1 .1-1 .1-1 .1-1 .2-1 0-1 .2-1-.1-1 .2-1 .3-1 .6-1 .4-1-.1-1-.4-1 .3-1-.6-1 .3-1 1-1 0-1 .3-1 .9-1 .2-1-.4-1-.4-1 1.1-1 .6-1 .4-1-.8-1 .4-1-.6-1-.1-1-.8-1 1.9-1-.7-1-.3-1 .8-1-1.6-1 .2-1 1.3-1 .5-1-.9-1 1.3-1 .2-1-1.3-1 .1-1-1.4-1 .7-1-.1-1 .9-1-.2-1-.8-1 .6-1-1-1-.6-1 1.5-1-.6-1 2-1-.3-1-1.3-1-.7-1-.5-1 .7-1 .6-1-.4-1 .5-1-2.8-1-1.7-1 0-1 0-1 0-1 0-1 .1-1 .1-1 .1-1 .1-1 .3-1 .1-1 .2-1 .4-1 .4-1 .3-1-.5-1 .2-1 .1-1-.1-1 1-1 1-1 .1-1-.3-1 1.2-1-1.3-1-.4-1-.3-1 1.9-1-.3-1 1-1-1.3-1-.5-1-.1-1 .1-1 1.4-1 .1-1 1.2-1-1-1 .1-1-1.1-1 .1-1-1.1-1 2.1-1-1-1 .2-1-.4-1 .9-1-1.4-1-.3-1 .5-1 .2-1 .2-1 .7-1 0-1-1.3-1-1.1-1-1.6-1-1-1 0-1 0-1 0-1 0-1 0-1 0-1 0-1 0-1 0-1 0-1 0-1 0-1 0-1 0-1 0-1 0-1 0-1 0-1 0-1 0-1 0-1 0-1 .1-1 .1-1 .1-1 .1-1 0-1 .2-1 .2-1 .2-1 .2-1 .1-1 .2-1 .1-1 .9-1 .7-1 .1-1-.4-1 .8-1-.8-1 .7-1 .1-1 0-1 .5-1-.6-1 .4-1 .2-1-.1-1-1.1-1 .4-1 1.2-1 .3-1-1.8-1 .7-1 .1-1 .1-1 .2-1 1.3-1 0-1 .5-1-2.4-1 .4-1-.6-1 1-1-.2-1 .9-1-1.2-1 2-1-1.5-1 .3-1-.2-1 .5-1-1.4-1 1.9-1-.7-1-.6-1-.1-1-.5-1 .2-1 .2-1-.1-1-2.4-1-1.5-1 0-1 0-1 0-1 0-1 .1-1 .1-1 .2-1 .2-1 .2-1 .1-1-.1-1 .4-1-.2-1 .6-1 .5-1 .6-1 .4-1-.2-1-.4-1 .5-1 .3-1 1.5-1-.3-1 .5-1 .1-1 .2-1-1.3-1-1.4-1 1.8-1-.5-1 .8-1 1.1-1-1.1-1 .2-1-.9-1-.7-1 1.1-1-.6-1 1.7-1-.4-1-.4-1-.6-1-1.1-1 .6-1 .2-1 1-1-.5-1 .9-1-.6-1-.9-1 .3-1 .8-1 1.2-1-.2-1-.8-1-2.1-1-1.5-1-1.4-1 0-1 0-1 0-1 0-1 0-1 0-1 0-1 0-1 0-1 0-1 0-1 0-1 0-1 0-1 0-1 0-1 0-1 0-1 0-1 0-1 0-1 0-1 0-1 0-1 0-1 0-1 0-1 0-1 0-1 0-1 0-1 .1-1 .1-1 .2-1 .1-1 .1-1 .3-1 .3-1 0-1 .6-1-.4-1 .3-1-.4-1 1.2-1 .2-1 .7-1 .3-1-.1-1 .3-1-.8-1 .1-1 .8-1-.5-1 1.4-1 0-1-1.1-1-.6-1 .9-1-.6-1 .6-1-.2-1 1.3-1-.5-1-.3-1-.9-1 .4-1 .8-1-.8-1 0-1 .9-1 1.1-1-.8-1-1.5-1 .7-1-1.2-1 0-1 .2-1 .9-1 .3-1-.8-1-.4-1-.2-1-1.4-1-1.7-1 0-1 0-1 0-1 0-1 0-1 .2-1 .1-1 .1-1 .2-1-.1-1 .2-1 0-1 .5-1 .2-1 .4-1 .5-1 .4-1-.1-1 .2-1-.4-1 1.6-1 0-1 1-1-.8-1-.6-1-.3-1-.2-1 .3-1 .3-1 1.4-1 .9-1-.3-1-.4-1-1.1-1 .5-1 1.4-1-.9-1-.3-1-.3-1-.6-1 .5-1-1.6-1 .2-1 .7-1 .6-1 .1-1-.2-1-.3-1-.7-1 1.1-1 .1-1-.5-1 .9-1-1.4-1-1.8-1-1.7-1 0-1 0-1 0-1 0-1 0-1 0-1 0-1 0-1 0-1 0-1 0-1 0-1 0-1 0-1 0-1 0-1 0-1 0-1 0-1 .1-1 0-1 .1-1 .1-1 .3-1 .2-1 .1-1 .1-1 .3-1-.4-1 .3-1 .5-1 .6-1 .3-1-.5-1 .1-1 .2-1-.1-1 1.5-1 .1-1 1.3-1 .6-1-1.1-1-.7-1-1-1 .8-1 .2-1 .5-1 .7-1-.3-1-.3-1 .1-1-1.1-1 .4-1 .2-1 .3-1-.2-1-.4-1 .6-1-1-1 .9-1-.2-1 1.6-1-.5-1 .4-1-1.3-1-1-1 .1-1 0-1 1.7-1 0-1-.5-1 .5-1-1.1-1-1.4-1-.3-1 1.5-1 .4-1 .7-1-.3-1-.1-1-.6-1-.7-1-1.4-1-1.9-1 0-1 0-1 0-1 0-1 0-1 0-1 0-1 .1-1 .1-1 .2-1 .2-1 .1-1 .1-1 .1-1 .1-1 .7-1 .3-1-.2-1 .9-1-.2-1 0-1-.2-1 1.4-1 .3-1-1-1 1-1 .2-1-1-1 .2-1 .3-1 1.8-1-.9-1-.9-1 0-1 1.4-1-.5-1-.9-1 .8-1 1-1-.9-1 1.1-1-1.3-1 .2-1-.1-1 .1-1 .1-1-.3-1 .5-1-.8-1-1.1-1-.3-1 .2-1 .7-1 1.3-1-1.4-1-2-1-1.5-1 0-1 0-1 0-1 0-1 0-1 0-1 0-1 0-1 0-1 0-1 0-1 0-1 0-1 .1-1 .1-1 .2-1 .1-1 .2-1 .4-1 .5-1-.1-1 .7-1-.3-1-.1-1 .7-1 .3-1 .8-1 .9-1-.6-1-.2-1-.6-1 .2-1 .1-1 .3-1 .8-1-1-1-.3-1 .4-1-.4-1 .3-1 .6-1-.9-1 .7-1 .6-1 0-1-1-1-1.3z" fill="url(#g31)" stroke="#1c6c5c" stroke-width="0.6" stroke-linejoin="round"/></g><g transform="translate(166.2,677.2)"><path d="M102,-1l1-.7 1-.3 1-.1 1 .1 1-.2 1 .3 1 .4 1 0 1-.6 1-.2 1 .5 1 .2 1 .1 1 .2 1-.8 1 .3 1-.1 1-.4 1-.1 1 .5 1 .1 1 .4 1 0 1 0 1 .1 1 .3 1 .2 1 .1 1 .2 1 0 1 .1 1 0 1 .1 1 0 1 0 1 0 1 0 1 0 1 0 1 0 1 0 1 0 1 0 1 0 1 0 1 0 1 0 1-.8 1-.3 1-.7 1 0 1 .7 1-.5 1-.5 1 .1 1 .4 1 0 1-.1 1 .3 1 .1 1 .1 1-.6 1-.1 1-.3 1 .2 1 .1 1 .2 1 .4 1-.7 1 .3 1-.2 1-.3 1 .6 1-.1 1 .4 1-.3 1 .1 1 .1 1 .1 1 .3 1 .1 1 .2 1-.1 1-.3 1 .4 1-.2 1 .3 1-.1 1 .3 1-.1 1 .1 1 0 1 .1 1 .1 1 .1 1 .1 1 0 1 0 1 0 1 0 1 0 1 0 1 0 1 0 1-.5 1-.4 1-.5 1-.5 1-.2 1-.2 1 .6 1 .3 1-.2 1-.1 1-.4 1 .2 1-.3 1 .4 1-.5 1 .6 1 .1 1-.4 1 .1 1-.3 1 .2 1-.3 1 .2 1 .3 1 .3 1-.7 1 .3 1 .3 1 0 1-.1 1 .1 1 .4 1-.2 1-.5 1-.5 1 .7 1-.2 1 0 1 .4 1 0 1 .1 1-.1 1-.3 1 0 1 .6 1 .3 1 .2 1-.1 1-.4 1 0 1 .3 1-.1 1 .4 1 .1 1 0 1 0 1 0 1 .2 1 0 1 .1 1 0 1 .1 1 0 1 .1 1 0 1 0 1 0 1 0 1 0 1 0 1 0 1 0 1 0 1 0 1 0 1 0 1 0 1 0 1 0 1 0 1 0 1 0 1 0 1 0 1-.7 1-.7 1 .1 1-.1 1-.5 1 .6 1-.2 1-.2 1-.1 1 .1 1-.5 1 .2 1 .1 1 .3 1 .1 1-.8 1 .1 1 .1 1-.2 1 .9 1-.2 1-.1 1 0 1-.4 1-.4 1 .1 1 .3 1 .2 1 .4 1-.3 1 .3 1-.1 1 .4 1-.7 1 .3 1 .6 1 0 1 0 1 .2 1-.1 1 0 1 .2 1 .2 1 .2 1 0 1-.1 1 .1 1 .1 1 .1 1 .1 1 0 1 0 1 0 1 0 1 0 1 0 1-.7 1-.5 1-.1 1-.2 1 0 1-.5 1-.1 1-.1 1 .2 1-.1 1 .5 1-.3 1-.1 1-.8 1 .7 1-.1 1 .3 1 .3 1 .1 1-.5 1 .1 1 .4 1-.6 1 0 1 .6 1 .3 1-.5 1-.5 1 .4 1-.2 1 0 1 .4 1 .2 1 .2 1 0 1-.3 1-.4 1 .2 1 .7 1 0 1 .1 1 .2 1 .1 1-.1 1 .3 1-.1 1 .2 1 .1 1 0 1 0 1 .1 1 .1 1 0 1 0 1 0 1 0 1 0 1 0 1 0 1 0 1 0 1 0 1 0 1 0 1 0 1 0 1 0 1 0 1 0 1 0 1 0 1 0 1 0 1 0 1 0 1 0 1 0 1 0 1 0 1 0 1 0 1 0 1 0 1 0 1-.5 1-.6 1 .1 1-.3 1-.2 1-.4 1 .4 1 0 1-.2 1-.4 1 .3 1 0 1 .1 1-.2 1 .5 1-.4 1-.3 1 0 1-.3 1 .4 1 0 1 .2 1 .5 1-.4 1-.1 1-.1 1 .2 1 .1 1 .1 1 .1 1 0 1 .1 1-.7 1 .2 1-.2 1 .2 1 .3 1 .5 1-.1 1 .1 1-.1 1 .1 1 .2 1 0 1 .2 1 .2 1 0 1 .1 1 0 1 .1 1 .1 1 0 1 .1 1 0 1 0 1 0 1 0 1 0 1-.8 1-.8 1 .2 1 .2 1-.3 1-.4 1-.1 1-.6 1 .8 1 .2 1 .5 1 0 1-.4 1-.5 1-.2 1-.3 1-.2 1 .9 1 .2 1 .3 1-.3 1-.5 1-.3 1 .2 1-.2 1 .7 1 .5 1 .1 1-.8 1 0 1-.4 1 .3 1 .6 1-.3 1 .4 1-.4 1-.1 1 .3 1 0 1-.1 1 .2 1 .2 1 0 1 0 1-.2 1 .1 1 .3 1 .2 1 .2 1-.1 1 .1 1 0 1 .1 1 0 1 .2 1 .1 1 0 1 .1 1 0 1 .1 1 0 1 0 1 0 1 0 1 0 1 0 1 0 1 0 1 0 1 0 1 0 1 0 1 0 1 0 1 0 1 0 1 0 1 0 1 0 1 0 1 0 1 0 1 0 1-.5 1-.6 1-.2 1-.6 1-.2 1 .4 1-.3 1 0 1 .5 1-.4 1-.2 1-.1 1 .3 1-.3 1 .1 1 .9 1-.1 1 0 1-.7 1-.3 1 0 1 .3 1 .3 1 .1 1-.3 1 .1 1-.2 1-.1 1-.1 1 .6 1 .2 1 .3 1 0 1-.5 1 0 1 .2 1 0 1 0 1 .5 1-.2 1-.1 1 .3 1 0 1 .2 1 .2 1 .2 1-.1 1 .1 1 .1 1 .1 1 0 1 0 1 .1 1 0 1 0 1 0 1 0 1-.8 1-.8 1-.1 1-.2 1 .1 1 .3 1-.1 1-.1 1-.1 1 .3 1-.2 1-.1 1 .3 1 .2 1-.7 1-.1 1-.2 1 .6 1 .5 1-.3 1 .1 1 0 1-.3 1-.2 1-.1 1 0 1 .4 1-.1 1 .1 1-.1 1-.5 1 .4 1 .2 1 .1 1-.2 1 .6 1-.3 1-.1 1 .2 1-.7 1 0 1 .5 1 0 1 .2 1-.2 1-.3 1 .2 1 .4 1 .2 1 .3 1 0 1-.1 1 0 1 0 1 .2 1-.1 1 .2 1 .2 1 0 1 0 1 .1 1 0 1 .1 1 0 1 .1 1 0 1 0 1 0 1 0 1 0 1 0 1 0 1 0 1 0 1 0 1 0 1 0 1 0 1 0 1 0 1 0 1 0 1 0 1 0 1-.5 1-.7 1-.1 1-.6 1 .2 1-.5 1 .3 1 0 1 0 1 .5 1 .1 1-.8 1 .2 1 .2 1-.6 1 .4 1 0 1 .7 1-.2 1-.3 1-.5 1 .6 1 .2 1 .3 1-.3 1 .1 1-.7 1 .2 1-.4 1 .2 1 .1 1 .6 1 .1 1-.2 1 .3 1 0 1-.2 1 .2 1 .2 1 .2 1-.1 1 .2 1 0 1 0 1 .1 1 .1 1 .1 1 .1 1 0 1 .1 1 0 1 .1 1 0 1 0 1 0 1 0 1 0 1-.5 1-1.1 1-.1 1-.4 1 .1 1 .2 1 .3 1-.1 1-.1 1 .2 1-.7 1 .6 1-.2 1 .5 1-.3 1-.1 1-.1 1 0 1 .2 1-.1 1 .7 1-.5 1-.1 1-.2 1-.6 1 .5 1-.2 1 .4 1 .3 1 .2 1-.5 1-.3 1 .5 1-.9 1 .3 1 .5 1 .3 1-.5 1 .3 1-.1 1-.3 1 0 1 .4 1 .1 1 .3 1 0 1-.3 1 .2 1 0 1 .1 1 .2 1 .1 1 .2 1-.1 1 .2 1 0 1 .1 1 .1 1 .1 1 .1 1 0 1 0 1 0 1 .1 1 0 1 0 1 0 1 0 1 0 1 0 1 0 1 0 1 0 1 0 1 0 1 0 1 0 1 0 1 0 1 0 1 0 1 0 1 0 1-.8 1-1 1 .1 1 .5 1-.2 1 .1 1-.8 1-.3 1 0 1 .4 1 .4 1 .4 1-.5 1 .3 1-.6 1-.5 1 .6 1 .3 1 0 1-.5 1 0 1 .5 1-.8 1 0 1 .6 1 .3 1 .2 1-.6 1 .4 1-.9 1 .2 1 .7 1-.2 1 .2 1 .1 1-.1 1-.1 1 .3 1 .1 1 .3 1 .4 1 0 1-.2 1 .1 1 .1 1 .1 1 .1 1 .1 1 0 1 .1 1 0 1 .1 1 0 1 0 1 0 1 0 1 0 1-.6 1-.3 1-.5 1-.3 1-.1 1-.2 1 .2 1 .2 1 .3 1-.4 1-.4 1 .2 1-.1 1-.2 1-.1 1 .7 1 0 1-.3 1-.5 1-.1 1 .6 1 .3 1 .1 1 .3 1-.2 1-.3 1-.7 1 .6 1-.2 1 .5 1 .2 1 .2 1-.4 1-.6 1 .4 1 0 1 0 1 0 1-.1 1-.1 1-.1 1 .3 1 .2 1 0 1 .4 1 .1 1-.2 1 0 1 .2 1-.1 1 .2 1 .2 1 .1 1 .2 1-.1 1 0 1 0 1 .1 1 .1 1 .1 1 .1 1 0 1 0 1 .1 1 0 1 0 1 0 1 0 1 0 1 0 1 0 1 0 1 0 1 0 1 0 1 0 1 0 1 0 1 0 1 0 1 0 1 0 1 0 1-.8 1-.3 1-.3 1 0 1 .5 1-.4 1-.1 1-.8 1 .1 1-.3 1 .3 1 .3 1 .2 1-.6 1 .5 1 .1 1-.1 1-.5 1.4 .6 0 3.8-1.4 .7-1-.1-1-.3-1-.3-1-.3-1 .2-1 .3-1 .3-1-.2-1 .4-1-.2-1-.1-1-.1-1 0-1-.3-1 .1-1 0-1-.8-1-.9-1 0-1 0-1 0-1 0-1 0-1 0-1 0-1 0-1 0-1 0-1 0-1 0-1 0-1 0-1 0-1 0-1 0-1 0-1 0-1 .1-1 0-1 0-1 .1-1 .1-1 .1-1 0-1 .1-1-.1-1 .1-1 .1-1 .1-1 .2-1 .3-1-.1-1-.2-1-.1-1 .3-1-.2-1 .3-1 .7-1 .3-1-.6-1 .3-1-.7-1 0-1 .4-1-.1-1 .5-1 .3-1-.7-1 0-1-.6-1 .4-1 .2-1 0-1 .5-1-.4-1 .4-1-.8-1 .2-1 .4-1 0-1-.2-1 .7-1-.6-1 .1-1-.1-1 0-1 .2-1-.1-1-.1-1-.3-1 .3-1-.3-1-.4-1 .2-1 .3-1 0-1 .5-1-.5-1-.3-1-.8-1-.5-1 0-1 0-1 0-1 0-1 0-1 .1-1 0-1 0-1 .1-1 0-1 .2-1 .1-1 .1-1 0-1-.1-1 .4-1 .1-1 .1-1 0-1 .7-1-.2-1 0-1-.3-1 .3-1-.1-1 .2-1 .5-1-.4-1-.2-1 .1-1-.3-1 .3-1 .6-1 0-1 .3-1-.8-1 .2-1-.1-1 .2-1 .3-1-.3-1 .2-1 .2-1-.6-1-.3-1 .4-1-.1-1 0-1 .1-1 .1-1-.4-1-.2-1 .1-1-.3-1 .3-1-.7-1-.9-1 0-1 0-1 0-1 0-1 0-1 0-1 0-1 0-1 0-1 0-1 0-1 0-1 0-1 0-1 0-1 0-1 0-1 0-1 0-1 .1-1 0-1 0-1 0-1 .1-1 .1-1 .2-1-.1-1 .1-1 .1-1 .1-1-.1-1 .3-1 .2-1-.2-1 .1-1 .1-1 .2-1 0-1 .2-1-.1-1 .4-1 .2-1-.4-1-.2-1-.2-1 0-1-.2-1 .4-1 .3-1 .4-1-.1-1-.1-1-.2-1 .2-1 0-1 .2-1 .4-1-.3-1-.6-1-.3-1-.1-1 .1-1 .9-1-.2-1-.1-1-.4-1 .5-1-.7-1 .1-1 0-1 .8-1-.3-1-.2-1-.2-1-.3-1-.2-1 .3-1-.1-1 .5-1-.2-1 .2-1-1-1-.7-1 0-1 0-1 0-1 0-1 0-1 .1-1 0-1 0-1 .1-1 0-1 .1-1 .1-1 .2-1-.1-1 0-1 .2-1-.1-1 .5-1 .3-1 .3-1 .2-1 .2-1-.6-1-.2-1 .1-1 .7-1-.4-1-.1-1 .7-1-.6-1 0-1-.4-1 .3-1 .4-1 .2-1-.6-1 .5-1-.1-1-.6-1 .5-1 .1-1 .1-1-.2-1 .1-1 .2-1-.4-1 0-1 .1-1 0-1 .5-1-.5-1 .2-1-.7-1-.2-1 .2-1-.7-1-.7-1 0-1 0-1 0-1 0-1 0-1 0-1 0-1 0-1 0-1 0-1 0-1 0-1 0-1 0-1 0-1 0-1 0-1 0-1 0-1 .1-1 0-1 0-1 .1-1 0-1 .1-1 .1-1-.1-1 .2-1 0-1 .3-1-.2-1 .1-1 .1-1 .3-1 .2-1 0-1-.3-1 .4-1 .1-1-.1-1-.2-1 .2-1 .2-1 .7-1-.6-1 .1-1-.3-1-.2-1 .4-1 .3-1 .1-1-.1-1-.3-1 .3-1-.5-1 .3-1 .1-1-.1-1-.2-1 .2-1 .4-1-.6-1 .1-1-.2-1 .8-1-.5-1 .6-1-.9-1 .6-1-.9-1 .3-1-.1-1 .1-1 0-1 .1-1-.1-1 .3-1-.7-1 .3-1 .1-1 .4-1-.2-1-1.1-1-.6-1 0-1 0-1 0-1 0-1 .1-1 0-1 .1-1 0-1 .1-1 0-1 .1-1 .1-1 .2-1 .1-1 0-1 .1-1-.1-1 .2-1 .3-1-.1-1 .6-1-.2-1-.1-1 .2-1-.4-1 .4-1 0-1 .5-1 0-1-.1-1 .1-1-.3-1-.6-1 .3-1 .5-1 .5-1 0-1-.2-1-.8-1-.2-1 0-1 .6-1-.1-1 .4-1-.3-1-.1-1-.2-1-.4-1 0-1 .7-1-.2-1-.1-1 0-1-.3-1-.3-1-.5-1-.6-1 0-1 0-1 0-1 0-1 0-1 0-1 0-1 0-1 0-1 0-1 0-1 0-1 0-1 0-1 0-1 0-1 0-1 0-1 0-1 0-1 0-1 0-1 0-1 .1-1 0-1 0-1 .1-1 .1-1 .1-1 .1-1-.1-1 .2-1 0-1 0-1 .3-1 0-1 .1-1 .1-1-.2-1 .3-1 .3-1 0-1 .5-1-.1-1 .1-1-.3-1 .1-1-.3-1-.2-1 .6-1-.3-1 .6-1-.6-1-.2-1-.1-1 .1-1 .3-1 .5-1-.1-1 0-1 0-1-.5-1 .2-1 .1-1 .6-1-.6-1 .2-1 .6-1-.9-1 0-1-.1-1-.1-1 .7-1 .3-1-.8-1 .1-1-.5-1-.2-1 .3-1-.1-1-.1-1-.6-1-.7-1 0-1 0-1 0-1 0-1 0-1 .1-1 .1-1 .1-1 0-1 .2-1-.1-1 .1-1-.1-1 .4-1 .2-1-.1-1 .1-1 .2-1-.3-1 .2-1 .2-1 .5-1-.2-1-.1-1 .4-1-.1-1-.5-1 .4-1-.2-1 .3-1-.2-1 0-1 0-1 0-1 0-1 0-1 .5-1-.5-1 .4-1-.1-1 .1-1-.3-1-.6-1 .4-1 .4-1-.3-1-.1-1 .5-1-.6-1-.2-1 .5-1 .5-1-.4-1-.1-1-.1-1-.5-1-.5-1-.6-1 0-1 0-1 0-1 0-1 0-1 0-1 0-1 0-1 0-1 0-1 0-1 0-1 0-1 0-1 0-1 0-1 0-1 0-1 0-1 0-1 0-1 0-1 0-1 0-1 0-1 0-1 0-1 0-1 0-1 0-1 0-1 .1-1 0-1 0-1 .1-1 .1-1 .1-1 .1-1 .2-1 .1-1 .1-1-.2-1 0-1 .4-1-.2-1 .2-1 .4-1 .2-1-.1-1 0-1 0-1 0-1 .3-1 .3-1-.4-1 .1-1-.3-1-.3-1 .6-1 .1-1 .2-1-.4-1 .1-1 .4-1-.6-1 0-1 .6-1-.3-1 .1-1 .2-1-.4-1 0-1-.7-1 .4-1-.2-1 .5-1-.4-1 .3-1-.1-1-.4-1 .1-1-.1-1-.6-1-.7-1 0-1 0-1 0-1 0-1 0-1 0-1 .1-1 0-1 .1-1 .1-1 .1-1 0-1 .1-1 .2-1 .3-1 .2-1-.2-1 0-1 .1-1 .1-1 .1-1 .2-1 .6-1-.3-1-.4-1-.2-1 .1-1 .7-1-.3-1 .8-1-.2-1-.8-1-.1-1 .2-1-.3-1 .7-1-.1-1-.2-1-.2-1 .3-1 .2-1-.1-1 .1-1-.3-1 .4-1 .5-1-.1-1-.3-1-.7-1-.1-1 .4-1-.5-1 .5-1-.1-1-1-1-.7-1 0-1 0-1 0-1 0-1 0-1 0-1 0-1 0-1 0-1 0-1 0-1 0-1 0-1 0-1 0-1 0-1 0-1 0-1 0-1 0-1 .1-1 0-1 0-1 .1-1 0-1 .2-1 0-1 0-1 .1-1 0-1 0-1 .2-1 .2-1 .4-1-.3-1 .2-1-.1-1 .3-1-.1-1 .1-1 0-1 .2-1 0-1-.5-1 .4-1 .2-1-.1-1-.2-1 .6-1-.2-1-.4-1-.3-1 .3-1 .4-1 .4-1-.2-1-.2-1-.1-1-.4-1-.2-1 .5-1 .1-1 0-1 .3-1 .2-1-.9-1 0-1 .3-1 .7-1 .1-1-.3-1 0-1-.5-1-.3-1-.1-1 .5-1 .1-1 .3-1-.5-1 .2-1-.1-1-.4-1-.6-1-.7-1 0-1 0-1 0-1 0-1 0-1 0-1 0-1 .1-1 0-1 .1-1 .1-1 0-1 .1-1 0-1 .2-1-.1-1 .5-1-.2-1 .2-1-.1-1 .1-1-.2-1 .8-1 .2-1-.2-1 .3-1 .3-1-.6-1 .1-1 0-1-.1-1 .4-1 .2-1-.4-1 0-1-.4-1 0-1 .2-1 .6-1 .4-1-.3-1-.5-1-.1-1-.4-1 .4-1 0-1-.1-1 .6-1 0-1-.4-1 0-1-.4-1 0-1 0-1-.1-1-.6-1-.7-1 0-1 0-1 0-1 0-1 0-1 0-1 0-1 0-1 0-1 0-1 0-1 0-1 0-1 0-1 .1-1 .1-1 0-1 .2-1 .1-1 .3-1 .2-1 .1-1-.2-1-.1-1 .1-1 .1-1 .3-1 0-1 .5-1-.1-1-.3-1 .4-1-.5-1 .6-1 0-1 .3-1-.5-1 .2-1-.2-1-.4-1 .4-1-.3-1 .3-1 .1-1-.2-1-.5-1-.5z" fill="#22dcf4" stroke="#1c7c94" stroke-width="0.5" stroke-linejoin="round"/></g><rect x="433" y="505" width="5.6" height="189" fill="url(#gc)"/><rect x="438.4" y="505" width="2" height="189" fill="#24ec44"/><rect x="818.8" y="507" width="1.6" height="187" fill="#d4141c"/><rect x="817.6" y="507" width="1.2" height="187" fill="#d4141c" opacity="0.3"/><circle cx="819.6" cy="507.4" r="2.6" fill="#3cd83c" stroke="#1c5c1c" stroke-width="0.6"/><text x="644.2" y="531.4" font-size="7.6" fill="#ffffff" stroke="#ffffff" stroke-width="0.3" letter-spacing="0.05">Prechorus Lead</text><text x="648.6" y="575.6" font-size="7.6" fill="#ffffff" stroke="#ffffff" stroke-width="0.3" letter-spacing="0.05">Analog Brass</text><text x="653.6" y="619.6" font-size="7.6" fill="#ffffff" stroke="#ffffff" stroke-width="0.3" letter-spacing="0.05">Verve new</text><text x="649.2" y="663.6" font-size="7.6" fill="#ffffff" stroke="#ffffff" stroke-width="0.3" letter-spacing="0.05">Spacey Lead</text></g><rect x="163.6" y="484.5" width="2.6" height="210" fill="#0a0a0a"/></svg>
<div style="left:0px;top:504.4px;width:166px;height:189.6px;overflow:hidden;"><div style="left:0;top:-504.4px;width:166px;height:754px"><div style="left:33px;top:503.6px;width:13.7px;height:28.4px;background:#c8c814;"></div><svg style="left:35.6px;top:506px;" width="9" height="10" viewBox="0 0 9 10"><path d="M2 4.4V2.6C2 0.6 5.6 0.4 6 2.4" fill="none" stroke="#6c6c10" stroke-width="1.1"/><rect x="0.8" y="4.4" width="7" height="4.8" rx="0.6" fill="#6c6c10"/><rect x="3.6" y="5.8" width="1.4" height="1.8" fill="#c8c814"/></svg><div style="left:50px;top:508px;width:46.2px;height:11.6px;background:#575757;border-radius:1px;"></div><div class="t" style="left:57.4px;top:508.75px;height:10.5px;line-height:10.5px;font-size:8.5px;color:#fafafa;font-weight:bold;transform:scaleX(1.017);transform-origin:0 50%;">M</div><div class="t" style="left:82.1px;top:508.75px;height:10.5px;line-height:10.5px;font-size:8.5px;color:#fafafa;font-weight:bold;transform:scaleX(1.023);transform-origin:0 50%;">S</div><div style="left:108px;top:508px;width:13.8px;height:11.6px;background:#575757;border-radius:1px;"></div><svg style="left:108px;top:508px;" width="13.8" height="11.6" viewBox="0 0 13.8 11.6"><path d="M1.4 5.8h2.8M9.6 5.8h2.8" stroke="#f8f8f8" stroke-width="1.3"/><rect x="4.4" y="3.8" width="5" height="4" fill="none" stroke="#f8f8f8" stroke-width="1.2"/></svg><div class="t" style="left:144.2px;top:509px;height:8.8px;line-height:8.8px;font-size:6.8px;color:#e0e0e0;transform:scaleX(0.874);transform-origin:0 50%;">−22 dB</div><div style="left:137.2px;top:528.3px;width:2.1px;height:6.5px;background:#1cb4ec;"></div><div style="left:140.2px;top:528.3px;width:2.1px;height:6.5px;background:#1cb4ec;"></div><div style="left:33px;top:535px;width:13.7px;height:12.8px;background:#a8d4ec;"></div><svg style="left:33px;top:534.4px;" width="13.7" height="13.4" viewBox="0 0 13.7 13.4"><circle cx="5" cy="6.7" r="3.2" fill="none" stroke="#1c3c54" stroke-width="0.9"/><circle cx="8.7" cy="6.7" r="3.2" fill="none" stroke="#1c3c54" stroke-width="0.9"/></svg><div style="left:46.7px;top:535px;width:84.3px;height:12.8px;background:#5e5e5e;"></div><div class="t" style="left:49.4px;top:536.3px;height:10px;line-height:10px;font-size:8px;color:#f4f4f4;font-weight:bold;transform:scaleX(0.950);transform-origin:0 50%;">Analog Brass</div><div class="t" style="left:132.4px;top:536.05px;height:10.5px;line-height:10.5px;font-size:8.5px;color:#f0f0f0;font-weight:bold;transform:scaleX(1.015);transform-origin:0 50%;">37</div><div style="left:143px;top:532.2px;width:20.6px;height:2.4px;background:#3a3a3a;"></div><div style="left:33px;top:547.8px;width:13.7px;height:28.4px;background:#0a50c4;"></div><svg style="left:35.6px;top:550.2px;" width="9" height="10" viewBox="0 0 9 10"><path d="M2 4.4V2.6C2 0.6 5.6 0.4 6 2.4" fill="none" stroke="#f4f4f4" stroke-width="1.1"/><rect x="0.8" y="4.4" width="7" height="4.8" rx="0.6" fill="#f4f4f4"/><rect x="3.6" y="5.8" width="1.4" height="1.8" fill="#0a50c4"/></svg><div style="left:50px;top:552.2px;width:46.2px;height:11.6px;background:#575757;border-radius:1px;"></div><div class="t" style="left:57.4px;top:552.95px;height:10.5px;line-height:10.5px;font-size:8.5px;color:#fafafa;font-weight:bold;transform:scaleX(1.017);transform-origin:0 50%;">M</div><div class="t" style="left:82.1px;top:552.95px;height:10.5px;line-height:10.5px;font-size:8.5px;color:#fafafa;font-weight:bold;transform:scaleX(1.023);transform-origin:0 50%;">S</div><div style="left:108px;top:552.2px;width:13.8px;height:11.6px;background:#575757;border-radius:1px;"></div><svg style="left:108px;top:552.2px;" width="13.8" height="11.6" viewBox="0 0 13.8 11.6"><path d="M1.4 5.8h2.8M9.6 5.8h2.8" stroke="#f8f8f8" stroke-width="1.3"/><rect x="4.4" y="3.8" width="5" height="4" fill="none" stroke="#f8f8f8" stroke-width="1.2"/></svg><div class="t" style="left:144.2px;top:553.2px;height:8.8px;line-height:8.8px;font-size:6.8px;color:#e0e0e0;transform:scaleX(0.874);transform-origin:0 50%;">−22 dB</div><div style="left:137.2px;top:567.3px;width:2.1px;height:11.7px;background:#1cb4ec;"></div><div style="left:140.2px;top:567.3px;width:2.1px;height:11.7px;background:#1cb4ec;"></div><div style="left:33px;top:579.2px;width:13.7px;height:12.8px;background:#a8d4ec;"></div><svg style="left:33px;top:578.6px;" width="13.7" height="13.4" viewBox="0 0 13.7 13.4"><circle cx="5" cy="6.7" r="3.2" fill="none" stroke="#1c3c54" stroke-width="0.9"/><circle cx="8.7" cy="6.7" r="3.2" fill="none" stroke="#1c3c54" stroke-width="0.9"/></svg><div style="left:46.7px;top:579.2px;width:84.3px;height:12.8px;background:#5e5e5e;"></div><div class="t" style="left:49.4px;top:580.5px;height:10px;line-height:10px;font-size:8px;color:#f4f4f4;font-weight:bold;transform:scaleX(0.997);transform-origin:0 50%;">Verve new</div><div class="t" style="left:132.4px;top:580.25px;height:10.5px;line-height:10.5px;font-size:8.5px;color:#f0f0f0;font-weight:bold;transform:scaleX(1.015);transform-origin:0 50%;">38</div><div style="left:143px;top:576.4px;width:20.6px;height:2.4px;background:#3a3a3a;"></div><div style="left:33px;top:592px;width:13.7px;height:28.4px;background:#f8f4a0;"></div><svg style="left:35.6px;top:594.4px;" width="9" height="10" viewBox="0 0 9 10"><path d="M2 4.4V2.6C2 0.6 5.6 0.4 6 2.4" fill="none" stroke="#6c6c3c" stroke-width="1.1"/><rect x="0.8" y="4.4" width="7" height="4.8" rx="0.6" fill="#6c6c3c"/><rect x="3.6" y="5.8" width="1.4" height="1.8" fill="#f8f4a0"/></svg><div style="left:50px;top:596.4px;width:46.2px;height:11.6px;background:#575757;border-radius:1px;"></div><div class="t" style="left:57.4px;top:597.15px;height:10.5px;line-height:10.5px;font-size:8.5px;color:#fafafa;font-weight:bold;transform:scaleX(1.017);transform-origin:0 50%;">M</div><div class="t" style="left:82.1px;top:597.15px;height:10.5px;line-height:10.5px;font-size:8.5px;color:#fafafa;font-weight:bold;transform:scaleX(1.023);transform-origin:0 50%;">S</div><div style="left:108px;top:596.4px;width:13.8px;height:11.6px;background:#575757;border-radius:1px;"></div><svg style="left:108px;top:596.4px;" width="13.8" height="11.6" viewBox="0 0 13.8 11.6"><path d="M1.4 5.8h2.8M9.6 5.8h2.8" stroke="#f8f8f8" stroke-width="1.3"/><rect x="4.4" y="3.8" width="5" height="4" fill="none" stroke="#f8f8f8" stroke-width="1.2"/></svg><div class="t" style="left:144.2px;top:597.4px;height:8.8px;line-height:8.8px;font-size:6.8px;color:#e0e0e0;transform:scaleX(0.874);transform-origin:0 50%;">−22 dB</div><div style="left:137.2px;top:616.4px;width:2.1px;height:6.8px;background:#1cb4ec;"></div><div style="left:140.2px;top:616.4px;width:2.1px;height:6.8px;background:#1cb4ec;"></div><div style="left:33px;top:623.4px;width:13.7px;height:12.8px;background:#a8d4ec;"></div><svg style="left:33px;top:622.8px;" width="13.7" height="13.4" viewBox="0 0 13.7 13.4"><circle cx="5" cy="6.7" r="3.2" fill="none" stroke="#1c3c54" stroke-width="0.9"/><circle cx="8.7" cy="6.7" r="3.2" fill="none" stroke="#1c3c54" stroke-width="0.9"/></svg><div style="left:46.7px;top:623.4px;width:84.3px;height:12.8px;background:#5e5e5e;"></div><div class="t" style="left:49.4px;top:624.7px;height:10px;line-height:10px;font-size:8px;color:#f4f4f4;font-weight:bold;transform:scaleX(0.941);transform-origin:0 50%;">Spacey Lead</div><div class="t" style="left:132.4px;top:624.45px;height:10.5px;line-height:10.5px;font-size:8.5px;color:#f0f0f0;font-weight:bold;transform:scaleX(1.015);transform-origin:0 50%;">39</div><div style="left:143px;top:620.6px;width:20.6px;height:2.4px;background:#3a3a3a;"></div><div style="left:33px;top:636.2px;width:13.7px;height:28.4px;background:#f01030;"></div><svg style="left:35.6px;top:638.6px;" width="9" height="10" viewBox="0 0 9 10"><path d="M2 4.4V2.6C2 0.6 5.6 0.4 6 2.4" fill="none" stroke="#f4f4f4" stroke-width="1.1"/><rect x="0.8" y="4.4" width="7" height="4.8" rx="0.6" fill="#f4f4f4"/><rect x="3.6" y="5.8" width="1.4" height="1.8" fill="#f01030"/></svg><div style="left:50px;top:640.6px;width:46.2px;height:11.6px;background:#575757;border-radius:1px;"></div><div class="t" style="left:57.4px;top:641.35px;height:10.5px;line-height:10.5px;font-size:8.5px;color:#fafafa;font-weight:bold;transform:scaleX(1.017);transform-origin:0 50%;">M</div><div class="t" style="left:82.1px;top:641.35px;height:10.5px;line-height:10.5px;font-size:8.5px;color:#fafafa;font-weight:bold;transform:scaleX(1.023);transform-origin:0 50%;">S</div><div style="left:108px;top:640.6px;width:13.8px;height:11.6px;background:#575757;border-radius:1px;"></div><svg style="left:108px;top:640.6px;" width="13.8" height="11.6" viewBox="0 0 13.8 11.6"><path d="M1.4 5.8h2.8M9.6 5.8h2.8" stroke="#f8f8f8" stroke-width="1.3"/><rect x="4.4" y="3.8" width="5" height="4" fill="none" stroke="#f8f8f8" stroke-width="1.2"/></svg><div class="t" style="left:144.2px;top:641.6px;height:8.8px;line-height:8.8px;font-size:6.8px;color:#e0e0e0;transform:scaleX(0.874);transform-origin:0 50%;">−22 dB</div><div style="left:137.2px;top:664.1px;width:2.1px;height:3.3px;background:#1cb4ec;"></div><div style="left:140.2px;top:664.1px;width:2.1px;height:3.3px;background:#1cb4ec;"></div><div style="left:33px;top:667.6px;width:13.7px;height:12.8px;background:#a8d4ec;"></div><svg style="left:33px;top:667px;" width="13.7" height="13.4" viewBox="0 0 13.7 13.4"><circle cx="5" cy="6.7" r="3.2" fill="none" stroke="#1c3c54" stroke-width="0.9"/><circle cx="8.7" cy="6.7" r="3.2" fill="none" stroke="#1c3c54" stroke-width="0.9"/></svg><div style="left:46.7px;top:667.6px;width:84.3px;height:12.8px;background:#5e5e5e;"></div><div class="t" style="left:49.4px;top:668.9px;height:10px;line-height:10px;font-size:8px;color:#f4f4f4;font-weight:bold;transform:scaleX(0.958);transform-origin:0 50%;">Spacey Lead Left</div><div class="t" style="left:132.4px;top:668.65px;height:10.5px;line-height:10.5px;font-size:8.5px;color:#f0f0f0;font-weight:bold;transform:scaleX(1.015);transform-origin:0 50%;">40</div><div style="left:143px;top:664.8px;width:20.6px;height:2.4px;background:#3a3a3a;"></div><div style="left:33px;top:680.4px;width:13.7px;height:28.4px;background:#c8e8a8;"></div><svg style="left:35.6px;top:682.8px;" width="9" height="10" viewBox="0 0 9 10"><path d="M2 4.4V2.6C2 0.6 5.6 0.4 6 2.4" fill="none" stroke="#5c6c4c" stroke-width="1.1"/><rect x="0.8" y="4.4" width="7" height="4.8" rx="0.6" fill="#5c6c4c"/><rect x="3.6" y="5.8" width="1.4" height="1.8" fill="#c8e8a8"/></svg><div style="left:50px;top:684.8px;width:46.2px;height:11.6px;background:#575757;border-radius:1px;"></div><div class="t" style="left:57.4px;top:685.55px;height:10.5px;line-height:10.5px;font-size:8.5px;color:#fafafa;font-weight:bold;transform:scaleX(1.017);transform-origin:0 50%;">M</div><div class="t" style="left:82.1px;top:685.55px;height:10.5px;line-height:10.5px;font-size:8.5px;color:#fafafa;font-weight:bold;transform:scaleX(1.023);transform-origin:0 50%;">S</div><div style="left:108px;top:684.8px;width:13.8px;height:11.6px;background:#575757;border-radius:1px;"></div><svg style="left:108px;top:684.8px;" width="13.8" height="11.6" viewBox="0 0 13.8 11.6"><path d="M1.4 5.8h2.8M9.6 5.8h2.8" stroke="#f8f8f8" stroke-width="1.3"/><rect x="4.4" y="3.8" width="5" height="4" fill="none" stroke="#f8f8f8" stroke-width="1.2"/></svg><div class="t" style="left:144.2px;top:685.8px;height:8.8px;line-height:8.8px;font-size:6.8px;color:#e0e0e0;transform:scaleX(0.874);transform-origin:0 50%;">−22 dB</div></div></div>
<div style="left:1178.4px;top:484.5px;width:11px;height:209.5px;background:#3a3a3a;"></div><div style="left:1178.4px;top:485px;width:11px;height:8.5px;background:#484848;"></div><div style="left:1178.4px;top:579.5px;width:11px;height:8.5px;background:#484848;"></div><div style="left:1178.4px;top:535.8px;width:11px;height:18px;background:#6c6c6c;"></div><div style="left:1178.4px;top:588.5px;width:11px;height:54px;background:#2d2d2d;"></div><svg style="left:1178.4px;top:485px;" width="11" height="210" viewBox="0 0 11 210"><path d="M3.4 5.6L5.5 3l2.1 2.6z" fill="#888"/><path d="M3.4 97.4l2.1 2.6 2.1-2.6z" fill="#888"/><path d="M1.6 109h7.8M1.6 116.6h7.8M5.5 109v7.6M3.8 111l1.7-1.8 1.7 1.8M3.8 114.6l1.7 1.8 1.7-1.8" fill="none" stroke="#e8e8e8" stroke-width="0.9"/><path d="M1.4 129.4h8.2M5.5 124.6v3.4M5.5 134.2v-3.4M4 126.6l1.5 1.6 1.5-1.6M4 132.2l1.5-1.6 1.5 1.6" fill="none" stroke="#e8e8e8" stroke-width="0.9"/><path d="M1.6 151.4l1.6-8 2.3 4 2.3-4 1.6 8z" fill="none" stroke="#f0f0f0" stroke-width="1.1"/></svg><div style="left:1178.4px;top:643px;width:11px;height:50px;background:#1e1e1e;"><div style="left:0;top:0px;width:11px;height:2.2px;background:rgba(255,255,255,0.030)"></div><div style="left:0;top:3.1px;width:11px;height:2.2px;background:rgba(255,255,255,0.049)"></div><div style="left:0;top:6.2px;width:11px;height:2.2px;background:rgba(255,255,255,0.067)"></div><div style="left:0;top:9.3px;width:11px;height:2.2px;background:rgba(255,255,255,0.083)"></div><div style="left:0;top:12.4px;width:11px;height:2.2px;background:rgba(255,255,255,0.097)"></div><div style="left:0;top:15.5px;width:11px;height:2.2px;background:rgba(255,255,255,0.108)"></div><div style="left:0;top:18.6px;width:11px;height:2.2px;background:rgba(255,255,255,0.116)"></div><div style="left:0;top:21.7px;width:11px;height:2.2px;background:rgba(255,255,255,0.120)"></div><div style="left:0;top:24.8px;width:11px;height:2.2px;background:rgba(255,255,255,0.120)"></div><div style="left:0;top:27.9px;width:11px;height:2.2px;background:rgba(255,255,255,0.116)"></div><div style="left:0;top:31px;width:11px;height:2.2px;background:rgba(255,255,255,0.108)"></div><div style="left:0;top:34.1px;width:11px;height:2.2px;background:rgba(255,255,255,0.097)"></div><div style="left:0;top:37.2px;width:11px;height:2.2px;background:rgba(255,255,255,0.083)"></div><div style="left:0;top:40.3px;width:11px;height:2.2px;background:rgba(255,255,255,0.067)"></div><div style="left:0;top:43.4px;width:11px;height:2.2px;background:rgba(255,255,255,0.049)"></div><div style="left:0;top:46.5px;width:11px;height:2.2px;background:rgba(255,255,255,0.030)"></div></div><div style="left:1181.4px;top:664.8px;width:5px;height:5px;background:#30d430;border-radius:50%;box-shadow:0 0 2px #30d430;"></div>
<!-- part_bottom -->
<div style="left:26.5px;top:694px;width:1163px;height:12px;background:#2d2d2d;"></div>
<div class="t" style="left:30px;top:694.4px;height:10px;line-height:10px;font-size:8px;color:#dcdcdc;transform:scaleX(0.985);transform-origin:0 50%;">Waveform</div>
<div style="left:71.8px;top:694px;width:41px;height:11.5px;background:#4a4a4a;"></div>
<div class="t" style="left:76.5px;top:694.4px;height:10px;line-height:10px;font-size:8px;color:#2cb5e8;transform:scaleX(0.989);transform-origin:0 50%;">Rainbow</div>
<svg style="left:117px;top:696.2px;" width="8" height="8" viewBox="0 0 8 8"><g transform="translate(4,4)"><rect x="-0.8" y="-3.8" width="1.6" height="7.6" fill="#e8e8e8" transform="rotate(0)"/><rect x="-0.8" y="-3.8" width="1.6" height="7.6" fill="#e8e8e8" transform="rotate(45)"/><rect x="-0.8" y="-3.8" width="1.6" height="7.6" fill="#e8e8e8" transform="rotate(90)"/><rect x="-0.8" y="-3.8" width="1.6" height="7.6" fill="#e8e8e8" transform="rotate(135)"/><circle r="2.6" fill="#e8e8e8"/><circle r="1.2" fill="#2d2d2d"/></g></svg>
<div style="left:129.5px;top:695.4px;width:51px;height:10px;background:#1e1e1e;"><div style="left:0px;top:0;width:2.8px;height:10px;background:rgba(255,255,255,0.040)"></div><div style="left:3.2px;top:0;width:2.8px;height:10px;background:rgba(255,255,255,0.082)"></div><div style="left:6.4px;top:0;width:2.8px;height:10px;background:rgba(255,255,255,0.121)"></div><div style="left:9.6px;top:0;width:2.8px;height:10px;background:rgba(255,255,255,0.158)"></div><div style="left:12.8px;top:0;width:2.8px;height:10px;background:rgba(255,255,255,0.189)"></div><div style="left:16px;top:0;width:2.8px;height:10px;background:rgba(255,255,255,0.213)"></div><div style="left:19.2px;top:0;width:2.8px;height:10px;background:rgba(255,255,255,0.230)"></div><div style="left:22.4px;top:0;width:2.8px;height:10px;background:rgba(255,255,255,0.239)"></div><div style="left:25.6px;top:0;width:2.8px;height:10px;background:rgba(255,255,255,0.239)"></div><div style="left:28.8px;top:0;width:2.8px;height:10px;background:rgba(255,255,255,0.230)"></div><div style="left:32px;top:0;width:2.8px;height:10px;background:rgba(255,255,255,0.213)"></div><div style="left:35.2px;top:0;width:2.8px;height:10px;background:rgba(255,255,255,0.189)"></div><div style="left:38.4px;top:0;width:2.8px;height:10px;background:rgba(255,255,255,0.158)"></div><div style="left:41.6px;top:0;width:2.8px;height:10px;background:rgba(255,255,255,0.121)"></div><div style="left:44.8px;top:0;width:2.8px;height:10px;background:rgba(255,255,255,0.082)"></div><div style="left:48px;top:0;width:2.8px;height:10px;background:rgba(255,255,255,0.040)"></div></div>
<div style="left:183px;top:695px;width:882px;height:11px;background:#434343;"></div>
<div style="left:183px;top:695px;width:8.5px;height:11px;background:#4c4c4c;"></div>
<svg style="left:183px;top:695px;" width="8.5" height="11" viewBox="0 0 8.5 11"><path d="M5.6 3.2v4.6L2.8 5.5z" fill="#8a8a8a"/></svg>
<div style="left:469px;top:696px;width:342px;height:9.5px;background:#6c6c6c;"></div>
<div style="left:1066px;top:695px;width:8.5px;height:11px;background:#4c4c4c;"></div>
<svg style="left:1066px;top:695px;" width="8.5" height="11" viewBox="0 0 8.5 11"><path d="M3 3.2v4.6l2.8-2.3z" fill="#8a8a8a"/></svg>
<svg style="left:1076px;top:695px;" width="62" height="11" viewBox="0 0 62 11"><circle cx="3.4" cy="5.6" r="1.3" fill="#f0f0f0"/><circle cx="8.4" cy="2.6" r="1.3" fill="#f0f0f0"/><circle cx="8.4" cy="8.6" r="1.3" fill="#f0f0f0"/><path d="M3.4 5.6l5-3M3.4 5.6l5 3" stroke="#f0f0f0" stroke-width="0.8"/><path d="M12.4 4.6h3.6l-1.8 2.6z" fill="#e0e0e0"/><path d="M20.6 3v5M22 3v5M27.4 3v5M28.8 3v5" stroke="#e0e0e0" stroke-width="0.8"/><rect x="23.2" y="3.2" width="3" height="4.6" fill="#e0e0e0"/><path d="M34.6 3v5M41.8 3v5" stroke="#e0e0e0" stroke-width="0.8"/><rect x="36" y="3.4" width="4.4" height="4.2" fill="none" stroke="#e0e0e0" stroke-width="0.8"/><rect x="47.6" y="3.4" width="7.4" height="4.2" fill="none" stroke="#f0f0f0" stroke-width="1.1"/></svg>
<div style="left:1137px;top:695.4px;width:51px;height:10px;background:#1e1e1e;"><div style="left:0px;top:0;width:2.8px;height:10px;background:rgba(255,255,255,0.040)"></div><div style="left:3.2px;top:0;width:2.8px;height:10px;background:rgba(255,255,255,0.082)"></div><div style="left:6.4px;top:0;width:2.8px;height:10px;background:rgba(255,255,255,0.121)"></div><div style="left:9.6px;top:0;width:2.8px;height:10px;background:rgba(255,255,255,0.158)"></div><div style="left:12.8px;top:0;width:2.8px;height:10px;background:rgba(255,255,255,0.189)"></div><div style="left:16px;top:0;width:2.8px;height:10px;background:rgba(255,255,255,0.213)"></div><div style="left:19.2px;top:0;width:2.8px;height:10px;background:rgba(255,255,255,0.230)"></div><div style="left:22.4px;top:0;width:2.8px;height:10px;background:rgba(255,255,255,0.239)"></div><div style="left:25.6px;top:0;width:2.8px;height:10px;background:rgba(255,255,255,0.239)"></div><div style="left:28.8px;top:0;width:2.8px;height:10px;background:rgba(255,255,255,0.230)"></div><div style="left:32px;top:0;width:2.8px;height:10px;background:rgba(255,255,255,0.213)"></div><div style="left:35.2px;top:0;width:2.8px;height:10px;background:rgba(255,255,255,0.189)"></div><div style="left:38.4px;top:0;width:2.8px;height:10px;background:rgba(255,255,255,0.158)"></div><div style="left:41.6px;top:0;width:2.8px;height:10px;background:rgba(255,255,255,0.121)"></div><div style="left:44.8px;top:0;width:2.8px;height:10px;background:rgba(255,255,255,0.082)"></div><div style="left:48px;top:0;width:2.8px;height:10px;background:rgba(255,255,255,0.040)"></div></div>
<div style="left:832px;top:708.8px;width:87.5px;height:12.6px;background:#646464;"></div>
<div style="left:921px;top:708.8px;width:88px;height:12.6px;background:#646464;"></div>
<div style="left:1010.2px;top:708.8px;width:58px;height:12.6px;background:#646464;"></div>
<div style="left:1069.4px;top:708.8px;width:87px;height:12.6px;background:#646464;"></div>
<div style="left:1162px;top:708.8px;width:26.5px;height:12.6px;background:#646464;"></div>
<svg style="left:836px;top:710.4px;" width="10" height="10" viewBox="0 0 10 10"><circle cx="5" cy="4.8" r="3.6" fill="#2cb5e8" opacity="0.85"/><path d="M5 0.8v8M2.8 0.8h4.4M2.8 8.8h4.4" stroke="#f4f4f4" stroke-width="1.1" fill="none"/></svg>
<div class="t" style="left:872.2px;top:710.3px;height:10px;line-height:10px;font-size:8px;color:#e4e4e4;transform:scaleX(1.014);transform-origin:0 50%;">59 s 552 ms</div>
<svg style="left:925px;top:710.2px;" width="10" height="10" viewBox="0 0 10 10"><circle cx="5" cy="5" r="3.4" fill="none" stroke="#2cb5e8" stroke-width="2.2"/><path d="M5 0.6v2M5 7.4v2M0.6 5h2M7.4 5h2" stroke="#f4f4f4" stroke-width="1.6"/></svg>
<div class="t" style="left:941.2px;top:710.3px;height:10px;line-height:10px;font-size:8px;color:#e4e4e4;transform:scaleX(1.013);transform-origin:0 50%;">1 mn 34 s 286 ms</div>
<svg style="left:1014.6px;top:710.6px;" width="9" height="9" viewBox="0 0 9 9"><circle cx="3.2" cy="3.2" r="2.2" fill="none" stroke="#e8e8e8" stroke-width="1"/><path d="M4.8 4.8l3 3" stroke="#e8e8e8" stroke-width="1.3"/></svg>
<div class="t" style="left:1030.2px;top:710.3px;height:10px;line-height:10px;font-size:8px;color:#e4e4e4;transform:scaleX(1.045);transform-origin:0 50%;">x 1: 1436</div>
<svg style="left:1073.4px;top:710.4px;" width="9" height="9" viewBox="0 0 9 9"><circle cx="4.4" cy="4.6" r="3.6" fill="none" stroke="#e0e0e0" stroke-width="0.8"/><path d="M4.4 3.8v3M4.4 2.2v0.8" stroke="#e0e0e0" stroke-width="0.9"/></svg>
<div class="t" style="left:1089.4px;top:710.3px;height:10px;line-height:10px;font-size:8px;color:#e4e4e4;transform:scaleX(1.030);transform-origin:0 50%;">118 ch 48 000 Hz</div>
<svg style="left:1162px;top:708.8px;" width="26.5" height="12.6" viewBox="0 0 26.5 12.6"><path d="M0 -4L1.1 -1.3 4 -1.2 1.7 0.6 2.5 3.4 0 1.8 -2.5 3.4 -1.7 0.6 -4 -1.2 -1.1 -1.3z" transform="translate(6.4,6.2) scale(0.85)" fill="#e0e0e0"/><circle cx="9.2" cy="8.6" r="1.5" fill="none" stroke="#e0e0e0" stroke-width="0.7"/><path d="M0 -4L1.1 -1.3 4 -1.2 1.7 0.6 2.5 3.4 0 1.8 -2.5 3.4 -1.7 0.6 -4 -1.2 -1.1 -1.3z" transform="translate(19.6,6.4) scale(1.05)" fill="#fafafa"/></svg>
<div style="left:17.3px;top:727px;width:1181.2px;height:0.7px;background:#2c2c2c;"></div>
<div style="left:0px;top:752.6px;width:1200px;height:1.4px;background:#151515;"></div>
<div style="left:153px;top:731.3px;width:160.5px;height:18px;background:#080c12;border-radius:3px;"></div>
<div class="t" style="left:156.6px;top:736.25px;height:10.5px;line-height:10.5px;font-size:8.5px;color:#f0f0f0;transform:scaleX(0.951);transform-origin:0 50%;-webkit-text-stroke:0.25px #f0f0f0;">Default</div>
<svg style="left:299.6px;top:737.5px;" width="8" height="7" viewBox="0 0 8 7"><path d="M0.4 0.6h7L3.9 6z" fill="#f0f0f0"/></svg>
<div style="left:317px;top:730.7px;width:92px;height:19.2px;background:#2a2a2a;border-radius:2px;"></div>
<div style="left:318px;top:731.3px;width:17px;height:18px;background:linear-gradient(#d8dee4,#c0c7ce);box-shadow:inset 0 0 0 0.6px #8c9094;"></div><svg style="left:318px;top:731.3px;" width="17" height="18" viewBox="0 0 17 18"><path d="M5.6 6.4v6.4l5-3.2z" fill="#1a1a1a"/><path d="M10.4 4v2M12.4 4v2" stroke="#1a1a1a" stroke-width="0.8"/></svg>
<div style="left:335.6px;top:731.3px;width:17.4px;height:18px;background:linear-gradient(#d8dee4,#c0c7ce);box-shadow:inset 0 0 0 0.6px #8c9094;"></div><svg style="left:335.6px;top:731.3px;" width="17.4" height="18" viewBox="0 0 17.4 18"><circle cx="8.8" cy="9.4" r="4.4" fill="none" stroke="#1a1a1a" stroke-width="0.9"/><path d="M8.8 6.6v3h2.4" fill="none" stroke="#1a1a1a" stroke-width="0.9"/></svg>
<div style="left:353.6px;top:731.3px;width:17.8px;height:18px;background:linear-gradient(#d8dee4,#c0c7ce);box-shadow:inset 0 0 0 0.6px #8c9094;"></div><svg style="left:353.6px;top:731.3px;" width="17.8" height="18" viewBox="0 0 17.8 18"><path d="M4.2 12.6c0-4 2.2-6.2 6-5.6" fill="none" stroke="#1a1a1a" stroke-width="1.7"/><path d="M10 5l4 3-4.4 2z" fill="#1a1a1a"/></svg>
<div style="left:372px;top:731.3px;width:18px;height:18px;background:linear-gradient(#d8dee4,#c0c7ce);box-shadow:inset 0 0 0 0.6px #8c9094;"></div><svg style="left:372px;top:731.3px;" width="18" height="18" viewBox="0 0 18 18"><path d="M4.6 6v6.8M6.8 6v6.8" stroke="#1a1a1a" stroke-width="1"/><path d="M8.8 6v6.8l5-3.4z" fill="#1a1a1a"/></svg>
<div style="left:390.6px;top:731.3px;width:17.4px;height:18px;background:linear-gradient(#d8dee4,#c0c7ce);box-shadow:inset 0 0 0 0.6px #8c9094;"></div><svg style="left:390.6px;top:731.3px;" width="17.4" height="18" viewBox="0 0 17.4 18"><rect x="4" y="6.4" width="5" height="5" fill="#1a1a1a"/><path d="M11 6v6.8M13.2 6v6.8" stroke="#1a1a1a" stroke-width="1"/></svg>
<div style="left:414.6px;top:730.7px;width:55.6px;height:19.2px;background:#2a2a2a;border-radius:2px;"></div>
<div style="left:415.6px;top:731.3px;width:17.2px;height:18px;background:linear-gradient(#d8dee4,#c0c7ce);box-shadow:inset 0 0 0 0.6px #8c9094;"></div><svg style="left:415.6px;top:731.3px;" width="17.2" height="18" viewBox="0 0 17.2 18"><path d="M4.4 6v6.8M13.2 6v6.8" stroke="#1a1a1a" stroke-width="1"/><path d="M6.4 6v6.8l5-3.4z" fill="#1a1a1a"/></svg>
<div style="left:433.4px;top:731.3px;width:17.6px;height:18px;background:linear-gradient(#d8dee4,#c0c7ce);box-shadow:inset 0 0 0 0.6px #8c9094;"></div><svg style="left:433.4px;top:731.3px;" width="17.6" height="18" viewBox="0 0 17.6 18"><path d="M5.4 6v6.8" stroke="#1a1a1a" stroke-width="1"/><path d="M7.6 6v6.8l5-3.4z" fill="#1a1a1a"/></svg>
<div style="left:451.6px;top:731.3px;width:17.6px;height:18px;background:linear-gradient(#d8dee4,#c0c7ce);box-shadow:inset 0 0 0 0.6px #8c9094;"></div><svg style="left:451.6px;top:731.3px;" width="17.6" height="18" viewBox="0 0 17.6 18"><path d="M12 6v6.8" stroke="#1a1a1a" stroke-width="1.2"/><path d="M5.6 6v6.8l5-3.4z" fill="#1a1a1a"/></svg>
<svg style="left:476.6px;top:736.7px;" width="10" height="8" viewBox="0 0 10 8"><path d="M0.8 0.8l3 3-3 3M5 0.8l3 3-3 3" fill="none" stroke="#f4f4f4" stroke-width="1.4"/></svg>
<div style="left:493.4px;top:730.7px;width:205px;height:19.2px;background:#2a2a2a;border-radius:2px;"></div>
<div style="left:494.4px;top:731.3px;width:17px;height:18px;background:linear-gradient(#d8dee4,#c0c7ce);box-shadow:inset 0 0 0 0.6px #8c9094;"></div><svg style="left:494.4px;top:731.3px;" width="17" height="18" viewBox="0 0 17 18"><path d="M5.6 6v6.8" stroke="#1a1a1a" stroke-width="1.4"/><path d="M12.4 6v6.8l-5.4-3.4z" fill="#1a1a1a"/></svg>
<div style="left:512px;top:731.3px;width:17.6px;height:18px;background:linear-gradient(#d8dee4,#c0c7ce);box-shadow:inset 0 0 0 0.6px #8c9094;"></div><svg style="left:512px;top:731.3px;" width="17.6" height="18" viewBox="0 0 17.6 18"><path d="M12.2 6v6.8" stroke="#1a1a1a" stroke-width="1.4"/><path d="M5.4 6v6.8l5.4-3.4z" fill="#1a1a1a"/></svg>
<div style="left:530.4px;top:731.3px;width:27px;height:18px;background:linear-gradient(#d8dee4,#c0c7ce);box-shadow:inset 0 0 0 0.6px #8c9094;"></div><svg style="left:530.4px;top:731.3px;" width="27" height="18" viewBox="0 0 27 18"><path d="M13.4 6.2v6.4l-4.8-3.2zM18.6 6.2v6.4l-4.8-3.2z" fill="#1a1a1a"/></svg>
<div style="left:558px;top:731.3px;width:27.6px;height:18px;background:linear-gradient(#d8dee4,#c0c7ce);box-shadow:inset 0 0 0 0.6px #8c9094;"></div><svg style="left:558px;top:731.3px;" width="27.6" height="18" viewBox="0 0 27.6 18"><path d="M9.4 6.2v6.4l4.8-3.2zM14.6 6.2v6.4l4.8-3.2z" fill="#1a1a1a"/></svg>
<div style="left:586.2px;top:731.3px;width:27.4px;height:18px;background:linear-gradient(#12a0e4,#0c8ed4);box-shadow:inset 0 0 0 0.6px #8c9094;"></div><svg style="left:586.2px;top:731.3px;" width="27.4" height="18" viewBox="0 0 27.4 18"><path d="M9 8.8c0-1.6 2-2.6 5-2.6s5 1 5 2.6-1.6 2.4-4 2.6" fill="none" stroke="#0a2840" stroke-width="1.3"/><path d="M15.6 9.6l-2.6 1.8 2.6 1.8z" fill="#0a2840"/><path d="M9 8.8c0 1 0.8 1.8 2.4 2.2" fill="none" stroke="#0a2840" stroke-width="1.3"/></svg>
<div style="left:614.2px;top:731.3px;width:27.4px;height:18px;background:linear-gradient(#d8dee4,#c0c7ce);box-shadow:inset 0 0 0 0.6px #8c9094;"></div><svg style="left:614.2px;top:731.3px;" width="27.4" height="18" viewBox="0 0 27.4 18"><rect x="11" y="6.4" width="5.6" height="5.6" fill="#1a1a1a"/></svg>
<div style="left:642.2px;top:731.3px;width:27.6px;height:18px;background:linear-gradient(#24e024,#18cc18);box-shadow:inset 0 0 0 0.6px #8c9094;"></div><svg style="left:642.2px;top:731.3px;" width="27.6" height="18" viewBox="0 0 27.6 18"><path d="M11.4 5.8v7l6-3.5z" fill="#0a1a0a"/></svg>
<div style="left:670.4px;top:731.3px;width:27px;height:18px;background:linear-gradient(#d8dee4,#c0c7ce);box-shadow:inset 0 0 0 0.6px #8c9094;"></div><svg style="left:670.4px;top:731.3px;" width="27" height="18" viewBox="0 0 27 18"><circle cx="13.6" cy="9.3" r="2.9" fill="#1a1a1a"/></svg>
<div style="left:703.8px;top:730.7px;width:28.6px;height:19.2px;background:#2a2a2a;border-radius:2px;"></div>
<div style="left:704.8px;top:731.3px;width:26.6px;height:18px;background:linear-gradient(#d8dee4,#c0c7ce);box-shadow:inset 0 0 0 0.6px #8c9094;"></div><svg style="left:704.8px;top:731.3px;" width="26.6" height="18" viewBox="0 0 26.6 18"><rect x="9" y="4.8" width="9" height="8.6" fill="none" stroke="#444" stroke-width="0.8"/><path d="M9 6.8h9" stroke="#444" stroke-width="0.8"/><path d="M12.2 8.2v4l3.2-2z" fill="#333"/></svg>
<div style="left:738px;top:731.3px;width:158.6px;height:18px;background:#080c12;border-radius:3px;"></div>
<div class="t" style="left:747.4px;top:734.4px;height:13px;line-height:13px;font-size:11px;color:#fafafa;font-weight:bold;transform:scaleX(1.146);transform-origin:0 50%;">00 h 00 mn 44 s 085 ms</div>
<div style="left:902px;top:731.3px;width:49.6px;height:18px;background:#080c12;border-radius:2px;"></div>
<div class="t" style="left:905.6px;top:735.95px;height:9.5px;line-height:9.5px;font-size:7.5px;color:#f0f0f0;transform:scaleX(1.055);transform-origin:0 50%;">7.1.4</div>
<svg style="left:941.6px;top:737.5px;" width="8" height="7" viewBox="0 0 8 7"><path d="M0.4 0.6h6.4L3.6 6z" fill="#f0f0f0"/></svg>
<div style="left:958px;top:731.3px;width:104.4px;height:18px;background:#080c12;border-radius:3px;"></div>
<div style="left:960px;top:733.3px;width:22px;height:14px;background:#06d806;"></div>
<div class="t" style="left:999.8px;top:735.95px;height:9.5px;line-height:9.5px;font-size:7.5px;color:#f0f0f0;font-weight:bold;transform:scaleX(1.030);transform-origin:0 50%;">22 %</div>
</div>
</body></html>
